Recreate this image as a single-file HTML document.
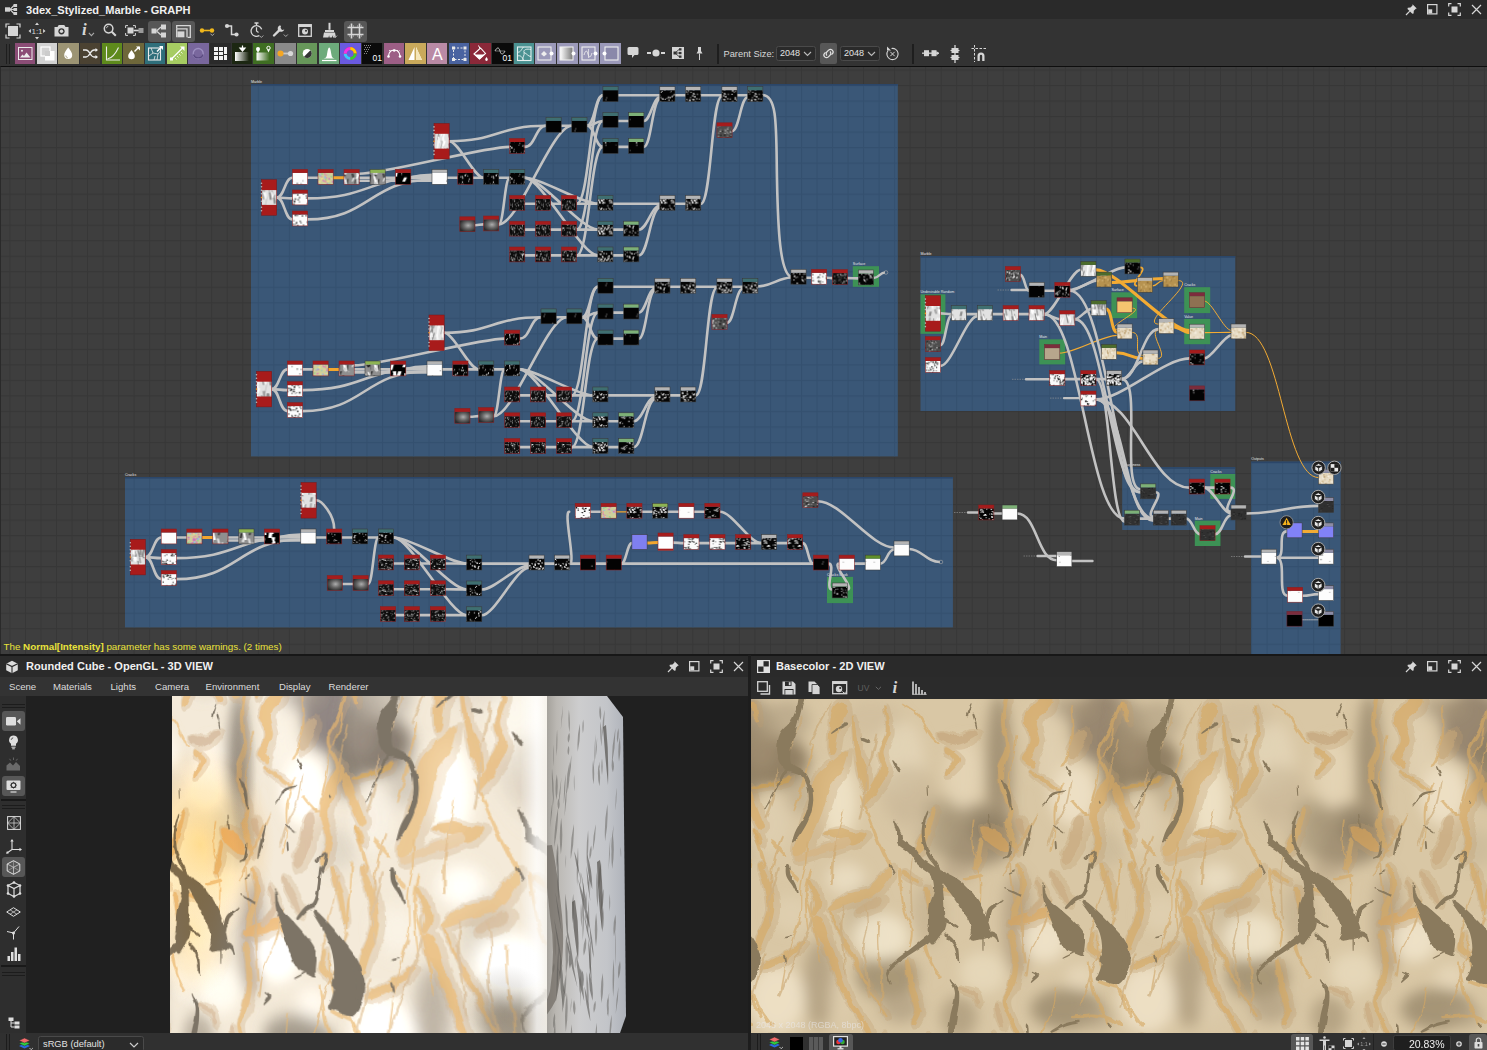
<!DOCTYPE html>
<html><head><meta charset="utf-8"><title>3dex_Stylized_Marble</title>
<style>
html,body{margin:0;padding:0;background:#2b2b2b;overflow:hidden}
body{width:1487px;height:1050px;position:relative;font-family:"Liberation Sans","DejaVu Sans",sans-serif;color:#e6e6e6;font-size:11px}
#titlebar{position:absolute;left:0;top:0;width:1487px;height:19px;background:#2a2a2a}
#tb1{position:absolute;left:0;top:19px;width:1487px;height:47px;background:#333}
#graphwrap{position:absolute;left:0;top:65.5px;width:1487px;height:588.5px;overflow:hidden;border-top:1.2px solid #0e0e0e;border-left:1.2px solid #2a2a2a;box-sizing:border-box}
#graphwrap svg{display:block;margin-top:-0.7px;margin-left:-1.2px}
.fl{font-size:3.6px;fill:#e8e8e8;font-family:"Liberation Sans",sans-serif}
.warn{font-size:9.8px;fill:#e9e23a;font-family:"Liberation Sans",sans-serif}
.ttl{position:absolute;top:0.5px;height:19px;line-height:19px;font-weight:bold;font-size:11.05px;color:#f0f0f0;white-space:nowrap}
.hl{position:absolute;background:#575757;border-radius:3px}
#tb1 svg{overflow:visible}
.cb{position:absolute;top:24px;width:20.5px;height:21px}
.cb svg{display:block}
.combo{position:absolute;box-sizing:border-box;border:1px solid #4a4a4a;border-radius:2.5px;background:#2a2a2a;font-size:9.3px;color:#e2e2e2;line-height:13px}
.combo span{position:absolute;left:4px;top:0}
#sep1{position:absolute;left:0;top:654px;width:1487px;height:1.5px;background:#171717}
#lp{position:absolute;left:0;top:655.5px;width:748px;height:394.5px;background:#2b2b2b}
#rp{position:absolute;left:751px;top:655.5px;width:736px;height:394.5px;background:#2b2b2b}
#vsep{position:absolute;left:748px;top:655px;width:3px;height:395px;background:#1d1d1d}
.ptitle{position:absolute;left:0;top:0;height:21px;background:#2a2a2a}
.ptitle .ttl{height:19px}
#menubar{position:absolute;left:0;top:21px;width:748px;height:19.5px;background:#333}
#menubar span{position:absolute;top:4px;font-size:9.6px;color:#dcdcdc;line-height:12px;white-space:nowrap}
#vp3d{position:absolute;left:26px;top:40.5px;width:722px;height:337px;background:#202020;overflow:hidden}
#ltb{position:absolute;left:0;top:40.5px;width:26px;height:337px;background:#2e2e2e}
#ltb svg{overflow:visible}
.grip{position:absolute;left:2px;width:23px;height:1.3px;background:#1c1c1c}
.vgrip{position:absolute;top:1px;width:1.3px;height:17px;background:#1c1c1c}
.bbar{position:absolute;top:377.5px;height:17px;background:#303030;overflow:hidden}
#tb2d{position:absolute;left:0;top:21px;width:736px;height:22.5px;background:#2b2b2b}
#vp2d{position:absolute;left:0;top:43.5px;width:736px;height:334px;background:#dcc9a8;overflow:hidden}
#res{position:absolute;left:5px;bottom:3px;font-size:9px;color:rgba(235,235,240,0.55);white-space:nowrap}

</style></head><body>
<div id="titlebar">
<svg style="position:absolute;left:4px;top:3px" width="14" height="13" viewBox="0 0 14 13" ><path d="M6 6.5L10 2.5M6 6.5H10.5M6 6.5L10 10.5" stroke="#d0d0d0" stroke-width="1.2" fill="none"/><rect x="1" y="4.3" width="5" height="4.4" fill="#d0d0d0"/><rect x="9.5" y="1" width="3.6" height="3" fill="#d0d0d0"/><rect x="9.5" y="5" width="3.6" height="3" fill="#d0d0d0"/><rect x="9.5" y="9" width="3.6" height="3" fill="#d0d0d0"/></svg>
<span class="ttl" style="left:26px">3dex_Stylized_Marble - GRAPH</span>
<svg style="position:absolute;left:1405px;top:3px" width="13" height="13" viewBox="0 0 13 13" ><path d="M7.500 1.200l4.300 4.300l-1 0.300l-2 2l-0.200 2.700l-1.300 0.300l-4.800-4.800l0.300-1.300l2.700-0.200l2-2z" fill="#d6d6d6"/><path d="M4.800 8.200L1 12" stroke="#d6d6d6" stroke-width="1.200"/></svg><svg style="position:absolute;left:1427px;top:4px" width="11" height="11" viewBox="0 0 11 11" ><rect x="0.600" y="0.600" width="9.300" height="9.300" fill="none" stroke="#d6d6d6" stroke-width="1.200"/><rect x="1.200" y="5.300" width="4" height="4" fill="#d6d6d6"/></svg><svg style="position:absolute;left:1448px;top:3px" width="13" height="13" viewBox="0 0 13 13" ><rect x="3.500" y="3.500" width="6" height="6" fill="#d6d6d6"/><path d="M0.700 3.500V0.700H3.500M9.500 0.700h2.800V3.500M12.300 9.500v2.800H9.500M3.500 12.300H0.700V9.500" stroke="#d6d6d6" stroke-width="1.200" fill="none"/></svg><svg style="position:absolute;left:1471px;top:4px" width="11" height="11" viewBox="0 0 11 11" ><path d="M1 1l9 9M10 1l-9 9" stroke="#d6d6d6" stroke-width="1.200"/></svg>
</div>
<div id="tb1">
<div class="hl" style="left:147.5px;top:2px;width:23px;height:21px"></div>
<div class="hl" style="left:172px;top:2px;width:23px;height:21px"></div>
<div class="hl" style="left:344px;top:2px;width:23px;height:21px"></div>
<svg style="position:absolute;left:5px;top:4px" width="16" height="16" viewBox="0 0 16 16" ><rect x="3" y="3" width="10" height="10" fill="#d6d6d6"/><path d="M1 4.5V1H4.5M11.5 1H15V4.5M15 11.5V15H11.5M4.5 15H1V11.5" stroke="#d6d6d6" stroke-width="1.2" fill="none"/></svg>
<svg style="position:absolute;left:28px;top:3px" width="18" height="18" viewBox="0 0 18 18" ><path d="M9 0.5l2 2.4h-4zM9 17.5l2 -2.4h-4zM0.5 9l2.4 -2v4zM17.5 9l-2.4 -2v4z" fill="#d6d6d6"/><text x="9" y="12" font-size="8" text-anchor="middle" fill="#d6d6d6" font-family="Liberation Sans,sans-serif">1:1</text></svg>
<svg style="position:absolute;left:54px;top:5px" width="15" height="13" viewBox="0 0 15 13" ><path d="M0.5 3h3l1.2-2h5.6l1.2 2h3v9.5h-14z" fill="#d6d6d6"/><circle cx="7.5" cy="7.3" r="3.1" fill="#333"/><circle cx="7.5" cy="7.3" r="1.7" fill="#d6d6d6"/></svg>
<span style="position:absolute;left:82px;top:1px;font:italic bold 17px 'Liberation Serif',serif;color:#d6d6d6">i</span>
<svg style="position:absolute;left:88px;top:13px" width="7" height="5" viewBox="0 0 7 5" ><path d="M0.8 0.8l2.6 2.8l2.6-2.8" stroke="#aaa" stroke-width="1.1" fill="none"/></svg>
<svg style="position:absolute;left:103px;top:4px" width="14" height="14" viewBox="0 0 14 14" ><circle cx="5.6" cy="5.6" r="4.3" stroke="#d6d6d6" stroke-width="1.5" fill="none"/><path d="M8.8 8.8L12.8 12.8" stroke="#d6d6d6" stroke-width="2"/><path d="M3.4 5.2a2.4 2.4 0 0 1 2-2" stroke="#d6d6d6" stroke-width="0.8" fill="none"/></svg>
<svg style="position:absolute;left:125px;top:6px" width="19" height="11" viewBox="0 0 19 11" ><rect x="2.5" y="2.5" width="6" height="6" fill="#d6d6d6"/><path d="M0.6 3V0.6H3M8 0.6h2.4V3M10.4 8v2.4H8M3 10.4H0.6V8" stroke="#d6d6d6" fill="none" stroke-width="1"/><path d="M8.5 5.5H14" stroke="#d6d6d6" stroke-width="1.6"/><rect x="13.5" y="3" width="5" height="5" fill="#9a9a9a"/></svg>
<svg style="position:absolute;left:151px;top:5px" width="16" height="14" viewBox="0 0 16 14" ><rect x="0.5" y="4.5" width="5" height="5" fill="#d6d6d6"/><rect x="10" y="0.5" width="5" height="5" fill="#d6d6d6"/><rect x="10" y="8.5" width="5" height="5" fill="#d6d6d6"/><path d="M5.5 7L10 3M5.5 7L10 11" stroke="#d6d6d6" stroke-width="1.3"/></svg>
<svg style="position:absolute;left:176px;top:6px" width="15" height="13" viewBox="0 0 15 13" ><path d="M0.7 3.4V0.7H14.3V12.3H11.6" stroke="#d6d6d6" fill="none" stroke-width="1.3"/><path d="M0.7 12.3V3.8H11V12.3" stroke="#d6d6d6" fill="none" stroke-width="1.3"/><rect x="1.4" y="6.4" width="7" height="5.9" fill="#d6d6d6"/></svg>
<svg style="position:absolute;left:199px;top:8px" width="18" height="10" viewBox="0 0 18 10" ><path d="M3 3.5H13" stroke="#f0b81c" stroke-width="1.6"/><circle cx="3" cy="3.5" r="2.2" fill="#f0b81c"/><circle cx="13" cy="3.5" r="2.2" fill="#f0b81c"/><path d="M11.5 6.7l1.8 1.9l1.8-1.9" stroke="#aaa" stroke-width="1" fill="none"/></svg>
<svg style="position:absolute;left:224px;top:4px" width="16" height="15" viewBox="0 0 16 15" ><path d="M3 3H7.5V11.5H12.5" stroke="#d6d6d6" stroke-width="1.5" fill="none"/><circle cx="3" cy="3" r="2.1" fill="#d6d6d6"/><circle cx="12.5" cy="11.5" r="2.1" fill="#d6d6d6"/></svg>
<svg style="position:absolute;left:249px;top:3px" width="16" height="17" viewBox="0 0 16 17" ><path d="M5.5 1h4M7.5 1v2" stroke="#d6d6d6" stroke-width="1.3"/><path d="M7.5 5.2V9l2 1.4" stroke="#d6d6d6" stroke-width="1.2" fill="none"/><circle cx="7.5" cy="9" r="5.4" stroke="#d6d6d6" stroke-width="1.3" fill="none" stroke-dasharray="26 8" transform="rotate(60 7.5 9)"/><path d="M10.3 13.5l2 2l2-2" stroke="#aaa" stroke-width="1" fill="none"/></svg>
<svg style="position:absolute;left:272px;top:4px" width="18" height="15" viewBox="0 0 18 15" ><path d="M2 12.5L8.2 6.3" stroke="#d6d6d6" stroke-width="2.4" stroke-linecap="round"/><path d="M8 2.2a3.4 3.4 0 1 0 4.3 4.3l-2.2 0.6l-1.7-1.7l0.6-2.2a3.4 3.4 0 0 0 -1 -1z" fill="#d6d6d6"/><circle cx="10.2" cy="4.4" r="3.5" fill="none"/><path d="M11.8 11.5l2 2l2-2" stroke="#aaa" stroke-width="1" fill="none"/></svg>
<svg style="position:absolute;left:298px;top:5px" width="14" height="13" viewBox="0 0 14 13" ><rect x="0.7" y="0.7" width="12.6" height="11.6" stroke="#d6d6d6" fill="none" stroke-width="1.3"/><rect x="0.7" y="0.7" width="12.6" height="2.3" fill="#d6d6d6"/><circle cx="7" cy="7.6" r="3" fill="#d6d6d6"/><circle cx="8" cy="6.8" r="1" fill="#333"/></svg>
<svg style="position:absolute;left:322px;top:3px" width="17" height="17" viewBox="0 0 17 17" ><path d="M6.5 0.8h2v7h-2z" fill="#d6d6d6"/><path d="M3 8h9v2h-9zM2 10.6h11l1 5h-3l-0.6-2.4l-0.6 2.4h-2.2l-0.5-2.4l-0.6 2.4H1z" fill="#d6d6d6"/><path d="M11.5 13.6l1.8 1.9l1.8-1.9" stroke="#aaa" stroke-width="1" fill="none"/></svg>
<svg style="position:absolute;left:347px;top:4px" width="17" height="16" viewBox="0 0 17 16" ><path d="M4.5 0.5V15.5M12.5 0.5V15.5M0.5 4.5H16.5M0.5 11.5H16.5" stroke="#d6d6d6" stroke-width="1.6" fill="none"/><path d="M2 3l5 0M10 3h5M2 13h5M10 13h5" stroke="#d6d6d6" stroke-width="0.8" stroke-dasharray="1 1"/></svg>
<div style="position:absolute;left:6px;top:25px;width:1.4px;height:20px;background:#1e1e1e"></div><div style="position:absolute;left:8.8px;top:25px;width:1.4px;height:20px;background:#1e1e1e"></div>
<div class="cb" style="left:14.8px;background:#8b4d76"><svg width="20.500" height="21" viewBox="0 0 20.500 21"><rect x="3.5" y="4.5" width="13.5" height="12" fill="none" stroke="#ececec" stroke-width="1"/><path d="M5 14.5l2.5-3l1.5 1.5l2.5-3.5l4 5z" fill="#ececec"/><circle cx="7" cy="7.8" r="1" fill="#ececec"/></svg></div>
<div class="cb" style="left:36.5px;background:#d2d2d2"><svg width="20.500" height="21" viewBox="0 0 20.500 21"><rect x="4" y="4" width="9" height="9" fill="none" stroke="#fff" stroke-width="1.2"/><rect x="8" y="8" width="9.5" height="9.5" fill="#fff"/><rect x="8" y="8" width="5" height="5" fill="#ccc"/></svg></div>
<div class="cb" style="left:58.2px;background:#9c9474"><svg width="20.500" height="21" viewBox="0 0 20.500 21"><path d="M10.2 4.5c2.2 3 4 5 4 7.5a4 4 0 0 1 -8 0c0-2.500 1.800-4.500 4-7.500z" fill="#fff"/><path d="M7.800 12.500a2.500 2.500 0 0 0 2 2.400" stroke="#9c9474" fill="none" stroke-width="0.8"/></svg></div>
<div class="cb" style="left:79.9px;background:#4b4232"><svg width="20.500" height="21" viewBox="0 0 20.500 21"><path d="M3 7h3c4 0 4 7 8 7h3M3 14h3c4 0 4-7 8-7h3" stroke="#ececec" fill="none" stroke-width="1.300"/><path d="M15.500 5l2.500 2l-2.500 2zM15.500 12l2.500 2l-2.500 2z" fill="#ececec"/></svg></div>
<div class="cb" style="left:101.6px;background:#5e8a1c"><svg width="20.500" height="21" viewBox="0 0 20.500 21"><path d="M4.500 3.500V17H18" stroke="#ececec" fill="none" stroke-width="1.100"/><path d="M5.500 16c5-1 8-5 11-11.500" stroke="#ececec" fill="none" stroke-width="1.100"/></svg></div>
<div class="cb" style="left:123.2px;background:#6e673a"><svg width="20.500" height="21" viewBox="0 0 20.500 21"><path d="M8.500 7c1.800 2.500 3.300 4 3.300 6a3.300 3.300 0 0 1 -6.600 0c0-2 1.500-3.500 3.300-6z" fill="#fff"/><path d="M11.500 8.500L16 4" stroke="#fff" stroke-width="1.500"/><path d="M13 3.500h4v4z" fill="#fff"/></svg></div>
<div class="cb" style="left:144.9px;background:#2f6f7b"><svg width="20.500" height="21" viewBox="0 0 20.500 21"><rect x="3.500" y="5" width="12" height="12" fill="none" stroke="#ececec" stroke-width="1.100"/><path d="M6 5l2 5l-4 3M8 10l5 1l2.500-3M13 11l-1 6M9 17l1-4" stroke="#ececec" stroke-width="0.800" fill="none"/><path d="M12 8.500L17 3.500" stroke="#fff" stroke-width="1.500"/><path d="M14 3h4v4z" fill="#fff"/></svg></div>
<div class="cb" style="left:166.6px;background:#a6cc62"><svg width="20.500" height="21" viewBox="0 0 20.500 21"><path d="M4.500 16L16 4.500" stroke="#fff" stroke-width="1.300"/><path d="M13 3.500h4.500v4.500z" fill="#fff"/><rect x="3" y="14.500" width="3" height="3" fill="#fff"/><path d="M8 15l1.500 1.500M10 13l1.500 1.500M12 11l1.500 1.500M14 9l1.500 1.500" stroke="#fff" stroke-width="0.800"/></svg></div>
<div class="cb" style="left:188.3px;background:#79679d"><svg width="20.500" height="21" viewBox="0 0 20.500 21"><circle cx="10.200" cy="10.500" r="5" fill="none" stroke="#9d8fc0" stroke-width="1.300"/><path d="M5.500 11.500a5 5 0 0 0 9.500 0" stroke="#5a4a80" fill="none" stroke-width="1.300"/></svg></div>
<div class="cb" style="left:210.0px;background:#2a2a2a"><svg width="20.500" height="21" viewBox="0 0 20.500 21"><path d="M4 4h4v4h-4zM9 4h4v4h-4zM14 4h3v7h-3zM4 9h4v3h-4zM9 9h4v3h-4zM4 13h4v4h-4zM9 13h4v4h-4zM14 12h3v5h-3z" fill="#f2f2f2"/></svg></div>
<div class="cb" style="left:231.7px;background:#1c2712"><svg width="20.500" height="21" viewBox="0 0 20.500 21"><defs><linearGradient id="gg1" x1="0" x2="1"><stop offset="0" stop-color="#fff"/><stop offset="1" stop-color="#1c2712"/></linearGradient></defs><rect x="3" y="9" width="14" height="9" fill="url(#gg1)"/><path d="M10.500 2.500v4M8 5l2.500 3l2.500-3z" stroke="#fff" stroke-width="1.200" fill="#fff"/></svg></div>
<div class="cb" style="left:253.4px;background:#3f6e22"><svg width="20.500" height="21" viewBox="0 0 20.500 21"><defs><linearGradient id="gg2" x1="0" x2="1"><stop offset="0" stop-color="#fff"/><stop offset="1" stop-color="#3f6e22"/></linearGradient></defs><rect x="3.500" y="9.500" width="13" height="8" fill="url(#gg2)"/><circle cx="5" cy="6" r="2" fill="#fff"/><path d="M5 10l-1.500-3h3z" fill="#fff"/><circle cx="15.500" cy="5" r="1.700" fill="none" stroke="#fff" stroke-width="1"/><path d="M15.500 9.500l-1.500-3h3z" fill="#fff"/></svg></div>
<div class="cb" style="left:275.1px;background:#8a8a8a"><svg width="20.500" height="21" viewBox="0 0 20.500 21"><path d="M5 10.500H16" stroke="#c9c9c9" stroke-width="1.800"/><circle cx="5.500" cy="10.500" r="3" fill="#f5a623"/><circle cx="15.500" cy="10.500" r="2.600" fill="#d8d8d8"/></svg></div>
<div class="cb" style="left:296.8px;background:#67975a"><svg width="20.500" height="21" viewBox="0 0 20.500 21"><circle cx="10.200" cy="10.500" r="4.500" fill="#fff"/><path d="M7 13.700a4.500 4.500 0 0 0 6.400-6.400z" fill="#333"/></svg></div>
<div class="cb" style="left:318.5px;background:#6dab7b"><svg width="20.500" height="21" viewBox="0 0 20.500 21"><path d="M3.500 15.500c3 0 4-1 4.500-4c0.500-3 1-7 2.200-7s1.700 4 2.200 7c0.500 3 1.500 4 4.500 4z" fill="#fff"/><path d="M3 17.500h14.500" stroke="#fff" stroke-width="1.200"/></svg></div>
<div class="cb" style="left:340.2px;background:#6a5ae0"><svg width="20.500" height="21" viewBox="0 0 20.500 21"><circle cx="10.200" cy="10.500" r="5" fill="none" stroke="#e33" stroke-width="3"/><path d="M10.200 5.500a5 5 0 0 1 5 5" stroke="#fc0" stroke-width="3" fill="none"/><path d="M15.200 10.500a5 5 0 0 1 -5 5" stroke="#3c3" stroke-width="3" fill="none"/><path d="M10.200 15.500a5 5 0 0 1 -5-5" stroke="#3cf" stroke-width="3" fill="none"/><path d="M5.200 10.500a5 5 0 0 1 5-5" stroke="#e3e" stroke-width="3" fill="none"/></svg></div>
<div class="cb" style="left:361.8px;background:#0b0b0b"><svg width="20.500" height="21" viewBox="0 0 20.500 21"><path d="M2 2l1 1M4 2l1 1M6 2l1 1M8 2l1 1M3 4l1 1M5 4l1 1M7 4l1 1M2 6l1 1M4 6l1 1M6 6l1 1M3 8l1 1M5 8l1 1M2 10l1 1M4 10l1 1" stroke="#aaa" stroke-width="0.800"/><text x="10.500" y="18" font-size="8.500" fill="#fff" font-family="Liberation Sans,sans-serif">01</text></svg></div>
<div class="cb" style="left:383.5px;background:#9d5f86"><svg width="20.500" height="21" viewBox="0 0 20.500 21"><path d="M4.500 13c1-8 10.500-8 11.500 0" stroke="#fff" fill="none" stroke-width="1.100"/><path d="M5 7.500h10.500" stroke="#fff" stroke-width="0.800" stroke-dasharray="1.500 1"/><circle cx="4.500" cy="13.500" r="1.300" fill="#fff"/><circle cx="16" cy="13.500" r="1.300" fill="#fff"/><circle cx="10.200" cy="7.500" r="1.300" fill="#fff"/></svg></div>
<div class="cb" style="left:405.2px;background:#c9a95b"><svg width="20.500" height="21" viewBox="0 0 20.500 21"><path d="M9.500 4v13h-6zM11 4v13h6z" fill="#fff"/><path d="M11 4v13h6z" fill="#f5e6b8"/></svg></div>
<div class="cb" style="left:426.9px;background:#b98aa5"><svg width="20.500" height="21" viewBox="0 0 20.500 21"><text x="10.300" y="17" font-size="16" text-anchor="middle" fill="#fff" font-family="Liberation Sans,sans-serif">A</text></svg></div>
<div class="cb" style="left:448.6px;background:#4a63a0"><svg width="20.500" height="21" viewBox="0 0 20.500 21"><rect x="4.500" y="5" width="11.500" height="11.500" fill="none" stroke="#e8e8e8" stroke-width="1" stroke-dasharray="2 1.500"/><rect x="3" y="3.500" width="3" height="3" fill="#e8e8e8"/><rect x="14.500" y="3.500" width="3" height="3" fill="#e8e8e8"/><rect x="3" y="15" width="3" height="3" fill="#e8e8e8"/><rect x="14.500" y="15" width="3" height="3" fill="#e8e8e8"/></svg></div>
<div class="cb" style="left:470.3px;background:#8b2839"><svg width="20.500" height="21" viewBox="0 0 20.500 21"><path d="M4 11l6.500-6l5 5.500l-6 5.500z" fill="none" stroke="#fff" stroke-width="1.100"/><path d="M4.500 11.500h10.500l-5.500 5z" fill="#fff"/><path d="M10 5.500L8.500 2.500" stroke="#fff" stroke-width="1"/><path d="M16.500 14c0.800 1.200 1.300 1.800 1.300 2.600a1.300 1.300 0 0 1 -2.600 0c0-0.800 0.500-1.400 1.300-2.600z" fill="#fff"/></svg></div>
<div class="cb" style="left:492.0px;background:#0a0a0a"><svg width="20.500" height="21" viewBox="0 0 20.500 21"><path d="M3 8c2-4 4-4 5 0s3 4 5 0" stroke="#ddd" fill="none" stroke-width="0.900"/><path d="M3 8h10" stroke="#aaa" stroke-width="0.600"/><text x="10.500" y="18" font-size="8.500" fill="#fff" font-family="Liberation Sans,sans-serif">01</text></svg></div>
<div class="cb" style="left:513.7px;background:#4b9292"><svg width="20.500" height="21" viewBox="0 0 20.500 21"><rect x="3.500" y="4" width="13.500" height="13.500" fill="none" stroke="#e6f0f0" stroke-width="1.100"/><path d="M3.500 9c3 1 4-3 6-5M9 17.500c-1-4 2-5 1-8s3-4 7-3M3.500 13c3-1 5 1 6 4.500M10 9.500c3 1 4 4 7 4" stroke="#e6f0f0" fill="none" stroke-width="0.900"/></svg></div>
<div class="cb" style="left:535.4px;background:#9b99b9"><svg width="20.500" height="21" viewBox="0 0 20.500 21"><rect x="3" y="4" width="13" height="13" fill="none" stroke="#eee" stroke-width="1.100"/><circle cx="16.500" cy="10.500" r="2" fill="#fff"/><path d="M6 11l3-3l3 3l-3 2.500z" fill="#eee"/></svg></div>
<div class="cb" style="left:557.0px;background:#9b99b9"><svg width="20.500" height="21" viewBox="0 0 20.500 21"><defs><linearGradient id="gg3" x1="0" x2="1"><stop offset="0" stop-color="#fff"/><stop offset="1" stop-color="#777"/></linearGradient></defs><rect x="3" y="4" width="13" height="13" fill="url(#gg3)" stroke="#eee" stroke-width="1.100"/><circle cx="16.500" cy="10.500" r="2" fill="#fff"/></svg></div>
<div class="cb" style="left:578.7px;background:#9b99b9"><svg width="20.500" height="21" viewBox="0 0 20.500 21"><rect x="3" y="4" width="13" height="13" fill="none" stroke="#eee" stroke-width="1.100"/><circle cx="16.500" cy="10.500" r="2" fill="#fff"/><path d="M5 12c1.500-5 3-5 4-1s2.500 4 4-1" stroke="#eee" fill="none" stroke-width="0.900"/><path d="M9.500 6v9" stroke="#eee" stroke-width="0.700"/></svg></div>
<div class="cb" style="left:600.4px;background:#9b99b9"><svg width="20.500" height="21" viewBox="0 0 20.500 21"><rect x="5" y="4" width="13" height="13" fill="#8a88aa" stroke="#eee" stroke-width="1.100"/><circle cx="4.500" cy="10.500" r="2" fill="#fff"/></svg></div>
<svg style="position:absolute;left:626px;top:27px" width="14" height="14" viewBox="0 0 14 14" ><path d="M1.500 2.500a1.500 1.500 0 0 1 1.500-1.500h8a1.500 1.500 0 0 1 1.500 1.500v5a1.500 1.500 0 0 1 -1.500 1.500h-2.500l-2.500 3v-3h-3a1.500 1.500 0 0 1 -1.500-1.500z" fill="#d6d6d6"/></svg>
<svg style="position:absolute;left:646px;top:29px" width="20" height="10" viewBox="0 0 20 10" ><path d="M1 5h4M15 5h4" stroke="#d6d6d6" stroke-width="1.800"/><circle cx="10" cy="5" r="3.600" fill="#d6d6d6"/></svg>
<svg style="position:absolute;left:671px;top:27px" width="14" height="14" viewBox="0 0 14 14" ><rect x="1" y="1" width="12" height="12" fill="#d6d6d6"/><path d="M4 7l4-3.500M4 7h4M4 7l4 3.500" stroke="#333" stroke-width="0.900"/><rect x="2.500" y="5.500" width="3" height="3" fill="#333"/><rect x="8" y="2.200" width="2.500" height="2.300" fill="#333"/><rect x="8" y="5.900" width="2.500" height="2.300" fill="#333"/><rect x="8" y="9.500" width="2.500" height="2.300" fill="#333"/></svg>
<svg style="position:absolute;left:694px;top:27px" width="11" height="15" viewBox="0 0 11 15" ><path d="M4 1h3v4l1.500 2.500h-6l1.500-2.500z" fill="#d6d6d6"/><path d="M5.500 7.500v6.500" stroke="#d6d6d6" stroke-width="1"/></svg>
<div style="position:absolute;left:717px;top:25px;width:1.500px;height:20px;background:#1e1e1e"></div>
<span style="position:absolute;left:723.500px;top:29px;font-size:9.300px;color:#d8d8d8;white-space:nowrap;line-height:12px">Parent Size:</span>
<div class="combo" style="left:776px;top:27px;width:39.500px;height:15px"><span style="left:3px;font-size:9px">2048</span><svg width="9" height="6" viewBox="0 0 9 6" style="position:absolute;right:2.800px;top:4px"><path d="M1 1l3.500 3.500l3.500-3.500" stroke="#bbb" stroke-width="1.100" fill="none"/></svg></div>
<div class="combo" style="left:840px;top:27px;width:39.500px;height:15px"><span style="left:3px;font-size:9px">2048</span><svg width="9" height="6" viewBox="0 0 9 6" style="position:absolute;right:2.800px;top:4px"><path d="M1 1l3.500 3.500l3.500-3.500" stroke="#bbb" stroke-width="1.100" fill="none"/></svg></div>
<div class="hl" style="left:820px;top:24px;width:16.500px;height:21px;border-radius:2px"></div>
<svg style="position:absolute;left:822px;top:29px" width="13" height="11" viewBox="0 0 13 11" ><path d="M5 7.500a2.600 2.600 0 0 1 0-3.700l1.600-1.600a2.600 2.600 0 0 1 3.700 3.700l-0.800 0.800M8 3.500a2.600 2.600 0 0 1 0 3.700l-1.600 1.600a2.600 2.600 0 0 1 -3.700-3.700l0.800-0.800" stroke="#e0e0e0" stroke-width="1.200" fill="none"/></svg>
<svg style="position:absolute;left:885px;top:27px" width="15" height="15" viewBox="0 0 15 15" ><circle cx="7.500" cy="8" r="5.600" stroke="#d6d6d6" stroke-width="1.100" fill="none" stroke-dasharray="30 5" transform="rotate(-100 7.500 8)"/><path d="M2 0.500v4h4z" fill="#d6d6d6"/><path d="M5.300 5.800l4.400 4.400M9.700 5.800l-4.400 4.400" stroke="#d6d6d6" stroke-width="1"/></svg>
<div style="position:absolute;left:912px;top:25px;width:1.500px;height:20px;background:#1e1e1e"></div>
<svg style="position:absolute;left:922px;top:30px" width="17" height="9" viewBox="0 0 17 9" ><rect x="2" y="1.200" width="5" height="6" fill="#d6d6d6"/><rect x="9.500" y="1.200" width="5" height="6" fill="#d6d6d6"/><path d="M0 4.200h17" stroke="#d6d6d6" stroke-width="1.300"/><path d="M14.500 2l2.500 2.200l-2.500 2.200z" fill="#d6d6d6"/></svg>
<svg style="position:absolute;left:950px;top:26px" width="10" height="18" viewBox="0 0 10 18" ><rect x="1.500" y="3" width="7" height="5" fill="#d6d6d6"/><rect x="1.500" y="10" width="7" height="5" fill="#d6d6d6"/><path d="M5 0v18" stroke="#d6d6d6" stroke-width="1.300"/><path d="M0.500 5.500h2M7.500 5.500h2M0.500 12.500h2M7.500 12.500h2" stroke="#d6d6d6" stroke-width="1"/></svg>
<svg style="position:absolute;left:971px;top:26px" width="17" height="18" viewBox="0 0 17 18" ><path d="M3.500 0v17M0.500 3.500h16" stroke="#d6d6d6" stroke-width="1" stroke-dasharray="2.500 1.500"/><path d="M6.500 16v-5a3.500 3.500 0 0 1 7 0v5h-2.300v-5a1.200 1.200 0 0 0 -2.400 0v5z" fill="#d6d6d6"/></svg>
</div>
<div id="graphwrap"><svg id="graph" width="1487" height="588" viewBox="0 66 1487 588">
<defs>
<pattern id="grid" patternUnits="userSpaceOnUse" x="9.46" y="69.44" width="15.52" height="15.52"><path d="M0.5 0V15.52M0 0.5H15.52" stroke="#373737" stroke-width="1.2" fill="none"/></pattern>
<pattern id="gridb" patternUnits="userSpaceOnUse" x="9.46" y="69.44" width="15.52" height="15.52"><path d="M0.5 0V15.52M0 0.5H15.52" stroke="#34506f" stroke-width="1.2" fill="none"/></pattern>
<pattern id="pw" patternUnits="userSpaceOnUse" width="30.94" height="30.94"><rect width="30.94" height="30.94" fill="#fdfdfd"/><path d="M7.4 16.8h1.0v1.2h-1.0zM18.7 28.1h1.1v1.2h-1.1zM30.8 14.5h1.5v1.1h-1.5zM7.2 4.7h1.5v1.1h-1.5z" fill="#bbb"/><path d="M20.8 2.0h1.4v1.2h-1.4zM24.1 25.5h0.9v1.2h-0.9zM22.1 28.5h1.1v1.4h-1.1zM29.8 4.2h1.0v0.7h-1.0zM6.7 29.9h1.1v1.3h-1.1zM13.0 25.8h1.2v1.2h-1.2zM18.1 28.0h1.3v1.5h-1.3z" fill="#888"/></pattern><pattern id="pws" patternUnits="userSpaceOnUse" width="30.94" height="30.94"><rect width="30.94" height="30.94" fill="#fdfdfd"/><path d="M13.2 12.8h0.8v1.3h-0.8zM4.8 1.3h1.6v1.0h-1.6zM30.6 9.7h1.1v1.3h-1.1zM7.4 5.8h1.1v1.4h-1.1zM18.6 29.4h1.4v0.9h-1.4zM14.4 19.6h1.0v1.3h-1.0zM30.5 13.4h1.7v1.6h-1.7zM28.6 27.7h1.6v1.3h-1.6zM14.9 3.7h1.2v0.9h-1.2zM3.9 30.1h1.2v1.5h-1.2zM10.9 6.1h1.2v1.5h-1.2zM7.4 8.5h1.6v0.8h-1.6zM15.1 17.7h1.1v1.5h-1.1zM8.3 16.3h1.1v1.2h-1.1zM0.1 22.4h1.5v1.3h-1.5zM11.5 18.7h1.5v1.1h-1.5zM9.7 29.4h1.1v0.7h-1.1zM4.4 24.0h0.7v0.8h-0.7zM20.4 11.6h1.5v1.0h-1.5zM1.9 10.0h1.3v1.5h-1.3zM7.8 18.5h1.6v1.3h-1.6zM11.6 7.3h1.6v1.5h-1.6zM15.0 19.9h1.6v0.8h-1.6zM27.5 9.5h1.0v1.5h-1.0zM5.3 11.2h1.0v1.5h-1.0zM2.2 29.3h1.5v1.6h-1.5zM5.3 1.4h0.9v0.8h-0.9zM20.5 20.7h1.6v1.5h-1.6zM23.3 29.7h1.4v1.2h-1.4zM17.5 5.6h1.3v1.3h-1.3zM12.1 3.1h1.0v0.8h-1.0zM27.1 29.2h1.1v1.5h-1.1z" fill="#111"/><path d="M8.3 3.9h1.2v1.3h-1.2zM2.7 24.8h1.1v0.9h-1.1zM11.7 18.1h1.3v1.6h-1.3zM16.6 29.4h1.7v1.0h-1.7zM8.4 19.6h1.4v1.6h-1.4zM30.3 16.1h1.2v0.7h-1.2zM1.9 19.4h1.2v1.4h-1.2zM21.2 4.1h1.2v1.4h-1.2zM2.5 23.0h0.9v1.3h-0.9zM10.7 4.0h1.0v1.5h-1.0zM1.0 14.1h1.5v1.4h-1.5zM16.8 27.5h1.6v1.6h-1.6zM16.2 12.8h1.6v1.3h-1.6zM26.5 24.0h0.7v0.7h-0.7zM30.2 26.4h0.8v1.2h-0.8zM4.9 2.2h1.1v1.1h-1.1zM16.6 21.5h0.8v1.1h-0.8zM9.9 16.5h1.5v1.4h-1.5zM0.8 3.6h1.2v1.4h-1.2zM30.9 20.0h1.2v1.4h-1.2zM16.0 28.9h1.6v1.2h-1.6zM20.8 26.5h1.3v1.3h-1.3zM2.1 6.7h1.0v1.6h-1.0zM4.3 19.2h1.4v0.7h-1.4zM3.6 8.2h1.6v0.7h-1.6zM18.0 20.9h0.7v1.0h-0.7zM11.7 2.4h1.3v1.4h-1.3zM29.1 11.6h1.5v1.5h-1.5zM1.3 15.6h0.9v1.5h-0.9z" fill="#444"/><path d="M30.7 20.8h0.9v1.6h-0.9zM28.0 17.6h1.4v0.9h-1.4zM15.6 30.9h1.0v0.8h-1.0zM27.7 11.7h1.2v1.2h-1.2zM26.8 21.1h0.8v1.7h-0.8zM18.8 8.6h1.2v1.3h-1.2zM0.7 11.4h1.3v1.0h-1.3zM9.9 11.3h1.0v1.1h-1.0zM8.2 24.4h0.8v1.5h-0.8zM7.0 3.7h1.2v0.9h-1.2zM5.7 8.6h1.5v1.3h-1.5zM28.5 4.8h0.7v1.6h-0.7zM3.7 7.6h0.7v1.5h-0.7zM11.2 5.9h1.0v0.8h-1.0zM19.3 13.4h1.1v1.2h-1.1zM4.0 0.9h1.0v1.7h-1.0zM24.5 8.1h1.2v0.8h-1.2zM20.5 27.5h1.5v1.4h-1.5zM17.9 24.7h0.7v1.5h-0.7zM16.4 7.4h1.3v0.8h-1.3zM12.8 17.6h1.3v1.6h-1.3zM15.4 15.0h1.4v1.7h-1.4zM22.2 5.8h1.0v0.9h-1.0zM12.9 21.6h1.4v0.9h-1.4zM25.8 25.4h1.3v1.2h-1.3zM14.5 7.1h0.9v1.4h-0.9zM12.1 16.8h0.8v1.0h-0.8zM13.4 13.6h1.2v1.0h-1.2zM20.6 15.7h0.8v1.0h-0.8zM11.5 28.5h1.2v0.8h-1.2zM4.4 10.3h1.4v1.3h-1.4zM9.3 5.8h1.2v1.5h-1.2zM2.1 22.1h1.5v1.2h-1.5z" fill="#000"/></pattern><pattern id="pb" patternUnits="userSpaceOnUse" width="30.94" height="30.94"><rect width="30.94" height="30.94" fill="#030303"/><path d="M10.9 26.2h0.8v0.9h-0.8zM21.1 17.5h1.5v0.8h-1.5zM17.5 20.7h1.1v1.6h-1.1zM18.3 4.5h1.1v0.9h-1.1zM17.6 6.3h0.9v1.4h-0.9zM27.7 20.7h0.7v0.9h-0.7z" fill="#888"/><path d="M26.1 13.8h1.1v1.4h-1.1zM17.1 18.0h1.3v1.6h-1.3zM3.3 23.4h0.9v0.9h-0.9zM6.2 24.2h0.9v1.4h-0.9zM3.5 8.8h1.3v0.8h-1.3z" fill="#ccc"/></pattern><pattern id="pbs" patternUnits="userSpaceOnUse" width="30.94" height="30.94"><rect width="30.94" height="30.94" fill="#030303"/><path d="M24.5 19.3h0.7v1.0h-0.7zM24.0 1.1h0.8v1.6h-0.8zM26.3 13.9h1.0v1.1h-1.0zM6.0 6.5h0.9v1.1h-0.9zM19.7 4.3h1.2v1.1h-1.2zM22.1 7.4h0.7v1.1h-0.7zM7.5 12.0h0.9v1.0h-0.9zM0.1 0.9h0.8v0.9h-0.8zM13.6 13.8h1.3v1.0h-1.3zM1.3 5.3h1.4v1.4h-1.4zM20.0 30.8h0.7v0.9h-0.7zM10.5 9.6h1.1v1.4h-1.1zM24.2 14.5h1.3v0.7h-1.3zM22.5 2.4h1.0v1.1h-1.0zM28.6 21.2h1.0v1.4h-1.0zM14.3 22.0h1.5v1.0h-1.5zM14.5 18.2h0.7v1.6h-0.7zM4.4 13.7h1.5v1.1h-1.5zM30.9 6.9h1.6v1.0h-1.6zM14.3 27.4h1.4v1.0h-1.4zM28.8 16.1h0.7v1.3h-0.7zM5.7 0.4h1.1v1.0h-1.1zM23.2 10.4h0.8v0.7h-0.8zM14.1 24.8h1.1v1.6h-1.1zM17.9 4.3h0.7v1.1h-0.7zM30.3 2.5h0.9v0.9h-0.9zM21.6 3.6h1.3v0.8h-1.3z" fill="#fff"/><path d="M15.7 15.4h0.7v1.0h-0.7zM28.8 26.7h1.1v1.4h-1.1zM5.0 15.4h1.3v1.2h-1.3zM12.4 5.6h1.5v1.3h-1.5zM10.7 3.8h0.7v1.4h-0.7zM30.4 29.1h1.4v1.6h-1.4zM7.7 8.2h1.4v1.3h-1.4zM14.9 5.9h1.2v1.0h-1.2zM10.5 14.8h1.0v1.3h-1.0zM9.4 18.8h1.6v0.8h-1.6zM11.9 29.0h1.0v0.9h-1.0zM15.7 23.3h1.5v1.3h-1.5zM18.5 26.6h0.8v1.5h-0.8zM3.4 15.0h1.3v1.3h-1.3zM13.7 11.7h0.8v0.7h-0.8zM18.7 6.6h1.0v1.6h-1.0zM27.9 29.4h1.1v1.4h-1.1zM1.9 14.6h0.9v0.9h-0.9zM13.4 10.7h1.4v1.4h-1.4zM16.6 5.1h0.7v0.9h-0.7zM11.0 29.9h1.0v1.2h-1.0zM24.8 12.9h0.9v0.7h-0.9zM0.5 19.9h1.5v1.5h-1.5zM4.3 25.7h0.8v1.4h-0.8zM18.5 3.6h0.8v1.4h-0.8zM13.9 9.6h1.0v1.3h-1.0zM9.8 8.4h1.6v1.5h-1.6zM18.9 17.2h0.7v1.1h-0.7zM29.1 30.1h1.3v1.1h-1.3zM14.3 9.0h1.2v0.9h-1.2zM29.6 4.5h1.5v0.9h-1.5z" fill="#ddd"/><path d="M26.9 21.5h0.8v1.5h-0.8zM9.8 24.3h1.1v1.5h-1.1zM6.4 15.1h0.7v1.1h-0.7zM24.9 8.0h1.0v1.5h-1.0zM1.8 0.7h1.1v1.1h-1.1zM9.8 1.8h1.1v0.8h-1.1zM5.7 12.8h1.2v1.2h-1.2zM21.0 28.7h0.9v1.4h-0.9zM23.5 21.0h0.8v0.9h-0.8zM1.7 18.9h0.7v1.1h-0.7zM7.4 1.5h0.8v1.3h-0.8zM30.5 3.5h1.0v0.9h-1.0zM16.0 15.6h1.5v1.0h-1.5zM2.7 14.4h0.9v1.4h-0.9zM18.7 13.8h0.8v1.5h-0.8zM7.3 13.6h0.9v1.0h-0.9zM28.8 22.5h1.5v1.6h-1.5zM5.7 3.0h1.4v1.0h-1.4zM4.7 23.6h1.3v1.6h-1.3zM11.5 5.0h1.0v1.1h-1.0zM18.7 25.1h1.1v0.9h-1.1zM1.2 30.8h0.8v1.4h-0.8zM7.7 4.2h1.4v1.4h-1.4zM16.1 23.3h1.5v1.6h-1.5zM12.8 16.0h0.9v0.9h-0.9zM25.6 28.8h1.3v0.7h-1.3zM3.2 20.7h1.0v1.2h-1.0z" fill="#999"/></pattern><pattern id="pn" patternUnits="userSpaceOnUse" width="30.94" height="30.94"><rect width="30.94" height="30.94" fill="#0c0c0c"/><path d="M16.5 11.8h0.7v0.9h-0.7zM30.5 16.4h0.9v1.0h-0.9zM27.4 6.5h0.9v0.7h-0.9zM7.0 4.3h0.8v1.0h-0.8zM13.5 3.0h1.3v1.1h-1.3zM2.0 27.1h1.1v0.8h-1.1zM27.0 6.7h1.2v1.3h-1.2zM28.7 15.5h1.2v0.8h-1.2zM10.1 7.6h1.2v1.1h-1.2zM11.6 1.3h0.8v1.0h-0.8zM8.0 2.7h0.7v1.1h-0.7zM17.1 20.5h0.9v0.7h-0.9zM7.1 12.9h0.7v0.8h-0.7zM16.9 18.5h0.8v0.6h-0.8zM15.2 24.1h1.2v0.8h-1.2zM19.5 2.6h1.1v1.0h-1.1zM17.3 12.1h0.9v1.0h-0.9zM27.2 23.7h0.6v0.9h-0.6zM28.3 6.0h1.2v1.2h-1.2zM30.3 4.3h1.1v1.2h-1.1zM15.4 19.4h1.0v0.6h-1.0zM18.3 10.6h1.0v0.7h-1.0zM23.9 25.8h0.7v1.1h-0.7zM10.7 6.7h0.7v1.0h-0.7zM24.6 24.1h0.8v1.1h-0.8zM22.8 29.8h0.8v0.9h-0.8zM26.0 26.2h1.2v1.3h-1.2zM23.0 24.6h1.3v1.1h-1.3zM3.4 23.6h1.1v0.7h-1.1zM23.0 19.2h1.1v1.1h-1.1zM10.6 2.0h1.0v0.9h-1.0zM10.7 0.2h0.6v0.7h-0.6zM5.3 11.3h1.2v0.9h-1.2zM13.0 11.3h0.6v1.3h-0.6zM5.7 28.1h0.8v0.9h-0.8zM11.4 11.0h1.0v0.8h-1.0zM26.9 8.2h0.8v1.2h-0.8zM5.0 26.5h1.1v1.1h-1.1zM6.0 11.0h1.3v1.1h-1.3zM25.2 11.0h1.2v0.9h-1.2zM14.4 6.0h1.1v0.9h-1.1zM16.5 2.7h0.9v1.0h-0.9zM21.6 17.2h0.9v0.6h-0.9zM14.5 26.7h1.2v1.3h-1.2zM9.0 25.8h0.7v1.2h-0.7zM0.6 11.1h0.6v0.7h-0.6zM0.8 8.7h1.1v1.3h-1.1zM10.6 26.1h0.8v1.1h-0.8zM12.1 2.6h1.0v0.9h-1.0z" fill="#fff"/><path d="M20.9 20.0h0.7v0.6h-0.7zM9.6 20.1h0.7v0.7h-0.7zM25.8 6.2h1.0v1.3h-1.0zM9.3 26.6h1.3v0.8h-1.3zM4.0 18.7h0.6v1.0h-0.6zM5.6 18.6h0.8v1.3h-0.8zM8.7 29.9h0.9v0.9h-0.9zM12.9 17.0h1.0v0.8h-1.0zM26.4 11.9h1.3v0.9h-1.3zM4.5 6.8h0.9v1.0h-0.9zM16.7 28.5h1.0v1.1h-1.0zM11.8 15.2h1.3v0.9h-1.3zM29.6 1.6h1.0v1.2h-1.0zM8.8 30.4h1.1v1.0h-1.1zM19.2 11.0h1.1v1.2h-1.1zM8.1 21.5h0.8v0.7h-0.8zM9.4 5.4h0.7v0.9h-0.7zM1.7 24.3h1.2v0.9h-1.2zM10.5 22.7h1.0v0.7h-1.0zM3.3 1.7h0.9v0.7h-0.9zM11.4 21.1h0.8v1.1h-0.8zM27.9 3.0h1.1v1.1h-1.1zM30.5 10.3h0.7v1.2h-0.7zM4.8 1.0h0.9v0.6h-0.9zM13.2 8.9h0.7v0.8h-0.7zM16.0 10.1h1.3v0.7h-1.3zM19.4 13.6h0.8v0.6h-0.8zM28.7 18.0h1.0v0.9h-1.0zM12.6 20.1h0.7v1.1h-0.7zM2.6 23.0h1.0v1.1h-1.0zM14.8 6.3h0.8v0.6h-0.8zM11.3 22.4h0.8v0.8h-0.8zM19.0 14.7h0.6v1.0h-0.6zM3.2 6.6h1.2v1.0h-1.2zM8.7 2.7h1.2v0.8h-1.2zM25.4 2.2h0.8v0.7h-0.8zM17.2 0.6h0.9v1.1h-0.9zM5.8 30.4h0.7v1.2h-0.7zM19.1 15.3h1.0v0.9h-1.0zM24.2 12.2h0.7v1.2h-0.7zM29.7 28.1h0.8v1.3h-0.8zM12.6 1.4h1.1v0.9h-1.1zM23.5 12.1h0.7v1.1h-0.7zM9.6 11.0h1.1v0.7h-1.1zM24.9 14.6h1.1v0.9h-1.1zM26.8 1.5h0.7v1.0h-0.7zM6.1 7.0h1.2v0.7h-1.2zM2.2 15.0h1.1v0.7h-1.1zM19.9 8.6h1.2v0.6h-1.2zM19.2 25.4h0.8v0.6h-0.8zM4.9 19.2h0.9v1.1h-0.9zM13.5 15.5h0.8v0.9h-0.8zM7.0 27.4h1.3v0.8h-1.3zM18.6 3.5h0.8v0.9h-0.8zM2.7 28.7h0.6v1.3h-0.6zM9.9 17.9h1.0v1.0h-1.0zM29.5 19.6h0.8v1.1h-0.8zM4.7 21.2h1.1v1.0h-1.1z" fill="#bbb"/><path d="M8.7 4.1h0.7v0.7h-0.7zM29.0 18.7h1.3v0.6h-1.3zM3.5 0.4h1.2v1.2h-1.2zM10.1 18.3h0.8v0.9h-0.8zM19.7 18.3h1.1v1.1h-1.1zM26.7 25.8h0.8v1.3h-0.8zM25.5 18.5h0.7v0.6h-0.7zM12.0 15.8h0.9v1.0h-0.9zM10.0 28.2h1.0v0.7h-1.0zM17.7 10.6h1.0v1.0h-1.0zM7.3 11.4h0.8v0.8h-0.8zM18.5 13.1h0.7v0.8h-0.7zM21.7 30.2h1.0v1.0h-1.0zM16.8 30.6h1.2v1.1h-1.2zM5.3 12.2h0.7v0.9h-0.7zM3.7 17.1h0.7v0.9h-0.7zM12.3 2.0h0.8v0.8h-0.8zM3.6 29.3h0.9v0.9h-0.9zM20.6 7.6h0.8v0.8h-0.8zM5.1 20.6h0.8v1.0h-0.8zM15.6 29.5h1.2v1.1h-1.2zM8.0 19.4h1.0v1.3h-1.0zM2.2 21.1h0.9v0.6h-0.9zM12.0 24.9h0.9v1.1h-0.9zM20.5 22.8h1.0v0.9h-1.0zM24.8 5.5h0.9v1.0h-0.9zM9.5 16.1h0.8v1.0h-0.8zM15.3 11.2h0.9v0.7h-0.9zM10.0 14.9h1.0v1.2h-1.0zM30.9 1.5h0.9v0.9h-0.9zM27.0 10.3h1.1v0.7h-1.1zM15.7 9.2h1.2v1.3h-1.2zM14.1 7.8h1.0v0.9h-1.0zM25.6 16.3h0.9v0.7h-0.9zM20.6 3.3h1.2v0.9h-1.2zM0.8 27.0h0.8v0.7h-0.8zM1.5 24.1h1.0v0.6h-1.0zM17.5 16.6h0.6v0.7h-0.6zM30.4 5.1h1.0v1.0h-1.0zM4.2 22.5h1.2v1.2h-1.2zM7.5 28.1h1.0v0.8h-1.0zM25.4 28.5h1.0v0.6h-1.0zM13.6 1.7h1.0v1.0h-1.0zM19.3 7.4h1.1v0.7h-1.1zM9.3 18.5h1.2v1.0h-1.2zM0.4 16.9h1.1v0.8h-1.1zM26.0 28.8h1.1v1.0h-1.1zM21.3 26.1h0.6v0.8h-0.6zM27.0 20.5h0.9v1.2h-0.9zM4.8 10.6h0.7v1.3h-0.7zM20.2 6.6h1.1v1.0h-1.1zM26.4 1.0h1.2v1.0h-1.2zM8.2 2.1h0.8v1.0h-0.8zM23.5 25.5h1.0v1.0h-1.0zM24.1 3.4h0.7v0.6h-0.7zM20.8 26.2h0.7v0.7h-0.7zM27.2 26.5h1.2v1.0h-1.2zM26.4 25.4h1.1v0.9h-1.1zM12.0 29.8h1.0v1.3h-1.0zM24.4 9.4h1.1v1.0h-1.1zM27.2 2.5h1.3v1.0h-1.3zM9.2 22.8h1.0v0.8h-1.0zM13.9 7.6h1.2v1.1h-1.2z" fill="#777"/><path d="M30.8 30.3h0.8v0.8h-0.8zM3.2 26.2h0.9v1.1h-0.9zM17.6 14.4h1.0v0.9h-1.0zM16.3 23.7h0.7v1.0h-0.7zM1.7 15.3h0.7v1.1h-0.7zM22.0 11.2h0.8v1.0h-0.8zM13.6 28.1h1.1v0.7h-1.1zM13.7 21.1h0.7v1.2h-0.7zM19.9 27.3h0.8v0.8h-0.8zM17.8 2.6h0.8v0.9h-0.8zM13.8 22.3h1.2v1.0h-1.2zM6.7 20.8h1.0v0.7h-1.0zM8.3 27.8h1.1v0.8h-1.1zM10.7 30.8h0.9v0.7h-0.9zM26.3 14.8h1.0v1.2h-1.0zM28.6 13.1h1.0v1.1h-1.0zM14.8 17.5h0.8v1.1h-0.8zM22.1 10.0h0.7v1.2h-0.7zM27.8 13.6h0.9v1.0h-0.9zM30.3 13.3h0.8v0.8h-0.8zM6.3 4.9h1.3v1.1h-1.3zM0.2 2.6h1.1v0.9h-1.1zM18.2 6.9h0.9v1.0h-0.9zM3.8 15.5h0.9v0.8h-0.9zM0.6 0.7h1.0v0.6h-1.0zM28.0 1.5h1.1v0.8h-1.1zM6.4 3.0h0.8v0.9h-0.8zM3.0 5.5h1.0v0.8h-1.0zM17.5 10.5h0.9v0.6h-0.9zM18.7 12.4h0.9v1.0h-0.9zM28.0 13.5h0.7v0.8h-0.7zM14.9 3.7h0.7v1.2h-0.7zM8.6 26.2h0.7v0.9h-0.7zM11.2 11.3h0.6v1.0h-0.6zM8.7 20.5h0.6v0.7h-0.6zM1.2 15.8h1.3v0.8h-1.3zM26.6 21.7h1.1v0.6h-1.1zM4.0 26.2h0.9v1.0h-0.9zM2.4 23.5h1.0v0.8h-1.0zM23.7 24.0h0.8v0.7h-0.8zM22.6 18.4h0.9v1.3h-0.9zM26.2 30.9h0.7v1.1h-0.7zM20.4 25.2h1.1v0.6h-1.1zM5.5 14.2h1.0v0.8h-1.0zM17.3 10.8h1.1v0.8h-1.1zM4.6 13.3h1.1v0.6h-1.1zM28.7 21.5h0.8v1.0h-0.8zM7.6 4.9h0.8v0.7h-0.8zM30.3 23.5h1.0v1.2h-1.0zM27.3 5.1h1.2v1.2h-1.2zM9.4 28.0h1.1v0.9h-1.1zM27.4 23.5h0.8v0.7h-0.8zM30.4 3.4h1.0v1.3h-1.0zM17.3 13.4h0.7v0.9h-0.7zM27.8 25.4h0.7v1.1h-0.7zM10.0 18.8h1.2v0.8h-1.2zM21.1 6.0h1.0v1.0h-1.0zM5.3 30.2h0.9v1.1h-0.9zM23.0 15.9h0.8v0.9h-0.8zM21.9 9.2h1.3v0.9h-1.3zM5.0 3.3h0.9v0.9h-0.9zM2.3 18.3h0.7v0.6h-0.7zM12.7 12.0h1.2v1.2h-1.2zM24.3 4.8h0.6v1.3h-0.6z" fill="#555"/></pattern><pattern id="pbw" patternUnits="userSpaceOnUse" width="30.94" height="30.94"><rect width="30.94" height="30.94" fill="#050505"/><path d="M22.1 30.3h0.7v1.0h-0.7zM4.2 12.5h0.9v1.5h-0.9zM10.0 13.8h1.3v1.1h-1.3zM10.5 14.7h1.6v0.9h-1.6zM2.6 25.9h1.1v0.8h-1.1zM14.5 9.4h1.2v1.0h-1.2zM22.7 24.4h1.2v1.4h-1.2zM6.1 19.6h1.0v1.6h-1.0zM16.6 10.4h1.3v1.3h-1.3zM15.4 5.6h1.4v0.8h-1.4zM14.0 8.5h1.3v1.4h-1.3zM20.4 7.9h1.6v1.1h-1.6zM22.9 5.4h1.5v1.3h-1.5zM13.8 14.6h1.3v1.4h-1.3zM9.7 18.4h0.7v1.2h-0.7zM28.1 29.1h1.4v0.9h-1.4zM1.6 15.9h1.2v0.9h-1.2zM16.1 12.3h1.1v1.0h-1.1zM14.2 26.0h1.7v1.2h-1.7zM3.9 28.0h1.3v1.0h-1.3zM13.0 11.2h1.6v1.2h-1.6zM23.4 29.2h0.9v0.9h-0.9zM9.2 24.4h1.2v1.2h-1.2zM2.8 8.0h1.7v1.4h-1.7zM11.1 16.0h1.3v1.6h-1.3zM8.6 7.7h1.4v1.2h-1.4zM15.8 25.2h0.9v1.5h-0.9zM26.1 19.8h1.5v1.0h-1.5zM12.4 23.0h1.5v1.1h-1.5zM11.9 6.2h0.7v1.4h-0.7zM28.2 0.6h1.1v1.2h-1.1zM8.9 25.6h1.7v1.3h-1.7zM24.7 7.0h1.5v1.1h-1.5zM25.3 19.0h1.6v1.2h-1.6zM3.3 27.7h1.0v1.5h-1.0zM19.9 1.0h1.1v1.0h-1.1zM30.0 6.7h1.1v1.6h-1.1zM9.4 4.6h1.1v0.7h-1.1zM12.5 27.3h0.9v1.3h-0.9zM11.3 2.5h1.6v0.9h-1.6zM3.6 16.5h1.2v1.4h-1.2zM7.1 28.2h1.2v1.2h-1.2zM21.1 22.7h1.4v1.1h-1.4zM2.1 24.2h1.6v1.7h-1.6z" fill="#fff"/><path d="M26.1 8.6h1.0v0.7h-1.0zM25.9 25.6h0.9v1.6h-0.9zM11.5 10.3h0.8v1.6h-0.8zM2.3 26.4h1.1v0.7h-1.1zM28.8 1.5h1.2v1.6h-1.2zM25.8 8.5h1.6v1.0h-1.6zM30.5 18.4h1.2v1.4h-1.2zM0.5 13.6h1.6v1.0h-1.6zM12.4 22.9h1.6v0.8h-1.6zM12.2 0.3h1.5v1.3h-1.5zM12.9 13.7h1.7v1.7h-1.7zM7.4 10.1h1.2v1.0h-1.2zM23.1 15.4h1.4v0.9h-1.4zM23.4 10.8h0.7v1.1h-0.7zM23.6 16.4h1.0v1.5h-1.0zM15.1 15.9h1.0v1.1h-1.0zM15.1 13.2h1.4v1.5h-1.4zM20.7 9.8h1.0v1.3h-1.0zM21.2 16.6h1.4v0.9h-1.4zM7.9 25.6h0.8v0.8h-0.8zM11.6 16.4h1.3v1.4h-1.3zM4.0 24.0h1.6v1.0h-1.6zM13.0 11.7h1.2v0.9h-1.2zM13.3 1.0h1.0v0.7h-1.0zM14.7 17.1h1.1v1.2h-1.1zM20.3 25.2h0.7v1.6h-0.7zM26.8 9.7h1.3v0.8h-1.3zM1.7 21.4h1.3v1.2h-1.3zM24.1 10.6h0.8v1.2h-0.8zM5.9 18.1h1.3v1.0h-1.3zM20.5 28.0h1.3v1.7h-1.3zM11.5 6.1h0.9v0.7h-0.9zM4.5 29.1h1.1v1.5h-1.1zM29.5 26.4h1.1v0.8h-1.1zM8.3 16.5h1.3v1.7h-1.3zM6.2 15.7h1.2v0.9h-1.2zM2.4 30.9h1.0v1.0h-1.0zM5.6 26.3h0.9v0.8h-0.9zM1.1 20.9h0.7v1.4h-0.7zM18.2 12.0h1.5v1.5h-1.5zM6.3 30.4h1.1v1.4h-1.1zM18.1 5.7h1.1v1.0h-1.1zM7.2 8.9h1.0v1.2h-1.0zM11.1 21.7h0.9v0.7h-0.9zM3.5 30.5h0.9v1.3h-0.9z" fill="#fefefe"/><path d="M3.5 17.6h1.6v1.6h-1.6zM19.4 19.4h1.0v1.3h-1.0zM2.6 25.3h1.3v0.8h-1.3zM12.3 11.7h0.7v1.2h-0.7zM2.1 26.8h0.9v0.7h-0.9zM12.3 5.9h1.5v1.6h-1.5zM7.5 9.8h1.3v0.9h-1.3zM26.6 21.9h0.9v1.4h-0.9zM28.9 7.0h1.1v1.4h-1.1zM28.2 11.4h0.8v1.7h-0.8zM5.5 13.7h0.8v0.8h-0.8zM13.1 22.0h1.5v0.9h-1.5zM3.8 17.6h1.5v1.5h-1.5zM2.7 16.3h0.8v1.3h-0.8zM0.8 18.1h1.3v1.5h-1.3zM14.7 17.2h0.8v0.7h-0.8zM21.6 11.7h1.1v1.4h-1.1zM4.7 9.7h0.8v1.7h-0.8zM0.2 0.6h1.2v1.0h-1.2zM9.5 30.3h1.6v0.8h-1.6zM3.8 25.5h0.9v0.8h-0.9zM24.3 19.7h1.7v1.3h-1.7zM27.1 13.3h1.1v1.4h-1.1zM16.3 11.0h1.6v1.1h-1.6zM0.1 25.9h1.6v0.9h-1.6zM19.3 9.4h1.4v1.1h-1.4zM24.8 12.3h1.1v1.5h-1.1zM23.2 4.1h1.1v1.6h-1.1zM30.7 25.4h1.4v1.5h-1.4zM19.4 11.1h1.6v1.4h-1.6zM16.4 0.7h0.8v1.5h-0.8zM22.4 15.7h1.2v0.8h-1.2zM20.1 10.8h0.9v1.4h-0.9zM29.5 23.3h1.2v1.2h-1.2zM3.1 30.4h1.1v1.7h-1.1zM8.4 6.6h1.6v1.7h-1.6zM14.9 23.1h1.7v1.2h-1.7zM27.3 7.4h1.6v1.1h-1.6zM19.9 21.6h0.9v1.2h-0.9zM30.3 2.8h0.8v0.9h-0.8zM1.2 21.3h1.5v1.4h-1.5zM2.3 18.8h1.4v0.9h-1.4zM1.2 6.7h1.3v1.1h-1.3zM20.8 14.1h1.4v1.5h-1.4zM11.4 12.6h1.1v1.1h-1.1zM25.2 6.3h0.8v1.6h-0.8zM4.3 15.0h1.7v1.3h-1.7zM19.0 25.8h0.7v1.0h-0.7zM22.6 15.9h0.9v1.6h-0.9zM13.4 3.0h1.6v1.7h-1.6zM5.8 22.3h1.6v1.3h-1.6zM13.9 16.8h1.5v1.0h-1.5zM17.6 22.9h1.4v1.0h-1.4zM22.1 14.2h1.5v0.9h-1.5zM5.5 5.9h1.1v1.1h-1.1zM15.9 16.5h1.6v1.1h-1.6zM5.9 6.8h0.7v1.0h-0.7zM6.5 0.7h1.1v0.7h-1.1zM9.5 10.6h1.4v1.6h-1.4z" fill="#ccc"/></pattern><pattern id="pbw2" patternUnits="userSpaceOnUse" width="30.94" height="30.94"><rect width="30.94" height="30.94" fill="#050505"/><path d="M8.1 20.9h1.7v1.2h-1.7zM23.8 26.6h1.0v2.2h-1.0zM23.6 30.7h1.3v1.1h-1.3zM25.4 9.1h1.2v1.6h-1.2zM20.2 4.3h1.3v0.9h-1.3zM13.3 24.5h1.5v1.8h-1.5zM8.4 21.4h1.2v1.0h-1.2zM11.0 0.1h1.5v1.1h-1.5zM28.8 27.0h1.4v1.6h-1.4zM4.2 17.3h2.1v1.8h-2.1zM12.8 22.2h1.6v1.0h-1.6zM12.5 1.5h1.1v1.4h-1.1zM14.6 26.8h1.1v1.2h-1.1zM21.2 17.5h1.9v1.6h-1.9zM26.3 9.4h1.8v1.4h-1.8zM17.5 13.6h1.4v1.5h-1.4zM1.9 11.6h1.8v1.4h-1.8zM18.2 26.4h2.0v1.8h-2.0zM20.7 16.8h1.0v2.1h-1.0zM15.8 25.1h2.1v1.8h-2.1zM3.7 7.5h1.9v1.8h-1.9zM29.9 13.7h1.7v2.2h-1.7zM5.4 4.0h1.2v1.1h-1.2zM26.9 23.2h1.1v1.4h-1.1zM15.5 13.2h2.0v1.8h-2.0zM20.9 8.3h1.3v1.5h-1.3zM13.9 2.9h1.3v1.6h-1.3zM4.8 0.9h2.1v2.0h-2.1zM26.2 25.5h2.0v1.5h-2.0zM29.0 18.5h1.4v1.7h-1.4zM30.0 15.7h1.1v2.2h-1.1zM11.0 7.5h1.3v1.4h-1.3zM0.5 19.9h1.5v1.7h-1.5zM28.4 7.7h0.9v1.7h-0.9zM16.3 8.1h1.4v0.9h-1.4zM22.5 12.3h2.0v1.1h-2.0zM15.8 6.6h2.1v1.1h-2.1zM13.4 25.2h1.3v1.0h-1.3zM1.8 0.0h1.0v1.2h-1.0zM30.1 17.3h1.1v2.2h-1.1zM12.8 15.3h1.4v1.6h-1.4zM28.5 11.4h1.7v0.9h-1.7zM30.5 14.4h2.1v1.8h-2.1zM11.9 25.0h1.5v1.7h-1.5zM25.5 25.9h1.0v0.9h-1.0zM5.4 11.3h1.7v1.3h-1.7zM4.4 20.6h2.2v2.2h-2.2zM10.9 24.8h1.2v1.3h-1.2zM14.0 5.2h2.0v1.6h-2.0zM1.5 12.6h1.5v1.0h-1.5zM22.3 8.8h1.8v1.3h-1.8zM2.0 10.3h1.0v2.1h-1.0zM25.8 29.0h1.1v1.3h-1.1zM2.0 9.6h1.3v1.0h-1.3zM2.4 8.1h2.2v1.2h-2.2zM12.9 18.9h1.4v1.3h-1.4zM20.0 7.2h1.1v2.0h-1.1zM0.0 8.7h1.6v1.5h-1.6zM30.3 29.1h1.5v2.1h-1.5zM7.3 5.8h1.3v2.2h-1.3zM24.7 12.1h1.5v1.7h-1.5zM26.6 20.6h1.3v1.9h-1.3zM26.3 19.1h1.4v1.2h-1.4zM15.7 7.1h1.1v2.1h-1.1zM8.0 6.6h1.8v2.0h-1.8zM25.2 0.9h1.1v1.4h-1.1zM9.4 26.0h1.1v2.0h-1.1zM28.7 22.8h1.3v1.3h-1.3zM29.0 5.2h1.3v0.9h-1.3zM24.0 21.5h1.1v1.9h-1.1zM4.7 19.6h2.2v2.0h-2.2zM24.4 18.0h1.4v1.6h-1.4zM29.1 28.2h1.6v1.7h-1.6zM22.8 13.6h1.2v1.7h-1.2zM20.7 30.1h1.8v1.5h-1.8zM0.6 6.3h2.2v1.7h-2.2zM10.4 4.8h1.2v1.7h-1.2zM21.8 13.5h2.2v2.2h-2.2zM24.1 10.8h1.7v1.6h-1.7zM7.9 22.2h1.1v1.5h-1.1zM26.2 28.6h1.5v1.3h-1.5zM26.7 28.2h1.2v0.9h-1.2zM11.9 0.5h1.0v1.4h-1.0zM14.4 24.1h1.3v1.1h-1.3zM18.1 19.1h1.9v1.5h-1.9zM4.9 21.1h1.6v1.2h-1.6zM24.2 22.0h1.8v1.3h-1.8zM22.0 5.1h2.0v1.5h-2.0zM7.6 0.6h1.5v1.2h-1.5zM7.9 5.9h1.8v1.2h-1.8zM26.9 11.0h1.1v1.5h-1.1zM12.3 13.7h1.6v1.9h-1.6zM14.8 11.4h2.0v1.8h-2.0zM16.8 9.6h1.8v1.5h-1.8zM28.8 20.8h1.5v1.9h-1.5zM23.3 23.4h1.0v2.2h-1.0zM20.7 26.4h2.1v2.2h-2.1zM16.4 5.8h2.1v1.5h-2.1zM4.0 18.6h1.6v1.0h-1.6zM17.9 19.7h2.2v1.1h-2.2zM3.4 26.7h1.9v1.8h-1.9zM18.3 29.6h1.2v2.1h-1.2zM22.3 7.1h1.2v1.3h-1.2zM23.9 9.1h1.2v1.2h-1.2zM18.3 29.9h1.7v1.1h-1.7zM24.0 5.8h2.0v1.1h-2.0zM2.3 15.1h1.4v1.7h-1.4zM26.6 16.4h2.2v1.0h-2.2zM24.5 8.1h1.9v2.0h-1.9zM10.4 21.8h1.5v1.7h-1.5zM5.9 27.1h1.5v1.7h-1.5zM29.0 10.3h1.8v1.6h-1.8zM3.2 25.1h2.1v1.1h-2.1zM27.6 26.9h1.7v2.1h-1.7zM29.1 16.0h2.0v2.1h-2.0zM11.2 18.8h1.9v1.9h-1.9zM6.0 26.2h1.8v1.3h-1.8zM29.1 7.8h2.0v0.9h-2.0zM25.2 22.4h1.0v1.5h-1.0zM3.3 21.8h1.8v1.8h-1.8z" fill="#fff"/><path d="M29.5 11.0h1.6v1.8h-1.6zM11.3 28.0h1.0v1.5h-1.0zM11.1 23.9h1.4v1.3h-1.4zM25.2 26.4h1.8v2.0h-1.8zM24.6 14.5h1.4v1.6h-1.4zM12.8 26.3h1.7v1.7h-1.7zM29.8 10.5h1.7v1.4h-1.7zM19.0 27.5h1.6v1.5h-1.6zM24.5 26.5h1.6v1.1h-1.6zM16.6 18.0h2.1v1.9h-2.1zM22.3 24.0h1.1v1.0h-1.1zM23.1 30.3h2.0v2.0h-2.0zM12.7 5.2h1.5v1.8h-1.5zM16.6 5.0h1.7v1.1h-1.7zM18.4 5.0h1.7v2.0h-1.7zM8.0 15.9h1.5v2.1h-1.5zM16.8 14.7h1.4v1.5h-1.4zM2.2 5.5h0.9v1.1h-0.9zM11.0 17.7h1.2v2.0h-1.2zM13.1 13.8h1.0v1.4h-1.0zM27.3 28.5h1.9v1.0h-1.9zM24.3 23.0h1.4v0.9h-1.4zM8.1 3.1h1.9v2.1h-1.9zM30.2 13.8h2.0v1.8h-2.0zM24.3 29.7h1.6v1.4h-1.6zM11.3 6.6h1.8v0.9h-1.8zM22.2 29.1h1.5v2.1h-1.5zM17.6 17.2h1.8v1.1h-1.8zM10.1 28.0h1.4v1.1h-1.4zM4.0 13.2h1.9v1.2h-1.9zM0.2 25.7h1.8v1.0h-1.8zM4.1 28.3h1.3v1.2h-1.3zM3.8 13.8h2.1v1.7h-2.1zM15.7 26.2h2.0v2.0h-2.0zM17.6 26.1h2.0v2.0h-2.0zM12.7 13.6h1.6v1.6h-1.6zM18.2 5.2h1.6v1.0h-1.6zM10.1 1.8h1.3v1.4h-1.3zM16.7 27.6h1.0v1.2h-1.0zM26.2 8.0h1.4v1.3h-1.4zM14.7 24.6h1.9v1.3h-1.9zM28.4 9.5h1.6v1.3h-1.6zM28.3 23.9h1.4v1.8h-1.4zM3.1 27.3h1.4v1.6h-1.4zM3.6 7.1h2.0v2.1h-2.0zM23.3 18.3h1.4v1.9h-1.4zM4.9 1.5h1.9v1.3h-1.9zM2.3 27.5h1.7v1.3h-1.7zM0.5 27.7h1.3v1.5h-1.3zM22.0 18.8h2.0v1.7h-2.0zM19.4 17.7h1.8v1.7h-1.8zM12.0 2.6h2.2v1.3h-2.2zM18.7 29.0h1.4v1.5h-1.4zM6.2 11.2h1.0v1.6h-1.0zM7.4 2.0h1.4v1.5h-1.4zM0.3 18.1h1.2v1.9h-1.2zM24.2 2.7h1.8v1.6h-1.8zM2.5 27.3h1.5v2.2h-1.5zM27.2 19.0h1.5v1.6h-1.5zM20.9 4.7h1.4v1.1h-1.4zM26.3 30.8h1.0v2.0h-1.0zM7.4 24.8h1.6v1.0h-1.6zM25.1 27.2h2.2v1.3h-2.2zM0.6 16.9h1.0v1.0h-1.0zM26.0 20.3h2.0v2.2h-2.0zM16.8 3.8h1.1v0.9h-1.1zM10.2 26.8h1.3v1.4h-1.3zM26.9 24.7h1.1v1.3h-1.1zM20.0 11.3h2.1v1.4h-2.1zM8.8 21.6h0.9v1.3h-0.9zM9.1 19.7h1.2v1.0h-1.2zM11.1 23.5h2.1v1.4h-2.1zM10.6 22.4h1.7v2.0h-1.7zM19.1 12.5h1.2v1.5h-1.2zM19.5 1.4h1.2v1.0h-1.2zM22.5 26.6h1.4v2.0h-1.4zM9.1 9.6h1.7v2.0h-1.7zM14.6 12.7h1.9v2.1h-1.9zM11.8 26.5h2.0v2.0h-2.0zM26.3 19.6h1.2v2.1h-1.2zM16.2 16.7h2.0v2.1h-2.0zM20.7 12.4h2.1v1.2h-2.1zM28.1 1.9h1.4v1.7h-1.4zM16.4 4.4h1.8v2.2h-1.8zM21.9 8.0h1.1v1.5h-1.1zM26.3 19.4h1.8v1.8h-1.8zM24.9 14.8h1.4v2.1h-1.4zM9.3 24.3h1.4v1.0h-1.4zM12.5 6.5h1.6v1.4h-1.6zM30.7 17.3h1.6v1.1h-1.6zM8.2 20.4h1.2v1.6h-1.2zM10.2 25.0h0.9v1.9h-0.9zM3.7 12.2h2.1v2.1h-2.1zM2.9 26.1h1.2v1.9h-1.2zM3.6 4.0h1.7v1.9h-1.7zM15.8 15.5h1.2v2.1h-1.2zM19.7 28.6h1.6v1.3h-1.6zM20.1 20.5h1.4v2.0h-1.4zM13.8 25.6h1.4v1.3h-1.4zM20.5 4.9h1.6v1.8h-1.6zM1.2 10.0h2.0v1.2h-2.0zM22.4 7.6h1.2v1.5h-1.2zM29.3 27.7h1.5v1.0h-1.5zM29.0 30.6h1.6v2.1h-1.6zM14.5 14.8h1.5v2.1h-1.5zM8.0 3.4h2.0v1.0h-2.0zM20.5 0.4h0.9v1.5h-0.9zM21.6 24.3h1.3v1.6h-1.3zM11.4 28.4h1.4v2.1h-1.4zM5.3 12.7h1.4v1.6h-1.4z" fill="#fefefe"/><path d="M27.8 23.4h1.5v1.9h-1.5zM12.0 21.1h1.1v2.1h-1.1zM9.5 5.8h1.7v1.3h-1.7zM9.2 27.2h2.0v2.1h-2.0zM27.3 23.6h1.6v1.0h-1.6zM7.7 15.7h1.0v1.9h-1.0zM30.8 10.9h1.8v1.5h-1.8zM13.4 0.8h0.9v1.9h-0.9zM7.5 0.9h1.2v2.1h-1.2zM28.0 18.4h2.0v1.2h-2.0zM20.9 30.6h1.5v1.7h-1.5zM13.2 12.2h1.5v2.2h-1.5zM28.5 9.2h1.3v1.6h-1.3zM27.5 8.9h0.9v1.1h-0.9zM30.4 30.4h0.9v1.7h-0.9zM21.5 16.5h1.0v1.6h-1.0zM3.4 26.1h1.3v1.8h-1.3zM14.5 5.8h1.3v1.8h-1.3zM6.3 12.3h1.7v1.0h-1.7zM29.9 0.4h1.4v1.6h-1.4zM25.9 5.2h1.9v1.7h-1.9zM4.6 16.6h1.3v1.0h-1.3zM7.0 22.3h1.2v1.9h-1.2zM18.8 18.1h2.0v1.0h-2.0zM10.2 10.4h1.6v1.9h-1.6zM7.6 3.7h1.4v1.8h-1.4zM6.5 7.5h2.0v1.9h-2.0zM22.9 18.0h1.7v1.4h-1.7zM23.6 4.6h1.9v2.1h-1.9zM17.9 25.1h2.0v1.6h-2.0zM10.3 13.3h1.9v1.6h-1.9zM22.0 20.5h1.1v1.4h-1.1zM14.9 23.9h1.8v1.8h-1.8zM23.5 24.6h1.6v1.8h-1.6zM29.6 9.2h1.1v2.1h-1.1zM16.1 1.8h0.9v1.8h-0.9zM15.3 25.7h1.5v1.9h-1.5zM7.9 0.7h1.7v1.3h-1.7zM25.8 21.5h1.5v1.0h-1.5zM27.6 25.3h1.2v2.1h-1.2zM27.7 9.0h1.0v0.9h-1.0zM29.9 26.7h1.7v1.4h-1.7zM21.0 16.9h0.9v1.6h-0.9zM11.8 16.4h1.0v0.9h-1.0zM6.4 5.9h1.6v2.0h-1.6zM29.5 7.1h2.0v1.1h-2.0zM6.8 12.7h1.1v2.0h-1.1zM19.0 10.3h1.8v1.2h-1.8zM13.5 4.3h2.0v1.5h-2.0zM0.4 15.9h1.2v1.9h-1.2zM15.0 19.3h1.7v1.4h-1.7zM26.6 24.9h1.0v1.3h-1.0zM26.4 17.8h1.8v2.1h-1.8zM11.1 15.4h1.0v1.3h-1.0zM4.7 21.2h1.7v1.2h-1.7zM9.4 29.7h2.0v1.2h-2.0zM2.6 4.3h1.9v1.3h-1.9zM23.1 23.9h1.4v2.0h-1.4zM1.5 6.9h1.1v1.3h-1.1zM9.9 10.2h1.7v2.1h-1.7zM22.3 24.7h1.6v0.9h-1.6zM13.4 25.5h2.0v1.6h-2.0zM15.4 21.3h1.0v2.1h-1.0zM16.7 4.3h2.0v1.4h-2.0zM27.2 4.9h2.0v1.4h-2.0zM24.0 28.9h1.6v2.1h-1.6zM1.9 11.8h1.9v1.4h-1.9zM15.6 3.2h1.6v1.3h-1.6zM14.8 19.5h2.1v2.0h-2.1zM24.7 9.2h2.1v1.0h-2.1zM7.1 20.7h2.0v1.1h-2.0zM5.9 29.8h1.1v1.0h-1.1zM11.8 26.7h2.0v1.8h-2.0zM16.0 22.4h1.6v1.8h-1.6zM0.3 26.1h0.9v1.9h-0.9zM26.3 24.8h1.9v1.4h-1.9zM26.2 22.5h2.1v2.1h-2.1zM29.4 15.9h1.7v0.9h-1.7zM7.9 6.8h1.6v1.4h-1.6zM3.4 9.6h2.1v2.0h-2.1zM27.8 30.6h1.9v1.1h-1.9zM14.1 22.6h1.5v1.8h-1.5zM29.2 1.9h1.6v2.0h-1.6zM4.2 15.7h1.6v1.2h-1.6zM7.2 11.7h1.6v1.6h-1.6z" fill="#eee"/></pattern><pattern id="pwn" patternUnits="userSpaceOnUse" width="30.94" height="30.94"><rect width="30.94" height="30.94" fill="#fbfbfb"/><path d="M18.7 12.0h1.5v1.5h-1.5zM14.7 7.7h1.4v1.4h-1.4zM4.5 9.5h1.0v0.9h-1.0zM13.4 2.6h0.8v0.8h-0.8zM18.7 8.0h0.7v1.0h-0.7zM7.4 10.3h1.0v1.1h-1.0zM13.6 7.5h1.4v1.0h-1.4zM7.3 5.1h0.7v0.9h-0.7zM30.8 21.7h0.9v1.4h-0.9zM5.8 23.5h1.1v0.9h-1.1zM18.2 3.2h0.8v0.8h-0.8zM15.3 26.8h0.9v0.9h-0.9zM4.2 0.7h0.9v1.3h-0.9zM18.5 25.0h1.5v1.1h-1.5zM24.5 17.1h1.6v0.9h-1.6zM12.8 30.2h0.9v1.2h-0.9zM16.0 8.5h1.4v1.5h-1.4zM8.1 26.4h0.8v1.5h-0.8zM7.6 17.8h1.0v1.1h-1.0zM17.8 28.8h1.0v0.7h-1.0zM20.3 6.1h0.9v1.1h-0.9zM7.0 7.5h1.3v1.3h-1.3zM23.1 0.9h0.8v1.1h-0.8zM11.7 12.2h1.5v1.0h-1.5zM4.3 21.3h1.6v1.2h-1.6zM27.0 15.5h1.5v1.5h-1.5zM25.2 12.5h1.1v0.9h-1.1zM8.2 22.5h0.9v1.0h-0.9zM24.6 4.9h1.3v0.8h-1.3zM27.8 13.0h1.6v1.1h-1.6zM30.9 28.9h1.3v1.4h-1.3zM5.1 6.4h1.0v1.0h-1.0zM3.6 4.0h0.7v0.7h-0.7zM27.8 10.7h1.3v1.3h-1.3zM26.3 14.0h1.2v0.8h-1.2zM13.9 2.7h1.5v1.4h-1.5zM21.8 0.1h0.9v1.3h-0.9zM25.2 12.4h1.5v1.3h-1.5zM7.7 15.2h1.2v1.0h-1.2zM6.9 20.8h0.9v1.4h-0.9zM14.5 29.7h1.1v0.7h-1.1zM12.6 8.8h0.8v1.1h-0.8zM4.4 27.7h1.1v1.1h-1.1zM15.8 8.6h1.1v1.1h-1.1zM16.5 20.0h1.3v0.8h-1.3zM1.6 27.1h0.7v1.3h-0.7z" fill="#000"/><path d="M5.9 7.6h1.0v1.4h-1.0zM21.8 29.9h1.4v1.5h-1.4zM10.9 8.8h1.5v1.1h-1.5zM14.9 16.7h1.3v1.3h-1.3zM6.9 21.9h0.8v1.3h-0.8zM24.9 13.1h0.7v1.2h-0.7zM16.0 3.4h1.0v0.9h-1.0zM21.9 24.7h1.3v1.0h-1.3zM29.7 2.2h0.7v1.5h-0.7zM1.5 13.8h0.9v1.3h-0.9zM2.4 21.0h1.2v1.0h-1.2zM11.5 8.1h1.5v1.6h-1.5zM3.0 25.9h1.5v1.3h-1.5zM7.6 12.3h1.0v1.3h-1.0zM0.2 21.8h1.4v1.0h-1.4zM23.6 22.2h1.5v1.1h-1.5zM16.6 24.1h0.7v1.1h-0.7zM10.9 14.4h0.8v1.5h-0.8zM2.2 28.7h1.2v1.4h-1.2zM3.4 15.4h1.0v0.8h-1.0zM28.6 12.7h0.9v0.9h-0.9zM10.1 8.7h1.5v0.7h-1.5zM14.0 18.0h0.7v0.8h-0.7zM8.4 1.5h0.9v1.5h-0.9zM20.7 13.4h1.2v1.0h-1.2zM0.3 3.0h1.4v1.0h-1.4zM7.7 20.5h1.0v1.0h-1.0zM26.7 4.9h1.4v1.5h-1.4zM26.0 20.2h1.5v0.8h-1.5zM6.2 6.9h0.9v1.0h-0.9zM25.1 17.0h1.0v1.1h-1.0zM1.8 6.4h1.3v1.1h-1.3zM0.7 29.4h0.7v1.4h-0.7zM21.3 22.9h1.2v0.9h-1.2zM12.5 6.0h1.2v1.3h-1.2zM25.4 17.4h0.7v0.8h-0.7zM25.5 24.8h1.5v1.3h-1.5zM21.8 30.1h1.3v1.3h-1.3zM8.3 10.4h1.2v1.5h-1.2zM13.4 29.0h1.6v0.9h-1.6zM28.0 6.2h1.3v1.3h-1.3zM24.7 22.3h0.8v1.2h-0.8zM20.6 15.2h1.4v0.8h-1.4zM29.4 26.8h1.1v0.7h-1.1zM8.7 15.3h1.5v1.5h-1.5zM10.2 10.0h1.2v1.3h-1.2zM21.8 24.7h1.5v1.3h-1.5zM11.7 10.9h1.0v0.9h-1.0zM0.8 14.5h1.3v1.5h-1.3zM12.0 7.8h1.6v1.3h-1.6zM29.9 22.8h1.1v1.1h-1.1zM21.2 29.9h1.3v0.8h-1.3zM5.9 6.7h1.1v0.9h-1.1zM10.7 12.6h1.5v1.2h-1.5zM12.2 15.3h0.9v0.9h-0.9zM4.8 4.1h1.5v0.8h-1.5zM28.1 22.4h0.7v0.7h-0.7zM8.7 22.5h1.6v0.9h-1.6zM16.3 10.1h1.6v0.9h-1.6zM12.5 15.5h1.3v1.3h-1.3z" fill="#222"/><path d="M15.1 5.1h1.5v0.9h-1.5zM0.8 1.4h1.5v1.2h-1.5zM22.5 30.9h0.8v0.8h-0.8zM7.9 2.0h1.3v1.0h-1.3zM1.6 8.8h0.8v1.1h-0.8zM13.7 28.6h1.1v1.0h-1.1zM28.8 29.3h1.4v1.5h-1.4zM28.1 25.1h1.6v0.7h-1.6zM6.0 25.0h1.1v1.2h-1.1zM14.8 4.4h1.4v0.7h-1.4zM0.4 29.4h0.8v1.5h-0.8zM5.0 29.7h1.0v0.9h-1.0zM22.8 4.3h1.2v1.4h-1.2zM7.5 30.1h1.3v1.0h-1.3zM17.5 21.2h1.3v1.2h-1.3zM28.8 22.5h1.3v1.5h-1.3zM2.8 6.7h0.9v1.2h-0.9zM1.0 17.4h1.1v0.9h-1.1zM2.7 4.4h1.4v1.5h-1.4zM8.0 8.8h0.9v1.5h-0.9zM27.3 7.9h1.2v0.7h-1.2zM27.5 23.0h1.4v1.3h-1.4zM0.1 23.5h1.0v1.0h-1.0zM21.3 30.4h0.7v1.5h-0.7zM9.1 12.8h1.0v1.1h-1.0zM13.8 1.6h1.2v1.3h-1.2zM4.8 30.1h1.5v1.6h-1.5zM21.0 28.3h1.4v0.7h-1.4zM23.7 3.6h1.6v1.5h-1.6zM6.1 1.7h1.6v0.8h-1.6zM15.6 4.4h0.8v0.7h-0.8zM15.5 2.3h1.5v0.9h-1.5zM3.1 5.3h0.9v0.9h-0.9zM26.7 7.6h1.0v1.2h-1.0zM12.8 29.6h1.1v1.2h-1.1zM30.4 23.3h1.4v1.0h-1.4zM4.6 21.1h1.4v1.0h-1.4zM16.2 12.0h0.9v0.8h-0.9zM8.6 23.9h1.5v0.7h-1.5zM16.9 22.1h1.1v1.2h-1.1zM23.1 24.5h1.1v0.7h-1.1zM6.2 25.1h1.5v0.8h-1.5z" fill="#666"/></pattern><pattern id="pgn" patternUnits="userSpaceOnUse" width="30.94" height="30.94"><rect width="30.94" height="30.94" fill="#4d4d4d"/><path d="M2.2 18.3h0.9v1.0h-0.9zM22.2 27.6h0.8v1.3h-0.8zM2.3 8.9h1.0v0.7h-1.0zM26.8 6.8h1.5v1.4h-1.5zM7.3 27.1h1.0v1.0h-1.0zM4.8 20.7h0.9v0.8h-0.9zM24.7 27.1h0.7v1.0h-0.7zM4.0 29.2h1.5v1.1h-1.5zM25.4 15.6h1.4v1.0h-1.4zM17.4 26.0h1.1v1.1h-1.1zM21.2 24.8h1.1v1.2h-1.1zM6.2 0.9h0.7v1.6h-0.7zM21.6 28.0h1.4v1.4h-1.4zM15.8 27.9h1.3v0.7h-1.3zM11.9 14.6h1.1v1.4h-1.1zM8.7 10.7h0.9v1.6h-0.9zM9.1 25.2h0.7v0.8h-0.7zM10.5 18.2h1.6v1.6h-1.6zM28.9 13.7h1.3v1.2h-1.3zM16.9 25.4h1.5v1.5h-1.5zM14.0 30.0h1.6v0.9h-1.6zM3.3 8.2h1.1v0.8h-1.1zM22.7 19.8h0.8v1.0h-0.8zM1.9 0.1h1.4v1.3h-1.4zM29.5 25.0h1.1v0.7h-1.1zM0.1 23.2h1.1v1.0h-1.1zM27.3 7.0h1.5v0.8h-1.5zM8.5 27.4h1.0v1.1h-1.0zM7.6 13.9h1.6v1.4h-1.6zM20.0 6.4h1.4v1.4h-1.4zM27.6 14.9h0.9v1.4h-0.9zM21.9 24.3h0.9v1.1h-0.9zM26.0 14.8h0.9v1.5h-0.9zM12.2 0.6h0.9v1.0h-0.9zM22.5 17.4h0.8v1.1h-0.8zM16.9 0.6h1.0v1.1h-1.0zM9.7 7.1h1.0v0.9h-1.0zM28.8 18.9h1.3v1.4h-1.3zM30.1 23.2h1.6v1.3h-1.6zM16.1 12.9h0.7v0.9h-0.7zM19.0 11.1h1.4v0.7h-1.4zM19.1 29.6h0.8v1.1h-0.8zM18.7 11.6h1.1v0.9h-1.1zM12.8 15.5h1.3v1.4h-1.3zM9.2 22.0h1.2v1.2h-1.2zM29.5 13.5h1.5v0.7h-1.5z" fill="#000"/><path d="M20.4 21.6h1.6v1.0h-1.6zM25.0 19.0h1.5v1.2h-1.5zM19.2 10.5h0.8v1.1h-0.8zM13.7 20.5h1.0v1.2h-1.0zM1.6 21.1h1.2v1.5h-1.2zM12.2 10.7h1.6v1.5h-1.6zM25.9 11.8h0.8v1.4h-0.8zM1.7 8.1h1.4v0.7h-1.4zM30.2 7.2h1.0v1.4h-1.0zM26.6 27.9h0.7v1.0h-0.7zM13.3 7.1h1.0v1.3h-1.0zM23.5 5.5h1.1v0.8h-1.1zM15.7 14.6h1.2v1.1h-1.2zM24.2 22.9h1.1v0.9h-1.1zM11.0 23.7h1.1v1.2h-1.1zM22.0 13.0h0.8v1.2h-0.8zM8.4 14.1h0.9v0.8h-0.9zM2.6 3.1h1.2v1.1h-1.2zM9.6 20.6h1.5v1.0h-1.5zM12.9 26.1h0.7v1.6h-0.7zM19.5 15.4h1.0v1.1h-1.0zM21.6 4.2h1.3v1.2h-1.3zM14.3 24.3h1.0v0.7h-1.0zM17.4 11.8h1.1v0.8h-1.1zM8.1 29.4h0.7v0.8h-0.7zM4.5 14.2h1.5v1.1h-1.5zM17.0 17.9h0.7v1.2h-0.7zM13.0 0.8h1.5v1.5h-1.5zM29.3 0.8h1.6v1.4h-1.6zM14.7 13.3h0.9v0.8h-0.9zM17.0 22.8h1.3v1.3h-1.3zM20.5 15.6h1.0v1.2h-1.0zM2.2 7.5h1.4v1.4h-1.4zM23.5 13.0h1.1v1.3h-1.1zM12.2 10.6h1.2v0.8h-1.2zM5.8 1.4h1.4v1.0h-1.4zM10.3 6.9h1.3v1.4h-1.3zM30.4 24.8h0.9v1.1h-0.9zM24.4 20.2h1.6v1.0h-1.6z" fill="#222"/><path d="M0.8 28.1h1.3v1.6h-1.3zM20.4 28.9h1.1v1.0h-1.1zM0.5 23.7h1.0v0.8h-1.0zM15.5 4.5h1.1v1.5h-1.1zM12.2 22.7h0.9v0.7h-0.9zM0.9 30.0h1.0v0.7h-1.0zM5.9 30.9h0.8v0.8h-0.8zM26.2 24.9h0.8v0.9h-0.8zM15.3 16.8h1.0v0.8h-1.0zM22.3 25.1h1.5v1.1h-1.5zM26.3 15.6h1.5v1.4h-1.5zM20.4 18.9h1.2v1.0h-1.2zM4.1 30.4h1.4v1.0h-1.4zM24.9 21.6h1.5v0.8h-1.5zM22.4 30.1h1.1v1.1h-1.1zM0.6 16.2h1.5v0.9h-1.5zM15.4 17.0h1.3v1.0h-1.3zM26.7 29.2h1.1v1.3h-1.1zM15.6 8.7h0.9v1.0h-0.9zM0.5 13.8h1.0v1.2h-1.0zM3.4 5.5h0.9v1.2h-0.9zM15.9 0.0h1.3v0.8h-1.3zM11.3 25.1h1.0v1.2h-1.0zM0.3 12.5h1.0v1.4h-1.0zM1.7 28.8h0.7v1.1h-0.7zM6.5 11.9h0.8v1.2h-0.8zM18.8 11.2h1.3v0.9h-1.3zM14.2 6.3h0.7v0.7h-0.7zM12.6 29.6h0.8v1.0h-0.8zM21.4 18.7h1.1v0.8h-1.1zM18.3 7.5h1.5v1.5h-1.5zM24.1 16.2h1.5v1.2h-1.5zM4.1 19.8h1.5v1.5h-1.5zM0.7 19.8h1.1v1.4h-1.1zM6.8 0.9h0.8v1.4h-0.8zM20.5 15.7h1.3v0.8h-1.3zM13.5 19.8h1.4v1.0h-1.4zM23.3 9.0h0.8v1.4h-0.8zM18.8 1.0h1.5v1.0h-1.5zM18.3 30.1h1.6v0.8h-1.6zM26.2 18.4h0.9v1.5h-0.9z" fill="#ccc"/><path d="M18.1 19.6h1.3v1.4h-1.3zM20.7 21.5h1.6v1.1h-1.6zM0.6 11.1h1.6v1.5h-1.6zM1.5 28.9h0.8v1.3h-0.8zM6.0 22.4h0.8v1.3h-0.8zM3.7 12.8h0.9v1.5h-0.9zM30.7 7.9h1.1v1.6h-1.1zM1.8 15.5h1.4v1.1h-1.4zM4.1 18.3h1.1v0.9h-1.1zM19.1 24.6h1.1v1.5h-1.1zM2.0 16.3h1.2v1.1h-1.2zM23.5 28.6h1.4v1.3h-1.4zM1.7 6.0h1.1v0.7h-1.1zM22.5 29.0h1.1v1.4h-1.1zM16.6 23.9h1.5v1.2h-1.5zM11.4 13.9h1.4v1.1h-1.4zM9.1 25.9h1.2v1.3h-1.2zM18.8 24.6h0.7v1.3h-0.7zM14.2 1.0h1.2v0.7h-1.2zM24.9 16.7h0.9v1.1h-0.9zM23.6 28.3h1.1v0.8h-1.1zM30.3 28.3h1.0v1.3h-1.0zM27.2 19.5h1.3v1.1h-1.3zM30.0 12.2h1.3v0.8h-1.3zM27.1 9.4h0.9v0.8h-0.9zM16.9 30.6h1.5v1.3h-1.5zM23.9 5.5h1.0v0.9h-1.0zM21.3 25.8h0.7v1.2h-0.7zM15.1 19.3h1.6v0.9h-1.6zM28.4 15.4h0.9v1.4h-0.9zM8.3 7.0h1.2v0.9h-1.2zM11.4 14.8h1.4v0.8h-1.4zM3.5 9.0h1.3v1.0h-1.3zM27.5 19.9h1.2v1.5h-1.2zM27.8 16.5h1.6v1.4h-1.6zM0.4 12.9h0.9v0.8h-0.9zM22.1 9.1h1.5v1.4h-1.5zM1.5 10.2h0.8v1.2h-0.8zM23.1 26.8h1.4v0.8h-1.4zM0.5 4.6h1.3v1.0h-1.3zM26.2 29.7h1.0v1.4h-1.0zM12.8 9.0h1.4v0.8h-1.4zM27.4 25.5h1.3v1.1h-1.3zM3.5 1.9h1.2v1.4h-1.2z" fill="#eee"/><path d="M20.4 4.2h1.2v1.6h-1.2zM26.8 18.3h1.4v1.1h-1.4zM21.5 27.7h0.9v0.8h-0.9zM22.0 11.5h1.0v1.2h-1.0zM3.3 4.2h1.1v1.3h-1.1zM5.3 2.6h1.6v1.2h-1.6zM12.3 25.0h1.3v0.9h-1.3zM8.9 19.4h1.3v1.4h-1.3zM24.2 10.1h1.2v1.4h-1.2zM16.6 9.3h0.9v1.3h-0.9zM14.3 28.4h1.5v1.1h-1.5zM5.8 15.4h1.5v1.2h-1.5zM7.9 28.2h1.1v1.4h-1.1zM17.5 25.4h1.3v1.1h-1.3zM5.1 27.1h0.9v1.3h-0.9zM10.2 28.8h1.0v1.2h-1.0zM7.9 1.9h0.9v1.1h-0.9zM2.2 0.6h0.8v1.5h-0.8zM13.4 15.3h1.1v1.1h-1.1zM24.1 24.3h1.5v1.1h-1.5zM30.2 26.9h1.3v1.0h-1.3zM16.3 30.1h0.9v1.1h-0.9zM8.5 5.6h1.2v0.7h-1.2zM13.7 15.3h1.5v1.6h-1.5zM30.4 17.2h1.3v1.1h-1.3zM23.5 26.8h0.9v1.5h-0.9zM19.1 17.2h1.4v1.0h-1.4zM8.7 26.7h1.1v1.5h-1.1zM12.6 5.6h1.6v0.9h-1.6zM12.0 25.4h1.0v0.7h-1.0zM4.1 0.4h0.8v0.8h-0.8zM11.1 28.0h1.5v1.3h-1.5zM10.1 30.2h1.1v0.7h-1.1zM13.0 6.5h1.6v1.5h-1.6zM3.8 13.1h1.4v0.9h-1.4zM19.3 26.2h1.2v0.8h-1.2zM5.4 14.0h1.2v0.9h-1.2zM2.7 15.9h1.0v0.9h-1.0zM30.0 2.5h1.4v1.1h-1.4zM15.4 18.2h0.8v0.9h-0.8zM24.8 24.3h0.9v1.2h-0.9zM0.9 18.2h1.4v1.2h-1.4zM4.3 25.9h1.4v0.9h-1.4zM23.4 9.8h1.0v0.8h-1.0zM15.3 12.0h1.5v0.9h-1.5zM6.4 8.7h1.3v1.2h-1.3zM16.3 2.8h0.9v1.3h-0.9zM30.9 10.8h1.2v1.2h-1.2zM27.1 2.6h0.9v1.6h-0.9zM15.2 25.6h0.8v1.1h-0.8zM29.8 7.7h0.8v0.9h-0.8zM3.7 8.1h1.0v1.1h-1.0zM14.7 7.5h1.2v1.4h-1.2zM10.8 29.1h1.3v0.8h-1.3zM23.6 27.7h0.9v1.3h-0.9z" fill="#888"/></pattern><pattern id="pdg" patternUnits="userSpaceOnUse" width="30.94" height="30.94"><rect width="30.94" height="30.94" fill="#303030"/><path d="M26.7 28.6h0.9v1.1h-0.9zM19.7 28.9h0.7v0.8h-0.7zM7.3 16.4h1.0v0.8h-1.0zM23.0 26.3h0.8v1.1h-0.8zM14.4 7.7h0.8v0.9h-0.8zM0.6 28.7h1.1v1.1h-1.1zM3.2 18.7h1.0v1.3h-1.0zM13.5 18.2h1.0v0.8h-1.0zM20.9 25.4h0.9v0.8h-0.9zM29.2 19.1h0.7v1.0h-0.7zM3.6 5.5h1.4v1.1h-1.4zM15.2 8.7h1.1v1.2h-1.1zM10.4 26.5h0.9v1.2h-0.9zM29.1 1.2h1.0v1.0h-1.0zM13.3 28.3h1.0v1.2h-1.0zM26.7 16.7h1.4v1.5h-1.4zM15.1 6.8h0.9v1.4h-0.9zM27.6 10.6h0.9v1.0h-0.9zM8.8 5.4h1.0v1.3h-1.0zM7.6 6.0h1.2v1.2h-1.2zM21.8 15.1h1.1v1.0h-1.1zM7.0 13.2h0.7v0.7h-0.7zM13.2 23.4h0.9v1.5h-0.9zM8.7 11.5h0.9v1.3h-0.9zM27.8 8.5h1.1v0.8h-1.1zM6.3 11.4h1.0v0.7h-1.0zM18.8 3.0h1.4v1.1h-1.4zM24.6 10.4h1.1v1.2h-1.1zM29.0 25.7h1.5v1.1h-1.5zM7.0 5.3h1.3v1.4h-1.3zM5.1 10.0h1.3v0.8h-1.3zM6.2 4.4h1.4v0.9h-1.4zM11.6 1.1h1.3v1.0h-1.3zM2.3 10.7h1.3v1.0h-1.3zM6.7 11.2h1.2v0.9h-1.2zM1.9 10.6h1.1v1.0h-1.1z" fill="#222"/><path d="M22.1 19.0h1.0v0.7h-1.0zM13.7 12.1h1.3v1.1h-1.3zM9.1 29.0h0.9v1.1h-0.9zM26.6 18.3h1.1v1.1h-1.1zM16.9 3.4h0.8v0.8h-0.8zM30.4 18.7h1.4v1.2h-1.4zM0.8 2.6h1.4v0.8h-1.4zM3.9 24.7h0.8v1.1h-0.8zM7.7 11.2h0.8v1.5h-0.8zM7.3 12.5h0.8v0.9h-0.8zM7.6 3.1h0.8v1.4h-0.8zM16.2 23.4h0.9v0.9h-0.9zM22.9 24.7h1.5v1.1h-1.5zM11.2 1.6h0.9v0.9h-0.9zM5.2 30.1h1.0v1.4h-1.0zM22.0 1.3h1.1v1.4h-1.1zM22.0 23.7h1.5v1.2h-1.5zM10.7 12.5h1.1v1.1h-1.1zM23.8 20.2h1.2v0.8h-1.2zM19.5 21.9h1.2v0.7h-1.2zM15.8 8.6h0.8v0.8h-0.8zM27.3 20.1h1.4v1.2h-1.4zM2.9 22.2h0.7v1.4h-0.7zM18.8 12.7h1.0v1.0h-1.0zM1.5 19.8h1.2v0.9h-1.2zM16.0 25.7h1.3v0.7h-1.3zM3.6 16.4h1.2v1.1h-1.2zM8.2 23.5h1.5v0.9h-1.5zM1.2 8.7h1.5v0.9h-1.5zM6.0 30.2h1.2v0.8h-1.2zM12.3 2.4h0.9v0.7h-0.9zM10.8 19.2h1.5v0.8h-1.5zM17.6 1.4h0.8v0.7h-0.8z" fill="#444"/><path d="M9.7 20.5h1.0v1.3h-1.0zM23.7 3.8h1.1v1.0h-1.1zM5.9 6.1h0.7v1.1h-0.7zM29.2 11.0h1.1v0.8h-1.1zM10.4 3.2h1.3v1.1h-1.3zM30.4 28.3h0.9v1.0h-0.9zM21.0 15.5h1.4v0.8h-1.4zM17.4 14.6h1.3v1.1h-1.3zM26.1 3.2h1.5v0.8h-1.5zM24.9 28.4h0.9v1.2h-0.9zM23.5 19.6h1.5v1.2h-1.5zM14.7 21.5h1.0v0.9h-1.0zM28.2 26.1h1.0v1.4h-1.0zM16.2 7.2h1.5v0.7h-1.5zM6.9 29.9h1.3v0.9h-1.3zM13.9 18.4h0.9v1.1h-0.9zM20.7 26.1h1.0v1.5h-1.0zM5.6 9.9h1.1v1.3h-1.1zM10.4 19.4h1.0v1.3h-1.0zM14.8 27.2h0.7v1.2h-0.7zM15.9 28.0h1.4v0.7h-1.4zM11.9 30.1h1.2v0.8h-1.2zM27.8 9.1h1.0v0.9h-1.0zM9.0 17.4h1.4v0.9h-1.4zM9.5 29.3h0.7v0.9h-0.7zM21.7 28.9h0.8v0.7h-0.8zM8.5 19.4h0.9v1.4h-0.9zM16.1 21.0h1.2v1.2h-1.2zM3.0 7.6h0.8v0.9h-0.8z" fill="#555"/><path d="M7.7 22.9h0.8v0.8h-0.8zM29.4 28.9h0.8v1.4h-0.8zM13.9 19.4h1.2v0.8h-1.2zM22.0 12.9h0.8v0.8h-0.8zM3.4 0.0h1.3v1.0h-1.3zM25.1 2.8h0.9v1.2h-0.9zM27.2 27.2h1.1v0.8h-1.1zM15.8 10.9h1.0v1.1h-1.0zM7.9 18.0h1.2v0.9h-1.2zM26.1 6.0h0.9v0.8h-0.9zM22.3 3.1h1.5v1.1h-1.5zM19.9 4.6h1.3v1.1h-1.3zM1.6 8.9h0.7v0.7h-0.7zM13.6 9.4h1.0v1.0h-1.0zM26.7 20.2h1.2v0.9h-1.2zM30.7 13.4h1.2v1.1h-1.2zM10.3 4.0h1.2v0.9h-1.2zM13.4 14.9h1.5v0.9h-1.5zM23.6 24.9h1.0v1.4h-1.0zM18.9 5.8h0.7v1.3h-0.7zM0.8 19.8h0.9v1.5h-0.9zM3.3 23.9h1.2v1.1h-1.2zM0.8 18.0h1.4v1.4h-1.4zM19.2 17.6h0.7v0.9h-0.7zM12.0 17.8h1.1v1.5h-1.1zM7.1 23.9h0.9v1.3h-0.9zM4.5 26.6h1.1v0.8h-1.1zM3.5 5.3h1.4v0.8h-1.4zM4.2 23.5h1.1v1.1h-1.1zM7.1 23.0h0.9v1.1h-0.9zM11.7 29.7h0.8v1.4h-0.8zM2.8 20.3h1.0v1.2h-1.0zM11.4 28.9h0.8v0.7h-0.8zM0.6 6.2h0.9v1.0h-0.9zM14.0 1.4h1.2v1.5h-1.2zM2.2 13.1h1.4v0.8h-1.4zM23.1 6.7h1.0v0.9h-1.0z" fill="#1a1a1a"/></pattern><pattern id="pcr" patternUnits="userSpaceOnUse" width="30.94" height="30.94"><rect width="30.94" height="30.94" fill="#e7dcc6"/><path d="M29.1 25.9h1.4v1.9h-1.4zM16.9 14.6h1.8v0.9h-1.8zM6.0 12.7h1.2v0.8h-1.2zM17.6 27.2h1.1v1.2h-1.1zM23.6 21.9h2.1v1.7h-2.1zM12.1 19.1h2.1v1.4h-2.1zM0.5 21.6h1.8v2.2h-1.8zM26.3 0.2h1.8v2.1h-1.8zM9.1 6.9h1.9v1.6h-1.9zM19.1 12.0h0.9v1.9h-0.9zM15.8 15.6h1.8v1.4h-1.8zM19.8 18.4h1.7v1.8h-1.7zM14.4 2.3h0.9v1.3h-0.9zM22.4 16.5h1.8v2.1h-1.8zM10.1 20.7h1.9v1.3h-1.9zM29.6 1.5h1.8v2.1h-1.8zM8.8 1.2h2.2v1.5h-2.2zM2.8 17.0h1.3v1.3h-1.3zM26.2 4.2h2.2v1.7h-2.2zM30.7 24.0h2.0v1.0h-2.0zM9.5 25.6h1.1v2.2h-1.1zM8.2 11.1h1.1v1.8h-1.1zM27.1 11.5h1.9v2.0h-1.9zM29.5 0.1h2.0v2.0h-2.0zM1.2 7.4h1.9v1.8h-1.9zM17.5 21.0h1.1v1.6h-1.1zM5.6 23.3h0.9v2.1h-0.9z" fill="#cdb78f"/><path d="M4.7 24.8h1.9v1.3h-1.9zM27.0 4.1h1.1v2.1h-1.1zM29.1 9.1h0.8v2.1h-0.8zM16.7 10.4h1.1v1.8h-1.1zM26.0 25.0h1.5v2.1h-1.5zM19.0 28.9h1.0v1.7h-1.0zM23.3 5.8h1.6v1.7h-1.6zM30.6 17.3h1.6v1.8h-1.6zM6.1 21.5h1.5v1.1h-1.5zM2.3 9.1h1.8v1.9h-1.8zM9.3 5.8h1.9v2.0h-1.9zM27.6 26.7h1.1v1.8h-1.1zM23.9 11.7h2.0v2.2h-2.0zM26.3 11.0h1.6v1.6h-1.6zM24.6 2.0h2.2v0.9h-2.2zM29.8 10.0h1.6v1.2h-1.6zM24.8 14.4h1.4v2.0h-1.4zM29.9 20.5h2.1v1.3h-2.1zM18.1 11.8h1.2v2.1h-1.2zM7.7 8.0h1.9v1.1h-1.9zM7.2 20.6h2.1v0.9h-2.1zM17.5 0.1h2.0v1.1h-2.0zM21.4 5.7h1.7v1.6h-1.7zM0.7 29.1h1.5v1.3h-1.5zM25.7 9.6h1.7v0.9h-1.7zM28.9 16.8h1.2v1.3h-1.2zM5.5 22.0h1.2v1.4h-1.2zM12.4 30.0h0.9v1.3h-0.9z" fill="#d8c4a0"/><path d="M18.5 22.4h2.2v2.0h-2.2zM25.6 27.8h0.9v1.8h-0.9zM18.5 28.8h1.8v1.0h-1.8zM5.1 10.2h1.9v0.9h-1.9zM20.8 7.9h1.0v2.1h-1.0zM27.7 11.6h2.2v1.6h-2.2zM25.3 17.9h1.2v1.7h-1.2zM26.8 27.5h1.6v1.3h-1.6zM11.3 10.3h1.2v1.2h-1.2zM22.8 12.6h1.9v2.1h-1.9zM25.5 21.9h1.7v1.1h-1.7zM13.1 26.1h1.7v1.7h-1.7zM27.6 19.8h0.9v1.6h-0.9zM30.0 24.0h2.1v1.4h-2.1zM2.6 17.3h1.6v1.3h-1.6zM21.9 18.0h1.1v1.7h-1.1zM1.3 20.1h0.8v1.5h-0.8zM13.2 11.8h1.1v0.9h-1.1zM11.5 16.2h1.3v1.1h-1.3zM18.3 5.6h1.7v1.6h-1.7zM2.5 19.7h1.9v2.2h-1.9zM21.2 27.3h1.3v1.1h-1.3zM13.6 1.7h1.7v2.0h-1.7zM0.5 17.3h1.8v1.1h-1.8zM18.7 0.2h1.2v1.6h-1.2zM12.3 16.7h1.4v1.4h-1.4zM18.9 14.5h1.7v1.5h-1.7z" fill="#f6efe0"/><path d="M10.0 23.0h1.8v1.4h-1.8zM6.6 26.6h1.8v2.1h-1.8zM6.3 28.8h1.3v1.7h-1.3zM29.1 1.8h1.1v1.4h-1.1zM9.5 5.8h1.6v2.0h-1.6zM14.9 19.9h1.9v1.5h-1.9zM25.3 0.6h2.2v1.9h-2.2zM11.3 17.2h1.3v1.2h-1.3zM8.2 21.8h1.2v0.9h-1.2zM27.3 6.8h1.1v1.6h-1.1zM5.9 24.9h1.3v1.2h-1.3zM27.5 20.6h0.8v1.4h-0.8zM0.0 9.5h1.3v1.0h-1.3zM13.9 23.2h1.5v1.1h-1.5zM24.1 10.1h0.9v1.6h-0.9zM11.7 30.1h1.6v1.9h-1.6zM25.5 18.8h1.8v0.9h-1.8zM3.4 1.4h2.1v1.6h-2.1zM7.3 13.3h2.1v1.6h-2.1zM24.2 28.7h1.6v2.0h-1.6zM22.9 3.9h1.1v1.7h-1.1zM29.9 14.9h1.9v1.5h-1.9zM3.6 8.5h1.5v2.1h-1.5zM2.6 27.9h1.4v1.1h-1.4zM24.2 11.9h1.3v1.9h-1.3zM21.6 8.3h1.1v1.5h-1.1zM24.7 4.5h1.4v2.1h-1.4zM10.8 9.7h2.0v0.8h-2.0zM27.2 1.7h1.6v1.9h-1.6zM4.1 22.7h2.0v1.5h-2.0zM16.6 9.9h2.0v1.3h-2.0zM8.0 0.2h1.0v2.1h-1.0zM11.2 20.7h1.4v2.0h-1.4zM4.5 19.4h1.0v1.9h-1.0zM30.2 6.4h1.0v1.6h-1.0z" fill="#b99b6a"/></pattern><pattern id="ptn" patternUnits="userSpaceOnUse" width="30.94" height="30.94"><rect width="30.94" height="30.94" fill="#b6924f"/><path d="M19.5 23.0h1.6v1.0h-1.6zM21.3 22.6h1.8v1.2h-1.8zM21.7 13.2h0.8v1.6h-0.8zM13.9 12.5h1.5v2.0h-1.5zM28.9 11.8h1.6v1.7h-1.6zM28.4 17.9h1.4v1.6h-1.4zM11.4 1.9h1.2v1.9h-1.2zM8.8 12.1h1.9v1.8h-1.9zM16.2 8.1h1.9v1.5h-1.9zM23.4 7.0h1.0v1.5h-1.0zM14.2 15.2h1.2v1.2h-1.2zM11.7 0.6h1.5v1.5h-1.5zM7.1 0.7h1.9v1.1h-1.9zM14.4 9.6h1.5v1.1h-1.5zM24.8 1.0h1.8v1.9h-1.8zM4.4 4.6h1.2v1.4h-1.2zM13.9 23.5h1.4v1.8h-1.4zM9.7 21.1h0.9v1.7h-0.9zM17.8 8.5h1.0v1.9h-1.0zM13.7 27.4h1.8v1.3h-1.8zM1.5 22.0h1.3v0.9h-1.3zM24.5 13.6h2.0v1.0h-2.0zM20.4 30.6h2.0v0.8h-2.0zM16.9 12.3h1.4v1.3h-1.4zM20.8 2.7h1.0v1.2h-1.0zM13.7 10.0h1.5v1.5h-1.5zM15.6 14.1h1.1v1.2h-1.1zM23.1 16.8h1.6v1.5h-1.6zM5.2 28.6h0.9v1.3h-0.9zM3.2 19.3h1.5v1.6h-1.5zM18.5 0.2h1.7v1.5h-1.7zM24.0 14.4h1.0v1.8h-1.0zM11.0 0.3h1.5v1.0h-1.5z" fill="#9c7a3e"/><path d="M15.7 22.6h1.7v1.5h-1.7zM24.3 30.7h1.0v1.1h-1.0zM15.6 14.7h1.2v1.1h-1.2zM8.7 27.9h1.0v1.9h-1.0zM1.5 20.7h1.4v1.6h-1.4zM23.0 14.7h1.7v1.9h-1.7zM29.6 18.1h1.9v1.3h-1.9zM20.7 8.3h1.5v1.6h-1.5zM22.8 30.8h1.9v1.2h-1.9zM13.2 4.7h1.4v1.7h-1.4zM26.1 30.9h1.9v1.3h-1.9zM1.7 7.2h0.9v1.3h-0.9zM9.3 20.3h1.6v1.4h-1.6zM29.9 11.1h1.7v1.7h-1.7zM17.4 9.4h1.0v1.7h-1.0zM11.6 28.3h1.4v1.5h-1.4zM24.5 5.9h1.6v1.7h-1.6zM8.7 2.8h1.1v1.2h-1.1zM12.1 30.7h1.8v1.2h-1.8zM16.5 11.6h1.3v1.1h-1.3zM14.6 25.5h2.0v1.4h-2.0zM9.1 19.6h0.9v1.2h-0.9zM17.2 24.7h1.2v1.3h-1.2zM25.1 18.9h1.7v0.9h-1.7zM1.2 15.9h1.2v1.4h-1.2zM7.7 18.5h1.0v1.1h-1.0zM18.6 1.0h1.8v2.0h-1.8zM15.5 0.6h1.8v1.3h-1.8zM20.7 30.1h1.8v1.9h-1.8z" fill="#c9a868"/><path d="M3.9 19.5h0.9v1.8h-0.9zM18.8 27.4h1.4v1.9h-1.4zM2.9 25.2h1.0v2.0h-1.0zM5.2 28.4h1.9v1.5h-1.9zM4.9 13.0h0.9v1.9h-0.9zM25.1 23.9h0.8v1.6h-0.8zM6.6 17.6h2.0v1.3h-2.0zM1.9 3.2h1.8v1.7h-1.8zM10.0 19.0h1.8v1.8h-1.8zM21.0 0.6h1.0v1.0h-1.0zM2.7 22.4h1.2v1.1h-1.2zM23.3 11.2h1.0v1.0h-1.0zM4.7 15.3h1.4v1.6h-1.4zM4.5 23.9h1.9v1.3h-1.9zM15.8 10.1h1.3v1.8h-1.3zM3.4 20.2h0.8v1.2h-0.8zM16.1 30.1h2.0v1.7h-2.0zM26.3 18.2h1.7v1.9h-1.7zM8.4 13.2h1.0v2.0h-1.0zM25.9 15.5h1.8v1.2h-1.8zM25.8 11.9h1.0v1.3h-1.0zM30.4 25.1h1.9v1.2h-1.9zM15.8 26.4h0.9v1.5h-0.9zM4.1 10.2h2.0v1.1h-2.0zM21.5 6.0h1.9v1.6h-1.9zM8.5 21.7h1.9v1.4h-1.9zM25.2 1.5h1.0v1.8h-1.0zM1.1 13.1h1.6v1.0h-1.6zM26.6 11.3h1.3v1.2h-1.3zM29.0 28.2h1.1v1.2h-1.1zM21.4 7.7h1.4v1.9h-1.4zM27.4 28.5h1.8v1.2h-1.8zM20.0 27.9h1.4v0.9h-1.4zM12.5 20.2h1.0v1.7h-1.0zM9.2 13.3h1.3v0.8h-1.3zM20.3 21.9h0.9v0.8h-0.9zM10.6 2.9h1.5v1.3h-1.5zM10.2 2.8h0.9v1.9h-0.9z" fill="#8a6a34"/><path d="M7.2 1.2h1.8v0.9h-1.8zM9.9 0.3h1.3v1.2h-1.3zM4.2 17.9h1.3v0.9h-1.3zM15.3 17.7h1.3v1.0h-1.3zM23.3 16.4h1.2v2.0h-1.2zM9.2 12.4h2.0v1.3h-2.0zM0.4 7.2h1.4v2.0h-1.4zM12.0 20.4h0.9v1.9h-0.9zM12.1 28.6h1.6v1.9h-1.6zM27.0 7.7h1.0v1.9h-1.0zM24.1 23.2h1.6v0.9h-1.6zM24.4 0.5h1.4v1.9h-1.4zM8.6 17.7h0.8v1.5h-0.8zM20.5 21.0h1.6v1.1h-1.6zM21.6 29.5h1.9v1.4h-1.9zM14.9 10.3h1.2v1.6h-1.2zM29.0 22.3h1.2v1.4h-1.2zM10.0 29.7h1.8v1.5h-1.8zM7.7 11.5h1.4v1.3h-1.4zM11.3 5.9h0.8v0.9h-0.8zM17.8 8.3h1.8v0.9h-1.8zM29.5 5.4h1.4v1.6h-1.4zM11.0 30.3h2.0v1.9h-2.0zM22.9 15.7h1.6v0.8h-1.6zM10.2 12.1h1.0v1.1h-1.0zM17.4 13.4h1.3v1.9h-1.3zM11.5 27.4h1.6v1.6h-1.6zM3.9 7.4h1.4v0.9h-1.4zM25.5 13.9h0.9v2.0h-0.9zM2.4 20.5h1.9v1.7h-1.9zM29.1 30.1h1.4v1.0h-1.4zM25.9 22.3h1.6v1.7h-1.6zM14.1 1.8h1.8v1.8h-1.8zM13.6 9.0h1.0v0.8h-1.0zM6.2 1.9h1.6v0.8h-1.6z" fill="#d8b878"/></pattern><pattern id="pco" patternUnits="userSpaceOnUse" width="30.94" height="30.94"><rect width="30.94" height="30.94" fill="#cfcf9c"/><path d="M22.2 10.9h1.2v1.2h-1.2zM12.0 21.5h0.9v1.5h-0.9zM19.7 9.0h2.0v1.0h-2.0zM9.0 9.4h1.4v1.6h-1.4zM21.2 17.1h1.4v1.1h-1.4zM28.8 25.3h1.9v0.9h-1.9zM26.9 16.7h1.1v0.9h-1.1zM5.9 6.6h1.0v1.6h-1.0zM14.5 17.9h1.3v1.3h-1.3zM17.1 7.9h1.9v1.6h-1.9zM6.6 29.7h1.1v1.7h-1.1zM19.5 8.5h1.5v0.9h-1.5zM14.4 16.1h1.5v1.7h-1.5zM2.2 12.4h1.8v1.3h-1.8zM15.5 21.0h0.9v1.9h-0.9zM7.8 10.6h0.8v1.8h-0.8zM16.6 19.8h1.1v1.9h-1.1zM7.2 13.9h1.3v1.7h-1.3zM0.8 13.8h0.9v1.3h-0.9zM16.2 21.8h1.7v1.8h-1.7zM14.9 2.9h1.4v1.6h-1.4zM30.2 0.4h1.0v1.9h-1.0zM7.7 1.5h1.8v1.2h-1.8zM2.8 25.3h1.0v1.0h-1.0zM30.0 0.0h1.5v1.2h-1.5zM18.1 8.1h1.2v1.5h-1.2zM21.2 3.1h0.8v1.3h-0.8zM5.8 10.2h2.0v1.1h-2.0zM9.8 16.5h1.9v1.1h-1.9zM9.1 12.6h1.4v1.0h-1.4zM15.4 25.7h1.5v1.9h-1.5zM21.3 11.3h2.0v1.7h-2.0zM13.5 2.5h0.9v0.9h-0.9zM8.6 5.6h0.9v1.4h-0.9z" fill="#e88aa0"/><path d="M30.1 26.4h0.8v1.6h-0.8zM4.0 27.8h0.9v1.2h-0.9zM7.9 18.8h2.0v1.7h-2.0zM27.1 26.2h1.7v1.9h-1.7zM0.2 5.8h1.2v1.1h-1.2zM18.1 5.5h1.0v1.8h-1.0zM27.8 3.7h2.0v1.5h-2.0zM18.6 2.6h0.8v1.1h-0.8zM12.0 18.1h1.6v1.9h-1.6zM1.5 16.0h1.3v1.9h-1.3zM15.9 24.1h1.2v1.6h-1.2zM11.7 30.0h1.2v1.8h-1.2zM24.1 27.8h1.3v1.6h-1.3zM20.0 28.3h0.9v0.9h-0.9zM30.7 18.3h1.7v1.9h-1.7zM27.1 8.0h1.8v1.9h-1.8zM23.2 0.7h1.9v1.2h-1.9zM18.1 27.5h1.0v1.9h-1.0zM17.0 11.0h1.9v1.1h-1.9zM16.8 11.7h1.7v1.3h-1.7zM25.7 28.4h0.9v1.2h-0.9zM21.1 1.2h1.1v1.1h-1.1zM2.1 3.0h1.1v1.5h-1.1zM20.9 21.2h1.7v1.0h-1.7zM11.4 13.6h1.5v1.9h-1.5zM3.5 15.4h0.9v1.2h-0.9zM21.4 7.7h1.2v1.8h-1.2zM21.3 21.7h1.7v1.3h-1.7zM5.2 21.8h1.2v1.7h-1.2zM15.1 11.8h1.4v1.9h-1.4zM13.1 16.9h1.3v1.1h-1.3zM4.2 1.3h2.0v1.3h-2.0zM19.2 8.9h1.6v1.9h-1.6zM2.8 28.0h1.1v1.9h-1.1zM8.5 16.7h1.6v1.5h-1.6zM12.3 10.2h1.5v1.4h-1.5zM2.8 20.4h0.9v0.9h-0.9zM28.6 20.4h1.3v1.8h-1.3z" fill="#8fd08a"/><path d="M27.7 24.1h1.9v1.5h-1.9zM17.9 26.0h1.7v1.4h-1.7zM7.8 7.3h0.9v1.7h-0.9zM17.2 1.3h1.7v1.7h-1.7zM21.1 22.6h1.0v1.1h-1.0zM1.9 0.6h1.2v1.0h-1.2zM9.1 26.3h2.0v1.8h-2.0zM24.9 3.4h0.9v1.4h-0.9zM14.4 29.1h1.0v1.2h-1.0zM15.8 8.7h2.0v0.9h-2.0zM25.4 28.4h1.1v0.8h-1.1zM29.6 19.1h1.3v1.4h-1.3zM27.2 20.3h1.5v1.9h-1.5zM11.9 24.2h1.0v1.8h-1.0zM5.7 9.9h1.5v0.9h-1.5zM26.9 12.7h0.8v1.7h-0.8zM30.3 10.1h1.4v2.0h-1.4zM15.2 2.5h1.6v2.0h-1.6zM5.9 15.5h0.9v0.9h-0.9zM28.7 30.7h0.9v1.1h-0.9zM24.3 26.2h1.2v0.8h-1.2zM0.2 6.8h1.1v1.0h-1.1zM18.7 7.5h1.1v1.2h-1.1zM25.5 11.0h1.1v1.1h-1.1zM16.7 21.3h1.3v0.9h-1.3zM23.2 5.4h1.9v1.7h-1.9zM27.3 22.7h1.0v1.5h-1.0zM13.9 4.2h1.9v1.2h-1.9zM10.8 2.5h0.9v1.2h-0.9zM11.7 23.0h1.9v1.5h-1.9zM28.8 1.0h1.4v1.6h-1.4z" fill="#f0e08a"/><path d="M10.5 11.7h1.7v1.7h-1.7zM2.1 10.7h1.7v1.6h-1.7zM29.0 30.4h1.8v1.6h-1.8zM8.1 28.7h1.6v1.3h-1.6zM7.2 2.2h1.4v1.0h-1.4zM25.1 15.6h1.7v1.9h-1.7zM10.1 20.9h1.5v0.9h-1.5zM20.4 7.9h0.8v1.5h-0.8zM15.0 19.2h1.3v1.1h-1.3zM12.8 25.0h1.0v1.1h-1.0zM20.4 13.8h1.7v1.3h-1.7zM28.0 13.7h1.6v1.0h-1.6zM13.7 3.4h1.3v1.2h-1.3zM3.4 19.4h1.7v1.9h-1.7zM29.9 20.5h1.2v1.4h-1.2zM6.3 15.9h1.6v1.4h-1.6zM22.6 26.1h1.8v1.9h-1.8zM27.5 14.1h1.2v2.0h-1.2zM30.1 15.8h1.8v1.2h-1.8zM7.9 5.1h1.4v1.3h-1.4zM0.2 26.4h1.6v1.0h-1.6zM17.3 28.3h1.0v1.9h-1.0zM12.3 7.6h1.1v2.0h-1.1zM29.5 19.3h1.3v1.6h-1.3zM23.1 1.7h1.1v1.0h-1.1zM5.0 16.6h1.7v1.1h-1.7zM8.7 13.1h1.4v1.9h-1.4zM7.3 12.2h1.7v1.8h-1.7zM28.8 16.3h1.3v1.7h-1.3zM13.9 25.7h1.3v1.3h-1.3zM0.4 0.7h1.7v1.2h-1.7zM19.2 23.3h1.5v1.7h-1.5zM25.0 30.2h0.9v1.9h-0.9zM10.2 15.3h1.3v1.5h-1.3zM6.9 13.2h1.7v1.4h-1.7zM27.8 2.8h1.0v0.9h-1.0zM4.0 4.3h1.7v1.1h-1.7zM27.8 24.4h1.2v1.4h-1.2zM12.8 10.1h1.6v1.6h-1.6zM1.6 25.5h2.0v1.4h-2.0zM17.1 29.7h1.6v1.9h-1.6zM12.0 12.4h1.2v1.5h-1.2zM10.9 17.4h0.9v1.0h-0.9z" fill="#d070c0"/><path d="M15.9 0.5h1.8v0.8h-1.8zM23.5 15.2h1.2v0.9h-1.2zM14.8 21.7h2.0v2.0h-2.0zM3.1 25.6h0.9v1.1h-0.9zM11.5 11.9h1.8v2.0h-1.8zM26.6 4.7h1.0v1.8h-1.0zM14.5 10.3h1.1v1.7h-1.1zM4.2 23.6h1.9v1.2h-1.9zM1.6 7.3h1.7v0.9h-1.7zM7.7 23.9h1.8v1.5h-1.8zM3.3 5.8h1.0v1.5h-1.0zM1.3 24.5h1.9v1.8h-1.9zM1.6 5.0h1.4v1.8h-1.4zM18.6 20.2h0.8v1.3h-0.8zM26.8 30.0h1.1v1.4h-1.1zM12.7 2.2h1.2v1.8h-1.2zM15.8 3.1h1.7v1.4h-1.7zM29.9 25.3h2.0v1.9h-2.0zM18.7 28.7h1.5v1.1h-1.5zM10.9 20.1h1.1v1.1h-1.1zM7.9 15.1h1.6v2.0h-1.6zM15.3 14.8h1.9v0.8h-1.9zM25.0 17.1h0.9v1.1h-0.9zM8.5 27.9h0.8v1.3h-0.8zM14.8 10.9h1.0v1.6h-1.0zM1.1 5.4h1.7v1.8h-1.7zM24.5 2.2h1.2v1.2h-1.2zM29.8 5.8h1.0v1.5h-1.0zM22.2 7.1h1.6v2.0h-1.6zM12.2 29.4h0.9v1.3h-0.9zM10.3 5.3h1.4v1.3h-1.4zM18.7 4.9h1.0v0.9h-1.0zM7.7 27.9h1.8v1.3h-1.8zM9.3 6.9h1.4v1.0h-1.4zM29.1 25.4h1.4v1.2h-1.4zM7.5 30.5h0.8v1.0h-0.8zM11.4 5.2h1.3v1.0h-1.3zM10.5 5.5h1.3v1.6h-1.3zM4.2 7.0h1.0v1.8h-1.0zM6.1 29.2h1.4v1.0h-1.4zM6.9 22.6h1.8v1.7h-1.8zM4.7 17.3h1.1v1.5h-1.1zM9.4 18.5h1.6v1.9h-1.6z" fill="#90c0e0"/></pattern><pattern id="pm" patternUnits="userSpaceOnUse" width="30.94" height="30.94"><rect width="30.94" height="30.94" fill="#e2e2e2"/><path d="M9.3 17.1h0.8l1.0 7.7h-0.8zM5.0 -2.3h2.4l2.0 6.7h-2.4zM30.4 15.7h1.0l2.0 9.3h-1.0zM5.0 11.4h1.8l-1.0 4.5h-1.8zM20.5 -1.5h1.1l1.0 8.0h-1.1zM10.8 29.3h2.2l1.0 9.1h-2.2zM14.8 0.3h1.8l1.0 6.1h-1.8zM9.1 17.2h1.6l-2.0 7.5h-1.6zM0.8 8.2h1.9l-1.0 8.7h-1.9zM0.1 15.3h1.9l-1.0 3.8h-1.9zM14.7 19.8h2.0l2.0 9.3h-2.0z" fill="#a8a8a8"/><path d="M8.6 28.0h2.0l-2.0 4.1h-2.0zM19.1 11.5h1.0l-2.0 9.8h-1.0zM23.9 29.5h1.1l1.0 4.2h-1.1zM23.2 23.9h2.2l-2.0 3.3h-2.2zM7.3 16.8h2.1l2.0 6.2h-2.1zM1.7 28.0h0.9l-1.0 6.5h-0.9zM8.2 30.3h1.9l1.0 9.7h-1.9zM19.3 23.1h1.8l-2.0 8.0h-1.8zM7.8 -3.3h2.3l1.0 5.2h-2.3zM24.2 24.9h0.8l1.0 6.7h-0.8z" fill="#c4c4c4"/><path d="M9.2 8.6h1.1l-2.0 4.0h-1.1zM10.5 17.3h2.3l-2.0 5.4h-2.3zM28.5 17.7h1.1l2.0 6.7h-1.1zM8.9 13.5h1.9l1.0 5.5h-1.9zM22.8 24.9h1.4l2.0 8.9h-1.4zM8.8 -1.2h1.9l2.0 5.9h-1.9zM30.5 30.2h1.1l-2.0 9.2h-1.1zM17.0 6.5h1.3l1.0 6.6h-1.3zM28.9 23.3h1.2l-1.0 4.9h-1.2zM9.4 -3.9h2.0l2.0 7.1h-2.0z" fill="#fff"/><path d="M19.3 21.9h2.1l-2.0 9.6h-2.1zM24.0 4.7h0.9l1.0 4.1h-0.9zM26.9 9.3h1.0l-1.0 4.7h-1.0zM16.7 19.7h1.1l-1.0 9.6h-1.1zM9.6 24.6h1.6l2.0 5.2h-1.6zM21.8 -2.0h2.4l1.0 3.2h-2.4zM0.6 23.5h1.4l-2.0 7.0h-1.4zM1.4 2.3h2.3l-1.0 4.4h-2.3zM21.2 6.7h2.1l1.0 7.4h-2.1zM5.2 9.0h0.9l-1.0 5.9h-0.9zM29.7 17.9h1.6l-2.0 5.4h-1.6zM20.5 22.5h1.4l1.0 7.9h-1.4zM18.0 -3.6h1.7l1.0 4.8h-1.7zM29.6 14.1h1.6l1.0 4.2h-1.6zM29.9 12.9h1.7l1.0 5.9h-1.7zM25.3 10.6h2.1l1.0 7.5h-2.1zM28.4 14.8h1.3l2.0 9.1h-1.3zM13.4 3.9h1.3l2.0 9.8h-1.3zM29.7 27.9h1.8l1.0 4.8h-1.8zM13.3 24.2h1.8l2.0 7.8h-1.8z" fill="#8c8c8c"/><path d="M10.7 8.4h1.6l-2.0 8.4h-1.6zM14.8 6.2h1.4l2.0 4.0h-1.4zM8.4 23.3h2.2l1.0 5.5h-2.2zM4.4 16.8h1.7l-1.0 9.7h-1.7zM2.8 24.7h1.9l1.0 5.7h-1.9zM23.5 6.5h1.7l1.0 5.4h-1.7zM4.4 12.7h1.7l1.0 6.5h-1.7z" fill="#fafafa"/></pattern><pattern id="pgm" patternUnits="userSpaceOnUse" width="30.94" height="30.94"><rect width="30.94" height="30.94" fill="#8f8f8f"/><path d="M25.4 23.7h1.9l2.0 3.2h-1.9zM4.6 17.3h1.5l-1.0 4.1h-1.5zM22.4 -2.1h1.1l-1.0 9.7h-1.1zM16.0 16.7h1.8l2.0 8.2h-1.8zM29.0 20.0h1.9l-1.0 6.3h-1.9zM24.3 7.3h1.6l-1.0 4.7h-1.6zM0.2 -1.9h2.1l-2.0 5.9h-2.1zM17.0 30.6h1.7l-2.0 5.5h-1.7zM7.3 24.1h1.0l-1.0 6.3h-1.0z" fill="#222"/><path d="M10.9 18.9h2.4l1.0 4.0h-2.4zM2.0 4.2h2.2l-1.0 5.0h-2.2zM2.6 19.3h1.0l2.0 3.9h-1.0zM21.1 2.4h1.4l2.0 3.5h-1.4zM19.8 26.6h2.4l2.0 4.4h-2.4zM15.0 23.2h1.2l-1.0 5.8h-1.2z" fill="#444"/><path d="M4.8 16.5h2.2l-1.0 3.5h-2.2zM17.6 19.7h1.3l-1.0 9.6h-1.3zM26.7 11.8h1.5l-2.0 3.9h-1.5zM2.6 27.8h1.6l2.0 4.5h-1.6zM4.2 25.0h1.9l2.0 8.6h-1.9zM3.0 -2.8h1.1l2.0 3.3h-1.1zM0.0 12.4h2.3l2.0 7.3h-2.3zM26.9 12.4h1.7l-1.0 3.8h-1.7zM20.8 -2.8h2.3l1.0 5.4h-2.3zM6.2 -3.1h1.2l2.0 3.5h-1.2zM24.0 2.1h1.2l2.0 3.3h-1.2zM15.4 23.3h0.9l2.0 8.8h-0.9zM13.1 22.8h1.7l-2.0 3.9h-1.7zM21.3 27.1h2.5l-1.0 6.9h-2.5zM16.6 12.5h2.0l-1.0 8.6h-2.0zM1.9 20.5h0.9l1.0 4.4h-0.9z" fill="#ddd"/><path d="M20.0 29.3h2.0l1.0 3.9h-2.0zM17.2 19.1h2.1l-2.0 5.0h-2.1zM27.2 0.7h1.5l2.0 5.2h-1.5zM25.9 6.1h2.4l2.0 7.9h-2.4zM14.4 -0.5h1.1l1.0 4.1h-1.1zM2.3 21.5h1.9l1.0 6.1h-1.9z" fill="#fff"/><path d="M30.9 20.5h0.9l-1.0 8.9h-0.9zM12.1 12.2h2.4l-2.0 3.8h-2.4zM16.4 -1.1h1.3l-1.0 3.8h-1.3z" fill="#666"/></pattern><pattern id="pbl" patternUnits="userSpaceOnUse" width="30.94" height="30.94"><rect width="30.94" height="30.94" fill="#000"/><path d="M27.4 -1.5h3.4l-2.0 6.7h-3.4zM20.2 22.5h2.9l-2.0 7.1h-2.9zM21.7 5.4h3.5l-1.0 6.7h-3.5zM2.0 1.9h2.2l1.0 8.7h-2.2zM2.0 22.7h2.9l-2.0 4.2h-2.9zM25.6 11.2h2.1l-2.0 10.7h-2.1zM16.3 0.4h2.0l-1.0 6.5h-2.0zM22.5 -0.7h2.8l-1.0 5.2h-2.8zM23.7 11.2h2.6l2.0 6.3h-2.6zM14.3 11.2h2.6l-1.0 9.4h-2.6zM30.0 16.8h1.8l2.0 9.7h-1.8zM6.4 -4.0h3.8l1.0 5.7h-3.8zM14.4 3.0h3.6l1.0 6.1h-3.6zM11.3 24.3h3.5l-2.0 8.6h-3.5zM12.4 1.0h3.6l-2.0 7.4h-3.6zM5.2 -0.6h3.3l-1.0 10.3h-3.3zM14.8 12.4h2.8l-1.0 4.6h-2.8zM21.3 -0.4h3.0l2.0 8.3h-3.0z" fill="#fff"/></pattern><radialGradient id="gcl" cx="0.55" cy="0.45" r="0.6"><stop offset="0" stop-color="#adadad"/><stop offset="0.5" stop-color="#666"/><stop offset="1" stop-color="#2c2c2c"/></radialGradient>
</defs>
<rect x="0" y="66" width="1487" height="588" fill="#3e3e3e"/><rect x="0" y="66" width="1487" height="588" fill="url(#grid)"/>
<rect x="251.0" y="84.0" width="646.8" height="372.4" fill="#3a5777"/>
<rect x="251.0" y="84.0" width="646.8" height="372.4" fill="url(#gridb)"/>
<rect x="251.0" y="84.0" width="646.8" height="1.6" fill="#2b4669"/>
<text x="251.0" y="82.8" class="fl">Marble</text>
<rect x="920.5" y="256.1" width="314.7" height="154.9" fill="#3a5777"/>
<rect x="920.5" y="256.1" width="314.7" height="154.9" fill="url(#gridb)"/>
<rect x="920.5" y="256.1" width="314.7" height="1.6" fill="#2b4669"/>
<text x="920.5" y="254.9" class="fl">Marble</text>
<rect x="125.0" y="477.0" width="827.9" height="150.4" fill="#3a5777"/>
<rect x="125.0" y="477.0" width="827.9" height="150.4" fill="url(#gridb)"/>
<rect x="125.0" y="477.0" width="827.9" height="1.6" fill="#2b4669"/>
<text x="125.0" y="475.8" class="fl">Cracks</text>
<rect x="1122.2" y="467.2" width="113.0" height="62.8" fill="#3a5777"/>
<rect x="1122.2" y="467.2" width="113.0" height="62.8" fill="url(#gridb)"/>
<rect x="1122.2" y="467.2" width="113.0" height="1.6" fill="#2b4669"/>
<text x="1122.2" y="466.0" class="fl">Roughness</text>
<rect x="1251.3" y="461.6" width="89.3" height="198.4" fill="#3a5777"/>
<rect x="1251.3" y="461.6" width="89.3" height="198.4" fill="url(#gridb)"/>
<rect x="1251.3" y="461.6" width="89.3" height="1.6" fill="#2b4669"/>
<text x="1251.3" y="460.4" class="fl">Outputs</text>
<rect x="852.8" y="266.2" width="26.2" height="20.6" fill="#3d9255"/>
<text x="852.8" y="265.2" class="fl">Surface</text>
<rect x="920.5" y="294.3" width="24.9" height="39.5" fill="#3d9255"/>
<text x="920.5" y="293.3" class="fl">Undesirable Random</text>
<rect x="1111.4" y="292.3" width="25.7" height="25.9" fill="#3d9255"/>
<text x="1111.4" y="291.3" class="fl">Surface</text>
<rect x="1039.3" y="339.3" width="25.9" height="25.1" fill="#3d9255"/>
<text x="1039.3" y="338.3" class="fl">Main</text>
<rect x="1184.2" y="287.2" width="26.0" height="25.9" fill="#3d9255"/>
<text x="1184.2" y="286.2" class="fl">Cracks</text>
<rect x="1184.2" y="318.9" width="26.0" height="25.3" fill="#3d9255"/>
<text x="1184.2" y="317.9" class="fl">Value</text>
<rect x="827.0" y="576.9" width="26.0" height="26.2" fill="#3d9255"/>
<text x="827.0" y="575.9" class="fl">Cracks Mask</text>
<rect x="1210.3" y="474.0" width="24.9" height="24.9" fill="#3d9255"/>
<text x="1210.3" y="473.0" class="fl">Cracks</text>
<rect x="1194.8" y="520.6" width="25.7" height="25.4" fill="#3d9255"/>
<text x="1194.8" y="519.6" class="fl">Main</text>
<path d="M276.7 197.5C284.5 197.5 284.5 177.8 292.4 177.8" stroke="#c2c2c2" stroke-width="2.6" fill="none" stroke-linecap="round"/>
<path d="M276.7 197.5C284.5 197.5 284.5 198.4 292.4 198.4" stroke="#c2c2c2" stroke-width="2.6" fill="none" stroke-linecap="round"/>
<path d="M276.7 197.5C284.5 197.5 284.5 219.4 292.4 219.4" stroke="#c2c2c2" stroke-width="2.6" fill="none" stroke-linecap="round"/>
<path d="M307.6 177.8C312.8 177.8 312.8 177.8 318.0 177.8" stroke="#c2c2c2" stroke-width="2.6" fill="none" stroke-linecap="round"/>
<path d="M333.2 177.8C338.6 177.8 338.6 177.8 344.0 177.8" stroke="#f2a62e" stroke-width="3.0" fill="none" stroke-linecap="round"/>
<path d="M359.2 177.8C364.6 177.8 364.6 177.8 370.0 177.8" stroke="#c2c2c2" stroke-width="2.6" fill="none" stroke-linecap="round"/>
<path d="M385.2 177.8C390.4 177.8 390.4 177.8 395.6 177.8" stroke="#c2c2c2" stroke-width="2.6" fill="none" stroke-linecap="round"/>
<path d="M410.8 177.8C421.4 177.8 421.4 177.8 432.0 177.8" stroke="#c2c2c2" stroke-width="2.6" fill="none" stroke-linecap="round"/>
<path d="M447.2 177.8C452.5 177.8 452.5 177.8 457.8 177.8" stroke="#c2c2c2" stroke-width="2.6" fill="none" stroke-linecap="round"/>
<path d="M473.0 177.8C478.3 177.8 478.3 177.8 483.6 177.8" stroke="#c2c2c2" stroke-width="2.6" fill="none" stroke-linecap="round"/>
<path d="M498.8 177.8C504.2 177.8 504.2 177.8 509.6 177.8" stroke="#c2c2c2" stroke-width="2.6" fill="none" stroke-linecap="round"/>
<path d="M307.6 198.4C369.8 198.4 369.8 176.3 432.0 176.3" stroke="#c2c2c2" stroke-width="2.6" fill="none" stroke-linecap="round"/>
<path d="M307.6 219.4C369.8 219.4 369.8 179.8 432.0 179.8" stroke="#c2c2c2" stroke-width="2.6" fill="none" stroke-linecap="round"/>
<path d="M385.2 180.8C408.6 180.8 408.6 174.8 432.0 174.8" stroke="#c2c2c2" stroke-width="2.6" fill="none" stroke-linecap="round"/>
<path d="M359.2 180.8C395.6 180.8 395.6 180.8 432.0 180.8" stroke="#c2c2c2" stroke-width="2.6" fill="none" stroke-linecap="round"/>
<path d="M524.8 203.8C530.2 203.8 530.2 203.8 535.5 203.8" stroke="#c2c2c2" stroke-width="2.6" fill="none" stroke-linecap="round"/>
<path d="M550.7 203.8C556.1 203.8 556.1 203.8 561.5 203.8" stroke="#c2c2c2" stroke-width="2.6" fill="none" stroke-linecap="round"/>
<path d="M524.8 229.6C530.2 229.6 530.2 229.6 535.5 229.6" stroke="#c2c2c2" stroke-width="2.6" fill="none" stroke-linecap="round"/>
<path d="M550.7 229.6C556.1 229.6 556.1 229.6 561.5 229.6" stroke="#c2c2c2" stroke-width="2.6" fill="none" stroke-linecap="round"/>
<path d="M524.8 255.4C530.2 255.4 530.2 255.4 535.5 255.4" stroke="#c2c2c2" stroke-width="2.6" fill="none" stroke-linecap="round"/>
<path d="M550.7 255.4C556.1 255.4 556.1 255.4 561.5 255.4" stroke="#c2c2c2" stroke-width="2.6" fill="none" stroke-linecap="round"/>
<path d="M359.2 173.8C385.5 173.8 483.3 146.9 509.6 146.9" stroke="#c2c2c2" stroke-width="2.6" fill="none" stroke-linecap="round"/>
<path d="M449.2 141.2C497.6 141.2 497.6 125.8 546.0 125.8" stroke="#c2c2c2" stroke-width="2.6" fill="none" stroke-linecap="round"/>
<path d="M449.2 141.2C458.7 141.2 474.1 177.8 483.6 177.8" stroke="#c2c2c2" stroke-width="2.6" fill="none" stroke-linecap="round"/>
<path d="M524.8 146.9C535.4 146.9 535.4 125.8 546.0 125.8" stroke="#c2c2c2" stroke-width="2.6" fill="none" stroke-linecap="round"/>
<path d="M561.2 125.8C566.5 125.8 566.5 125.8 571.8 125.8" stroke="#c2c2c2" stroke-width="2.6" fill="none" stroke-linecap="round"/>
<path d="M587.0 125.8C595.0 125.8 595.0 95.2 602.9 95.2" stroke="#c2c2c2" stroke-width="2.6" fill="none" stroke-linecap="round"/>
<path d="M587.0 125.8C595.0 125.8 595.0 121.0 602.9 121.0" stroke="#c2c2c2" stroke-width="2.6" fill="none" stroke-linecap="round"/>
<path d="M587.0 125.8C595.0 125.8 595.0 146.9 602.9 146.9" stroke="#c2c2c2" stroke-width="2.6" fill="none" stroke-linecap="round"/>
<path d="M475.0 225.2C480.0 225.2 478.6 224.4 483.6 224.4" stroke="#c2c2c2" stroke-width="2.6" fill="none" stroke-linecap="round"/>
<path d="M498.8 224.4C503.7 224.4 504.7 177.8 509.6 177.8" stroke="#c2c2c2" stroke-width="2.6" fill="none" stroke-linecap="round"/>
<path d="M498.8 224.4C518.9 224.4 551.7 125.8 571.8 125.8" stroke="#c2c2c2" stroke-width="2.6" fill="none" stroke-linecap="round"/>
<path d="M524.8 177.8C541.2 177.8 581.4 203.8 597.8 203.8" stroke="#c2c2c2" stroke-width="2.6" fill="none" stroke-linecap="round"/>
<path d="M524.8 177.8C541.2 177.8 581.4 229.6 597.8 229.6" stroke="#c2c2c2" stroke-width="2.6" fill="none" stroke-linecap="round"/>
<path d="M524.8 177.8C541.2 177.8 581.4 255.4 597.8 255.4" stroke="#c2c2c2" stroke-width="2.6" fill="none" stroke-linecap="round"/>
<path d="M576.7 203.8C587.2 203.8 587.2 203.8 597.8 203.8" stroke="#c2c2c2" stroke-width="2.6" fill="none" stroke-linecap="round"/>
<path d="M576.7 229.6C587.2 229.6 587.2 229.6 597.8 229.6" stroke="#c2c2c2" stroke-width="2.6" fill="none" stroke-linecap="round"/>
<path d="M576.7 255.4C587.2 255.4 587.2 255.4 597.8 255.4" stroke="#c2c2c2" stroke-width="2.6" fill="none" stroke-linecap="round"/>
<path d="M576.7 203.8C589.1 203.8 590.5 95.2 602.9 95.2" stroke="#c2c2c2" stroke-width="2.6" fill="none" stroke-linecap="round"/>
<path d="M576.7 229.6C589.1 229.6 590.5 121.0 602.9 121.0" stroke="#c2c2c2" stroke-width="2.6" fill="none" stroke-linecap="round"/>
<path d="M576.7 255.4C589.1 255.4 590.5 146.9 602.9 146.9" stroke="#c2c2c2" stroke-width="2.6" fill="none" stroke-linecap="round"/>
<path d="M618.1 95.2C639.0 95.2 639.0 95.2 659.8 95.2" stroke="#c2c2c2" stroke-width="2.6" fill="none" stroke-linecap="round"/>
<path d="M618.1 121.0C623.4 121.0 623.4 121.0 628.7 121.0" stroke="#c2c2c2" stroke-width="2.6" fill="none" stroke-linecap="round"/>
<path d="M643.9 121.0C650.3 121.0 653.4 97.2 659.8 97.2" stroke="#c2c2c2" stroke-width="2.6" fill="none" stroke-linecap="round"/>
<path d="M618.1 146.9C623.4 146.9 623.4 146.9 628.7 146.9" stroke="#c2c2c2" stroke-width="2.6" fill="none" stroke-linecap="round"/>
<path d="M643.9 146.9C651.1 146.9 652.6 99.2 659.8 99.2" stroke="#c2c2c2" stroke-width="2.6" fill="none" stroke-linecap="round"/>
<path d="M675.0 95.2C680.3 95.2 680.3 95.2 685.6 95.2" stroke="#c2c2c2" stroke-width="2.6" fill="none" stroke-linecap="round"/>
<path d="M700.8 95.2C711.4 95.2 711.4 95.2 721.9 95.2" stroke="#c2c2c2" stroke-width="2.6" fill="none" stroke-linecap="round"/>
<path d="M737.1 95.2C742.4 95.2 742.4 95.2 747.7 95.2" stroke="#c2c2c2" stroke-width="2.6" fill="none" stroke-linecap="round"/>
<path d="M732.1 131.2C739.1 131.2 740.7 97.2 747.7 97.2" stroke="#c2c2c2" stroke-width="2.6" fill="none" stroke-linecap="round"/>
<path d="M613.0 203.8C636.4 203.8 636.4 203.8 659.8 203.8" stroke="#c2c2c2" stroke-width="2.6" fill="none" stroke-linecap="round"/>
<path d="M613.0 229.6C618.4 229.6 618.4 229.6 623.7 229.6" stroke="#c2c2c2" stroke-width="2.6" fill="none" stroke-linecap="round"/>
<path d="M638.9 229.6C647.3 229.6 651.4 205.8 659.8 205.8" stroke="#c2c2c2" stroke-width="2.6" fill="none" stroke-linecap="round"/>
<path d="M613.0 255.4C618.4 255.4 618.4 255.4 623.7 255.4" stroke="#c2c2c2" stroke-width="2.6" fill="none" stroke-linecap="round"/>
<path d="M638.9 255.4C648.3 255.4 650.4 207.8 659.8 207.8" stroke="#c2c2c2" stroke-width="2.6" fill="none" stroke-linecap="round"/>
<path d="M675.0 203.8C680.3 203.8 680.3 203.8 685.6 203.8" stroke="#c2c2c2" stroke-width="2.6" fill="none" stroke-linecap="round"/>
<path d="M700.8 203.8C711.4 203.8 711.4 96.2 721.9 96.2" stroke="#c2c2c2" stroke-width="2.6" fill="none" stroke-linecap="round"/>
<path d="M271.7 389.1C279.5 389.1 279.5 369.4 287.4 369.4" stroke="#c2c2c2" stroke-width="2.6" fill="none" stroke-linecap="round"/>
<path d="M271.7 389.1C279.5 389.1 279.5 390.1 287.4 390.1" stroke="#c2c2c2" stroke-width="2.6" fill="none" stroke-linecap="round"/>
<path d="M271.7 389.1C279.5 389.1 279.5 411.1 287.4 411.1" stroke="#c2c2c2" stroke-width="2.6" fill="none" stroke-linecap="round"/>
<path d="M302.6 369.4C307.8 369.4 307.8 369.4 313.0 369.4" stroke="#c2c2c2" stroke-width="2.6" fill="none" stroke-linecap="round"/>
<path d="M328.2 369.4C333.6 369.4 333.6 369.4 339.0 369.4" stroke="#f2a62e" stroke-width="3.0" fill="none" stroke-linecap="round"/>
<path d="M354.2 369.4C359.6 369.4 359.6 369.4 365.0 369.4" stroke="#c2c2c2" stroke-width="2.6" fill="none" stroke-linecap="round"/>
<path d="M380.2 369.4C385.4 369.4 385.4 369.4 390.6 369.4" stroke="#c2c2c2" stroke-width="2.6" fill="none" stroke-linecap="round"/>
<path d="M405.8 369.4C416.4 369.4 416.4 369.4 427.0 369.4" stroke="#c2c2c2" stroke-width="2.6" fill="none" stroke-linecap="round"/>
<path d="M442.2 369.4C447.5 369.4 447.5 369.4 452.8 369.4" stroke="#c2c2c2" stroke-width="2.6" fill="none" stroke-linecap="round"/>
<path d="M468.0 369.4C473.3 369.4 473.3 369.4 478.6 369.4" stroke="#c2c2c2" stroke-width="2.6" fill="none" stroke-linecap="round"/>
<path d="M493.8 369.4C499.2 369.4 499.2 369.4 504.6 369.4" stroke="#c2c2c2" stroke-width="2.6" fill="none" stroke-linecap="round"/>
<path d="M302.6 390.1C364.8 390.1 364.8 367.9 427.0 367.9" stroke="#c2c2c2" stroke-width="2.6" fill="none" stroke-linecap="round"/>
<path d="M302.6 411.1C364.8 411.1 364.8 371.4 427.0 371.4" stroke="#c2c2c2" stroke-width="2.6" fill="none" stroke-linecap="round"/>
<path d="M380.2 372.4C403.6 372.4 403.6 366.4 427.0 366.4" stroke="#c2c2c2" stroke-width="2.6" fill="none" stroke-linecap="round"/>
<path d="M354.2 372.4C390.6 372.4 390.6 372.4 427.0 372.4" stroke="#c2c2c2" stroke-width="2.6" fill="none" stroke-linecap="round"/>
<path d="M519.8 395.4C525.2 395.4 525.2 395.4 530.5 395.4" stroke="#c2c2c2" stroke-width="2.6" fill="none" stroke-linecap="round"/>
<path d="M545.7 395.4C551.1 395.4 551.1 395.4 556.5 395.4" stroke="#c2c2c2" stroke-width="2.6" fill="none" stroke-linecap="round"/>
<path d="M519.8 421.2C525.2 421.2 525.2 421.2 530.5 421.2" stroke="#c2c2c2" stroke-width="2.6" fill="none" stroke-linecap="round"/>
<path d="M545.7 421.2C551.1 421.2 551.1 421.2 556.5 421.2" stroke="#c2c2c2" stroke-width="2.6" fill="none" stroke-linecap="round"/>
<path d="M519.8 447.1C525.2 447.1 525.2 447.1 530.5 447.1" stroke="#c2c2c2" stroke-width="2.6" fill="none" stroke-linecap="round"/>
<path d="M545.7 447.1C551.1 447.1 551.1 447.1 556.5 447.1" stroke="#c2c2c2" stroke-width="2.6" fill="none" stroke-linecap="round"/>
<path d="M354.2 365.4C380.5 365.4 478.3 338.6 504.6 338.6" stroke="#c2c2c2" stroke-width="2.6" fill="none" stroke-linecap="round"/>
<path d="M444.2 332.8C492.6 332.8 492.6 317.3 541.0 317.3" stroke="#c2c2c2" stroke-width="2.6" fill="none" stroke-linecap="round"/>
<path d="M444.2 332.8C453.7 332.8 469.1 369.4 478.6 369.4" stroke="#c2c2c2" stroke-width="2.6" fill="none" stroke-linecap="round"/>
<path d="M519.8 338.6C530.4 338.6 530.4 317.3 541.0 317.3" stroke="#c2c2c2" stroke-width="2.6" fill="none" stroke-linecap="round"/>
<path d="M556.2 317.3C561.5 317.3 561.5 317.3 566.8 317.3" stroke="#c2c2c2" stroke-width="2.6" fill="none" stroke-linecap="round"/>
<path d="M582.0 317.3C590.0 317.3 590.0 286.8 597.9 286.8" stroke="#c2c2c2" stroke-width="2.6" fill="none" stroke-linecap="round"/>
<path d="M582.0 317.3C590.0 317.3 590.0 312.6 597.9 312.6" stroke="#c2c2c2" stroke-width="2.6" fill="none" stroke-linecap="round"/>
<path d="M582.0 317.3C590.0 317.3 590.0 338.6 597.9 338.6" stroke="#c2c2c2" stroke-width="2.6" fill="none" stroke-linecap="round"/>
<path d="M470.0 416.8C475.0 416.8 473.6 416.1 478.6 416.1" stroke="#c2c2c2" stroke-width="2.6" fill="none" stroke-linecap="round"/>
<path d="M493.8 416.1C498.7 416.1 499.7 369.4 504.6 369.4" stroke="#c2c2c2" stroke-width="2.6" fill="none" stroke-linecap="round"/>
<path d="M493.8 416.1C513.9 416.1 546.7 317.3 566.8 317.3" stroke="#c2c2c2" stroke-width="2.6" fill="none" stroke-linecap="round"/>
<path d="M519.8 369.4C536.2 369.4 576.4 395.4 592.8 395.4" stroke="#c2c2c2" stroke-width="2.6" fill="none" stroke-linecap="round"/>
<path d="M519.8 369.4C536.2 369.4 576.4 421.2 592.8 421.2" stroke="#c2c2c2" stroke-width="2.6" fill="none" stroke-linecap="round"/>
<path d="M519.8 369.4C536.2 369.4 576.4 447.1 592.8 447.1" stroke="#c2c2c2" stroke-width="2.6" fill="none" stroke-linecap="round"/>
<path d="M571.7 395.4C582.2 395.4 582.2 395.4 592.8 395.4" stroke="#c2c2c2" stroke-width="2.6" fill="none" stroke-linecap="round"/>
<path d="M571.7 421.2C582.2 421.2 582.2 421.2 592.8 421.2" stroke="#c2c2c2" stroke-width="2.6" fill="none" stroke-linecap="round"/>
<path d="M571.7 447.1C582.2 447.1 582.2 447.1 592.8 447.1" stroke="#c2c2c2" stroke-width="2.6" fill="none" stroke-linecap="round"/>
<path d="M571.7 395.4C584.1 395.4 585.5 286.8 597.9 286.8" stroke="#c2c2c2" stroke-width="2.6" fill="none" stroke-linecap="round"/>
<path d="M571.7 421.2C584.1 421.2 585.5 312.6 597.9 312.6" stroke="#c2c2c2" stroke-width="2.6" fill="none" stroke-linecap="round"/>
<path d="M571.7 447.1C584.1 447.1 585.5 338.6 597.9 338.6" stroke="#c2c2c2" stroke-width="2.6" fill="none" stroke-linecap="round"/>
<path d="M613.1 286.8C634.0 286.8 634.0 286.8 654.8 286.8" stroke="#c2c2c2" stroke-width="2.6" fill="none" stroke-linecap="round"/>
<path d="M613.1 312.6C618.4 312.6 618.4 312.6 623.7 312.6" stroke="#c2c2c2" stroke-width="2.6" fill="none" stroke-linecap="round"/>
<path d="M638.9 312.6C645.3 312.6 648.4 288.8 654.8 288.8" stroke="#c2c2c2" stroke-width="2.6" fill="none" stroke-linecap="round"/>
<path d="M613.1 338.6C618.4 338.6 618.4 338.6 623.7 338.6" stroke="#c2c2c2" stroke-width="2.6" fill="none" stroke-linecap="round"/>
<path d="M638.9 338.6C646.1 338.6 647.6 290.8 654.8 290.8" stroke="#c2c2c2" stroke-width="2.6" fill="none" stroke-linecap="round"/>
<path d="M670.0 286.8C675.3 286.8 675.3 286.8 680.6 286.8" stroke="#c2c2c2" stroke-width="2.6" fill="none" stroke-linecap="round"/>
<path d="M695.8 286.8C706.4 286.8 706.4 286.8 716.9 286.8" stroke="#c2c2c2" stroke-width="2.6" fill="none" stroke-linecap="round"/>
<path d="M732.1 286.8C737.4 286.8 737.4 286.8 742.7 286.8" stroke="#c2c2c2" stroke-width="2.6" fill="none" stroke-linecap="round"/>
<path d="M727.1 322.8C734.1 322.8 735.7 288.8 742.7 288.8" stroke="#c2c2c2" stroke-width="2.6" fill="none" stroke-linecap="round"/>
<path d="M608.0 395.4C631.4 395.4 631.4 395.4 654.8 395.4" stroke="#c2c2c2" stroke-width="2.6" fill="none" stroke-linecap="round"/>
<path d="M608.0 421.2C613.4 421.2 613.4 421.2 618.7 421.2" stroke="#c2c2c2" stroke-width="2.6" fill="none" stroke-linecap="round"/>
<path d="M633.9 421.2C642.3 421.2 646.4 397.4 654.8 397.4" stroke="#c2c2c2" stroke-width="2.6" fill="none" stroke-linecap="round"/>
<path d="M608.0 447.1C613.4 447.1 613.4 447.1 618.7 447.1" stroke="#c2c2c2" stroke-width="2.6" fill="none" stroke-linecap="round"/>
<path d="M633.9 447.1C643.3 447.1 645.4 399.4 654.8 399.4" stroke="#c2c2c2" stroke-width="2.6" fill="none" stroke-linecap="round"/>
<path d="M670.0 395.4C675.3 395.4 675.3 395.4 680.6 395.4" stroke="#c2c2c2" stroke-width="2.6" fill="none" stroke-linecap="round"/>
<path d="M695.8 395.4C706.4 395.4 706.4 287.8 716.9 287.8" stroke="#c2c2c2" stroke-width="2.6" fill="none" stroke-linecap="round"/>
<path d="M806.1 277.8C811.1 277.8 806.5 277.8 811.5 277.8" stroke="#c2c2c2" stroke-width="2.6" fill="none" stroke-linecap="round"/>
<path d="M826.7 277.8C831.7 277.8 827.3 278.1 832.3 278.1" stroke="#c2c2c2" stroke-width="2.6" fill="none" stroke-linecap="round"/>
<path d="M847.5 278.1C852.9 278.1 852.9 278.4 858.3 278.4" stroke="#c2c2c2" stroke-width="2.6" fill="none" stroke-linecap="round"/>
<path d="M145.5 557.1C153.3 557.1 153.3 537.5 161.2 537.5" stroke="#c2c2c2" stroke-width="2.6" fill="none" stroke-linecap="round"/>
<path d="M145.5 557.1C153.3 557.1 153.3 558.1 161.2 558.1" stroke="#c2c2c2" stroke-width="2.6" fill="none" stroke-linecap="round"/>
<path d="M145.5 557.1C153.3 557.1 153.3 579.1 161.2 579.1" stroke="#c2c2c2" stroke-width="2.6" fill="none" stroke-linecap="round"/>
<path d="M176.4 537.5C181.6 537.5 181.6 537.5 186.8 537.5" stroke="#c2c2c2" stroke-width="2.6" fill="none" stroke-linecap="round"/>
<path d="M202.0 537.5C207.4 537.5 207.4 537.5 212.8 537.5" stroke="#f2a62e" stroke-width="3.0" fill="none" stroke-linecap="round"/>
<path d="M228.0 537.5C233.4 537.5 233.4 537.5 238.8 537.5" stroke="#c2c2c2" stroke-width="2.6" fill="none" stroke-linecap="round"/>
<path d="M254.0 537.5C259.2 537.5 259.2 537.5 264.4 537.5" stroke="#c2c2c2" stroke-width="2.6" fill="none" stroke-linecap="round"/>
<path d="M279.6 537.5C290.2 537.5 290.2 537.5 300.8 537.5" stroke="#c2c2c2" stroke-width="2.6" fill="none" stroke-linecap="round"/>
<path d="M316.0 537.5C321.3 537.5 321.3 537.5 326.6 537.5" stroke="#c2c2c2" stroke-width="2.6" fill="none" stroke-linecap="round"/>
<path d="M341.8 537.5C347.1 537.5 347.1 537.5 352.4 537.5" stroke="#c2c2c2" stroke-width="2.6" fill="none" stroke-linecap="round"/>
<path d="M367.6 537.5C373.0 537.5 373.0 537.5 378.4 537.5" stroke="#c2c2c2" stroke-width="2.6" fill="none" stroke-linecap="round"/>
<path d="M176.4 558.1C238.6 558.1 238.6 536.0 300.8 536.0" stroke="#c2c2c2" stroke-width="2.6" fill="none" stroke-linecap="round"/>
<path d="M176.4 579.1C238.6 579.1 238.6 539.5 300.8 539.5" stroke="#c2c2c2" stroke-width="2.6" fill="none" stroke-linecap="round"/>
<path d="M254.0 540.5C277.4 540.5 277.4 534.5 300.8 534.5" stroke="#c2c2c2" stroke-width="2.6" fill="none" stroke-linecap="round"/>
<path d="M228.0 540.5C264.4 540.5 264.4 540.5 300.8 540.5" stroke="#c2c2c2" stroke-width="2.6" fill="none" stroke-linecap="round"/>
<path d="M393.6 563.5C399.0 563.5 399.0 563.5 404.3 563.5" stroke="#c2c2c2" stroke-width="2.6" fill="none" stroke-linecap="round"/>
<path d="M419.5 563.5C424.9 563.5 424.9 563.5 430.3 563.5" stroke="#c2c2c2" stroke-width="2.6" fill="none" stroke-linecap="round"/>
<path d="M393.6 589.2C399.0 589.2 399.0 589.2 404.3 589.2" stroke="#c2c2c2" stroke-width="2.6" fill="none" stroke-linecap="round"/>
<path d="M419.5 589.2C424.9 589.2 424.9 589.2 430.3 589.2" stroke="#c2c2c2" stroke-width="2.6" fill="none" stroke-linecap="round"/>
<path d="M395.6 615.1C400.6 615.1 399.3 615.1 404.3 615.1" stroke="#c2c2c2" stroke-width="2.6" fill="none" stroke-linecap="round"/>
<path d="M419.5 615.1C424.9 615.1 424.9 615.1 430.3 615.1" stroke="#c2c2c2" stroke-width="2.6" fill="none" stroke-linecap="round"/>
<path d="M316.2 500.3C321.6 500.3 334.2 514.6 334.2 529.0" stroke="#c2c2c2" stroke-width="2.6" fill="none" stroke-linecap="round"/>
<path d="M342.4 584.0C347.7 584.0 347.7 584.0 353.0 584.0" stroke="#c2c2c2" stroke-width="2.6" fill="none" stroke-linecap="round"/>
<path d="M368.2 584.0C372.8 584.0 373.8 537.5 378.4 537.5" stroke="#c2c2c2" stroke-width="2.6" fill="none" stroke-linecap="round"/>
<path d="M393.6 537.5C410.0 537.5 450.2 563.6 466.6 563.6" stroke="#c2c2c2" stroke-width="2.6" fill="none" stroke-linecap="round"/>
<path d="M445.5 563.5C456.1 563.5 456.1 563.6 466.6 563.6" stroke="#c2c2c2" stroke-width="2.6" fill="none" stroke-linecap="round"/>
<path d="M481.8 563.6C494.8 563.6 516.0 563.6 529.0 563.6" stroke="#c2c2c2" stroke-width="2.6" fill="none" stroke-linecap="round"/>
<path d="M393.6 537.5C410.0 537.5 450.2 589.5 466.6 589.5" stroke="#c2c2c2" stroke-width="2.6" fill="none" stroke-linecap="round"/>
<path d="M445.5 589.2C456.1 589.2 456.1 589.5 466.6 589.5" stroke="#c2c2c2" stroke-width="2.6" fill="none" stroke-linecap="round"/>
<path d="M481.8 589.5C494.8 589.5 516.0 565.6 529.0 565.6" stroke="#c2c2c2" stroke-width="2.6" fill="none" stroke-linecap="round"/>
<path d="M393.6 537.5C410.0 537.5 450.2 615.2 466.6 615.2" stroke="#c2c2c2" stroke-width="2.6" fill="none" stroke-linecap="round"/>
<path d="M445.5 615.1C456.1 615.1 456.1 615.2 466.6 615.2" stroke="#c2c2c2" stroke-width="2.6" fill="none" stroke-linecap="round"/>
<path d="M481.8 615.2C494.8 615.2 516.0 567.6 529.0 567.6" stroke="#c2c2c2" stroke-width="2.6" fill="none" stroke-linecap="round"/>
<path d="M544.2 563.6C549.4 563.6 549.4 563.6 554.6 563.6" stroke="#c2c2c2" stroke-width="2.6" fill="none" stroke-linecap="round"/>
<path d="M569.8 563.6C575.1 563.6 575.1 563.6 580.4 563.6" stroke="#c2c2c2" stroke-width="2.6" fill="none" stroke-linecap="round"/>
<path d="M595.6 563.6C600.9 563.6 600.9 563.6 606.2 563.6" stroke="#c2c2c2" stroke-width="2.6" fill="none" stroke-linecap="round"/>
<path d="M621.4 563.6C717.4 563.6 717.4 563.6 813.3 563.6" stroke="#c2c2c2" stroke-width="2.6" fill="none" stroke-linecap="round"/>
<path d="M569.8 563.6C575.8 563.6 563.2 511.8 569.2 511.8" stroke="#c2c2c2" stroke-width="2.6" fill="none" stroke-linecap="round"/>
<path d="M590.4 511.8C595.7 511.8 595.7 511.8 601.0 511.8" stroke="#c2c2c2" stroke-width="2.6" fill="none" stroke-linecap="round"/>
<path d="M616.2 511.8C621.5 511.8 621.5 511.8 626.8 511.8" stroke="#f2a62e" stroke-width="1.2" fill="none" stroke-linecap="round"/>
<path d="M642.0 511.8C647.3 511.8 647.3 511.8 652.6 511.8" stroke="#c2c2c2" stroke-width="2.6" fill="none" stroke-linecap="round"/>
<path d="M667.8 511.8C673.3 511.8 673.3 511.8 678.8 511.8" stroke="#c2c2c2" stroke-width="2.6" fill="none" stroke-linecap="round"/>
<path d="M694.0 511.8C699.4 511.8 699.4 511.8 704.8 511.8" stroke="#c2c2c2" stroke-width="2.6" fill="none" stroke-linecap="round"/>
<path d="M720.0 511.8C732.5 511.8 749.0 543.1 761.5 543.1" stroke="#c2c2c2" stroke-width="2.6" fill="none" stroke-linecap="round"/>
<path d="M621.4 563.6C626.1 563.6 627.2 543.1 631.9 543.1" stroke="#c2c2c2" stroke-width="2.6" fill="none" stroke-linecap="round"/>
<path d="M647.1 543.1C652.5 543.1 652.5 542.6 658.0 542.6" stroke="#f2a62e" stroke-width="3.0" fill="none" stroke-linecap="round"/>
<path d="M673.2 542.6C678.5 542.6 678.5 543.1 683.8 543.1" stroke="#c2c2c2" stroke-width="2.6" fill="none" stroke-linecap="round"/>
<path d="M699.0 543.1C704.4 543.1 704.4 543.1 709.8 543.1" stroke="#c2c2c2" stroke-width="2.6" fill="none" stroke-linecap="round"/>
<path d="M725.0 543.1C730.3 543.1 730.3 543.1 735.6 543.1" stroke="#c2c2c2" stroke-width="2.6" fill="none" stroke-linecap="round"/>
<path d="M750.8 543.1C756.2 543.1 756.2 543.1 761.5 543.1" stroke="#c2c2c2" stroke-width="2.6" fill="none" stroke-linecap="round"/>
<path d="M776.7 543.1C782.1 543.1 782.1 543.1 787.5 543.1" stroke="#c2c2c2" stroke-width="2.6" fill="none" stroke-linecap="round"/>
<path d="M802.7 543.1C808.0 543.1 808.0 563.6 813.3 563.6" stroke="#c2c2c2" stroke-width="2.6" fill="none" stroke-linecap="round"/>
<path d="M828.5 563.6C836.5 563.6 824.2 589.5 832.2 589.5" stroke="#c2c2c2" stroke-width="2.6" fill="none" stroke-linecap="round"/>
<path d="M847.4 589.5C855.4 589.5 831.1 563.6 839.1 563.6" stroke="#c2c2c2" stroke-width="2.6" fill="none" stroke-linecap="round"/>
<path d="M854.3 563.6C859.8 563.6 859.8 563.6 865.2 563.6" stroke="#c2c2c2" stroke-width="2.6" fill="none" stroke-linecap="round"/>
<path d="M880.4 563.6C887.2 563.6 887.2 549.5 894.0 549.5" stroke="#c2c2c2" stroke-width="2.6" fill="none" stroke-linecap="round"/>
<path d="M818.0 501.2C840.8 501.2 871.2 547.5 894.0 547.5" stroke="#c2c2c2" stroke-width="2.6" fill="none" stroke-linecap="round"/>
<path d="M940.6 313.4C945.9 313.4 945.9 314.1 951.2 314.1" stroke="#c2c2c2" stroke-width="2.6" fill="none" stroke-linecap="round"/>
<path d="M940.6 345.1C945.4 345.1 946.4 316.1 951.2 316.1" stroke="#c2c2c2" stroke-width="2.6" fill="none" stroke-linecap="round"/>
<path d="M940.6 365.9C951.6 365.9 966.4 316.1 977.4 316.1" stroke="#c2c2c2" stroke-width="2.6" fill="none" stroke-linecap="round"/>
<path d="M966.4 314.1C971.9 314.1 971.9 314.1 977.4 314.1" stroke="#c2c2c2" stroke-width="2.6" fill="none" stroke-linecap="round"/>
<path d="M992.6 314.1C997.9 314.1 997.9 314.1 1003.1 314.1" stroke="#c2c2c2" stroke-width="2.6" fill="none" stroke-linecap="round"/>
<path d="M1018.3 314.1C1023.7 314.1 1023.7 314.1 1029.0 314.1" stroke="#c2c2c2" stroke-width="2.6" fill="none" stroke-linecap="round"/>
<path d="M1020.5 274.9C1024.5 274.9 1025.0 290.8 1029.0 290.8" stroke="#c2c2c2" stroke-width="2.6" fill="none" stroke-linecap="round"/>
<path d="M1044.2 290.8C1049.5 290.8 1049.5 290.8 1054.8 290.8" stroke="#c2c2c2" stroke-width="2.6" fill="none" stroke-linecap="round"/>
<path d="M1044.2 314.1C1054.3 314.1 1070.7 269.8 1080.8 269.8" stroke="#c2c2c2" stroke-width="2.6" fill="none" stroke-linecap="round"/>
<path d="M1044.2 314.1C1048.1 314.1 1055.8 319.1 1059.7 319.1" stroke="#c2c2c2" stroke-width="2.6" fill="none" stroke-linecap="round"/>
<path d="M1070.0 290.8C1076.6 290.8 1089.9 280.6 1096.5 280.6" stroke="#c2c2c2" stroke-width="2.6" fill="none" stroke-linecap="round"/>
<path d="M1070.0 289.8C1082.4 289.8 1112.5 267.4 1124.9 267.4" stroke="#c2c2c2" stroke-width="2.6" fill="none" stroke-linecap="round"/>
<path d="M1074.9 319.1C1079.7 319.1 1086.2 309.1 1091.0 309.1" stroke="#c2c2c2" stroke-width="2.6" fill="none" stroke-linecap="round"/>
<path d="M1096.0 269.8C1117.0 269.8 1168.5 330.6 1189.5 330.6" stroke="#f3ab33" stroke-width="3.2" fill="none" stroke-linecap="round"/>
<path d="M1111.7 282.6C1124.5 282.6 1150.2 278.6 1163.1 278.6" stroke="#f3ab33" stroke-width="3.0" fill="none" stroke-linecap="round"/>
<path d="M1140.1 267.4C1150.1 267.4 1127.4 285.8 1137.4 285.8" stroke="#f3ab33" stroke-width="1.8" fill="none" stroke-linecap="round"/>
<path d="M1152.6 285.8C1157.8 285.8 1157.8 280.6 1163.1 280.6" stroke="#f3ab33" stroke-width="1.2" fill="none" stroke-linecap="round"/>
<path d="M1106.2 309.1C1112.1 309.1 1111.1 332.4 1117.0 332.4" stroke="#f3ab33" stroke-width="3.0" fill="none" stroke-linecap="round"/>
<path d="M1132.2 308.2C1148.9 308.2 1100.3 329.4 1117.0 329.4" stroke="#f3ab33" stroke-width="1.0" fill="none" stroke-linecap="round"/>
<path d="M1059.8 353.1C1074.1 353.1 1102.7 335.4 1117.0 335.4" stroke="#f3ab33" stroke-width="1.2" fill="none" stroke-linecap="round"/>
<path d="M1116.6 352.8C1129.8 352.8 1129.8 358.4 1142.9 358.4" stroke="#f3ab33" stroke-width="3.0" fill="none" stroke-linecap="round"/>
<path d="M1132.2 332.4C1144.0 332.4 1131.1 355.4 1142.9 355.4" stroke="#f3ab33" stroke-width="1.0" fill="none" stroke-linecap="round"/>
<path d="M1158.1 358.4C1170.6 358.4 1146.2 330.1 1158.7 330.1" stroke="#f3ab33" stroke-width="1.0" fill="none" stroke-linecap="round"/>
<path d="M1178.3 280.6C1199.9 280.6 1137.1 324.1 1158.7 324.1" stroke="#f3ab33" stroke-width="1.0" fill="none" stroke-linecap="round"/>
<path d="M1173.9 327.1C1178.6 327.1 1184.8 332.6 1189.5 332.6" stroke="#f3ab33" stroke-width="3.0" fill="none" stroke-linecap="round"/>
<path d="M1204.7 301.1C1211.9 301.1 1223.8 330.4 1231.0 330.4" stroke="#f3ab33" stroke-width="1.0" fill="none" stroke-linecap="round"/>
<path d="M1204.7 332.6C1217.8 332.6 1217.8 332.4 1231.0 332.4" stroke="#f3ab33" stroke-width="1.2" fill="none" stroke-linecap="round"/>
<path d="M1204.7 358.4C1211.3 358.4 1224.4 335.4 1231.0 335.4" stroke="#c2c2c2" stroke-width="2.6" fill="none" stroke-linecap="round"/>
<path d="M1064.9 379.1C1072.8 379.1 1072.8 379.1 1080.8 379.1" stroke="#c2c2c2" stroke-width="2.6" fill="none" stroke-linecap="round"/>
<path d="M1096.0 379.1C1101.2 379.1 1101.2 379.1 1106.5 379.1" stroke="#c2c2c2" stroke-width="2.6" fill="none" stroke-linecap="round"/>
<path d="M1044.2 314.1C1080.3 314.1 1088.4 518.6 1124.5 518.6" stroke="#c2c2c2" stroke-width="2.6" fill="none" stroke-linecap="round"/>
<path d="M1074.9 319.1C1104.5 319.1 1111.0 492.3 1140.6 492.3" stroke="#c2c2c2" stroke-width="2.6" fill="none" stroke-linecap="round"/>
<path d="M1070.0 290.8C1107.5 290.8 1115.8 518.6 1153.3 518.6" stroke="#c2c2c2" stroke-width="2.6" fill="none" stroke-linecap="round"/>
<path d="M1096.0 399.4C1133.3 399.4 1151.9 487.6 1189.2 487.6" stroke="#c2c2c2" stroke-width="2.6" fill="none" stroke-linecap="round"/>
<path d="M1096.0 399.4C1122.8 399.4 1113.8 492.3 1140.6 492.3" stroke="#c2c2c2" stroke-width="2.6" fill="none" stroke-linecap="round"/>
<path d="M1096.0 399.4C1124.7 399.4 1124.7 520.6 1153.3 520.6" stroke="#c2c2c2" stroke-width="2.6" fill="none" stroke-linecap="round"/>
<path d="M1121.7 379.1C1142.5 379.1 1119.8 489.3 1140.6 489.3" stroke="#c2c2c2" stroke-width="2.6" fill="none" stroke-linecap="round"/>
<path d="M1096.0 399.4C1121.7 399.4 1163.8 358.4 1189.5 358.4" stroke="#c2c2c2" stroke-width="2.6" fill="none" stroke-linecap="round"/>
<path d="M1121.7 379.1C1138.4 379.1 1142.0 329.1 1158.7 329.1" stroke="#c2c2c2" stroke-width="2.6" fill="none" stroke-linecap="round"/>
<path d="M1121.7 379.1C1130.2 379.1 1134.4 361.4 1142.9 361.4" stroke="#c2c2c2" stroke-width="2.6" fill="none" stroke-linecap="round"/>
<path d="M1096.0 379.1C1110.2 379.1 1110.2 521.6 1124.5 521.6" stroke="#c2c2c2" stroke-width="2.6" fill="none" stroke-linecap="round"/>
<path d="M1155.8 492.3C1165.8 492.3 1143.3 516.6 1153.3 516.6" stroke="#c2c2c2" stroke-width="2.6" fill="none" stroke-linecap="round"/>
<path d="M1139.7 518.6C1146.5 518.6 1146.5 518.6 1153.3 518.6" stroke="#c2c2c2" stroke-width="2.6" fill="none" stroke-linecap="round"/>
<path d="M1168.5 518.6C1173.5 518.6 1166.1 518.6 1171.1 518.6" stroke="#c2c2c2" stroke-width="2.6" fill="none" stroke-linecap="round"/>
<path d="M1186.3 518.6C1192.4 518.6 1193.8 534.2 1199.9 534.2" stroke="#c2c2c2" stroke-width="2.6" fill="none" stroke-linecap="round"/>
<path d="M1215.1 534.2C1222.3 534.2 1223.8 515.5 1231.0 515.5" stroke="#c2c2c2" stroke-width="2.6" fill="none" stroke-linecap="round"/>
<path d="M1204.4 487.6C1209.7 487.6 1209.7 487.6 1214.9 487.6" stroke="#c2c2c2" stroke-width="2.6" fill="none" stroke-linecap="round"/>
<path d="M1204.4 487.6C1212.4 487.6 1223.0 513.5 1231.0 513.5" stroke="#c2c2c2" stroke-width="2.6" fill="none" stroke-linecap="round"/>
<path d="M1230.1 487.6C1242.6 487.6 1218.5 511.5 1231.0 511.5" stroke="#c2c2c2" stroke-width="2.6" fill="none" stroke-linecap="round"/>
<path d="M1246.2 513.5C1278.7 513.5 1286.0 505.9 1318.5 505.9" stroke="#c2c2c2" stroke-width="2.6" fill="none" stroke-linecap="round"/>
<path d="M1302.1 531.4C1310.3 531.4 1310.3 531.4 1318.5 531.4" stroke="#f3ab33" stroke-width="3.0" fill="none" stroke-linecap="round"/>
<path d="M1276.4 557.7C1297.5 557.7 1297.5 557.7 1318.5 557.7" stroke="#c2c2c2" stroke-width="2.6" fill="none" stroke-linecap="round"/>
<path d="M1276.4 557.7C1286.9 557.7 1276.4 531.4 1286.9 531.4" stroke="#c2c2c2" stroke-width="2.6" fill="none" stroke-linecap="round"/>
<path d="M1276.4 557.7C1287.5 557.7 1276.4 595.8 1287.5 595.8" stroke="#c2c2c2" stroke-width="2.6" fill="none" stroke-linecap="round"/>
<path d="M1302.7 595.8C1310.6 595.8 1310.6 594.1 1318.5 594.1" stroke="#c2c2c2" stroke-width="2.6" fill="none" stroke-linecap="round"/>
<path d="M1302.1 619.8C1310.3 619.8 1310.3 619.8 1318.5 619.8" stroke="#c2c2c2" stroke-width="0.8" fill="none" stroke-linecap="round"/>
<path d="M1246.2 332.4C1280.5 332.4 1284.2 477.6 1318.5 477.6" stroke="#f3ab33" stroke-width="1.0" fill="none" stroke-linecap="round"/>
<path d="M993.9 513.5C998.9 513.5 997.1 513.5 1002.1 513.5" stroke="#c2c2c2" stroke-width="2.6" fill="none" stroke-linecap="round"/>
<path d="M1017.3 513.5C1037.0 513.5 1037.0 560.2 1056.7 560.2" stroke="#c2c2c2" stroke-width="2.6" fill="none" stroke-linecap="round"/>
<path d="M1011.5 290.0H1029.0" stroke="#c2c2c2" stroke-width="2.4" stroke-linecap="round"/>
<path d="M997.5 290.0H1009.5" stroke="#999" stroke-width="0.6" stroke-dasharray="1.5 1"/>
<path d="M1026.0 379.3H1049.7" stroke="#c2c2c2" stroke-width="2.4" stroke-linecap="round"/>
<path d="M1012.0 379.3H1024.0" stroke="#999" stroke-width="0.6" stroke-dasharray="1.5 1"/>
<path d="M1064.0 398.1H1080.8" stroke="#c2c2c2" stroke-width="2.4" stroke-linecap="round"/>
<path d="M1050.0 398.1H1062.0" stroke="#999" stroke-width="0.6" stroke-dasharray="1.5 1"/>
<path d="M968.0 512.5H978.7" stroke="#c2c2c2" stroke-width="2.4" stroke-linecap="round"/>
<path d="M954.0 512.5H966.0" stroke="#999" stroke-width="0.6" stroke-dasharray="1.5 1"/>
<path d="M1037.5 556.0H1056.7" stroke="#c2c2c2" stroke-width="2.4" stroke-linecap="round"/>
<path d="M1023.5 556.0H1035.5" stroke="#999" stroke-width="0.6" stroke-dasharray="1.5 1"/>
<path d="M1072.0 561.0H1092.5" stroke="#c2c2c2" stroke-width="2.4" stroke-linecap="round"/>
<path d="M1058.0 561.0H1070.0" stroke="#999" stroke-width="0.6" stroke-dasharray="1.5 1"/>
<path d="M1245.0 556.5H1261.2" stroke="#c2c2c2" stroke-width="2.4" stroke-linecap="round"/>
<path d="M1231.0 556.5H1243.0" stroke="#999" stroke-width="0.6" stroke-dasharray="1.5 1"/>
<path d="M763 95C778 96 776 130 777 180S780 272 791 277" stroke="#c2c2c2" stroke-width="2.6" fill="none"/>
<path d="M758 286.5C772 286 778 278 791 277.5" stroke="#c2c2c2" stroke-width="2.6" fill="none"/>
<path d="M873.6 278C879 278 880 272.5 885 272.5" stroke="#c2c2c2" stroke-width="2.4" fill="none"/><circle cx="886" cy="272.5" r="1.8" fill="none" stroke="#aaa" stroke-width="0.6"/>
<path d="M909.3 549C922 549 926 562 940 562" stroke="#c2c2c2" stroke-width="2.4" fill="none"/><circle cx="941" cy="562" r="1.8" fill="none" stroke="#aaa" stroke-width="0.6"/>
<rect x="261.5" y="179.7" width="15.2" height="35.6" fill="#a81b1b" stroke="#7a1717" stroke-width="0.5"/>
<rect x="261.9" y="190.1" width="14.4" height="14.8" fill="url(#pm)"/>
<circle cx="261.5" cy="183.2" r="0.8" fill="#b9b9b9"/>
<circle cx="261.5" cy="186.7" r="0.8" fill="#b9b9b9"/>
<circle cx="261.5" cy="190.2" r="0.8" fill="#b9b9b9"/>
<circle cx="261.5" cy="193.7" r="0.8" fill="#b9b9b9"/>
<circle cx="261.5" cy="197.5" r="0.8" fill="#f39a1e"/>
<circle cx="261.5" cy="201.2" r="0.8" fill="#b9b9b9"/>
<circle cx="261.5" cy="207.2" r="0.8" fill="#b9b9b9"/>
<circle cx="261.5" cy="210.7" r="0.8" fill="#b9b9b9"/>
<rect x="292.4" y="172.9" width="15.2" height="11.4" fill="url(#pw)"/>
<rect x="292.4" y="169.4" width="15.2" height="3.5" fill="#a51c1c"/>
<rect x="292.4" y="169.4" width="15.2" height="14.9" fill="none" stroke="#8a2020" stroke-width="0.55"/>
<rect x="292.4" y="193.5" width="15.2" height="11.4" fill="url(#pws)"/>
<rect x="292.4" y="190.0" width="15.2" height="3.5" fill="#a51c1c"/>
<rect x="292.4" y="190.0" width="15.2" height="14.9" fill="none" stroke="#8a2020" stroke-width="0.55"/>
<rect x="292.4" y="214.5" width="15.2" height="11.4" fill="url(#pws)"/>
<rect x="292.4" y="211.0" width="15.2" height="3.5" fill="#a51c1c"/>
<rect x="292.4" y="211.0" width="15.2" height="14.9" fill="none" stroke="#8a2020" stroke-width="0.55"/>
<rect x="318.0" y="172.9" width="15.2" height="11.4" fill="url(#pco)"/>
<rect x="318.0" y="169.4" width="15.2" height="3.5" fill="#a51c1c"/>
<rect x="318.0" y="169.4" width="15.2" height="14.9" fill="none" stroke="#8a2020" stroke-width="0.55"/>
<rect x="344.0" y="172.9" width="15.2" height="11.4" fill="url(#pgm)"/>
<rect x="344.0" y="169.4" width="15.2" height="3.5" fill="#a51c1c"/>
<rect x="344.0" y="169.4" width="15.2" height="14.9" fill="none" stroke="#8a2020" stroke-width="0.55"/>
<rect x="370.0" y="172.9" width="15.2" height="11.4" fill="url(#pgm)"/>
<rect x="370.0" y="169.4" width="15.2" height="3.5" fill="#8eb453"/>
<rect x="370.0" y="169.4" width="15.2" height="14.9" fill="none" stroke="#3a3a3a" stroke-width="0.55"/>
<rect x="395.6" y="172.9" width="15.2" height="11.4" fill="url(#pbl)"/>
<rect x="395.6" y="169.4" width="15.2" height="3.5" fill="#a51c1c"/>
<rect x="395.6" y="169.4" width="15.2" height="14.9" fill="none" stroke="#8a2020" stroke-width="0.55"/>
<rect x="432.0" y="172.9" width="15.2" height="11.4" fill="url(#pw)"/>
<rect x="432.0" y="169.4" width="15.2" height="3.5" fill="#b4b4b4"/>
<rect x="432.0" y="169.4" width="15.2" height="14.9" fill="none" stroke="#3a3a3a" stroke-width="0.55"/>
<rect x="457.8" y="172.9" width="15.2" height="11.4" fill="url(#pbs)"/>
<rect x="457.8" y="169.4" width="15.2" height="3.5" fill="#a51c1c"/>
<rect x="457.8" y="169.4" width="15.2" height="14.9" fill="none" stroke="#8a2020" stroke-width="0.55"/>
<rect x="483.6" y="172.9" width="15.2" height="11.4" fill="url(#pbs)"/>
<rect x="483.6" y="169.4" width="15.2" height="3.5" fill="#3f6f70"/>
<rect x="483.6" y="169.4" width="15.2" height="14.9" fill="none" stroke="#3a3a3a" stroke-width="0.55"/>
<rect x="509.6" y="172.9" width="15.2" height="11.4" fill="url(#pbs)"/>
<rect x="509.6" y="169.4" width="15.2" height="3.5" fill="#3f6f70"/>
<rect x="509.6" y="169.4" width="15.2" height="14.9" fill="none" stroke="#3a3a3a" stroke-width="0.55"/>
<rect x="509.6" y="198.9" width="15.2" height="11.4" fill="url(#pn)"/>
<rect x="509.6" y="195.4" width="15.2" height="3.5" fill="#a51c1c"/>
<rect x="509.6" y="195.4" width="15.2" height="14.9" fill="none" stroke="#8a2020" stroke-width="0.55"/>
<rect x="535.5" y="198.9" width="15.2" height="11.4" fill="url(#pn)"/>
<rect x="535.5" y="195.4" width="15.2" height="3.5" fill="#a51c1c"/>
<rect x="535.5" y="195.4" width="15.2" height="14.9" fill="none" stroke="#8a2020" stroke-width="0.55"/>
<rect x="561.5" y="198.9" width="15.2" height="11.4" fill="url(#pn)"/>
<rect x="561.5" y="195.4" width="15.2" height="3.5" fill="#a51c1c"/>
<rect x="561.5" y="195.4" width="15.2" height="14.9" fill="none" stroke="#8a2020" stroke-width="0.55"/>
<rect x="509.6" y="224.7" width="15.2" height="11.4" fill="url(#pn)"/>
<rect x="509.6" y="221.2" width="15.2" height="3.5" fill="#a51c1c"/>
<rect x="509.6" y="221.2" width="15.2" height="14.9" fill="none" stroke="#8a2020" stroke-width="0.55"/>
<rect x="535.5" y="224.7" width="15.2" height="11.4" fill="url(#pn)"/>
<rect x="535.5" y="221.2" width="15.2" height="3.5" fill="#a51c1c"/>
<rect x="535.5" y="221.2" width="15.2" height="14.9" fill="none" stroke="#8a2020" stroke-width="0.55"/>
<rect x="561.5" y="224.7" width="15.2" height="11.4" fill="url(#pn)"/>
<rect x="561.5" y="221.2" width="15.2" height="3.5" fill="#a51c1c"/>
<rect x="561.5" y="221.2" width="15.2" height="14.9" fill="none" stroke="#8a2020" stroke-width="0.55"/>
<rect x="509.6" y="250.5" width="15.2" height="11.4" fill="url(#pn)"/>
<rect x="509.6" y="247.0" width="15.2" height="3.5" fill="#a51c1c"/>
<rect x="509.6" y="247.0" width="15.2" height="14.9" fill="none" stroke="#8a2020" stroke-width="0.55"/>
<rect x="535.5" y="250.5" width="15.2" height="11.4" fill="url(#pn)"/>
<rect x="535.5" y="247.0" width="15.2" height="3.5" fill="#a51c1c"/>
<rect x="535.5" y="247.0" width="15.2" height="14.9" fill="none" stroke="#8a2020" stroke-width="0.55"/>
<rect x="561.5" y="250.5" width="15.2" height="11.4" fill="url(#pn)"/>
<rect x="561.5" y="247.0" width="15.2" height="3.5" fill="#a51c1c"/>
<rect x="561.5" y="247.0" width="15.2" height="14.9" fill="none" stroke="#8a2020" stroke-width="0.55"/>
<rect x="434.0" y="123.4" width="15.2" height="35.6" fill="#a81b1b" stroke="#7a1717" stroke-width="0.5"/>
<rect x="434.4" y="133.8" width="14.4" height="14.8" fill="url(#pm)"/>
<circle cx="434.0" cy="126.9" r="0.8" fill="#b9b9b9"/>
<circle cx="434.0" cy="130.4" r="0.8" fill="#b9b9b9"/>
<circle cx="434.0" cy="133.9" r="0.8" fill="#b9b9b9"/>
<circle cx="434.0" cy="137.4" r="0.8" fill="#b9b9b9"/>
<circle cx="434.0" cy="141.2" r="0.8" fill="#f39a1e"/>
<circle cx="434.0" cy="144.9" r="0.8" fill="#b9b9b9"/>
<circle cx="434.0" cy="150.9" r="0.8" fill="#b9b9b9"/>
<circle cx="434.0" cy="154.4" r="0.8" fill="#b9b9b9"/>
<rect x="509.6" y="142.0" width="15.2" height="11.4" fill="url(#pbs)"/>
<rect x="509.6" y="138.5" width="15.2" height="3.5" fill="#a51c1c"/>
<rect x="509.6" y="138.5" width="15.2" height="14.9" fill="none" stroke="#8a2020" stroke-width="0.55"/>
<rect x="546.0" y="120.8" width="15.2" height="11.4" fill="url(#pb)"/>
<rect x="546.0" y="117.3" width="15.2" height="3.5" fill="#3f6f70"/>
<rect x="546.0" y="117.3" width="15.2" height="14.9" fill="none" stroke="#3a3a3a" stroke-width="0.55"/>
<rect x="571.8" y="120.8" width="15.2" height="11.4" fill="url(#pb)"/>
<rect x="571.8" y="117.3" width="15.2" height="3.5" fill="#3f6f70"/>
<rect x="571.8" y="117.3" width="15.2" height="14.9" fill="none" stroke="#3a3a3a" stroke-width="0.55"/>
<rect x="602.9" y="90.2" width="15.2" height="11.4" fill="url(#pb)"/>
<rect x="602.9" y="86.7" width="15.2" height="3.5" fill="#3f6f70"/>
<rect x="602.9" y="86.7" width="15.2" height="14.9" fill="none" stroke="#3a3a3a" stroke-width="0.55"/>
<rect x="602.9" y="116.0" width="15.2" height="11.4" fill="url(#pb)"/>
<rect x="602.9" y="112.5" width="15.2" height="3.5" fill="#3f6f70"/>
<rect x="602.9" y="112.5" width="15.2" height="14.9" fill="none" stroke="#3a3a3a" stroke-width="0.55"/>
<rect x="602.9" y="142.0" width="15.2" height="11.4" fill="url(#pb)"/>
<rect x="602.9" y="138.5" width="15.2" height="3.5" fill="#3f6f70"/>
<rect x="602.9" y="138.5" width="15.2" height="14.9" fill="none" stroke="#3a3a3a" stroke-width="0.55"/>
<rect x="628.7" y="116.0" width="15.2" height="11.4" fill="url(#pb)"/>
<rect x="628.7" y="112.5" width="15.2" height="3.5" fill="#7db077"/>
<rect x="628.7" y="112.5" width="15.2" height="14.9" fill="none" stroke="#3a3a3a" stroke-width="0.55"/>
<rect x="628.7" y="142.0" width="15.2" height="11.4" fill="url(#pb)"/>
<rect x="628.7" y="138.5" width="15.2" height="3.5" fill="#7db077"/>
<rect x="628.7" y="138.5" width="15.2" height="14.9" fill="none" stroke="#3a3a3a" stroke-width="0.55"/>
<rect x="659.8" y="90.2" width="15.2" height="11.4" fill="url(#pbs)"/>
<rect x="659.8" y="86.7" width="15.2" height="3.5" fill="#b4b4b4"/>
<rect x="659.8" y="86.7" width="15.2" height="14.9" fill="none" stroke="#3a3a3a" stroke-width="0.55"/>
<rect x="685.6" y="90.2" width="15.2" height="11.4" fill="url(#pbw)"/>
<rect x="685.6" y="86.7" width="15.2" height="3.5" fill="#b4b4b4"/>
<rect x="685.6" y="86.7" width="15.2" height="14.9" fill="none" stroke="#3a3a3a" stroke-width="0.55"/>
<rect x="721.9" y="90.2" width="15.2" height="11.4" fill="url(#pbw)"/>
<rect x="721.9" y="86.7" width="15.2" height="3.5" fill="#b4b4b4"/>
<rect x="721.9" y="86.7" width="15.2" height="14.9" fill="none" stroke="#3a3a3a" stroke-width="0.55"/>
<rect x="747.7" y="90.2" width="15.2" height="11.4" fill="url(#pbw)"/>
<rect x="747.7" y="86.7" width="15.2" height="3.5" fill="#3f6f70"/>
<rect x="747.7" y="86.7" width="15.2" height="14.9" fill="none" stroke="#3a3a3a" stroke-width="0.55"/>
<rect x="716.9" y="126.3" width="15.2" height="11.4" fill="url(#pgn)"/>
<rect x="716.9" y="122.8" width="15.2" height="3.5" fill="#a51c1c"/>
<rect x="716.9" y="122.8" width="15.2" height="14.9" fill="none" stroke="#8a2020" stroke-width="0.55"/>
<rect x="459.8" y="220.3" width="15.2" height="11.4" fill="url(#gcl)"/>
<rect x="459.8" y="216.8" width="15.2" height="3.5" fill="#a51c1c"/>
<rect x="459.8" y="216.8" width="15.2" height="14.9" fill="none" stroke="#8a2020" stroke-width="0.55"/>
<rect x="483.6" y="219.5" width="15.2" height="11.4" fill="url(#gcl)"/>
<rect x="483.6" y="216.0" width="15.2" height="3.5" fill="#a51c1c"/>
<rect x="483.6" y="216.0" width="15.2" height="14.9" fill="none" stroke="#8a2020" stroke-width="0.55"/>
<rect x="597.8" y="198.9" width="15.2" height="11.4" fill="url(#pbw)"/>
<rect x="597.8" y="195.4" width="15.2" height="3.5" fill="#3f6f70"/>
<rect x="597.8" y="195.4" width="15.2" height="14.9" fill="none" stroke="#3a3a3a" stroke-width="0.55"/>
<rect x="597.8" y="224.7" width="15.2" height="11.4" fill="url(#pbw)"/>
<rect x="597.8" y="221.2" width="15.2" height="3.5" fill="#3f6f70"/>
<rect x="597.8" y="221.2" width="15.2" height="14.9" fill="none" stroke="#3a3a3a" stroke-width="0.55"/>
<rect x="597.8" y="250.5" width="15.2" height="11.4" fill="url(#pbw)"/>
<rect x="597.8" y="247.0" width="15.2" height="3.5" fill="#3f6f70"/>
<rect x="597.8" y="247.0" width="15.2" height="14.9" fill="none" stroke="#3a3a3a" stroke-width="0.55"/>
<rect x="623.7" y="224.7" width="15.2" height="11.4" fill="url(#pbs)"/>
<rect x="623.7" y="221.2" width="15.2" height="3.5" fill="#7db077"/>
<rect x="623.7" y="221.2" width="15.2" height="14.9" fill="none" stroke="#3a3a3a" stroke-width="0.55"/>
<rect x="623.7" y="250.5" width="15.2" height="11.4" fill="url(#pbs)"/>
<rect x="623.7" y="247.0" width="15.2" height="3.5" fill="#7db077"/>
<rect x="623.7" y="247.0" width="15.2" height="14.9" fill="none" stroke="#3a3a3a" stroke-width="0.55"/>
<rect x="659.8" y="198.9" width="15.2" height="11.4" fill="url(#pbw)"/>
<rect x="659.8" y="195.4" width="15.2" height="3.5" fill="#b4b4b4"/>
<rect x="659.8" y="195.4" width="15.2" height="14.9" fill="none" stroke="#3a3a3a" stroke-width="0.55"/>
<rect x="685.6" y="198.9" width="15.2" height="11.4" fill="url(#pbw)"/>
<rect x="685.6" y="195.4" width="15.2" height="3.5" fill="#b4b4b4"/>
<rect x="685.6" y="195.4" width="15.2" height="14.9" fill="none" stroke="#3a3a3a" stroke-width="0.55"/>
<rect x="256.5" y="371.3" width="15.2" height="35.6" fill="#a81b1b" stroke="#7a1717" stroke-width="0.5"/>
<rect x="256.9" y="381.7" width="14.4" height="14.8" fill="url(#pm)"/>
<circle cx="256.5" cy="374.8" r="0.8" fill="#b9b9b9"/>
<circle cx="256.5" cy="378.3" r="0.8" fill="#b9b9b9"/>
<circle cx="256.5" cy="381.8" r="0.8" fill="#b9b9b9"/>
<circle cx="256.5" cy="385.3" r="0.8" fill="#b9b9b9"/>
<circle cx="256.5" cy="389.1" r="0.8" fill="#f39a1e"/>
<circle cx="256.5" cy="392.8" r="0.8" fill="#b9b9b9"/>
<circle cx="256.5" cy="398.8" r="0.8" fill="#b9b9b9"/>
<circle cx="256.5" cy="402.3" r="0.8" fill="#b9b9b9"/>
<rect x="287.4" y="364.5" width="15.2" height="11.4" fill="url(#pw)"/>
<rect x="287.4" y="361.0" width="15.2" height="3.5" fill="#a51c1c"/>
<rect x="287.4" y="361.0" width="15.2" height="14.9" fill="none" stroke="#8a2020" stroke-width="0.55"/>
<rect x="287.4" y="385.1" width="15.2" height="11.4" fill="url(#pws)"/>
<rect x="287.4" y="381.6" width="15.2" height="3.5" fill="#a51c1c"/>
<rect x="287.4" y="381.6" width="15.2" height="14.9" fill="none" stroke="#8a2020" stroke-width="0.55"/>
<rect x="287.4" y="406.1" width="15.2" height="11.4" fill="url(#pws)"/>
<rect x="287.4" y="402.6" width="15.2" height="3.5" fill="#a51c1c"/>
<rect x="287.4" y="402.6" width="15.2" height="14.9" fill="none" stroke="#8a2020" stroke-width="0.55"/>
<rect x="313.0" y="364.5" width="15.2" height="11.4" fill="url(#pco)"/>
<rect x="313.0" y="361.0" width="15.2" height="3.5" fill="#a51c1c"/>
<rect x="313.0" y="361.0" width="15.2" height="14.9" fill="none" stroke="#8a2020" stroke-width="0.55"/>
<rect x="339.0" y="364.5" width="15.2" height="11.4" fill="url(#pgm)"/>
<rect x="339.0" y="361.0" width="15.2" height="3.5" fill="#a51c1c"/>
<rect x="339.0" y="361.0" width="15.2" height="14.9" fill="none" stroke="#8a2020" stroke-width="0.55"/>
<rect x="365.0" y="364.5" width="15.2" height="11.4" fill="url(#pgm)"/>
<rect x="365.0" y="361.0" width="15.2" height="3.5" fill="#8eb453"/>
<rect x="365.0" y="361.0" width="15.2" height="14.9" fill="none" stroke="#3a3a3a" stroke-width="0.55"/>
<rect x="390.6" y="364.5" width="15.2" height="11.4" fill="url(#pbl)"/>
<rect x="390.6" y="361.0" width="15.2" height="3.5" fill="#a51c1c"/>
<rect x="390.6" y="361.0" width="15.2" height="14.9" fill="none" stroke="#8a2020" stroke-width="0.55"/>
<rect x="427.0" y="364.5" width="15.2" height="11.4" fill="url(#pw)"/>
<rect x="427.0" y="361.0" width="15.2" height="3.5" fill="#b4b4b4"/>
<rect x="427.0" y="361.0" width="15.2" height="14.9" fill="none" stroke="#3a3a3a" stroke-width="0.55"/>
<rect x="452.8" y="364.5" width="15.2" height="11.4" fill="url(#pbs)"/>
<rect x="452.8" y="361.0" width="15.2" height="3.5" fill="#a51c1c"/>
<rect x="452.8" y="361.0" width="15.2" height="14.9" fill="none" stroke="#8a2020" stroke-width="0.55"/>
<rect x="478.6" y="364.5" width="15.2" height="11.4" fill="url(#pbs)"/>
<rect x="478.6" y="361.0" width="15.2" height="3.5" fill="#3f6f70"/>
<rect x="478.6" y="361.0" width="15.2" height="14.9" fill="none" stroke="#3a3a3a" stroke-width="0.55"/>
<rect x="504.6" y="364.5" width="15.2" height="11.4" fill="url(#pbs)"/>
<rect x="504.6" y="361.0" width="15.2" height="3.5" fill="#3f6f70"/>
<rect x="504.6" y="361.0" width="15.2" height="14.9" fill="none" stroke="#3a3a3a" stroke-width="0.55"/>
<rect x="504.6" y="390.5" width="15.2" height="11.4" fill="url(#pn)"/>
<rect x="504.6" y="387.0" width="15.2" height="3.5" fill="#a51c1c"/>
<rect x="504.6" y="387.0" width="15.2" height="14.9" fill="none" stroke="#8a2020" stroke-width="0.55"/>
<rect x="530.5" y="390.5" width="15.2" height="11.4" fill="url(#pn)"/>
<rect x="530.5" y="387.0" width="15.2" height="3.5" fill="#a51c1c"/>
<rect x="530.5" y="387.0" width="15.2" height="14.9" fill="none" stroke="#8a2020" stroke-width="0.55"/>
<rect x="556.5" y="390.5" width="15.2" height="11.4" fill="url(#pn)"/>
<rect x="556.5" y="387.0" width="15.2" height="3.5" fill="#a51c1c"/>
<rect x="556.5" y="387.0" width="15.2" height="14.9" fill="none" stroke="#8a2020" stroke-width="0.55"/>
<rect x="504.6" y="416.3" width="15.2" height="11.4" fill="url(#pn)"/>
<rect x="504.6" y="412.8" width="15.2" height="3.5" fill="#a51c1c"/>
<rect x="504.6" y="412.8" width="15.2" height="14.9" fill="none" stroke="#8a2020" stroke-width="0.55"/>
<rect x="530.5" y="416.3" width="15.2" height="11.4" fill="url(#pn)"/>
<rect x="530.5" y="412.8" width="15.2" height="3.5" fill="#a51c1c"/>
<rect x="530.5" y="412.8" width="15.2" height="14.9" fill="none" stroke="#8a2020" stroke-width="0.55"/>
<rect x="556.5" y="416.3" width="15.2" height="11.4" fill="url(#pn)"/>
<rect x="556.5" y="412.8" width="15.2" height="3.5" fill="#a51c1c"/>
<rect x="556.5" y="412.8" width="15.2" height="14.9" fill="none" stroke="#8a2020" stroke-width="0.55"/>
<rect x="504.6" y="442.1" width="15.2" height="11.4" fill="url(#pn)"/>
<rect x="504.6" y="438.6" width="15.2" height="3.5" fill="#a51c1c"/>
<rect x="504.6" y="438.6" width="15.2" height="14.9" fill="none" stroke="#8a2020" stroke-width="0.55"/>
<rect x="530.5" y="442.1" width="15.2" height="11.4" fill="url(#pn)"/>
<rect x="530.5" y="438.6" width="15.2" height="3.5" fill="#a51c1c"/>
<rect x="530.5" y="438.6" width="15.2" height="14.9" fill="none" stroke="#8a2020" stroke-width="0.55"/>
<rect x="556.5" y="442.1" width="15.2" height="11.4" fill="url(#pn)"/>
<rect x="556.5" y="438.6" width="15.2" height="3.5" fill="#a51c1c"/>
<rect x="556.5" y="438.6" width="15.2" height="14.9" fill="none" stroke="#8a2020" stroke-width="0.55"/>
<rect x="429.0" y="315.0" width="15.2" height="35.6" fill="#a81b1b" stroke="#7a1717" stroke-width="0.5"/>
<rect x="429.4" y="325.4" width="14.4" height="14.8" fill="url(#pm)"/>
<circle cx="429.0" cy="318.5" r="0.8" fill="#b9b9b9"/>
<circle cx="429.0" cy="322.0" r="0.8" fill="#b9b9b9"/>
<circle cx="429.0" cy="325.5" r="0.8" fill="#b9b9b9"/>
<circle cx="429.0" cy="329.0" r="0.8" fill="#b9b9b9"/>
<circle cx="429.0" cy="332.8" r="0.8" fill="#f39a1e"/>
<circle cx="429.0" cy="336.5" r="0.8" fill="#b9b9b9"/>
<circle cx="429.0" cy="342.5" r="0.8" fill="#b9b9b9"/>
<circle cx="429.0" cy="346.0" r="0.8" fill="#b9b9b9"/>
<rect x="504.6" y="333.6" width="15.2" height="11.4" fill="url(#pbs)"/>
<rect x="504.6" y="330.1" width="15.2" height="3.5" fill="#a51c1c"/>
<rect x="504.6" y="330.1" width="15.2" height="14.9" fill="none" stroke="#8a2020" stroke-width="0.55"/>
<rect x="541.0" y="312.4" width="15.2" height="11.4" fill="url(#pb)"/>
<rect x="541.0" y="308.9" width="15.2" height="3.5" fill="#3f6f70"/>
<rect x="541.0" y="308.9" width="15.2" height="14.9" fill="none" stroke="#3a3a3a" stroke-width="0.55"/>
<rect x="566.8" y="312.4" width="15.2" height="11.4" fill="url(#pb)"/>
<rect x="566.8" y="308.9" width="15.2" height="3.5" fill="#3f6f70"/>
<rect x="566.8" y="308.9" width="15.2" height="14.9" fill="none" stroke="#3a3a3a" stroke-width="0.55"/>
<rect x="597.9" y="281.8" width="15.2" height="11.4" fill="url(#pb)"/>
<rect x="597.9" y="278.3" width="15.2" height="3.5" fill="#3f6f70"/>
<rect x="597.9" y="278.3" width="15.2" height="14.9" fill="none" stroke="#3a3a3a" stroke-width="0.55"/>
<rect x="597.9" y="307.6" width="15.2" height="11.4" fill="url(#pb)"/>
<rect x="597.9" y="304.1" width="15.2" height="3.5" fill="#3f6f70"/>
<rect x="597.9" y="304.1" width="15.2" height="14.9" fill="none" stroke="#3a3a3a" stroke-width="0.55"/>
<rect x="597.9" y="333.6" width="15.2" height="11.4" fill="url(#pb)"/>
<rect x="597.9" y="330.1" width="15.2" height="3.5" fill="#3f6f70"/>
<rect x="597.9" y="330.1" width="15.2" height="14.9" fill="none" stroke="#3a3a3a" stroke-width="0.55"/>
<rect x="623.7" y="307.6" width="15.2" height="11.4" fill="url(#pb)"/>
<rect x="623.7" y="304.1" width="15.2" height="3.5" fill="#7db077"/>
<rect x="623.7" y="304.1" width="15.2" height="14.9" fill="none" stroke="#3a3a3a" stroke-width="0.55"/>
<rect x="623.7" y="333.6" width="15.2" height="11.4" fill="url(#pb)"/>
<rect x="623.7" y="330.1" width="15.2" height="3.5" fill="#7db077"/>
<rect x="623.7" y="330.1" width="15.2" height="14.9" fill="none" stroke="#3a3a3a" stroke-width="0.55"/>
<rect x="654.8" y="281.8" width="15.2" height="11.4" fill="url(#pbs)"/>
<rect x="654.8" y="278.3" width="15.2" height="3.5" fill="#b4b4b4"/>
<rect x="654.8" y="278.3" width="15.2" height="14.9" fill="none" stroke="#3a3a3a" stroke-width="0.55"/>
<rect x="680.6" y="281.8" width="15.2" height="11.4" fill="url(#pbw)"/>
<rect x="680.6" y="278.3" width="15.2" height="3.5" fill="#b4b4b4"/>
<rect x="680.6" y="278.3" width="15.2" height="14.9" fill="none" stroke="#3a3a3a" stroke-width="0.55"/>
<rect x="716.9" y="281.8" width="15.2" height="11.4" fill="url(#pbw)"/>
<rect x="716.9" y="278.3" width="15.2" height="3.5" fill="#b4b4b4"/>
<rect x="716.9" y="278.3" width="15.2" height="14.9" fill="none" stroke="#3a3a3a" stroke-width="0.55"/>
<rect x="742.7" y="281.8" width="15.2" height="11.4" fill="url(#pbw)"/>
<rect x="742.7" y="278.3" width="15.2" height="3.5" fill="#3f6f70"/>
<rect x="742.7" y="278.3" width="15.2" height="14.9" fill="none" stroke="#3a3a3a" stroke-width="0.55"/>
<rect x="711.9" y="317.9" width="15.2" height="11.4" fill="url(#pgn)"/>
<rect x="711.9" y="314.4" width="15.2" height="3.5" fill="#a51c1c"/>
<rect x="711.9" y="314.4" width="15.2" height="14.9" fill="none" stroke="#8a2020" stroke-width="0.55"/>
<rect x="454.8" y="411.9" width="15.2" height="11.4" fill="url(#gcl)"/>
<rect x="454.8" y="408.4" width="15.2" height="3.5" fill="#a51c1c"/>
<rect x="454.8" y="408.4" width="15.2" height="14.9" fill="none" stroke="#8a2020" stroke-width="0.55"/>
<rect x="478.6" y="411.1" width="15.2" height="11.4" fill="url(#gcl)"/>
<rect x="478.6" y="407.6" width="15.2" height="3.5" fill="#a51c1c"/>
<rect x="478.6" y="407.6" width="15.2" height="14.9" fill="none" stroke="#8a2020" stroke-width="0.55"/>
<rect x="592.8" y="390.5" width="15.2" height="11.4" fill="url(#pbw)"/>
<rect x="592.8" y="387.0" width="15.2" height="3.5" fill="#3f6f70"/>
<rect x="592.8" y="387.0" width="15.2" height="14.9" fill="none" stroke="#3a3a3a" stroke-width="0.55"/>
<rect x="592.8" y="416.3" width="15.2" height="11.4" fill="url(#pbw)"/>
<rect x="592.8" y="412.8" width="15.2" height="3.5" fill="#3f6f70"/>
<rect x="592.8" y="412.8" width="15.2" height="14.9" fill="none" stroke="#3a3a3a" stroke-width="0.55"/>
<rect x="592.8" y="442.1" width="15.2" height="11.4" fill="url(#pbw)"/>
<rect x="592.8" y="438.6" width="15.2" height="3.5" fill="#3f6f70"/>
<rect x="592.8" y="438.6" width="15.2" height="14.9" fill="none" stroke="#3a3a3a" stroke-width="0.55"/>
<rect x="618.7" y="416.3" width="15.2" height="11.4" fill="url(#pbs)"/>
<rect x="618.7" y="412.8" width="15.2" height="3.5" fill="#7db077"/>
<rect x="618.7" y="412.8" width="15.2" height="14.9" fill="none" stroke="#3a3a3a" stroke-width="0.55"/>
<rect x="618.7" y="442.1" width="15.2" height="11.4" fill="url(#pbs)"/>
<rect x="618.7" y="438.6" width="15.2" height="3.5" fill="#7db077"/>
<rect x="618.7" y="438.6" width="15.2" height="14.9" fill="none" stroke="#3a3a3a" stroke-width="0.55"/>
<rect x="654.8" y="390.5" width="15.2" height="11.4" fill="url(#pbw)"/>
<rect x="654.8" y="387.0" width="15.2" height="3.5" fill="#b4b4b4"/>
<rect x="654.8" y="387.0" width="15.2" height="14.9" fill="none" stroke="#3a3a3a" stroke-width="0.55"/>
<rect x="680.6" y="390.5" width="15.2" height="11.4" fill="url(#pbw)"/>
<rect x="680.6" y="387.0" width="15.2" height="3.5" fill="#b4b4b4"/>
<rect x="680.6" y="387.0" width="15.2" height="14.9" fill="none" stroke="#3a3a3a" stroke-width="0.55"/>
<rect x="790.9" y="272.8" width="15.2" height="11.4" fill="url(#pbw)"/>
<rect x="790.9" y="269.3" width="15.2" height="3.5" fill="#b4b4b4"/>
<rect x="790.9" y="269.3" width="15.2" height="14.9" fill="none" stroke="#3a3a3a" stroke-width="0.55"/>
<rect x="811.5" y="272.8" width="15.2" height="11.4" fill="url(#pwn)"/>
<rect x="811.5" y="269.3" width="15.2" height="3.5" fill="#a51c1c"/>
<rect x="811.5" y="269.3" width="15.2" height="14.9" fill="none" stroke="#8a2020" stroke-width="0.55"/>
<rect x="832.3" y="273.1" width="15.2" height="11.4" fill="url(#pn)"/>
<rect x="832.3" y="269.6" width="15.2" height="3.5" fill="#a51c1c"/>
<rect x="832.3" y="269.6" width="15.2" height="14.9" fill="none" stroke="#8a2020" stroke-width="0.55"/>
<rect x="858.3" y="273.5" width="15.2" height="11.4" fill="url(#pbw)"/>
<rect x="858.3" y="270.0" width="15.2" height="3.5" fill="#b4b4b4"/>
<rect x="858.3" y="270.0" width="15.2" height="14.9" fill="none" stroke="#3a3a3a" stroke-width="0.55"/>
<rect x="130.3" y="539.3" width="15.2" height="35.6" fill="#a81b1b" stroke="#7a1717" stroke-width="0.5"/>
<rect x="130.7" y="549.7" width="14.4" height="14.8" fill="url(#pm)"/>
<circle cx="130.3" cy="542.8" r="0.8" fill="#b9b9b9"/>
<circle cx="130.3" cy="546.3" r="0.8" fill="#b9b9b9"/>
<circle cx="130.3" cy="549.8" r="0.8" fill="#b9b9b9"/>
<circle cx="130.3" cy="553.3" r="0.8" fill="#b9b9b9"/>
<circle cx="130.3" cy="557.1" r="0.8" fill="#f39a1e"/>
<circle cx="130.3" cy="560.8" r="0.8" fill="#b9b9b9"/>
<circle cx="130.3" cy="566.8" r="0.8" fill="#b9b9b9"/>
<circle cx="130.3" cy="570.3" r="0.8" fill="#b9b9b9"/>
<rect x="161.2" y="532.5" width="15.2" height="11.4" fill="url(#pw)"/>
<rect x="161.2" y="529.0" width="15.2" height="3.5" fill="#a51c1c"/>
<rect x="161.2" y="529.0" width="15.2" height="14.9" fill="none" stroke="#8a2020" stroke-width="0.55"/>
<rect x="161.2" y="553.1" width="15.2" height="11.4" fill="url(#pws)"/>
<rect x="161.2" y="549.6" width="15.2" height="3.5" fill="#a51c1c"/>
<rect x="161.2" y="549.6" width="15.2" height="14.9" fill="none" stroke="#8a2020" stroke-width="0.55"/>
<rect x="161.2" y="574.1" width="15.2" height="11.4" fill="url(#pws)"/>
<rect x="161.2" y="570.6" width="15.2" height="3.5" fill="#a51c1c"/>
<rect x="161.2" y="570.6" width="15.2" height="14.9" fill="none" stroke="#8a2020" stroke-width="0.55"/>
<rect x="186.8" y="532.5" width="15.2" height="11.4" fill="url(#pco)"/>
<rect x="186.8" y="529.0" width="15.2" height="3.5" fill="#a51c1c"/>
<rect x="186.8" y="529.0" width="15.2" height="14.9" fill="none" stroke="#8a2020" stroke-width="0.55"/>
<rect x="212.8" y="532.5" width="15.2" height="11.4" fill="url(#pgm)"/>
<rect x="212.8" y="529.0" width="15.2" height="3.5" fill="#a51c1c"/>
<rect x="212.8" y="529.0" width="15.2" height="14.9" fill="none" stroke="#8a2020" stroke-width="0.55"/>
<rect x="238.8" y="532.5" width="15.2" height="11.4" fill="url(#pgm)"/>
<rect x="238.8" y="529.0" width="15.2" height="3.5" fill="#8eb453"/>
<rect x="238.8" y="529.0" width="15.2" height="14.9" fill="none" stroke="#3a3a3a" stroke-width="0.55"/>
<rect x="264.4" y="532.5" width="15.2" height="11.4" fill="url(#pbl)"/>
<rect x="264.4" y="529.0" width="15.2" height="3.5" fill="#a51c1c"/>
<rect x="264.4" y="529.0" width="15.2" height="14.9" fill="none" stroke="#8a2020" stroke-width="0.55"/>
<rect x="300.8" y="532.5" width="15.2" height="11.4" fill="url(#pw)"/>
<rect x="300.8" y="529.0" width="15.2" height="3.5" fill="#b4b4b4"/>
<rect x="300.8" y="529.0" width="15.2" height="14.9" fill="none" stroke="#3a3a3a" stroke-width="0.55"/>
<rect x="326.6" y="532.5" width="15.2" height="11.4" fill="url(#pbs)"/>
<rect x="326.6" y="529.0" width="15.2" height="3.5" fill="#a51c1c"/>
<rect x="326.6" y="529.0" width="15.2" height="14.9" fill="none" stroke="#8a2020" stroke-width="0.55"/>
<rect x="352.4" y="532.5" width="15.2" height="11.4" fill="url(#pbs)"/>
<rect x="352.4" y="529.0" width="15.2" height="3.5" fill="#3f6f70"/>
<rect x="352.4" y="529.0" width="15.2" height="14.9" fill="none" stroke="#3a3a3a" stroke-width="0.55"/>
<rect x="378.4" y="532.5" width="15.2" height="11.4" fill="url(#pbs)"/>
<rect x="378.4" y="529.0" width="15.2" height="3.5" fill="#3f6f70"/>
<rect x="378.4" y="529.0" width="15.2" height="14.9" fill="none" stroke="#3a3a3a" stroke-width="0.55"/>
<rect x="378.4" y="558.5" width="15.2" height="11.4" fill="url(#pn)"/>
<rect x="378.4" y="555.0" width="15.2" height="3.5" fill="#a51c1c"/>
<rect x="378.4" y="555.0" width="15.2" height="14.9" fill="none" stroke="#8a2020" stroke-width="0.55"/>
<rect x="404.3" y="558.5" width="15.2" height="11.4" fill="url(#pn)"/>
<rect x="404.3" y="555.0" width="15.2" height="3.5" fill="#a51c1c"/>
<rect x="404.3" y="555.0" width="15.2" height="14.9" fill="none" stroke="#8a2020" stroke-width="0.55"/>
<rect x="430.3" y="558.5" width="15.2" height="11.4" fill="url(#pn)"/>
<rect x="430.3" y="555.0" width="15.2" height="3.5" fill="#a51c1c"/>
<rect x="430.3" y="555.0" width="15.2" height="14.9" fill="none" stroke="#8a2020" stroke-width="0.55"/>
<rect x="378.4" y="584.3" width="15.2" height="11.4" fill="url(#pn)"/>
<rect x="378.4" y="580.8" width="15.2" height="3.5" fill="#a51c1c"/>
<rect x="378.4" y="580.8" width="15.2" height="14.9" fill="none" stroke="#8a2020" stroke-width="0.55"/>
<rect x="404.3" y="584.3" width="15.2" height="11.4" fill="url(#pn)"/>
<rect x="404.3" y="580.8" width="15.2" height="3.5" fill="#a51c1c"/>
<rect x="404.3" y="580.8" width="15.2" height="14.9" fill="none" stroke="#8a2020" stroke-width="0.55"/>
<rect x="430.3" y="584.3" width="15.2" height="11.4" fill="url(#pn)"/>
<rect x="430.3" y="580.8" width="15.2" height="3.5" fill="#a51c1c"/>
<rect x="430.3" y="580.8" width="15.2" height="14.9" fill="none" stroke="#8a2020" stroke-width="0.55"/>
<rect x="380.4" y="610.1" width="15.2" height="11.4" fill="url(#pn)"/>
<rect x="380.4" y="606.6" width="15.2" height="3.5" fill="#a51c1c"/>
<rect x="380.4" y="606.6" width="15.2" height="14.9" fill="none" stroke="#8a2020" stroke-width="0.55"/>
<rect x="404.3" y="610.1" width="15.2" height="11.4" fill="url(#pn)"/>
<rect x="404.3" y="606.6" width="15.2" height="3.5" fill="#a51c1c"/>
<rect x="404.3" y="606.6" width="15.2" height="14.9" fill="none" stroke="#8a2020" stroke-width="0.55"/>
<rect x="430.3" y="610.1" width="15.2" height="11.4" fill="url(#pn)"/>
<rect x="430.3" y="606.6" width="15.2" height="3.5" fill="#a51c1c"/>
<rect x="430.3" y="606.6" width="15.2" height="14.9" fill="none" stroke="#8a2020" stroke-width="0.55"/>
<rect x="301.0" y="482.5" width="15.2" height="35.6" fill="#a81b1b" stroke="#7a1717" stroke-width="0.5"/>
<rect x="301.4" y="492.9" width="14.4" height="14.8" fill="url(#pm)"/>
<circle cx="301.0" cy="486.0" r="0.8" fill="#b9b9b9"/>
<circle cx="301.0" cy="489.5" r="0.8" fill="#b9b9b9"/>
<circle cx="301.0" cy="493.0" r="0.8" fill="#b9b9b9"/>
<circle cx="301.0" cy="496.5" r="0.8" fill="#b9b9b9"/>
<circle cx="301.0" cy="500.3" r="0.8" fill="#f39a1e"/>
<circle cx="301.0" cy="504.0" r="0.8" fill="#b9b9b9"/>
<circle cx="301.0" cy="510.0" r="0.8" fill="#b9b9b9"/>
<circle cx="301.0" cy="513.5" r="0.8" fill="#b9b9b9"/>
<rect x="327.2" y="579.0" width="15.2" height="11.4" fill="url(#gcl)"/>
<rect x="327.2" y="575.5" width="15.2" height="3.5" fill="#a51c1c"/>
<rect x="327.2" y="575.5" width="15.2" height="14.9" fill="none" stroke="#8a2020" stroke-width="0.55"/>
<rect x="353.0" y="579.0" width="15.2" height="11.4" fill="url(#gcl)"/>
<rect x="353.0" y="575.5" width="15.2" height="3.5" fill="#a51c1c"/>
<rect x="353.0" y="575.5" width="15.2" height="14.9" fill="none" stroke="#8a2020" stroke-width="0.55"/>
<rect x="466.6" y="558.6" width="15.2" height="11.4" fill="url(#pbs)"/>
<rect x="466.6" y="555.1" width="15.2" height="3.5" fill="#3f6f70"/>
<rect x="466.6" y="555.1" width="15.2" height="14.9" fill="none" stroke="#3a3a3a" stroke-width="0.55"/>
<rect x="466.6" y="584.5" width="15.2" height="11.4" fill="url(#pbs)"/>
<rect x="466.6" y="581.0" width="15.2" height="3.5" fill="#3f6f70"/>
<rect x="466.6" y="581.0" width="15.2" height="14.9" fill="none" stroke="#3a3a3a" stroke-width="0.55"/>
<rect x="466.6" y="610.3" width="15.2" height="11.4" fill="url(#pbs)"/>
<rect x="466.6" y="606.8" width="15.2" height="3.5" fill="#3f6f70"/>
<rect x="466.6" y="606.8" width="15.2" height="14.9" fill="none" stroke="#3a3a3a" stroke-width="0.55"/>
<rect x="529.0" y="558.6" width="15.2" height="11.4" fill="url(#pbw)"/>
<rect x="529.0" y="555.1" width="15.2" height="3.5" fill="#b4b4b4"/>
<rect x="529.0" y="555.1" width="15.2" height="14.9" fill="none" stroke="#3a3a3a" stroke-width="0.55"/>
<rect x="554.6" y="558.6" width="15.2" height="11.4" fill="url(#pbw)"/>
<rect x="554.6" y="555.1" width="15.2" height="3.5" fill="#b4b4b4"/>
<rect x="554.6" y="555.1" width="15.2" height="14.9" fill="none" stroke="#3a3a3a" stroke-width="0.55"/>
<rect x="580.4" y="558.6" width="15.2" height="11.4" fill="url(#pb)"/>
<rect x="580.4" y="555.1" width="15.2" height="3.5" fill="#a51c1c"/>
<rect x="580.4" y="555.1" width="15.2" height="14.9" fill="none" stroke="#8a2020" stroke-width="0.55"/>
<rect x="606.2" y="558.6" width="15.2" height="11.4" fill="url(#pb)"/>
<rect x="606.2" y="555.1" width="15.2" height="3.5" fill="#a51c1c"/>
<rect x="606.2" y="555.1" width="15.2" height="14.9" fill="none" stroke="#8a2020" stroke-width="0.55"/>
<rect x="575.2" y="506.8" width="15.2" height="11.4" fill="url(#pwn)"/>
<rect x="575.2" y="503.3" width="15.2" height="3.5" fill="#a51c1c"/>
<rect x="575.2" y="503.3" width="15.2" height="14.9" fill="none" stroke="#8a2020" stroke-width="0.55"/>
<rect x="601.0" y="506.8" width="15.2" height="11.4" fill="url(#pco)"/>
<rect x="601.0" y="503.3" width="15.2" height="3.5" fill="#a51c1c"/>
<rect x="601.0" y="503.3" width="15.2" height="14.9" fill="none" stroke="#8a2020" stroke-width="0.55"/>
<rect x="626.8" y="506.8" width="15.2" height="11.4" fill="url(#pbw)"/>
<rect x="626.8" y="503.3" width="15.2" height="3.5" fill="#a51c1c"/>
<rect x="626.8" y="503.3" width="15.2" height="14.9" fill="none" stroke="#8a2020" stroke-width="0.55"/>
<rect x="652.6" y="506.8" width="15.2" height="11.4" fill="url(#pbw)"/>
<rect x="652.6" y="503.3" width="15.2" height="3.5" fill="#8eb453"/>
<rect x="652.6" y="503.3" width="15.2" height="14.9" fill="none" stroke="#3a3a3a" stroke-width="0.55"/>
<rect x="678.8" y="506.8" width="15.2" height="11.4" fill="url(#pw)"/>
<rect x="678.8" y="503.3" width="15.2" height="3.5" fill="#a51c1c"/>
<rect x="678.8" y="503.3" width="15.2" height="14.9" fill="none" stroke="#8a2020" stroke-width="0.55"/>
<rect x="704.8" y="506.8" width="15.2" height="11.4" fill="url(#pbs)"/>
<rect x="704.8" y="503.3" width="15.2" height="3.5" fill="#a51c1c"/>
<rect x="704.8" y="503.3" width="15.2" height="14.9" fill="none" stroke="#8a2020" stroke-width="0.55"/>
<rect x="631.9" y="534.6" width="15.2" height="14.9" fill="#7f7ff0"/>
<rect x="631.9" y="534.6" width="15.2" height="14.9" fill="none" stroke="#3a3a3a" stroke-width="0.55"/>
<rect x="658.0" y="536.5" width="15.2" height="13.8" fill="url(#pw)"/>
<rect x="658.0" y="533.0" width="15.2" height="3.5" fill="#a51c1c"/>
<rect x="658.0" y="548.7" width="15.2" height="1.6" fill="#a51c1c"/>
<rect x="658.0" y="533.0" width="15.2" height="17.3" fill="none" stroke="#8a2020" stroke-width="0.55"/>
<rect x="683.8" y="538.1" width="15.2" height="11.4" fill="url(#pwn)"/>
<rect x="683.8" y="534.6" width="15.2" height="3.5" fill="#a51c1c"/>
<rect x="683.8" y="534.6" width="15.2" height="14.9" fill="none" stroke="#8a2020" stroke-width="0.55"/>
<rect x="709.8" y="538.1" width="15.2" height="11.4" fill="url(#pwn)"/>
<rect x="709.8" y="534.6" width="15.2" height="3.5" fill="#a51c1c"/>
<rect x="709.8" y="534.6" width="15.2" height="14.9" fill="none" stroke="#8a2020" stroke-width="0.55"/>
<rect x="735.6" y="538.1" width="15.2" height="11.4" fill="url(#pbw)"/>
<rect x="735.6" y="534.6" width="15.2" height="3.5" fill="#a51c1c"/>
<rect x="735.6" y="534.6" width="15.2" height="14.9" fill="none" stroke="#8a2020" stroke-width="0.55"/>
<rect x="761.5" y="538.1" width="15.2" height="11.4" fill="url(#pbw)"/>
<rect x="761.5" y="534.6" width="15.2" height="3.5" fill="#b4b4b4"/>
<rect x="761.5" y="534.6" width="15.2" height="14.9" fill="none" stroke="#3a3a3a" stroke-width="0.55"/>
<rect x="787.5" y="538.1" width="15.2" height="11.4" fill="url(#pbw)"/>
<rect x="787.5" y="534.6" width="15.2" height="3.5" fill="#a51c1c"/>
<rect x="787.5" y="534.6" width="15.2" height="14.9" fill="none" stroke="#8a2020" stroke-width="0.55"/>
<rect x="802.8" y="496.3" width="15.2" height="11.4" fill="url(#pgn)"/>
<rect x="802.8" y="492.8" width="15.2" height="3.5" fill="#a51c1c"/>
<rect x="802.8" y="492.8" width="15.2" height="14.9" fill="none" stroke="#8a2020" stroke-width="0.55"/>
<rect x="813.3" y="558.6" width="15.2" height="11.4" fill="url(#pb)"/>
<rect x="813.3" y="555.1" width="15.2" height="3.5" fill="#a51c1c"/>
<rect x="813.3" y="555.1" width="15.2" height="14.9" fill="none" stroke="#8a2020" stroke-width="0.55"/>
<rect x="839.1" y="558.6" width="15.2" height="11.4" fill="url(#pw)"/>
<rect x="839.1" y="555.1" width="15.2" height="3.5" fill="#a51c1c"/>
<rect x="839.1" y="555.1" width="15.2" height="14.9" fill="none" stroke="#8a2020" stroke-width="0.55"/>
<rect x="865.2" y="558.6" width="15.2" height="11.4" fill="url(#pw)"/>
<rect x="865.2" y="555.1" width="15.2" height="3.5" fill="#5f8f2a"/>
<rect x="865.2" y="555.1" width="15.2" height="14.9" fill="none" stroke="#3a3a3a" stroke-width="0.55"/>
<rect x="894.0" y="544.5" width="15.2" height="11.4" fill="url(#pw)"/>
<rect x="894.0" y="541.0" width="15.2" height="3.5" fill="#b4b4b4"/>
<rect x="894.0" y="541.0" width="15.2" height="14.9" fill="none" stroke="#3a3a3a" stroke-width="0.55"/>
<rect x="832.2" y="586.5" width="15.2" height="11.4" fill="url(#pbs)"/>
<rect x="832.2" y="583.0" width="15.2" height="3.5" fill="#b4b4b4"/>
<rect x="832.2" y="583.0" width="15.2" height="14.9" fill="none" stroke="#3a3a3a" stroke-width="0.55"/>
<rect x="925.4" y="295.6" width="15.2" height="35.6" fill="#a81b1b" stroke="#7a1717" stroke-width="0.5"/>
<rect x="925.8" y="306.0" width="14.4" height="14.8" fill="url(#pm)"/>
<circle cx="925.4" cy="299.1" r="0.8" fill="#b9b9b9"/>
<circle cx="925.4" cy="302.6" r="0.8" fill="#b9b9b9"/>
<circle cx="925.4" cy="306.1" r="0.8" fill="#b9b9b9"/>
<circle cx="925.4" cy="309.6" r="0.8" fill="#b9b9b9"/>
<circle cx="925.4" cy="313.4" r="0.8" fill="#f39a1e"/>
<circle cx="925.4" cy="317.1" r="0.8" fill="#b9b9b9"/>
<circle cx="925.4" cy="323.1" r="0.8" fill="#b9b9b9"/>
<circle cx="925.4" cy="326.6" r="0.8" fill="#b9b9b9"/>
<rect x="925.4" y="340.2" width="15.2" height="11.4" fill="url(#pgn)"/>
<rect x="925.4" y="336.7" width="15.2" height="3.5" fill="#a51c1c"/>
<rect x="925.4" y="336.7" width="15.2" height="14.9" fill="none" stroke="#8a2020" stroke-width="0.55"/>
<rect x="925.4" y="361.0" width="15.2" height="11.4" fill="url(#pwn)"/>
<rect x="925.4" y="357.5" width="15.2" height="3.5" fill="#a51c1c"/>
<rect x="925.4" y="357.5" width="15.2" height="14.9" fill="none" stroke="#8a2020" stroke-width="0.55"/>
<rect x="951.2" y="309.1" width="15.2" height="11.4" fill="url(#pm)"/>
<rect x="951.2" y="305.6" width="15.2" height="3.5" fill="#3f6f70"/>
<rect x="951.2" y="305.6" width="15.2" height="14.9" fill="none" stroke="#3a3a3a" stroke-width="0.55"/>
<rect x="977.4" y="309.1" width="15.2" height="11.4" fill="url(#pm)"/>
<rect x="977.4" y="305.6" width="15.2" height="3.5" fill="#3f6f70"/>
<rect x="977.4" y="305.6" width="15.2" height="14.9" fill="none" stroke="#3a3a3a" stroke-width="0.55"/>
<rect x="1003.1" y="309.1" width="15.2" height="11.4" fill="url(#pm)"/>
<rect x="1003.1" y="305.6" width="15.2" height="3.5" fill="#a51c1c"/>
<rect x="1003.1" y="305.6" width="15.2" height="14.9" fill="none" stroke="#8a2020" stroke-width="0.55"/>
<rect x="1029.0" y="309.1" width="15.2" height="11.4" fill="url(#pm)"/>
<rect x="1029.0" y="305.6" width="15.2" height="3.5" fill="#a51c1c"/>
<rect x="1029.0" y="305.6" width="15.2" height="14.9" fill="none" stroke="#8a2020" stroke-width="0.55"/>
<rect x="1005.3" y="270.0" width="15.2" height="11.4" fill="url(#pgn)"/>
<rect x="1005.3" y="266.5" width="15.2" height="3.5" fill="#a51c1c"/>
<rect x="1005.3" y="266.5" width="15.2" height="14.9" fill="none" stroke="#8a2020" stroke-width="0.55"/>
<rect x="1029.0" y="285.8" width="15.2" height="11.4" fill="url(#pb)"/>
<rect x="1029.0" y="282.3" width="15.2" height="3.5" fill="#b4b4b4"/>
<rect x="1029.0" y="282.3" width="15.2" height="14.9" fill="none" stroke="#3a3a3a" stroke-width="0.55"/>
<rect x="1054.8" y="285.8" width="15.2" height="11.4" fill="url(#pbs)"/>
<rect x="1054.8" y="282.3" width="15.2" height="3.5" fill="#a51c1c"/>
<rect x="1054.8" y="282.3" width="15.2" height="14.9" fill="none" stroke="#8a2020" stroke-width="0.55"/>
<rect x="1059.7" y="314.2" width="15.2" height="11.4" fill="url(#pm)"/>
<rect x="1059.7" y="310.7" width="15.2" height="3.5" fill="#a51c1c"/>
<rect x="1059.7" y="310.7" width="15.2" height="14.9" fill="none" stroke="#8a2020" stroke-width="0.55"/>
<rect x="1080.8" y="264.9" width="15.2" height="11.4" fill="url(#pm)"/>
<rect x="1080.8" y="261.4" width="15.2" height="3.5" fill="#4c6b2b"/>
<rect x="1080.8" y="261.4" width="15.2" height="14.9" fill="none" stroke="#3a3a3a" stroke-width="0.55"/>
<rect x="1096.5" y="275.6" width="15.2" height="11.4" fill="url(#ptn)"/>
<rect x="1096.5" y="272.1" width="15.2" height="3.5" fill="#4c6b2b"/>
<rect x="1096.5" y="272.1" width="15.2" height="14.9" fill="none" stroke="#3a3a3a" stroke-width="0.55"/>
<rect x="1124.9" y="262.5" width="15.2" height="11.4" fill="url(#pbs)"/>
<rect x="1124.9" y="259.0" width="15.2" height="3.5" fill="#4c6b2b"/>
<rect x="1124.9" y="259.0" width="15.2" height="14.9" fill="none" stroke="#3a3a3a" stroke-width="0.55"/>
<rect x="1137.4" y="280.9" width="15.2" height="11.4" fill="url(#ptn)"/>
<rect x="1137.4" y="277.4" width="15.2" height="3.5" fill="#b4b4b4"/>
<rect x="1137.4" y="277.4" width="15.2" height="14.9" fill="none" stroke="#3a3a3a" stroke-width="0.55"/>
<rect x="1163.1" y="275.6" width="15.2" height="11.4" fill="url(#ptn)"/>
<rect x="1163.1" y="272.1" width="15.2" height="3.5" fill="#b4b4b4"/>
<rect x="1163.1" y="272.1" width="15.2" height="14.9" fill="none" stroke="#3a3a3a" stroke-width="0.55"/>
<rect x="1091.0" y="304.2" width="15.2" height="11.4" fill="url(#pm)"/>
<rect x="1091.0" y="300.7" width="15.2" height="3.5" fill="#4c6b2b"/>
<rect x="1091.0" y="300.7" width="15.2" height="14.9" fill="none" stroke="#3a3a3a" stroke-width="0.55"/>
<rect x="1117.0" y="301.3" width="15.2" height="11.4" fill="#f5c46f"/>
<rect x="1117.0" y="297.8" width="15.2" height="3.5" fill="#7c2c3c"/>
<rect x="1117.0" y="297.8" width="15.2" height="14.9" fill="none" stroke="#6a2a36" stroke-width="0.55"/>
<rect x="1117.0" y="327.5" width="15.2" height="11.4" fill="url(#pcr)"/>
<rect x="1117.0" y="324.0" width="15.2" height="3.5" fill="#b4b4b4"/>
<rect x="1117.0" y="324.0" width="15.2" height="14.9" fill="none" stroke="#3a3a3a" stroke-width="0.55"/>
<rect x="1044.6" y="348.1" width="15.2" height="11.4" fill="#b7a68c"/>
<rect x="1044.6" y="344.6" width="15.2" height="3.5" fill="#7c2c3c"/>
<rect x="1044.6" y="344.6" width="15.2" height="14.9" fill="none" stroke="#6a2a36" stroke-width="0.55"/>
<rect x="1101.4" y="347.9" width="15.2" height="11.4" fill="url(#pcr)"/>
<rect x="1101.4" y="344.4" width="15.2" height="3.5" fill="#4c6b2b"/>
<rect x="1101.4" y="344.4" width="15.2" height="14.9" fill="none" stroke="#3a3a3a" stroke-width="0.55"/>
<rect x="1142.9" y="353.5" width="15.2" height="11.4" fill="url(#pcr)"/>
<rect x="1142.9" y="350.0" width="15.2" height="3.5" fill="#b4b4b4"/>
<rect x="1142.9" y="350.0" width="15.2" height="14.9" fill="none" stroke="#3a3a3a" stroke-width="0.55"/>
<rect x="1158.7" y="322.2" width="15.2" height="11.4" fill="url(#pcr)"/>
<rect x="1158.7" y="318.7" width="15.2" height="3.5" fill="#b4b4b4"/>
<rect x="1158.7" y="318.7" width="15.2" height="14.9" fill="none" stroke="#3a3a3a" stroke-width="0.55"/>
<rect x="1189.5" y="296.2" width="15.2" height="11.4" fill="#8e7152"/>
<rect x="1189.5" y="292.7" width="15.2" height="3.5" fill="#7c2c3c"/>
<rect x="1189.5" y="292.7" width="15.2" height="14.9" fill="none" stroke="#6a2a36" stroke-width="0.55"/>
<rect x="1189.5" y="327.7" width="15.2" height="11.4" fill="url(#pcr)"/>
<rect x="1189.5" y="324.2" width="15.2" height="3.5" fill="#b4b4b4"/>
<rect x="1189.5" y="324.2" width="15.2" height="14.9" fill="none" stroke="#3a3a3a" stroke-width="0.55"/>
<rect x="1231.0" y="327.5" width="15.2" height="11.4" fill="url(#pcr)"/>
<rect x="1231.0" y="324.0" width="15.2" height="3.5" fill="#b4b4b4"/>
<rect x="1231.0" y="324.0" width="15.2" height="14.9" fill="none" stroke="#3a3a3a" stroke-width="0.55"/>
<rect x="1189.5" y="353.5" width="15.2" height="11.4" fill="url(#pbs)"/>
<rect x="1189.5" y="350.0" width="15.2" height="3.5" fill="#a51c1c"/>
<rect x="1189.5" y="350.0" width="15.2" height="14.9" fill="none" stroke="#8a2020" stroke-width="0.55"/>
<rect x="1189.5" y="389.4" width="15.2" height="11.4" fill="url(#pb)"/>
<rect x="1189.5" y="385.9" width="15.2" height="3.5" fill="#7c2c3c"/>
<rect x="1189.5" y="385.9" width="15.2" height="14.9" fill="none" stroke="#6a2a36" stroke-width="0.55"/>
<rect x="1049.7" y="374.1" width="15.2" height="11.4" fill="url(#pwn)"/>
<rect x="1049.7" y="370.6" width="15.2" height="3.5" fill="#a51c1c"/>
<rect x="1049.7" y="370.6" width="15.2" height="14.9" fill="none" stroke="#8a2020" stroke-width="0.55"/>
<rect x="1080.8" y="374.1" width="15.2" height="11.4" fill="url(#pbw2)"/>
<rect x="1080.8" y="370.6" width="15.2" height="3.5" fill="#a51c1c"/>
<rect x="1080.8" y="370.6" width="15.2" height="14.9" fill="none" stroke="#8a2020" stroke-width="0.55"/>
<rect x="1106.5" y="374.1" width="15.2" height="11.4" fill="url(#pbw2)"/>
<rect x="1106.5" y="370.6" width="15.2" height="3.5" fill="#b4b4b4"/>
<rect x="1106.5" y="370.6" width="15.2" height="14.9" fill="none" stroke="#3a3a3a" stroke-width="0.55"/>
<rect x="1080.8" y="394.5" width="15.2" height="11.4" fill="url(#pws)"/>
<rect x="1080.8" y="391.0" width="15.2" height="3.5" fill="#a51c1c"/>
<rect x="1080.8" y="391.0" width="15.2" height="14.9" fill="none" stroke="#8a2020" stroke-width="0.55"/>
<rect x="1140.6" y="487.4" width="15.2" height="11.4" fill="url(#pdg)"/>
<rect x="1140.6" y="483.9" width="15.2" height="3.5" fill="#7db077"/>
<rect x="1140.6" y="483.9" width="15.2" height="14.9" fill="none" stroke="#3a3a3a" stroke-width="0.55"/>
<rect x="1124.5" y="513.7" width="15.2" height="11.4" fill="url(#pdg)"/>
<rect x="1124.5" y="510.2" width="15.2" height="3.5" fill="#7db077"/>
<rect x="1124.5" y="510.2" width="15.2" height="14.9" fill="none" stroke="#3a3a3a" stroke-width="0.55"/>
<rect x="1153.3" y="513.7" width="15.2" height="11.4" fill="url(#pdg)"/>
<rect x="1153.3" y="510.2" width="15.2" height="3.5" fill="#b4b4b4"/>
<rect x="1153.3" y="510.2" width="15.2" height="14.9" fill="none" stroke="#3a3a3a" stroke-width="0.55"/>
<rect x="1171.1" y="513.7" width="15.2" height="11.4" fill="url(#pdg)"/>
<rect x="1171.1" y="510.2" width="15.2" height="3.5" fill="#b4b4b4"/>
<rect x="1171.1" y="510.2" width="15.2" height="14.9" fill="none" stroke="#3a3a3a" stroke-width="0.55"/>
<rect x="1189.2" y="482.6" width="15.2" height="11.4" fill="url(#pbs)"/>
<rect x="1189.2" y="479.1" width="15.2" height="3.5" fill="#a51c1c"/>
<rect x="1189.2" y="479.1" width="15.2" height="14.9" fill="none" stroke="#8a2020" stroke-width="0.55"/>
<rect x="1214.9" y="482.6" width="15.2" height="11.4" fill="url(#pbs)"/>
<rect x="1214.9" y="479.1" width="15.2" height="3.5" fill="#a51c1c"/>
<rect x="1214.9" y="479.1" width="15.2" height="14.9" fill="none" stroke="#8a2020" stroke-width="0.55"/>
<rect x="1199.9" y="529.2" width="15.2" height="11.4" fill="url(#pdg)"/>
<rect x="1199.9" y="525.7" width="15.2" height="3.5" fill="#a51c1c"/>
<rect x="1199.9" y="525.7" width="15.2" height="14.9" fill="none" stroke="#8a2020" stroke-width="0.55"/>
<rect x="1231.0" y="508.5" width="15.2" height="11.4" fill="url(#pdg)"/>
<rect x="1231.0" y="505.0" width="15.2" height="3.5" fill="#b4b4b4"/>
<rect x="1231.0" y="505.0" width="15.2" height="14.9" fill="none" stroke="#3a3a3a" stroke-width="0.55"/>
<rect x="1318.5" y="472.7" width="15.2" height="11.4" fill="url(#pcr)"/>
<rect x="1318.5" y="469.2" width="15.2" height="3.5" fill="#8c8ba4"/>
<rect x="1318.5" y="469.2" width="15.2" height="14.9" fill="none" stroke="#3a3a3a" stroke-width="0.55"/>
<rect x="1318.5" y="501.0" width="15.2" height="11.4" fill="url(#pdg)"/>
<rect x="1318.5" y="497.5" width="15.2" height="3.5" fill="#8c8ba4"/>
<rect x="1318.5" y="497.5" width="15.2" height="14.9" fill="none" stroke="#3a3a3a" stroke-width="0.55"/>
<rect x="1286.9" y="522.9" width="15.2" height="14.9" fill="#8182f6"/>
<rect x="1286.9" y="522.9" width="15.2" height="14.9" fill="none" stroke="#3a3a3a" stroke-width="0.55"/>
<rect x="1318.5" y="526.4" width="15.2" height="11.4" fill="#8182f6"/>
<rect x="1318.5" y="522.9" width="15.2" height="3.5" fill="#8c8ba4"/>
<rect x="1318.5" y="522.9" width="15.2" height="14.9" fill="none" stroke="#3a3a3a" stroke-width="0.55"/>
<rect x="1261.2" y="552.7" width="15.2" height="11.4" fill="url(#pw)"/>
<rect x="1261.2" y="549.2" width="15.2" height="3.5" fill="#b4b4b4"/>
<rect x="1261.2" y="549.2" width="15.2" height="14.9" fill="none" stroke="#3a3a3a" stroke-width="0.55"/>
<rect x="1318.5" y="552.7" width="15.2" height="11.4" fill="url(#pw)"/>
<rect x="1318.5" y="549.2" width="15.2" height="3.5" fill="#8c8ba4"/>
<rect x="1318.5" y="549.2" width="15.2" height="14.9" fill="none" stroke="#3a3a3a" stroke-width="0.55"/>
<rect x="1287.5" y="590.8" width="15.2" height="11.4" fill="url(#pw)"/>
<rect x="1287.5" y="587.3" width="15.2" height="3.5" fill="#a51c1c"/>
<rect x="1287.5" y="587.3" width="15.2" height="14.9" fill="none" stroke="#8a2020" stroke-width="0.55"/>
<rect x="1318.5" y="589.1" width="15.2" height="11.4" fill="url(#pw)"/>
<rect x="1318.5" y="585.6" width="15.2" height="3.5" fill="#8c8ba4"/>
<rect x="1318.5" y="585.6" width="15.2" height="14.9" fill="none" stroke="#3a3a3a" stroke-width="0.55"/>
<rect x="1286.9" y="614.8" width="15.2" height="11.4" fill="#000"/>
<rect x="1286.9" y="611.3" width="15.2" height="3.5" fill="#7c2c3c"/>
<rect x="1286.9" y="611.3" width="15.2" height="14.9" fill="none" stroke="#6a2a36" stroke-width="0.55"/>
<rect x="1318.5" y="614.8" width="15.2" height="11.4" fill="#000"/>
<rect x="1318.5" y="611.3" width="15.2" height="3.5" fill="#8c8ba4"/>
<rect x="1318.5" y="611.3" width="15.2" height="14.9" fill="none" stroke="#3a3a3a" stroke-width="0.55"/>
<rect x="978.7" y="508.5" width="15.2" height="11.4" fill="url(#pbw)"/>
<rect x="978.7" y="505.0" width="15.2" height="3.5" fill="#a51c1c"/>
<rect x="978.7" y="505.0" width="15.2" height="14.9" fill="none" stroke="#8a2020" stroke-width="0.55"/>
<rect x="1002.1" y="508.5" width="15.2" height="11.4" fill="url(#pw)"/>
<rect x="1002.1" y="505.0" width="15.2" height="3.5" fill="#7db077"/>
<rect x="1002.1" y="505.0" width="15.2" height="14.9" fill="none" stroke="#3a3a3a" stroke-width="0.55"/>
<rect x="1056.7" y="555.2" width="15.2" height="11.4" fill="url(#pw)"/>
<rect x="1056.7" y="551.7" width="15.2" height="3.5" fill="#b4b4b4"/>
<rect x="1056.7" y="551.7" width="15.2" height="14.9" fill="none" stroke="#3a3a3a" stroke-width="0.55"/>
<circle cx="1318.6" cy="467.8" r="6.7" fill="#1d1d1d" stroke="#a9a9a9" stroke-width="1"/><path d="M1314.8 465.7l3.8 -2.2l3.8 2.2v4.3l-3.8 2.2l-3.8 -2.2zM1314.8 465.7l3.8 2.2l3.8 -2.2M1318.6 467.9v4.3" fill="#e8e8e8" stroke="#1d1d1d" stroke-width="0.8"/>
<circle cx="1334.4" cy="467.8" r="6.7" fill="#1d1d1d" stroke="#a9a9a9" stroke-width="1"/><rect x="1330.7" y="464.1" width="7.4" height="7.4" fill="#e8e8e8"/><rect x="1334.4" y="464.1" width="3.7" height="3.7" fill="#1d1d1d"/><rect x="1330.7" y="467.8" width="3.7" height="3.7" fill="#1d1d1d"/>
<circle cx="1318.2" cy="497.0" r="6.7" fill="#1d1d1d" stroke="#a9a9a9" stroke-width="1"/><path d="M1314.4 494.9l3.8 -2.2l3.8 2.2v4.3l-3.8 2.2l-3.8 -2.2zM1314.4 494.9l3.8 2.2l3.8 -2.2M1318.2 497.1v4.3" fill="#e8e8e8" stroke="#1d1d1d" stroke-width="0.8"/>
<circle cx="1318.2" cy="523.0" r="6.7" fill="#1d1d1d" stroke="#a9a9a9" stroke-width="1"/><path d="M1314.4 520.9l3.8 -2.2l3.8 2.2v4.3l-3.8 2.2l-3.8 -2.2zM1314.4 520.9l3.8 2.2l3.8 -2.2M1318.2 523.1v4.3" fill="#e8e8e8" stroke="#1d1d1d" stroke-width="0.8"/>
<circle cx="1318.2" cy="549.0" r="6.7" fill="#1d1d1d" stroke="#a9a9a9" stroke-width="1"/><path d="M1314.4 546.9l3.8 -2.2l3.8 2.2v4.3l-3.8 2.2l-3.8 -2.2zM1314.4 546.9l3.8 2.2l3.8 -2.2M1318.2 549.1v4.3" fill="#e8e8e8" stroke="#1d1d1d" stroke-width="0.8"/>
<circle cx="1318.2" cy="585.0" r="6.7" fill="#1d1d1d" stroke="#a9a9a9" stroke-width="1"/><path d="M1314.4 582.9l3.8 -2.2l3.8 2.2v4.3l-3.8 2.2l-3.8 -2.2zM1314.4 582.9l3.8 2.2l3.8 -2.2M1318.2 585.1v4.3" fill="#e8e8e8" stroke="#1d1d1d" stroke-width="0.8"/>
<circle cx="1318.2" cy="610.6" r="6.7" fill="#1d1d1d" stroke="#a9a9a9" stroke-width="1"/><path d="M1314.4 608.5l3.8 -2.2l3.8 2.2v4.3l-3.8 2.2l-3.8 -2.2zM1314.4 608.5l3.8 2.2l3.8 -2.2M1318.2 610.7v4.3" fill="#e8e8e8" stroke="#1d1d1d" stroke-width="0.8"/>
<circle cx="1286.6" cy="522.3" r="6.6" fill="#1d1d1d" stroke="#9a9a9a" stroke-width="0.8"/><path d="M1286.6 517.7l4.2 7.4h-8.4z" fill="#f6b21b"/><path d="M1286.6 520.1v3.2M1286.6 523.7v1" stroke="#1d1d1d" stroke-width="1"/>
<text x="3.5" y="650" class="warn">The <tspan font-weight="bold">Normal[Intensity]</tspan> parameter has some warnings. (2 times)</text>
</svg></div>
<div id="sep1"></div>
<div id="lp">
<div class="ptitle" style="width:748px">
<svg style="position:absolute;left:5px;top:4px" width="14" height="14" viewBox="0 0 14 14" ><path d="M7 0.800l5.800 2.900v6.600l-5.800 2.900l-5.800-2.900v-6.600z" fill="#dcdcdc"/><path d="M1.200 3.700l5.800 2.900l5.800-2.900M7 6.600v6.600" stroke="#2a2a2a" stroke-width="1.100" fill="none"/></svg>
<span class="ttl" style="left:26px;top:1.500px">Rounded Cube - OpenGL - 3D VIEW</span>
<svg style="position:absolute;left:667px;top:4px" width="13" height="13" viewBox="0 0 13 13" ><path d="M7.500 1.200l4.300 4.300l-1 0.300l-2 2l-0.200 2.700l-1.300 0.300l-4.800-4.800l0.300-1.300l2.700-0.200l2-2z" fill="#d6d6d6"/><path d="M4.800 8.200L1 12" stroke="#d6d6d6" stroke-width="1.200"/></svg><svg style="position:absolute;left:689px;top:5px" width="11" height="11" viewBox="0 0 11 11" ><rect x="0.600" y="0.600" width="9.300" height="9.300" fill="none" stroke="#d6d6d6" stroke-width="1.200"/><rect x="1.200" y="5.300" width="4" height="4" fill="#d6d6d6"/></svg><svg style="position:absolute;left:710px;top:4px" width="13" height="13" viewBox="0 0 13 13" ><rect x="3.500" y="3.500" width="6" height="6" fill="#d6d6d6"/><path d="M0.700 3.500V0.700H3.500M9.500 0.700h2.800V3.500M12.300 9.500v2.800H9.500M3.500 12.300H0.700V9.500" stroke="#d6d6d6" stroke-width="1.200" fill="none"/></svg><svg style="position:absolute;left:733px;top:5px" width="11" height="11" viewBox="0 0 11 11" ><path d="M1 1l9 9M10 1l-9 9" stroke="#d6d6d6" stroke-width="1.200"/></svg>
</div>
<div id="menubar">
<span style="left:9px">Scene</span>
<span style="left:53px">Materials</span>
<span style="left:110.5px">Lights</span>
<span style="left:155px">Camera</span>
<span style="left:205.5px">Environment</span>
<span style="left:279px">Display</span>
<span style="left:328.5px">Renderer</span>
</div>
<div id="vp3d"><div style="position:absolute;left:0;top:0;width:722px;height:337px;clip-path:polygon(146px 0,522px 0,522px 337px,144px 337px,144px 175px,146px 165px)"><svg width="800" height="420" viewBox="0 -40 800 420" style="position:absolute;left:0;top:0;transform-origin:0 0;transform:translate(-26px,-696px) matrix3d(0.566729,-0.519744,0,-0.000595401, -0.0679992,0.682965,0,-0.000234232, 0,0,1,0, 62.8234,722.4416,0,1) translate(0px,-40px)"><defs><radialGradient id="gwash"><stop offset="0" stop-color="#ece0c6" stop-opacity="0.95"/><stop offset="0.6" stop-color="#ece0c6" stop-opacity="0.7"/><stop offset="1" stop-color="#ece0c6" stop-opacity="0"/></radialGradient><filter id="f3d" x="0" y="0" width="100%" height="100%" color-interpolation-filters="sRGB"><feColorMatrix type="matrix" values="1.456 0 0 0 -0.298  0 1.48 0 0 -0.253  0 0 1.528 0 -0.157  0 0 0 1 0"/></filter></defs><g filter="url(#f3d)"><rect x="0" y="-40" width="800" height="420" fill="#dccaa8"/><use href="#tS" x="0" y="-370.2"/><use href="#tS" x="370.2" y="-370.2"/><use href="#tS" x="0" y="0"/><use href="#tS" x="370.2" y="0"/><ellipse cx="200" cy="150" rx="75" ry="95" fill="url(#gwash)"/><ellipse cx="197" cy="235" rx="45" ry="60" fill="url(#gwash)" opacity="0.6"/><use href="#tU" x="0" y="-370.2"/><use href="#tU" x="370.2" y="-370.2"/><use href="#tU" x="0" y="0"/><use href="#tU" x="370.2" y="0"/><use href="#tO" x="0" y="-370.2"/><use href="#tO" x="370.2" y="-370.2"/><use href="#tO" x="0" y="0"/><use href="#tO" x="370.2" y="0"/><use href="#tD" x="0" y="-370.2"/><use href="#tD" x="370.2" y="-370.2"/><use href="#tD" x="0" y="0"/><use href="#tD" x="370.2" y="0"/></g></svg></div><svg width="722" height="337" viewBox="26 696 722 337" style="position:absolute;left:0;top:0;mix-blend-mode:multiply"><defs><radialGradient id="gwarm"><stop offset="0" stop-color="#ffdc92" stop-opacity="1"/><stop offset="0.55" stop-color="#ffe4ac" stop-opacity="0.7"/><stop offset="1" stop-color="#ffe8c0" stop-opacity="0"/></radialGradient><clipPath id="cfront2"><path d="M172 696H548V1033H170V870L172 860Z"/></clipPath></defs><g clip-path="url(#cfront2)"><ellipse cx="200" cy="845" rx="75" ry="100" fill="url(#gwarm)"/><ellipse cx="192" cy="935" rx="45" ry="65" fill="url(#gwarm)" opacity="0.6"/></g></svg><svg width="722" height="337" viewBox="26 696 722 337" style="position:absolute;left:0;top:0"><defs>
<clipPath id="cfront"><path d="M172 696H548V1033H170V870L172 860Z"/></clipPath>
<clipPath id="cside"><path d="M547 696H607L623 717L626 1016L620 1033H547Z"/></clipPath>
<linearGradient id="gside" x1="0" x2="1"><stop offset="0" stop-color="#a5a29c"/><stop offset="0.12" stop-color="#bbb8b3"/><stop offset="0.4" stop-color="#cdcdce"/><stop offset="0.75" stop-color="#c3c5c9"/><stop offset="1" stop-color="#adb1b9"/></linearGradient>
<radialGradient id="gdk"><stop offset="0" stop-color="#6e6252" stop-opacity="0.6"/><stop offset="0.6" stop-color="#7a6e5c" stop-opacity="0.3"/><stop offset="1" stop-color="#7a6e5c" stop-opacity="0"/></radialGradient>
<linearGradient id="gedge" x1="0" x2="1"><stop offset="0" stop-color="#fff" stop-opacity="0"/><stop offset="0.6" stop-color="#fff" stop-opacity="0.75"/><stop offset="1" stop-color="#f4f1ea" stop-opacity="0.9"/></linearGradient>
</defs><g clip-path="url(#cfront)"><ellipse cx="243" cy="770" rx="14" ry="70" fill="url(#gdk)" opacity="0.4"/><ellipse cx="505" cy="1010" rx="50" ry="45" fill="url(#gdk)" opacity="0.5"/><rect x="520" y="696" width="28" height="337" fill="url(#gedge)"/></g><g clip-path="url(#cside)"><rect x="547" y="696" width="80" height="337" fill="url(#gside)"/><path d="M583.7 881.9q0.9 18.8 -1.3 37.6q-0.9 -18.8 1.3 -37.6zM593.1 760.0q2.0 12.2 0.4 24.4q-2.0 -12.2 -0.4 -24.4zM558.6 798.6q2.2 5.5 -0.0 10.9q-2.2 -5.5 0.0 -10.9zM554.9 1019.2q1.6 19.4 -0.6 38.9q-1.6 -19.4 0.6 -38.9zM563.0 704.9q-0.4 12.5 -2.2 24.9q0.4 -12.5 2.2 -24.9zM568.9 709.8q1.7 11.4 0.5 22.8q-1.7 -11.4 -0.5 -22.8zM588.3 908.1q1.4 12.0 -1.0 24.0q-1.4 -12.0 1.0 -24.0zM571.5 1024.2q2.3 19.9 0.0 39.9q-2.3 -19.9 -0.0 -39.9zM574.1 774.6q0.8 8.6 0.2 17.2q-0.8 -8.6 -0.2 -17.2zM580.0 975.1q2.8 10.2 0.5 20.4q-2.8 -10.2 -0.5 -20.4zM552.0 768.2q2.4 18.6 1.7 37.1q-2.4 -18.6 -1.7 -37.1zM579.8 723.7q1.1 14.1 -2.1 28.1q-1.1 -14.1 2.1 -28.1zM558.1 808.1q0.2 19.4 -3.9 38.9q-0.2 -19.4 3.9 -38.9zM569.2 732.8q1.7 5.0 -0.9 9.9q-1.7 -5.0 0.9 -9.9zM591.2 845.4q1.4 7.1 -1.4 14.1q-1.4 -7.1 1.4 -14.1zM597.1 737.9q0.2 10.7 -1.6 21.5q-0.2 -10.7 1.6 -21.5zM620.0 961.1q1.6 8.9 -1.5 17.7q-1.6 -8.9 1.5 -17.7zM579.6 977.7q1.5 14.3 1.4 28.5q-1.5 -14.3 -1.4 -28.5zM566.9 783.9q0.1 16.4 -2.3 32.7q-0.1 -16.4 2.3 -32.7zM557.1 729.3q0.8 13.3 -0.5 26.6q-0.8 -13.3 0.5 -26.6zM578.0 847.3q1.1 19.3 -0.9 38.7q-1.1 -19.3 0.9 -38.7zM612.7 759.4q2.5 6.5 0.2 12.9q-2.5 -6.5 -0.2 -12.9zM569.5 761.7q1.1 15.8 -2.7 31.7q-1.1 -15.8 2.7 -31.7zM618.5 986.7q0.0 13.7 -2.8 27.3q-0.0 -13.7 2.8 -27.3zM554.7 1012.9q1.4 7.8 -1.2 15.6q-1.4 -7.8 1.2 -15.6zM609.7 893.9q1.0 8.7 0.0 17.4q-1.0 -8.7 -0.0 -17.4zM556.8 774.2q2.1 12.9 -0.4 25.9q-2.1 -12.9 0.4 -25.9zM571.6 998.1q0.1 7.3 -1.1 14.5q-0.1 -7.3 1.1 -14.5zM583.2 719.6q1.2 6.8 -0.3 13.6q-1.2 -6.8 0.3 -13.6zM561.2 817.7q2.4 18.3 -0.3 36.5q-2.4 -18.3 0.3 -36.5zM600.4 889.9q-0.1 6.2 -1.5 12.5q0.1 -6.2 1.5 -12.5zM615.7 927.8q0.4 19.4 -0.5 38.8q-0.4 -19.4 0.5 -38.8zM585.8 937.4q1.6 9.1 -2.0 18.2q-1.6 -9.1 2.0 -18.2zM590.2 939.5q2.1 18.4 -0.0 36.8q-2.1 -18.4 0.0 -36.8zM607.5 997.4q2.3 9.6 0.6 19.3q-2.3 -9.6 -0.6 -19.3zM613.0 835.6q2.0 16.6 -0.8 33.3q-2.0 -16.6 0.8 -33.3zM595.7 824.3q0.4 13.3 -2.8 26.6q-0.4 -13.3 2.8 -26.6zM596.8 1022.8q1.1 18.1 -2.0 36.2q-1.1 -18.1 2.0 -36.2zM603.5 888.8q1.1 11.0 -2.3 22.1q-1.1 -11.0 2.3 -22.1zM604.5 709.7q0.5 13.6 -2.2 27.2q-0.5 -13.6 2.2 -27.2zM600.9 861.6q1.4 13.8 -2.1 27.7q-1.4 -13.8 2.1 -27.7zM552.8 797.8q-0.3 14.9 -2.7 29.7q0.3 -14.9 2.7 -29.7zM615.4 914.5q1.7 11.1 -1.4 22.1q-1.7 -11.1 1.4 -22.1zM598.6 764.5q2.6 10.9 0.8 21.8q-2.6 -10.9 -0.8 -21.8zM613.6 824.9q-0.1 13.3 -2.6 26.7q0.1 -13.3 2.6 -26.7zM586.8 972.1q2.8 17.6 1.5 35.2q-2.8 -17.6 -1.5 -35.2zM571.4 755.0q0.2 11.2 -1.9 22.4q-0.2 -11.2 1.9 -22.4zM581.0 903.4q1.5 11.9 0.5 23.8q-1.5 -11.9 -0.5 -23.8zM620.7 847.1q0.8 5.2 0.3 10.4q-0.8 -5.2 -0.3 -10.4zM554.9 930.3q1.4 13.1 0.4 26.3q-1.4 -13.1 -0.4 -26.3zM553.3 744.2q0.9 11.3 0.5 22.6q-0.9 -11.3 -0.5 -22.6zM568.6 745.8q1.6 4.8 -0.4 9.5q-1.6 -4.8 0.4 -9.5zM596.1 912.9q2.5 16.9 -0.1 33.8q-2.5 -16.9 0.1 -33.8zM566.0 854.4q0.3 6.9 -0.5 13.7q-0.3 -6.9 0.5 -13.7zM602.0 758.2q1.3 8.4 -0.0 16.7q-1.3 -8.4 0.0 -16.7zM588.4 899.7q1.6 16.1 0.5 32.2q-1.6 -16.1 -0.5 -32.2zM615.4 728.3q0.2 18.9 -3.7 37.8q-0.2 -18.9 3.7 -37.8zM583.7 903.3q0.9 18.6 -0.9 37.1q-0.9 -18.6 0.9 -37.1zM613.6 958.9q1.4 19.1 -0.4 38.2q-1.4 -19.1 0.4 -38.2zM566.3 934.6q1.9 17.1 0.1 34.2q-1.9 -17.1 -0.1 -34.2zM566.9 992.5q2.0 19.7 -1.1 39.4q-2.0 -19.7 1.1 -39.4zM607.4 804.1q1.2 18.6 -2.3 37.1q-1.2 -18.6 2.3 -37.1zM557.8 843.3q1.7 12.8 -1.0 25.6q-1.7 -12.8 1.0 -25.6zM554.0 963.0q1.7 5.0 -0.9 10.0q-1.7 -5.0 0.9 -10.0zM575.5 956.1q0.7 6.2 -0.4 12.5q-0.7 -6.2 0.4 -12.5zM602.6 973.0q1.9 15.0 -1.1 30.1q-1.9 -15.0 1.1 -30.1zM618.4 728.0q1.1 7.5 -1.1 15.1q-1.1 -7.5 1.1 -15.1zM603.0 907.6q2.0 12.4 -0.6 24.7q-2.0 -12.4 0.6 -24.7zM573.8 823.9q0.9 17.5 -3.0 35.0q-0.9 -17.5 3.0 -35.0zM611.6 1014.7q0.7 12.4 -2.1 24.8q-0.7 -12.4 2.1 -24.8zM589.5 863.5q1.3 13.7 1.2 27.4q-1.3 -13.7 -1.2 -27.4zM588.1 830.2q1.1 16.8 -1.2 33.6q-1.1 -16.8 1.2 -33.6zM600.4 721.4q2.0 12.6 1.1 25.2q-2.0 -12.6 -1.1 -25.2zM616.6 787.5q0.3 11.6 -1.1 23.1q-0.3 -11.6 1.1 -23.1zM609.1 992.7q0.2 11.6 -2.0 23.2q-0.2 -11.6 2.0 -23.2zM595.3 1000.7q1.5 6.1 -1.4 12.1q-1.5 -6.1 1.4 -12.1zM565.6 773.9q0.4 15.0 -1.8 30.0q-0.4 -15.0 1.8 -30.0zM595.4 734.1q0.3 15.7 -1.0 31.4q-0.3 -15.7 1.0 -31.4zM569.5 764.3q0.8 12.5 -1.4 25.0q-0.8 -12.5 1.4 -25.0zM580.9 872.0q0.9 6.6 -0.2 13.1q-0.9 -6.6 0.2 -13.1zM596.7 872.1q2.3 17.6 0.9 35.2q-2.3 -17.6 -0.9 -35.2zM568.3 940.8q1.3 17.0 -2.3 33.9q-1.3 -17.0 2.3 -33.9zM574.0 999.9q2.8 7.5 0.5 15.0q-2.8 -7.5 -0.5 -15.0zM561.4 777.8q-0.5 15.6 -3.2 31.3q0.5 -15.6 3.2 -31.3zM610.3 837.0q-0.0 16.6 -1.7 33.3q0.0 -16.6 1.7 -33.3zM600.0 705.8q2.2 7.2 0.5 14.4q-2.2 -7.2 -0.5 -14.4zM619.8 737.5q1.7 12.1 -0.8 24.2q-1.7 -12.1 0.8 -24.2zM600.0 761.4q0.2 5.1 -1.2 10.3q-0.2 -5.1 1.2 -10.3zM590.6 867.3q-0.3 13.1 -2.3 26.2q0.3 -13.1 2.3 -26.2zM566.3 973.1q0.4 19.8 -4.1 39.7q-0.4 -19.8 4.1 -39.7z" fill="#6a6764" opacity="0.55"/><path d="M552 845q6 30 10 70q4 40 -6 85q-10 20 -30 35l-4 -4q22 -18 28 -40q6 -40 0 -75q-4 -40 -8 -70z" fill="#6f6a62" opacity="0.7"/><path d="M576.0 953.9q7.2 23.7 8.2 47.4q-7.2 -23.7 -8.2 -47.4zM587.1 854.1q5.6 17.6 5.1 35.2q-5.6 -17.6 -5.1 -35.2zM586.3 865.8q3.7 17.7 4.0 35.4q-3.7 -17.7 -4.0 -35.4zM574.2 851.8q4.7 13.0 5.9 26.0q-4.7 -13.0 -5.9 -26.0zM581.3 872.3q4.7 23.7 6.4 47.5q-4.7 -23.7 -6.4 -47.5zM557.7 850.2q2.0 25.1 0.7 50.2q-2.0 -25.1 -0.7 -50.2zM589.3 972.1q4.7 14.4 3.2 28.7q-4.7 -14.4 -3.2 -28.7zM578.1 878.7q8.9 26.4 12.7 52.8q-8.9 -26.4 -12.7 -52.8zM586.1 891.8q1.4 15.7 -0.2 31.4q-1.4 -15.7 0.2 -31.4zM555.4 892.2q4.3 20.2 6.2 40.3q-4.3 -20.2 -6.2 -40.3zM565.5 893.4q3.2 24.1 2.2 48.3q-3.2 -24.1 -2.2 -48.3zM570.8 948.7q2.7 10.1 -0.9 20.1q-2.7 -10.1 0.9 -20.1zM580.7 968.3q3.3 9.3 1.1 18.7q-3.3 -9.3 -1.1 -18.7zM574.4 851.3q3.9 9.9 4.7 19.7q-3.9 -9.9 -4.7 -19.7zM560.3 955.8q4.5 26.2 2.8 52.4q-4.5 -26.2 -2.8 -52.4zM566.1 923.5q5.5 23.3 8.1 46.7q-5.5 -23.3 -8.1 -46.7zM582.5 970.4q2.9 9.7 -0.4 19.4q-2.9 -9.7 0.4 -19.4zM565.6 935.5q7.8 26.0 11.8 52.0q-7.8 -26.0 -11.8 -52.0zM573.2 893.7q1.2 14.9 -0.8 29.7q-1.2 -14.9 0.8 -29.7zM558.5 946.5q0.6 27.4 -1.9 54.9q-0.6 -27.4 1.9 -54.9zM589.5 924.7q3.8 16.5 4.2 33.0q-3.8 -16.5 -4.2 -33.0zM583.6 913.8q5.1 16.8 7.6 33.6q-5.1 -16.8 -7.6 -33.6zM554.2 919.1q5.6 24.5 8.3 49.0q-5.6 -24.5 -8.3 -49.0zM588.1 938.3q3.3 23.6 3.8 47.2q-3.3 -23.6 -3.8 -47.2zM558.5 968.3q5.7 14.5 7.2 28.9q-5.7 -14.5 -7.2 -28.9zM584.5 986.6q5.1 17.4 5.9 34.8q-5.1 -17.4 -5.9 -34.8z" fill="#5a5855" opacity="0.6"/><path d="M606 725q3 30 2 60q-3 -30 -5 -58zM600 860q4 30 2 70q-4 -30 -5 -68zM575 900q5 30 3 60q-5 -28 -6 -58z" fill="#55524f" opacity="0.7"/></g></svg></div>
<div id="ltb">
<div class="grip" style="top:7.500px"></div><div class="grip" style="top:10.500px"></div>
<div class="hl" style="left:2px;top:14.500px;width:23px;height:20.500px"></div>
<div class="hl" style="left:2px;top:79.500px;width:23px;height:20.500px"></div>
<div class="hl" style="left:2px;top:160.500px;width:23px;height:20.500px"></div>
<svg style="position:absolute;left:6px;top:19.5px" width="15" height="11" viewBox="0 0 15 11" ><rect x="0" y="1" width="10" height="8.500" rx="1.200" fill="#dedede"/><path d="M10.800 5.200l3.700-3v6.500z" fill="#dedede"/></svg>
<svg style="position:absolute;left:7.5px;top:39px" width="11" height="15" viewBox="0 0 11 15" ><path d="M5.500 0.500a4.500 4.500 0 0 1 2.500 8.200v2h-5v-2a4.500 4.500 0 0 1 2.500-8.200z" fill="#dedede"/><path d="M3.500 12.200h4M4.200 13.800h2.600" stroke="#dedede" stroke-width="1"/><path d="M3.200 4.800a2.500 2.500 0 0 1 2-2" stroke="#333" stroke-width="0.800" fill="none"/></svg>
<svg style="position:absolute;left:6px;top:61px" width="15" height="14" viewBox="0 0 15 14" ><path d="M0.500 13.500v-5l3.500-3l3 3l3-3.500l4 4v4.500z" fill="#6a6a6a"/><path d="M7.500 0.500v2.500M3.500 1.800l1.300 1.800M11.500 1.800l-1.300 1.800" stroke="#6a6a6a" stroke-width="0.900"/></svg>
<svg style="position:absolute;left:6px;top:84px" width="15" height="13" viewBox="0 0 15 13" ><rect x="0.500" y="0.500" width="14" height="9.500" rx="1" fill="#dedede"/><circle cx="7.500" cy="5.200" r="2.300" fill="none" stroke="#333" stroke-width="1.100"/><path d="M7.500 1.800v1.200M7.500 7.400v1.200M4.100 5.200h1.200M9.700 5.200h1.200M5.100 2.800l0.800 0.800M9.100 6.800l0.800 0.800M9.900 2.800l-0.800 0.800M5.900 6.800l-0.800 0.800" stroke="#333" stroke-width="0.800"/><path d="M4.500 12h6" stroke="#dedede" stroke-width="1.200"/></svg>
<div style="position:absolute;left:1px;top:103px;width:25px;height:1.500px;background:#191919"></div>
<div class="grip" style="top:109px"></div><div class="grip" style="top:112px"></div>
<svg style="position:absolute;left:6.5px;top:119.5px" width="14" height="14" viewBox="0 0 14 14" ><rect x="0.600" y="0.600" width="12.800" height="12.800" fill="none" stroke="#dedede" stroke-width="1"/><path d="M7 0.600v12.800M0.600 7h12.800M0.600 7l6.400-6.400M7 13.400l6.400-6.400M0.600 7l6.400 6.400M7 0.600l6.400 6.400" stroke="#dedede" stroke-width="0.700" fill="none"/></svg>
<svg style="position:absolute;left:6px;top:143px" width="16" height="15" viewBox="0 0 16 15" ><path d="M6 1v9.500h9M6 10.500l-5 3.500" stroke="#dedede" stroke-width="1.100" fill="none"/><path d="M6 0l1.700 2.500h-3.400zM16 10.500l-2.500 1.700v-3.400zM0 14.800l1-2.800l2 2.200z" fill="#dedede"/></svg>
<svg style="position:absolute;left:6px;top:164px" width="15" height="15" viewBox="0 0 15 15" ><path d="M7.500 0.700l6.300 3.300v7l-6.300 3.300l-6.300-3.300v-7z" fill="none" stroke="#dedede" stroke-width="1"/><path d="M1.200 4l6.300 3.300l6.300-3.300M7.500 7.300v7" stroke="#dedede" stroke-width="0.700" fill="none"/><path d="M7.500 0.700v6.600M1.200 11l6.300-3.700l6.300 3.700" stroke="#dedede" stroke-width="0.400" fill="none"/></svg>
<svg style="position:absolute;left:5.5px;top:185px" width="16" height="17" viewBox="0 0 16 17" ><path d="M8 1.500l6 3v8l-6 3l-6-3v-8z" fill="none" stroke="#dedede" stroke-width="1.200"/><path d="M2 4.500l6 3l6-3M8 7.500v8" stroke="#dedede" stroke-width="1.200" fill="none"/><circle cx="8" cy="1.500" r="1.300" fill="#dedede"/><circle cx="2" cy="4.500" r="1.300" fill="#dedede"/><circle cx="14" cy="4.500" r="1.300" fill="#dedede"/><circle cx="2" cy="12.500" r="1.300" fill="#dedede"/><circle cx="14" cy="12.500" r="1.300" fill="#dedede"/><circle cx="8" cy="15.500" r="1.300" fill="#dedede"/></svg>
<svg style="position:absolute;left:6px;top:211px" width="15" height="10" viewBox="0 0 15 10" ><path d="M7.500 0.700l6.800 4.300l-6.800 4.300l-6.800-4.300z" fill="none" stroke="#dedede" stroke-width="1"/><path d="M4 2.800l6.900 4.400M11 2.800l-6.900 4.400" stroke="#dedede" stroke-width="0.700"/></svg>
<svg style="position:absolute;left:6px;top:229px" width="15" height="15" viewBox="0 0 15 15" ><path d="M7.500 8l5.500-6.500M7.500 8l-6.500-1.500M7.500 8v6.500" stroke="#dedede" stroke-width="1" fill="none"/><circle cx="7.500" cy="8" r="1.500" fill="#dedede"/></svg>
<svg style="position:absolute;left:6.5px;top:251px" width="14" height="14" viewBox="0 0 14 14" ><path d="M0.500 9h2.500v5h-2.500zM4 5h2.500v9h-2.500zM7.500 0.500h2.500v13.500h-2.500zM11 7h2.500v7h-2.500z" fill="#dedede"/></svg>
<div style="position:absolute;left:1px;top:269px;width:25px;height:1.500px;background:#191919"></div>
<div class="grip" style="top:276px"></div><div class="grip" style="top:279px"></div>
<svg style="position:absolute;left:7.5px;top:321px" width="12" height="12" viewBox="0 0 12 12" ><rect x="0.500" y="0.500" width="5" height="3.500" fill="#dedede"/><rect x="6.500" y="4.500" width="5" height="3" fill="#dedede"/><rect x="6.500" y="8.500" width="5" height="3" fill="#dedede"/><path d="M3 4v6h3.500M3 6h3.500" stroke="#dedede" stroke-width="1" fill="none"/></svg>
</div>
<div class="bbar" style="left:0;width:748px">
<div class="vgrip" style="left:6px"></div><div class="vgrip" style="left:9px"></div>
<svg style="position:absolute;left:18px;top:3.5px" width="16" height="15" viewBox="0 0 16 15" ><path d="M6.500 6.500l5.500 2.500l-5.500 2.500l-5.500-2.500z" fill="#2a6ae0"/><path d="M6.500 4l5.500 2.500l-5.500 2.500l-5.500-2.500z" fill="#2ecc40" stroke="#2b2b2b" stroke-width="0.500"/><path d="M6.500 1l5.500 2.500l-5.500 2.500l-5.500-2.500z" fill="#f26b6b" stroke="#2b2b2b" stroke-width="0.500"/><path d="M11.500 11l1.700 1.700l1.700-1.700" stroke="#bbb" stroke-width="1" fill="none"/></svg>
<div class="combo" style="left:38px;top:2.500px;width:105.500px;height:16px;background:#2b2b2b"><span style="font-size:9.300px;top:1.500px;left:4px">sRGB (default)</span><svg width="10" height="6" viewBox="0 0 10 6" style="position:absolute;right:3.500px;top:5px"><path d="M1 1l4 4l4-4" stroke="#ccc" stroke-width="1.200" fill="none"/></svg></div>
</div>
</div>
<div id="vsep"></div>
<div id="rp">
<div class="ptitle" style="width:736px">
<svg style="position:absolute;left:6px;top:4.5px" width="13" height="13" viewBox="0 0 13 13" ><rect x="0.600" y="0.600" width="11.800" height="11.800" fill="#e0e0e0" stroke="#e0e0e0" stroke-width="1.200"/><rect x="6.500" y="1.200" width="5.300" height="5.300" fill="#2a2a2a"/><rect x="1.200" y="6.500" width="5.300" height="5.300" fill="#2a2a2a"/></svg>
<span class="ttl" style="left:25px;top:1.500px">Basecolor - 2D VIEW</span>
<svg style="position:absolute;left:654px;top:4px" width="13" height="13" viewBox="0 0 13 13" ><path d="M7.500 1.200l4.300 4.300l-1 0.300l-2 2l-0.200 2.700l-1.300 0.300l-4.800-4.800l0.300-1.300l2.700-0.200l2-2z" fill="#d6d6d6"/><path d="M4.800 8.200L1 12" stroke="#d6d6d6" stroke-width="1.200"/></svg><svg style="position:absolute;left:676px;top:5px" width="11" height="11" viewBox="0 0 11 11" ><rect x="0.600" y="0.600" width="9.300" height="9.300" fill="none" stroke="#d6d6d6" stroke-width="1.200"/><rect x="1.200" y="5.300" width="4" height="4" fill="#d6d6d6"/></svg><svg style="position:absolute;left:697px;top:4px" width="13" height="13" viewBox="0 0 13 13" ><rect x="3.500" y="3.500" width="6" height="6" fill="#d6d6d6"/><path d="M0.700 3.500V0.700H3.500M9.500 0.700h2.800V3.500M12.300 9.500v2.800H9.500M3.500 12.300H0.700V9.500" stroke="#d6d6d6" stroke-width="1.200" fill="none"/></svg><svg style="position:absolute;left:720px;top:5px" width="11" height="11" viewBox="0 0 11 11" ><path d="M1 1l9 9M10 1l-9 9" stroke="#d6d6d6" stroke-width="1.200"/></svg>
</div>
<div id="tb2d">
<svg style="position:absolute;left:6px;top:4px" width="15" height="14" viewBox="0 0 15 14" ><rect x="0.700" y="0.700" width="9.600" height="9.600" fill="#2b2b2b" stroke="#d4d4d4" stroke-width="1.300"/><path d="M12.500 4v9h-9" stroke="#d4d4d4" stroke-width="1.400" fill="none"/></svg>
<svg style="position:absolute;left:31px;top:4px" width="14" height="14" viewBox="0 0 14 14" ><path d="M0.500 0.500h10.500l2.500 2.500v10.500h-13z" fill="#d4d4d4"/><rect x="3" y="0.500" width="6.500" height="4.500" fill="#2b2b2b"/><rect x="6.800" y="1.200" width="1.800" height="3" fill="#d4d4d4"/><rect x="2.500" y="8" width="9" height="5.500" fill="#2b2b2b"/><rect x="3.300" y="9" width="7.400" height="4.500" fill="#d4d4d4"/></svg>
<svg style="position:absolute;left:57px;top:4px" width="13" height="14" viewBox="0 0 13 14" ><path d="M0.500 0.500h6l2 2v8.500h-8z" fill="#d4d4d4"/><path d="M4 3.500h5.500l2.500 2.500v7.500h-8z" fill="#d4d4d4" stroke="#2b2b2b" stroke-width="0.800"/></svg>
<svg style="position:absolute;left:81px;top:4px" width="16" height="14" viewBox="0 0 16 14" ><rect x="0.700" y="0.700" width="14" height="12" fill="none" stroke="#d4d4d4" stroke-width="1.300"/><rect x="0.700" y="0.700" width="14" height="2.300" fill="#d4d4d4"/><circle cx="7" cy="8" r="3.200" fill="#d4d4d4"/><circle cx="8.200" cy="7" r="1.100" fill="#2b2b2b"/><path d="M10.500 10.500l1.800 1.800l1.800-1.800" stroke="#d4d4d4" stroke-width="1" fill="none"/></svg>
<span style="position:absolute;left:106.500px;top:6px;font-size:8.500px;color:#5e5e5e;line-height:11px">UV</span>
<svg style="position:absolute;left:124px;top:9.5px" width="7" height="5" viewBox="0 0 7 5" ><path d="M0.800 0.800l2.600 2.600l2.600-2.600" stroke="#666" stroke-width="1" fill="none"/></svg>
<span style="position:absolute;left:141.500px;top:0.500px;font:italic bold 17px 'Liberation Serif',serif;color:#d4d4d4;line-height:22px">i</span>
<svg style="position:absolute;left:161px;top:4px" width="15" height="14" viewBox="0 0 15 14" ><path d="M1 0.500v13M4 3v10.500M7 6v7.500M10 9v4.500M13 11v2.500" stroke="#d4d4d4" stroke-width="1.600"/><path d="M0.200 13.300h14.500" stroke="#d4d4d4" stroke-width="0.800"/></svg>
</div>
<div id="vp2d"><svg width="736" height="334" viewBox="0 0 736 334" style="position:absolute;left:0;top:0"><defs>
<filter id="fblur" x="-20%" y="-20%" width="140%" height="140%"><feGaussianBlur stdDeviation="7"/></filter>
<filter id="frag" x="-5%" y="-5%" width="110%" height="110%"><feTurbulence type="fractalNoise" baseFrequency="0.09" numOctaves="2" seed="4" result="n"/><feDisplacementMap in="SourceGraphic" in2="n" scale="5" xChannelSelector="R" yChannelSelector="G"/></filter>
<filter id="frag2" x="-5%" y="-5%" width="110%" height="110%"><feTurbulence type="fractalNoise" baseFrequency="0.12" numOctaves="2" seed="9" result="n"/><feDisplacementMap in="SourceGraphic" in2="n" scale="3.5" xChannelSelector="R" yChannelSelector="G"/></filter>
</defs><rect width="736" height="334" fill="#d9c7a5"/><defs><g id="tS" filter="url(#fblur)"><ellipse cx="24" cy="62" rx="33.8" ry="26" fill="#8c7b60" opacity="0.95"/><ellipse cx="10" cy="40" rx="18.2" ry="33.8" fill="#a08f72" opacity="0.8"/><ellipse cx="36" cy="22" rx="23.4" ry="20.8" fill="#b3a284" opacity="0.7"/><ellipse cx="50" cy="95" rx="15.6" ry="20.8" fill="#b7a688" opacity="0.6"/><ellipse cx="8" cy="12" rx="13" ry="13" fill="#b9a88a" opacity="0.6"/><ellipse cx="88" cy="103" rx="18.2" ry="39" fill="#f0e3c8" opacity="0.9"/><ellipse cx="150" cy="60" rx="23.4" ry="39" fill="#e6d7ba" opacity="0.7"/><ellipse cx="165" cy="110" rx="26" ry="26" fill="#cdbc9d" opacity="0.55"/><ellipse cx="20" cy="125" rx="19.5" ry="28.6" fill="#dfd0b2" opacity="0.7"/><ellipse cx="158" cy="95" rx="28.6" ry="28.6" fill="#c9b898" opacity="0.6"/><ellipse cx="120" cy="20" rx="32.5" ry="18.2" fill="#cbb999" opacity="0.5"/><ellipse cx="143" cy="45" rx="18.2" ry="18.2" fill="#e2d3b5" opacity="0.5"/><ellipse cx="248" cy="70" rx="13" ry="75.4" fill="#9f8e71" opacity="0.9"/><ellipse cx="251" cy="125" rx="10.4" ry="33.8" fill="#a89779" opacity="0.7"/><ellipse cx="352" cy="28" rx="31.2" ry="36.4" fill="#90806a" opacity="0.9"/><ellipse cx="366" cy="70" rx="15.6" ry="33.8" fill="#8c7c62" opacity="0.85"/><ellipse cx="322" cy="10" rx="26" ry="13" fill="#a39276" opacity="0.7"/><ellipse cx="224" cy="136" rx="44.2" ry="31.2" fill="#9c8c70" opacity="0.9"/><ellipse cx="236" cy="130" rx="16.9" ry="13" fill="#8a7a62" opacity="0.8"/><ellipse cx="196" cy="114" rx="23.4" ry="15.6" fill="#ad9c7e" opacity="0.7"/><ellipse cx="184" cy="142" rx="18.2" ry="18.2" fill="#b9a889" opacity="0.6"/><ellipse cx="212" cy="75" rx="18.2" ry="35.1" fill="#e6d6b8" opacity="0.8"/><ellipse cx="322" cy="96" rx="23.4" ry="31.2" fill="#eee1c7" opacity="0.9"/><ellipse cx="293" cy="24" rx="19.5" ry="19.5" fill="#e2d2b4" opacity="0.6"/><ellipse cx="300" cy="60" rx="18.2" ry="23.4" fill="#e4d5b7" opacity="0.6"/><ellipse cx="68" cy="285" rx="15.6" ry="44.2" fill="#b09f80" opacity="0.85"/><ellipse cx="136" cy="278" rx="31.2" ry="22.1" fill="#a39272" opacity="0.9"/><ellipse cx="150" cy="308" rx="20.8" ry="15.6" fill="#b09f81" opacity="0.75"/><ellipse cx="112" cy="220" rx="18.2" ry="36.4" fill="#c2b191" opacity="0.6"/><ellipse cx="130" cy="238" rx="28.6" ry="23.4" fill="#f0e4cb" opacity="0.9"/><ellipse cx="26" cy="300" rx="28.6" ry="33.8" fill="#eee1c6" opacity="0.9"/><ellipse cx="95" cy="180" rx="19.5" ry="15.6" fill="#ece0c6" opacity="0.8"/><ellipse cx="178" cy="215" rx="15.6" ry="32.5" fill="#c0ae8e" opacity="0.65"/><ellipse cx="266" cy="225" rx="14.3" ry="52" fill="#b09e7f" opacity="0.8"/><ellipse cx="316" cy="310" rx="36.4" ry="20.8" fill="#a08f71" opacity="0.9"/><ellipse cx="345" cy="318" rx="18.2" ry="13" fill="#b3a284" opacity="0.6"/><ellipse cx="293" cy="240" rx="23.4" ry="23.4" fill="#efe3ca" opacity="0.9"/><ellipse cx="232" cy="274" rx="23.4" ry="20.8" fill="#e9dbbd" opacity="0.8"/><ellipse cx="330" cy="278" rx="15.6" ry="13" fill="#eadcbf" opacity="0.7"/><ellipse cx="206" cy="172" rx="18.2" ry="10.4" fill="#b5a384" opacity="0.7"/><ellipse cx="208" cy="318" rx="18.2" ry="20.8" fill="#ac9b7c" opacity="0.8"/><ellipse cx="40" cy="215" rx="20.8" ry="18.2" fill="#e3d4b6" opacity="0.6"/><ellipse cx="356" cy="150" rx="18.2" ry="18.2" fill="#c4b393" opacity="0.5"/><ellipse cx="90" cy="300" rx="13" ry="26" fill="#dfd0b2" opacity="0.5"/><ellipse cx="210" cy="352" rx="20.8" ry="13" fill="#c4b393" opacity="0.6"/><ellipse cx="300" cy="356" rx="23.4" ry="13" fill="#e8dabc" opacity="0.7"/></g><g id="tU" filter="url(#frag)" opacity="0.3" fill="#bf9f70"><path d="M95.1 -2.2C91.1 -3.4 82.3 3.0 79.1 8.6C76.0 14.2 76.7 24.0 76.3 31.3C75.8 38.6 75.4 47.4 76.4 52.3C77.4 57.3 80.0 60.7 82.2 60.9C84.4 61.1 87.6 58.0 89.6 53.7C91.5 49.3 91.5 41.1 93.7 34.7C96.0 28.3 102.7 21.6 102.9 15.4C103.1 9.2 99.0 -1.1 95.1 -2.2ZM100.7 49.6C99.2 48.6 96.2 50.1 92.5 51.9C88.8 53.7 83.7 56.0 78.4 60.2C73.1 64.4 64.3 70.5 60.6 77.0C57.0 83.5 58.4 92.5 56.6 99.3C54.8 106.0 52.0 111.2 49.9 117.4C47.9 123.6 45.9 131.1 44.2 136.5C42.6 141.9 40.2 145.5 40.0 150.0C39.9 154.5 40.6 162.2 43.2 163.6C45.9 164.9 52.4 161.0 56.0 158.0C59.5 155.0 61.7 150.7 64.8 145.5C67.8 140.3 71.3 133.1 74.1 126.6C76.8 120.2 79.3 112.7 81.4 106.7C83.4 100.8 83.7 96.2 86.4 91.0C89.1 85.8 95.1 81.3 97.6 75.8C100.1 70.3 101.0 62.5 101.5 58.1C102.0 53.7 102.2 50.7 100.7 49.6ZM103.5 15.6C102.3 15.7 100.6 14.7 100.3 20.4C100.0 26.1 100.9 40.9 101.6 49.9C102.4 58.9 103.3 67.5 104.9 74.4C106.5 81.2 109.0 87.4 111.2 91.1C113.3 94.7 116.0 96.8 117.8 96.4C119.6 96.1 121.3 93.2 121.8 88.9C122.4 84.6 122.7 77.4 121.1 70.6C119.5 63.8 114.6 56.6 112.4 48.1C110.1 39.6 109.2 25.0 107.7 19.6C106.2 14.2 104.8 15.4 103.5 15.6ZM134.9 4.8C133.7 5.0 132.1 4.9 132.0 9.5C131.9 14.1 135.2 25.4 134.3 32.6C133.3 39.9 127.4 46.8 126.3 53.0C125.3 59.2 129.0 65.0 128.0 70.0C127.0 75.0 123.2 77.9 120.3 82.7C117.5 87.6 112.4 94.8 111.1 99.3C109.7 103.7 110.2 108.3 112.0 109.5C113.8 110.8 118.2 109.8 121.9 106.7C125.7 103.7 131.2 97.0 134.7 91.3C138.2 85.5 142.5 78.2 143.0 72.0C143.5 65.8 137.5 60.5 137.7 54.0C137.8 47.6 143.5 41.0 143.7 33.4C144.0 25.8 140.4 13.2 139.0 8.5C137.5 3.7 136.0 4.7 134.9 4.8ZM71.5 133.8C71.3 135.6 74.5 138.0 77.4 139.9C80.2 141.8 84.4 143.2 88.7 145.2C93.0 147.2 98.5 152.1 103.0 152.2C107.4 152.2 112.3 148.2 115.5 145.4C118.6 142.5 122.6 137.5 121.8 135.1C121.0 132.6 113.4 131.5 110.5 130.6C107.7 129.8 107.9 130.5 105.0 129.8C102.1 129.2 97.7 126.9 93.3 126.8C88.9 126.7 82.3 127.9 78.6 129.1C75.0 130.2 71.7 131.9 71.5 133.8ZM41.9 163.3C42.5 165.0 44.5 166.8 49.9 166.1C55.4 165.4 66.3 161.8 74.5 159.3C82.8 156.9 94.1 154.4 99.4 151.4C104.6 148.4 106.6 143.6 105.9 141.2C105.1 138.7 100.7 136.0 94.6 136.6C88.6 137.2 77.6 141.5 69.5 144.7C61.4 147.9 50.7 152.8 46.1 155.9C41.5 159.0 41.2 161.6 41.9 163.3ZM3.8 0.6C2.0 0.9 -0.3 4.1 -0.4 8.0C-0.4 11.9 1.8 20.4 3.3 23.9C4.9 27.3 7.5 28.9 9.1 28.6C10.6 28.3 12.5 25.9 12.7 22.1C12.9 18.4 11.8 9.6 10.4 6.0C8.9 2.4 5.6 0.2 3.8 0.6ZM186.8 106.6C185.3 106.1 182.9 106.8 180.5 110.5C178.1 114.1 175.4 122.1 172.4 128.5C169.3 135.0 163.3 143.6 162.1 148.9C161.0 154.2 163.0 159.2 165.3 160.2C167.6 161.3 172.6 159.6 175.9 155.1C179.1 150.6 182.4 140.4 184.6 133.5C186.9 126.5 189.1 118.0 189.5 113.5C189.9 109.1 188.4 107.1 186.8 106.6ZM-0.0 91.1C0.3 92.5 -0.0 94.6 5.9 94.2C11.9 93.8 29.5 90.7 35.6 88.7C41.7 86.7 41.2 84.6 42.6 82.4C44.0 80.3 45.0 77.1 44.1 75.9C43.3 74.8 39.4 75.2 37.4 75.6C35.5 76.0 37.9 76.6 32.4 78.3C26.8 80.0 9.5 83.7 4.1 85.8C-1.3 87.9 -0.3 89.7 -0.0 91.1ZM257.7 -4.7C256.1 -4.9 253.7 -4.6 252.3 0.4C250.9 5.4 248.9 17.2 249.2 25.2C249.6 33.2 254.8 41.1 254.2 48.3C253.7 55.6 246.9 61.6 245.9 68.7C245.0 75.9 246.7 83.9 248.5 91.2C250.2 98.6 255.7 106.5 256.4 112.7C257.0 119.0 251.3 122.2 252.5 129.0C253.7 135.8 260.6 148.9 263.5 153.7C266.5 158.4 268.5 157.9 270.0 157.3C271.5 156.8 273.2 155.4 272.5 150.3C271.7 145.3 266.3 133.5 265.5 127.0C264.7 120.5 268.6 117.6 267.6 111.3C266.6 104.9 261.0 95.6 259.5 88.8C258.1 81.9 258.4 77.0 259.1 70.3C259.8 63.6 263.8 56.2 263.8 48.7C263.7 41.1 259.1 32.6 258.8 24.8C258.4 17.0 261.9 6.5 261.7 1.6C261.5 -3.3 259.3 -4.5 257.7 -4.7ZM306.1 -5.9C303.3 -8.4 294.7 -7.6 288.7 -3.6C282.8 0.5 272.1 10.9 270.2 18.4C268.4 26.0 278.0 35.0 277.7 41.9C277.4 48.7 268.2 54.4 268.6 59.3C268.9 64.2 276.4 68.9 279.6 71.3C282.9 73.6 286.5 74.3 287.9 73.2C289.4 72.1 288.4 66.8 288.4 64.7C288.3 62.6 286.5 64.3 287.4 60.7C288.4 57.1 293.6 49.2 294.3 43.1C295.0 37.1 289.9 29.8 291.8 24.6C293.6 19.3 302.9 16.6 305.3 11.6C307.6 6.5 308.8 -3.4 306.1 -5.9ZM276.7 71.2C275.9 72.4 276.0 74.8 278.6 77.6C281.3 80.4 287.7 85.0 292.5 88.0C297.3 91.1 304.0 94.8 307.4 96.1C310.9 97.3 312.5 96.5 313.2 95.5C313.9 94.5 314.0 92.7 311.6 89.9C309.1 87.2 303.2 82.2 298.5 79.0C293.8 75.7 287.0 71.7 283.4 70.4C279.7 69.1 277.5 70.0 276.7 71.2ZM184.4 35.1C183.8 37.2 186.0 41.2 190.0 43.8C194.0 46.4 202.3 51.0 208.4 50.8C214.5 50.7 222.8 46.0 226.8 43.0C230.8 39.9 233.3 34.9 232.4 32.6C231.4 30.3 225.3 28.8 221.2 29.0C217.0 29.3 212.1 33.8 207.6 34.2C203.1 34.5 197.8 31.0 194.0 31.2C190.1 31.4 185.1 33.0 184.4 35.1ZM192.1 47.7C190.9 49.1 191.9 53.8 193.4 56.1C195.0 58.5 201.3 59.5 201.4 61.9C201.5 64.4 195.3 67.8 194.2 70.7C193.0 73.6 193.1 78.1 194.5 79.2C196.0 80.3 199.5 80.3 202.8 77.3C206.2 74.3 215.0 66.0 214.6 61.1C214.2 56.1 204.3 50.1 200.6 47.9C196.8 45.7 193.2 46.4 192.1 47.7ZM336.7 27.2C333.9 25.8 326.9 29.6 323.4 33.6C319.8 37.5 316.1 45.8 315.4 51.1C314.7 56.4 316.4 64.0 319.3 65.3C322.1 66.7 329.1 62.9 332.6 58.9C336.2 55.0 339.9 46.7 340.6 41.4C341.3 36.1 339.6 28.5 336.7 27.2ZM373.2 1.7C372.1 1.2 370.7 -0.4 367.9 4.6C365.2 9.5 360.4 23.1 356.6 31.2C352.8 39.3 346.0 46.3 345.2 53.0C344.5 59.6 350.3 66.2 352.0 71.1C353.7 76.1 353.4 80.0 355.2 82.7C357.1 85.3 361.3 87.5 363.1 86.8C364.8 86.1 366.3 81.5 365.8 78.3C365.2 75.2 362.0 71.9 360.0 67.9C358.0 63.8 353.0 59.5 353.8 54.0C354.5 48.5 360.9 42.6 364.4 34.8C367.9 27.0 373.6 13.0 375.1 7.4C376.5 1.9 374.4 2.2 373.2 1.7ZM366.3 73.7C363.6 72.1 356.4 75.0 352.4 78.7C348.3 82.4 344.9 88.7 342.3 95.9C339.6 103.0 336.1 114.2 336.2 121.7C336.3 129.2 342.6 134.9 342.9 141.0C343.2 147.1 338.2 153.9 338.1 158.3C338.0 162.8 340.4 167.1 342.5 167.7C344.6 168.2 348.6 166.1 350.9 161.7C353.2 157.2 355.8 147.6 356.1 141.0C356.4 134.4 352.2 128.6 352.8 122.3C353.4 116.0 357.1 108.8 359.7 103.1C362.4 97.5 367.6 93.2 368.6 88.3C369.7 83.4 369.0 75.3 366.3 73.7ZM363.9 81.5C361.6 82.4 359.3 87.0 359.9 92.6C360.6 98.1 365.3 108.4 368.0 114.8C370.7 121.1 373.1 127.2 376.0 130.6C378.8 134.1 383.2 136.1 385.2 135.3C387.2 134.4 388.6 129.7 388.0 125.4C387.5 121.0 384.3 115.6 382.0 109.2C379.7 102.9 377.1 92.1 374.1 87.4C371.1 82.8 366.3 80.7 363.9 81.5ZM332.4 112.4C329.4 111.7 323.5 116.7 320.7 121.5C318.0 126.2 317.9 135.0 316.0 140.7C314.0 146.5 309.6 150.9 309.0 155.8C308.4 160.7 309.6 168.8 312.4 170.2C315.2 171.6 322.2 168.1 326.0 164.2C329.7 160.4 332.8 153.7 335.0 147.3C337.2 140.8 339.7 131.3 339.3 125.5C338.8 119.7 335.5 113.1 332.4 112.4ZM227.4 126.2C225.5 128.7 229.4 136.8 230.8 140.6C232.3 144.4 233.1 146.3 236.2 148.9C239.2 151.5 244.5 154.7 249.1 156.0C253.7 157.3 261.8 159.0 263.9 156.6C266.0 154.3 263.7 146.6 261.9 142.0C260.0 137.4 256.1 131.9 252.8 129.1C249.5 126.4 246.4 125.9 242.2 125.4C237.9 124.9 229.3 123.7 227.4 126.2ZM233.3 137.6C231.6 137.2 228.6 138.0 226.7 142.9C224.7 147.8 221.8 161.6 221.7 166.9C221.5 172.1 223.9 174.0 225.7 174.4C227.4 174.8 230.4 174.0 232.3 169.1C234.3 164.2 237.2 150.4 237.3 145.1C237.5 139.9 235.1 138.0 233.3 137.6ZM266.9 115.0C264.6 115.9 262.5 122.2 262.9 126.0C263.3 129.9 267.1 135.2 269.4 137.8C271.7 140.5 275.0 142.8 276.7 142.2C278.4 141.5 279.6 137.7 279.6 134.2C279.7 130.6 279.2 124.1 277.1 121.0C275.0 117.8 269.3 114.2 266.9 115.0ZM374.0 126.9C372.3 127.6 371.1 131.9 371.5 135.1C371.8 138.2 374.0 143.6 376.0 146.1C378.0 148.6 381.8 150.7 383.5 150.1C385.2 149.4 386.4 145.1 386.0 141.9C385.7 138.8 383.5 133.4 381.5 130.9C379.5 128.4 375.7 126.3 374.0 126.9ZM9.3 161.5C7.5 162.1 5.6 164.5 6.1 169.8C6.6 175.1 10.9 186.1 12.1 193.5C13.4 200.9 14.9 207.0 13.6 214.3C12.3 221.5 6.2 231.2 4.4 237.0C2.7 242.8 2.6 245.7 3.0 249.0C3.4 252.4 4.9 256.6 6.7 257.1C8.5 257.6 12.0 254.5 14.0 252.0C16.0 249.5 16.2 247.9 18.6 242.0C21.0 236.2 27.0 225.3 28.4 216.7C29.8 208.2 28.8 198.9 26.9 190.5C25.0 182.1 19.8 171.0 16.9 166.2C14.0 161.4 11.1 160.9 9.3 161.5ZM58.9 178.7C57.4 179.3 56.0 181.3 56.6 185.7C57.2 190.2 61.7 200.7 62.5 205.4C63.2 210.2 60.7 211.5 61.0 214.1C61.2 216.6 62.3 220.5 63.8 220.9C65.3 221.4 68.1 219.8 70.0 216.9C72.0 214.0 76.3 209.3 75.5 203.6C74.8 197.8 68.2 186.4 65.4 182.3C62.7 178.1 60.4 178.1 58.9 178.7ZM65.2 212.8C62.2 213.9 59.5 220.9 60.1 226.7C60.7 232.5 65.8 240.9 68.7 247.5C71.6 254.1 74.8 259.9 77.5 266.2C80.2 272.4 81.9 278.4 84.9 285.0C87.9 291.6 91.9 299.3 95.5 305.7C99.1 312.1 103.4 318.1 106.6 323.5C109.9 328.8 112.5 334.9 115.3 337.8C118.1 340.6 121.7 341.6 123.3 340.6C124.9 339.7 125.9 336.1 124.7 332.2C123.5 328.4 119.6 322.9 116.4 317.5C113.1 312.2 108.7 306.6 105.5 300.3C102.3 294.0 99.4 286.6 97.1 280.0C94.8 273.4 93.7 267.2 91.5 260.8C89.4 254.4 86.5 248.2 84.3 241.5C82.0 234.7 81.1 225.1 77.9 220.3C74.7 215.5 68.2 211.7 65.2 212.8ZM79.8 210.2C78.7 210.7 77.0 211.0 78.3 215.4C79.6 219.9 84.2 229.4 87.6 236.7C90.9 244.1 95.3 253.2 98.4 259.5C101.5 265.9 102.6 268.8 106.2 275.0C109.8 281.2 115.4 289.4 120.0 296.8C124.7 304.2 130.8 315.3 134.0 319.3C137.2 323.4 138.2 321.7 139.2 321.1C140.2 320.4 142.2 320.3 140.0 315.7C137.8 311.0 130.3 300.6 126.0 293.2C121.6 285.8 116.7 277.5 113.8 271.0C110.9 264.6 111.8 260.8 108.6 254.5C105.3 248.2 98.4 240.2 94.4 233.3C90.4 226.3 87.1 216.4 84.7 212.6C82.2 208.7 80.8 209.7 79.8 210.2ZM75.4 212.5C76.3 214.2 79.3 215.2 84.0 214.6C88.8 214.0 96.6 211.0 103.9 208.8C111.2 206.7 121.4 205.9 128.0 201.6C134.6 197.2 140.5 187.2 143.6 182.6C146.6 178.0 146.2 177.2 146.3 174.1C146.4 171.0 146.2 165.1 144.3 164.0C142.3 163.0 137.0 166.5 134.7 167.9C132.4 169.3 133.2 169.5 130.4 172.4C127.7 175.3 123.6 182.3 118.0 185.4C112.5 188.6 103.6 188.0 97.1 191.2C90.6 194.3 82.6 200.9 79.0 204.4C75.3 208.0 74.6 210.9 75.4 212.5ZM102.9 216.0C103.9 218.0 108.0 219.4 113.0 218.4C117.9 217.4 128.4 213.2 132.5 209.9C136.5 206.7 138.5 201.2 137.3 198.8C136.2 196.5 130.6 194.8 125.5 196.1C120.5 197.4 110.8 203.3 107.0 206.6C103.3 209.9 101.9 214.1 102.9 216.0ZM58.6 241.3C57.7 240.2 55.8 239.4 51.9 241.1C47.9 242.8 40.5 248.2 34.9 251.5C29.3 254.7 22.3 258.1 18.1 260.6C14.0 263.0 11.9 264.1 10.0 266.0C8.1 267.8 6.2 270.4 6.7 271.8C7.2 273.1 10.1 273.9 13.0 274.0C15.9 274.1 19.0 274.4 23.9 272.4C28.7 270.5 36.6 266.6 42.1 262.5C47.7 258.4 54.4 251.4 57.1 247.9C59.9 244.4 59.4 242.5 58.6 241.3ZM175.5 185.3C173.7 185.7 171.2 188.5 171.5 193.2C171.7 197.9 175.0 209.4 176.9 213.5C178.7 217.7 181.2 218.4 182.7 218.1C184.3 217.7 186.2 216.0 186.1 211.5C186.1 206.9 184.3 195.1 182.5 190.8C180.8 186.4 177.4 184.9 175.5 185.3ZM149.0 170.9C148.0 172.4 148.5 176.4 151.5 179.1C154.5 181.8 163.4 185.9 167.0 187.1C170.5 188.3 172.1 187.5 172.7 186.4C173.4 185.4 173.6 183.6 171.0 180.9C168.5 178.1 161.2 171.6 157.5 169.9C153.8 168.3 150.0 169.4 149.0 170.9ZM157.0 257.9C155.4 258.2 153.5 258.9 153.3 264.3C153.2 269.8 154.4 282.7 156.1 290.5C157.7 298.3 162.9 306.0 163.3 311.2C163.8 316.5 159.0 318.8 158.7 322.0C158.4 325.1 159.8 329.7 161.6 330.4C163.3 331.0 167.1 329.3 169.3 326.0C171.5 322.8 174.7 317.2 174.7 310.8C174.6 304.3 170.9 295.5 168.9 287.5C166.9 279.5 164.7 267.6 162.7 262.7C160.7 257.7 158.6 257.6 157.0 257.9ZM266.8 162.6C265.3 163.0 263.6 165.4 264.0 169.4C264.3 173.5 269.4 180.7 268.8 186.8C268.3 192.9 262.5 200.6 260.7 205.9C258.9 211.3 257.9 215.4 258.0 219.0C258.2 222.5 259.8 226.6 261.7 227.1C263.5 227.6 267.0 224.9 269.0 222.0C270.9 219.2 271.4 215.9 273.3 210.1C275.1 204.3 280.2 194.5 280.2 187.2C280.1 180.0 275.3 170.7 273.0 166.6C270.8 162.5 268.3 162.1 266.8 162.6ZM254.8 225.7C255.4 228.2 260.6 230.4 265.4 230.8C270.2 231.2 278.4 229.5 283.6 228.1C288.8 226.7 293.9 222.9 296.4 222.3C299.0 221.7 297.0 223.8 298.8 224.4C300.7 224.9 306.2 226.8 307.6 225.5C309.0 224.2 308.8 219.9 307.2 216.6C305.5 213.3 302.4 206.8 297.6 205.7C292.8 204.6 284.4 208.1 278.4 209.9C272.4 211.6 265.6 213.6 261.6 216.2C257.7 218.9 254.1 223.3 254.8 225.7ZM284.9 177.7C283.2 178.4 281.8 182.6 282.2 186.1C282.7 189.6 288.5 194.4 287.5 198.7C286.6 203.0 278.5 208.2 276.6 211.8C274.8 215.5 275.2 219.5 276.6 220.7C278.1 221.9 281.4 222.4 285.4 219.2C289.3 215.9 299.2 207.5 300.5 201.3C301.7 195.1 295.4 185.8 292.8 181.9C290.2 177.9 286.7 177.0 284.9 177.7ZM299.4 170.2C297.8 171.2 296.9 174.8 298.2 179.0C299.5 183.2 304.6 190.6 307.2 195.2C309.9 199.9 311.4 204.4 313.9 207.0C316.3 209.5 320.2 211.5 321.9 210.6C323.7 209.8 324.7 205.7 324.1 202.0C323.6 198.4 321.5 193.6 318.8 188.8C316.0 183.9 311.0 176.1 307.8 173.0C304.6 169.9 301.0 169.2 299.4 170.2ZM260.9 228.3C259.1 228.6 256.6 230.0 256.4 235.9C256.2 241.8 260.0 254.9 259.9 263.5C259.8 272.1 257.3 280.7 255.6 287.2C254.0 293.8 249.8 297.1 249.8 302.7C249.9 308.3 253.7 315.1 256.1 320.8C258.5 326.5 261.7 333.9 264.2 337.1C266.7 340.3 269.6 340.8 271.1 340.1C272.5 339.4 273.8 336.7 272.8 332.9C271.7 329.1 266.8 322.1 264.9 317.2C263.0 312.3 260.6 307.7 261.2 303.3C261.7 298.9 266.4 297.4 268.4 290.8C270.3 284.1 273.2 272.9 273.1 263.5C273.0 254.1 269.6 240.0 267.6 234.1C265.6 228.2 262.8 228.0 260.9 228.3ZM345.7 230.9C344.1 230.6 341.6 231.9 339.8 235.5C338.1 239.1 333.8 248.3 335.2 252.5C336.6 256.7 344.9 259.6 348.3 260.9C351.7 262.2 354.8 261.5 355.7 260.2C356.6 258.9 355.0 255.0 353.7 253.1C352.4 251.1 348.5 251.1 347.8 248.5C347.0 245.9 349.5 240.4 349.2 237.5C348.8 234.6 347.2 231.2 345.7 230.9ZM206.1 288.8C205.7 290.2 207.2 292.8 209.6 294.6C212.0 296.3 218.1 297.3 220.6 299.3C223.1 301.2 222.9 304.7 224.6 306.3C226.3 308.0 229.4 309.8 230.7 309.2C232.0 308.5 232.9 305.7 232.4 302.7C231.8 299.6 230.7 293.4 227.4 290.7C224.1 288.0 216.0 286.8 212.4 286.4C208.9 286.1 206.6 287.5 206.1 288.8ZM245.8 301.7C244.1 302.1 242.0 304.9 242.2 309.4C242.5 313.8 245.2 324.4 247.2 328.4C249.2 332.4 252.4 333.8 254.2 333.3C255.9 332.9 258.0 330.1 257.8 325.6C257.5 321.2 254.8 310.6 252.8 306.6C250.8 302.6 247.6 301.2 245.8 301.7ZM350.7 162.6C349.1 163.1 347.5 165.2 348.0 169.5C348.5 173.9 351.7 181.6 353.5 188.5C355.3 195.3 357.0 206.0 358.8 210.4C360.7 214.9 363.1 215.4 364.6 215.1C366.2 214.8 368.2 213.5 368.2 208.6C368.1 203.6 366.4 192.6 364.5 185.5C362.6 178.5 359.3 170.3 357.0 166.5C354.7 162.6 352.2 162.1 350.7 162.6ZM186.2 185.5C185.4 187.1 187.2 191.3 189.5 193.3C191.7 195.3 196.7 196.9 199.5 197.3C202.3 197.7 205.4 197.2 206.1 195.9C206.7 194.6 205.4 191.7 203.5 189.7C201.6 187.7 197.4 184.4 194.5 183.7C191.7 183.0 187.1 183.8 186.2 185.5ZM176.1 332.1C174.2 333.2 173.8 338.7 174.3 342.3C174.8 345.9 179.0 349.6 179.1 353.6C179.2 357.6 174.8 362.3 174.7 366.3C174.7 370.3 176.3 376.8 178.7 377.7C181.2 378.6 186.2 375.9 189.3 371.7C192.3 367.5 197.5 358.4 196.9 352.4C196.3 346.4 189.2 339.1 185.7 335.7C182.3 332.3 178.0 331.0 176.1 332.1ZM197.7 336.1C196.3 337.3 195.8 340.3 197.9 344.6C200.0 348.9 206.0 357.0 210.1 362.1C214.3 367.2 219.2 372.8 223.0 375.3C226.8 377.8 231.5 378.4 233.2 377.0C234.8 375.6 234.9 370.9 233.0 366.7C231.1 362.5 226.3 356.8 221.9 351.9C217.4 347.0 210.1 340.1 206.1 337.4C202.1 334.8 199.1 334.9 197.7 336.1ZM243.6 330.7C241.8 330.2 239.1 331.7 236.7 335.7C234.3 339.7 228.6 348.3 229.3 354.6C229.9 361.0 236.4 369.8 240.5 373.7C244.5 377.6 251.1 379.6 253.7 378.1C256.2 376.5 256.7 368.7 255.5 364.3C254.4 359.8 248.1 355.7 246.7 351.4C245.4 347.0 247.8 341.8 247.3 338.3C246.8 334.9 245.3 331.1 243.6 330.7ZM267.7 336.4C266.4 337.0 265.5 339.4 266.2 342.9C266.8 346.4 271.3 352.7 271.4 357.4C271.5 362.1 267.2 367.5 266.9 371.1C266.6 374.7 268.0 378.5 269.7 379.1C271.4 379.8 274.6 378.7 277.1 374.9C279.6 371.2 285.1 362.6 284.6 356.6C284.0 350.6 276.7 342.4 273.8 339.1C271.0 335.7 269.0 335.7 267.7 336.4ZM305.5 331.9C303.6 330.9 299.5 332.2 296.1 336.0C292.7 339.9 285.1 348.7 285.1 355.0C285.1 361.3 292.7 370.1 296.1 374.0C299.5 377.8 303.6 379.1 305.5 378.1C307.5 377.1 308.3 371.9 307.9 368.0C307.5 364.2 302.9 359.3 302.9 355.0C302.9 350.7 307.5 345.8 307.9 342.0C308.3 338.1 307.5 332.9 305.5 331.9ZM329.3 336.6C328.0 337.4 327.0 339.3 328.4 343.3C329.7 347.2 334.0 355.0 337.6 360.2C341.2 365.4 346.4 371.9 349.9 374.5C353.3 377.2 356.9 377.1 358.3 376.0C359.6 374.8 360.1 371.2 358.1 367.5C356.2 363.8 350.1 358.6 346.4 353.8C342.6 349.0 338.5 341.6 335.6 338.7C332.8 335.9 330.5 335.9 329.3 336.6ZM18.5 333.5C17.0 334.4 16.4 338.1 17.4 341.9C18.4 345.7 23.7 351.8 24.4 356.4C25.1 361.0 21.3 365.7 21.6 369.4C21.9 373.1 23.9 378.1 26.1 378.7C28.2 379.2 32.1 376.8 34.4 372.6C36.7 368.4 40.9 359.7 39.6 353.6C38.3 347.5 30.1 339.5 26.6 336.1C23.1 332.8 20.1 332.5 18.5 333.5ZM78.1 335.8C76.6 336.9 75.9 340.1 77.6 344.3C79.4 348.4 85.2 355.8 88.5 360.7C91.8 365.6 94.5 371.0 97.3 373.7C100.1 376.4 103.7 377.6 105.2 376.7C106.8 375.8 107.7 372.2 106.7 368.3C105.8 364.4 102.9 358.4 99.5 353.3C96.1 348.2 89.9 340.7 86.4 337.7C82.8 334.8 79.5 334.7 78.1 335.8ZM134.8 331.6C132.7 330.8 128.6 332.6 125.8 336.7C123.1 340.7 117.5 349.7 118.3 356.0C119.1 362.3 126.8 370.9 130.4 374.5C134.1 378.1 138.3 378.9 140.2 377.7C142.1 376.6 142.7 371.4 141.6 367.5C140.5 363.6 134.3 358.4 133.7 354.0C133.1 349.7 138.0 345.1 138.2 341.3C138.4 337.6 136.8 332.4 134.8 331.6Z"/></g><g id="tO" filter="url(#frag)" opacity="0.62"><path d="M91.4 2.7C89.1 2.0 84.3 4.3 82.1 9.0C79.9 13.8 79.0 24.0 78.3 31.1C77.6 38.2 77.4 47.6 77.8 51.7C78.2 55.8 79.6 55.7 80.6 55.8C81.7 55.9 83.0 56.1 84.2 52.3C85.4 48.5 85.8 39.5 87.7 32.9C89.7 26.4 95.3 18.0 95.9 13.0C96.5 7.9 93.7 3.4 91.4 2.7Z" fill="#d6a964"/><path d="M96.6 51.6C96.0 51.2 95.7 50.8 93.0 52.6C90.3 54.4 85.3 58.1 80.4 62.5C75.5 66.8 67.2 72.6 63.8 78.8C60.3 85.0 61.5 93.2 59.7 99.8C57.9 106.4 55.1 112.0 52.9 118.3C50.7 124.6 48.5 132.0 46.6 137.4C44.8 142.9 42.2 147.4 41.7 150.9C41.2 154.3 42.0 157.4 43.4 158.2C44.9 158.9 47.8 157.7 50.3 155.1C52.8 152.5 55.6 147.8 58.4 142.6C61.2 137.3 64.4 130.1 67.1 123.7C69.8 117.3 72.3 110.3 74.3 104.2C76.3 98.1 76.3 92.6 79.2 87.2C82.1 81.8 88.6 76.8 91.6 71.5C94.6 66.2 96.1 58.7 97.0 55.4C97.8 52.0 97.3 52.1 96.6 51.6Z" fill="#d8ae6c"/><path d="M101.9 17.6C101.5 17.6 100.7 14.0 100.8 19.1C100.9 24.3 101.6 39.5 102.6 48.4C103.6 57.3 105.1 65.6 106.7 72.5C108.3 79.3 110.8 86.2 112.1 89.5C113.5 92.7 114.3 92.0 115.1 91.8C115.8 91.7 116.8 92.1 116.9 88.5C116.9 85.0 116.9 77.3 115.3 70.5C113.7 63.7 109.4 56.2 107.4 47.6C105.4 39.0 104.1 23.9 103.2 18.9C102.3 13.9 102.2 17.5 101.9 17.6Z" fill="#d6a964"/><path d="M133.3 6.8C133.0 6.8 132.2 4.0 132.5 8.2C132.8 12.3 135.9 24.5 135.1 31.8C134.2 39.2 128.3 46.0 127.5 52.3C126.6 58.5 130.6 64.2 129.7 69.5C128.7 74.7 124.7 78.6 121.7 83.8C118.7 88.9 113.4 96.6 111.9 100.2C110.3 103.8 111.4 104.6 112.3 105.2C113.2 105.8 114.3 106.6 117.1 103.8C120.0 101.0 125.9 93.8 129.3 88.2C132.6 82.7 136.8 76.4 137.3 70.5C137.9 64.6 132.3 59.1 132.5 52.7C132.8 46.3 138.6 39.6 138.9 32.2C139.2 24.7 135.5 12.1 134.5 7.8C133.6 3.6 133.7 6.7 133.3 6.8Z" fill="#d6a964"/><path d="M73.1 133.2C73.0 134.0 73.3 134.7 75.7 135.9C78.2 137.0 83.5 138.3 87.7 140.0C92.0 141.8 97.3 146.2 101.4 146.4C105.5 146.5 109.9 142.6 112.3 140.8C114.6 139.0 116.0 136.7 115.6 135.5C115.1 134.2 111.9 133.5 109.7 133.2C107.6 132.9 105.8 134.2 102.6 133.6C99.3 133.1 94.6 130.4 90.3 130.0C85.9 129.5 79.1 130.6 76.3 131.1C73.4 131.7 73.2 132.4 73.1 133.2Z" fill="#d6a964"/><path d="M43.3 161.0C43.6 161.8 42.2 163.3 46.8 162.2C51.5 161.2 63.1 157.4 71.3 154.8C79.5 152.2 91.5 149.0 96.2 146.8C100.9 144.6 100.0 142.8 99.6 141.5C99.2 140.3 98.9 138.2 93.8 139.2C88.6 140.1 76.8 144.1 68.7 147.2C60.6 150.3 49.4 155.5 45.2 157.8C40.9 160.1 43.0 160.3 43.3 161.0Z" fill="#d6b380"/><path d="M109.7 97.6C109.4 97.7 107.6 93.8 109.3 98.8C110.9 103.8 116.3 118.4 119.8 127.5C123.3 136.6 127.3 146.5 130.4 153.3C133.5 160.0 136.7 165.3 138.5 167.9C140.2 170.4 140.5 169.1 141.0 168.8C141.5 168.6 142.8 169.0 141.5 166.1C140.3 163.3 136.8 158.4 133.6 151.7C130.4 145.1 126.0 135.4 122.2 126.5C118.4 117.6 112.8 103.0 110.7 98.2C108.7 93.4 109.9 97.5 109.7 97.6Z" fill="#d6a964"/><path d="M151.7 4.4C151.6 4.6 149.6 3.6 152.0 5.6C154.4 7.7 161.6 11.5 166.1 16.8C170.6 22.0 175.6 32.5 179.0 37.2C182.5 41.9 185.4 43.7 186.9 45.0C188.4 46.4 188.0 45.4 188.2 45.2C188.4 45.0 189.3 45.5 188.1 44.0C186.9 42.4 184.3 40.6 181.0 35.8C177.6 31.0 172.6 20.5 167.9 15.2C163.2 10.0 155.7 6.2 153.0 4.4C150.3 2.6 151.9 4.2 151.7 4.4Z" fill="#d6a964"/><path d="M2.5 3.2C1.7 3.3 0.4 3.2 0.6 6.4C0.9 9.6 3.1 19.4 4.1 22.4C5.1 25.3 5.8 24.4 6.4 24.3C7.1 24.1 8.1 24.8 7.9 21.6C7.7 18.5 6.3 8.6 5.4 5.6C4.5 2.5 3.3 3.0 2.5 3.2Z" fill="#d6a964"/><path d="M183.7 108.8C183.1 108.6 182.9 107.0 181.2 110.4C179.5 113.7 176.5 122.3 173.5 128.8C170.6 135.3 164.9 145.0 163.5 149.4C162.1 153.8 163.9 154.7 165.1 155.2C166.3 155.7 168.1 156.6 170.5 152.6C172.9 148.6 177.1 138.0 179.5 131.2C181.9 124.4 184.1 115.3 184.8 111.6C185.5 107.9 184.4 109.0 183.7 108.8Z" fill="#d6a964"/><path d="M1.1 89.4C1.2 89.9 -1.9 91.3 3.3 90.6C8.6 89.8 26.8 86.7 32.7 84.8C38.7 82.9 37.8 80.6 39.0 79.3C40.1 78.0 39.9 77.3 39.5 76.8C39.2 76.4 38.4 76.2 37.0 76.7C35.7 77.3 37.0 78.4 31.3 80.2C25.5 82.0 7.7 85.9 2.7 87.4C-2.4 89.0 1.0 88.9 1.1 89.4Z" fill="#cfa050"/><path d="M2.5 130.6C2.2 130.8 1.0 128.9 1.9 132.4C2.8 135.9 6.2 145.6 8.0 151.5C9.7 157.3 11.4 164.5 12.5 167.4C13.6 170.3 14.0 169.0 14.5 168.8C15.0 168.7 16.1 169.6 15.5 166.6C15.0 163.5 12.9 156.3 11.0 150.5C9.1 144.7 5.6 134.9 4.1 131.6C2.7 128.3 2.9 130.5 2.5 130.6Z" fill="#d6a964"/><path d="M20.4 141.2C19.9 141.6 18.5 141.7 20.5 144.3C22.5 147.0 29.9 154.9 32.3 157.1C34.7 159.2 34.4 157.8 34.8 157.4C35.2 157.1 36.6 157.6 34.7 154.9C32.8 152.3 25.9 144.0 23.5 141.7C21.1 139.4 20.9 140.8 20.4 141.2Z" fill="#d6a964"/><path d="M255.3 -2.3C254.7 -2.4 254.0 -4.6 253.1 -0.2C252.2 4.2 249.8 16.1 250.1 24.1C250.4 32.0 255.5 40.1 255.1 47.4C254.6 54.8 248.3 61.1 247.3 68.1C246.4 75.1 247.8 82.4 249.5 89.6C251.2 96.8 256.7 105.0 257.5 111.3C258.2 117.7 252.7 120.8 253.8 127.5C255.0 134.2 262.0 147.4 264.2 151.7C266.4 156.0 266.2 153.4 266.8 153.2C267.4 152.9 268.9 154.8 267.8 150.3C266.7 145.9 261.0 133.1 260.2 126.5C259.3 119.9 263.5 117.0 262.5 110.7C261.6 104.3 256.0 95.4 254.5 88.4C253.0 81.5 252.9 75.7 253.7 68.9C254.4 62.1 258.9 55.1 258.9 47.6C259.0 40.1 254.3 31.8 253.9 23.9C253.6 16.0 256.7 4.6 256.9 0.2C257.1 -4.1 255.9 -2.2 255.3 -2.3Z" fill="#d6a964"/><path d="M300.2 -2.7C298.6 -4.1 294.8 -4.9 290.3 -1.3C285.7 2.2 274.6 11.7 272.8 18.7C271.1 25.8 280.0 34.5 279.6 41.2C279.3 47.8 270.7 54.0 270.8 58.6C270.9 63.1 277.9 66.7 280.1 68.4C282.2 70.2 283.1 69.8 283.7 69.3C284.4 68.8 284.3 67.2 283.9 65.6C283.5 63.9 280.4 63.4 281.2 59.4C281.9 55.5 287.7 48.0 288.4 41.8C289.0 35.7 283.3 28.0 285.2 22.3C287.0 16.5 297.2 11.5 299.7 7.3C302.2 3.2 301.8 -1.2 300.2 -2.7Z" fill="#d9aa62"/><path d="M277.4 71.9C277.1 72.4 275.7 72.2 278.1 74.3C280.6 76.4 287.4 81.4 292.2 84.5C297.0 87.6 304.1 91.6 306.8 93.0C309.6 94.4 308.5 93.1 308.7 92.8C308.9 92.5 310.5 93.1 308.2 91.0C305.9 89.0 299.5 83.7 294.8 80.5C290.1 77.3 282.8 73.1 279.9 71.7C277.0 70.2 277.7 71.5 277.4 71.9Z" fill="#d6a964"/><path d="M186.3 35.4C186.0 36.4 185.7 37.8 189.0 39.6C192.4 41.3 200.5 46.1 206.2 45.9C211.9 45.7 220.1 40.7 223.4 38.6C226.8 36.5 226.8 34.5 226.3 33.3C225.8 32.1 224.0 30.8 220.6 31.4C217.1 32.1 210.7 36.8 205.8 37.1C200.9 37.4 194.2 33.7 191.0 33.4C187.7 33.2 186.7 34.3 186.3 35.4Z" fill="#c4a57c"/><path d="M192.8 49.1C192.3 49.7 191.8 50.9 193.4 52.8C195.1 54.7 202.6 57.6 202.8 60.7C203.0 63.8 195.9 69.1 194.6 71.5C193.2 74.0 194.1 74.8 194.8 75.3C195.4 75.8 196.0 77.0 198.4 74.5C200.8 72.0 209.5 64.5 209.2 60.3C208.9 56.1 199.3 51.0 196.6 49.2C193.8 47.3 193.3 48.5 192.8 49.1Z" fill="#d6a964"/><path d="M320.4 6.8C320.1 6.8 319.4 3.9 319.5 8.1C319.5 12.3 321.3 24.1 320.7 31.9C320.1 39.7 317.6 49.4 315.8 55.1C314.0 60.9 310.8 64.2 309.9 66.4C309.0 68.6 309.9 68.2 310.3 68.4C310.7 68.6 310.8 69.7 312.1 67.6C313.5 65.5 316.4 61.8 318.2 55.9C320.1 50.0 322.7 40.1 323.3 32.1C323.8 24.1 322.0 12.2 321.5 7.9C321.1 3.7 320.8 6.7 320.4 6.8Z" fill="#d6a964"/><path d="M332.6 30.8C331.0 30.1 327.8 30.8 325.3 34.3C322.7 37.8 318.2 47.6 317.3 51.8C316.3 56.1 317.8 59.0 319.4 59.7C321.0 60.4 324.2 59.7 326.7 56.2C329.3 52.7 333.8 42.9 334.7 38.7C335.7 34.4 334.2 31.5 332.6 30.8Z" fill="#c6a678"/><path d="M370.1 3.6C369.7 3.4 370.5 -0.1 368.3 4.5C366.1 9.1 360.8 23.4 357.0 31.3C353.3 39.3 346.7 46.0 345.9 52.3C345.2 58.6 350.8 64.4 352.5 69.1C354.2 73.8 354.9 78.3 356.1 80.5C357.3 82.7 358.9 82.7 359.7 82.3C360.5 82.0 361.6 80.9 360.9 78.5C360.2 76.1 357.4 72.2 355.5 67.9C353.5 63.6 348.3 58.6 349.1 52.7C349.8 46.8 356.4 40.5 360.0 32.7C363.6 24.8 369.0 10.3 370.7 5.5C372.4 0.6 370.5 3.7 370.1 3.6Z" fill="#d6a964"/><path d="M361.7 77.1C360.2 76.2 356.9 76.6 354.0 79.8C351.1 83.1 346.9 89.7 344.2 96.5C341.5 103.3 338.1 113.6 338.1 120.8C338.1 128.1 344.1 133.8 344.3 140.0C344.5 146.2 339.9 154.4 339.4 158.2C338.9 162.0 340.5 162.4 341.5 162.7C342.6 163.0 344.1 163.6 345.6 159.8C347.1 156.0 350.5 146.4 350.7 140.0C350.9 133.6 346.4 127.7 346.9 121.2C347.4 114.6 351.1 106.5 353.8 100.5C356.5 94.5 361.7 89.0 363.0 85.2C364.3 81.3 363.2 78.0 361.7 77.1Z" fill="#d9aa62"/><path d="M363.4 84.7C362.2 85.1 360.4 85.7 361.4 90.3C362.4 94.9 366.8 106.1 369.4 112.4C372.0 118.7 375.0 125.3 377.1 128.3C379.1 131.3 380.6 130.9 381.5 130.5C382.5 130.1 383.8 129.2 382.9 125.7C382.1 122.2 379.0 115.9 376.6 109.6C374.2 103.3 370.8 91.8 368.6 87.7C366.4 83.5 364.6 84.2 363.4 84.7Z" fill="#d9aa62"/><path d="M329.3 116.4C327.6 116.0 324.8 117.3 322.9 121.4C321.1 125.5 320.2 135.3 318.2 141.2C316.2 147.1 311.8 152.8 310.8 156.7C309.9 160.6 311.2 163.8 312.7 164.6C314.3 165.4 317.5 164.6 320.2 161.3C322.8 158.0 326.6 151.1 328.8 144.8C331.0 138.5 333.0 128.3 333.1 123.6C333.2 118.9 331.0 116.8 329.3 116.4Z" fill="#c8a97e"/><path d="M229.5 128.3C228.5 129.6 230.0 133.6 231.4 136.2C232.7 138.8 234.5 141.2 237.6 143.8C240.7 146.4 246.6 150.5 250.0 151.8C253.4 153.2 257.0 153.5 258.1 152.2C259.3 150.9 258.8 147.5 257.0 144.2C255.2 140.8 250.6 134.9 247.4 132.2C244.2 129.5 240.6 128.5 237.6 127.8C234.6 127.2 230.5 126.9 229.5 128.3Z" fill="#dba55a"/><path d="M230.6 140.2C229.8 140.0 229.0 138.1 227.7 142.5C226.3 146.9 223.2 162.0 222.7 166.5C222.1 171.1 223.6 169.7 224.4 169.8C225.2 170.0 226.0 171.9 227.3 167.5C228.7 163.1 231.8 148.0 232.3 143.5C232.9 138.9 231.4 140.3 230.6 140.2Z" fill="#d6a964"/><path d="M266.4 118.2C265.2 118.6 263.8 120.9 264.4 123.8C265.0 126.7 268.7 133.5 270.2 135.8C271.8 138.1 272.7 138.0 273.5 137.7C274.2 137.4 275.1 136.9 274.8 134.2C274.4 131.4 273.0 123.9 271.6 121.2C270.2 118.5 267.6 117.7 266.4 118.2Z" fill="#c4a57c"/><path d="M321.0 102.0C320.7 102.2 319.3 101.5 321.1 103.8C323.0 106.1 329.2 113.6 332.0 115.7C334.8 117.9 336.6 116.7 337.8 116.8C338.9 116.9 338.8 116.5 338.9 116.3C339.0 116.0 339.0 115.7 338.2 115.2C337.4 114.7 336.6 115.4 334.0 113.3C331.4 111.1 325.0 104.1 322.9 102.2C320.7 100.3 321.3 101.7 321.0 102.0Z" fill="#d6a964"/><path d="M373.4 129.3C372.7 129.6 371.7 130.5 372.3 132.9C372.8 135.3 375.5 141.8 376.8 143.9C378.1 146.0 379.4 146.0 380.1 145.7C380.8 145.4 381.8 144.5 381.2 142.1C380.7 139.7 378.0 133.2 376.7 131.1C375.4 129.0 374.1 129.0 373.4 129.3Z" fill="#d6a964"/><path d="M8.5 164.1C7.7 164.4 6.2 163.2 7.1 167.8C7.9 172.4 12.4 184.1 13.7 191.8C15.1 199.4 16.5 206.3 15.2 213.9C13.9 221.4 7.7 231.4 5.9 237.2C4.0 243.0 4.1 246.3 4.0 248.8C4.0 251.4 4.9 252.2 5.7 252.5C6.5 252.7 7.7 252.3 9.0 250.2C10.2 248.1 10.8 245.6 13.1 239.8C15.4 234.0 21.4 223.4 22.8 215.1C24.1 206.9 23.1 198.4 21.3 190.2C19.5 182.1 14.1 170.6 11.9 166.2C9.8 161.8 9.3 163.8 8.5 164.1Z" fill="#d6a964"/><path d="M58.2 180.9C57.6 181.1 56.3 179.8 57.2 183.7C58.2 187.5 63.1 198.9 63.8 204.0C64.6 209.0 61.8 211.8 61.7 213.9C61.5 216.0 62.2 216.5 62.8 216.7C63.4 216.9 64.1 217.4 65.3 215.1C66.6 212.8 70.9 208.5 70.2 203.0C69.4 197.6 62.8 186.0 60.8 182.3C58.8 178.6 58.8 180.6 58.2 180.9Z" fill="#d6a964"/><path d="M64.9 216.6C63.3 217.2 61.2 219.5 62.1 224.2C63.0 229.0 67.6 238.5 70.4 245.1C73.2 251.7 76.3 257.6 78.9 263.9C81.5 270.1 83.1 276.1 86.0 282.7C88.9 289.3 92.7 296.9 96.2 303.2C99.8 309.6 104.0 315.5 107.3 320.8C110.6 326.2 113.9 332.6 115.9 335.2C118.0 337.8 118.8 336.9 119.5 336.5C120.1 336.1 121.4 335.8 120.1 332.8C118.8 329.7 114.9 323.5 111.7 318.2C108.5 312.8 104.0 307.1 100.8 300.8C97.5 294.5 94.4 286.9 92.0 280.3C89.5 273.7 88.3 267.5 86.1 261.1C83.9 254.7 81.0 248.6 78.6 241.9C76.2 235.2 74.2 225.0 71.9 220.8C69.6 216.5 66.5 216.0 64.9 216.6Z" fill="#d9aa62"/><path d="M79.0 211.9C78.7 212.0 77.1 209.6 78.6 213.4C80.0 217.2 84.4 227.3 87.9 234.6C91.3 241.9 96.1 250.8 99.2 257.1C102.3 263.5 103.1 266.5 106.6 272.7C110.1 279.0 115.5 287.2 120.1 294.5C124.7 301.9 131.5 313.2 134.1 317.0C136.7 320.9 135.4 317.7 135.7 317.6C136.0 317.4 138.2 320.0 135.9 316.0C133.6 311.9 126.3 300.9 121.9 293.5C117.5 286.0 112.4 277.7 109.4 271.3C106.4 264.8 107.0 261.2 103.8 254.9C100.6 248.5 94.0 240.5 90.1 233.4C86.2 226.4 82.3 216.2 80.4 212.6C78.6 209.0 79.3 211.7 79.0 211.9Z" fill="#d6a964"/><path d="M76.8 209.9C77.1 210.6 76.7 211.8 80.6 210.8C84.6 209.8 93.2 206.2 100.4 203.9C107.6 201.5 117.4 201.0 123.7 196.9C130.1 192.8 135.5 183.4 138.5 179.2C141.4 175.0 141.0 173.6 141.3 171.5C141.6 169.4 141.3 167.1 140.3 166.6C139.4 166.1 137.1 167.3 135.7 168.5C134.2 169.7 134.4 170.5 131.5 173.8C128.6 177.1 124.1 184.7 118.3 188.1C112.5 191.5 103.3 191.1 96.6 194.1C90.0 197.2 81.7 203.6 78.4 206.2C75.0 208.8 76.4 209.1 76.8 209.9Z" fill="#d8ae6c"/><path d="M104.6 213.2C105.0 214.2 105.4 215.6 109.4 214.4C113.5 213.1 125.1 208.0 128.8 205.6C132.4 203.2 131.9 201.0 131.3 199.9C130.7 198.7 129.3 197.0 125.2 198.4C121.1 199.9 110.0 206.2 106.6 208.6C103.1 211.1 104.1 212.3 104.6 213.2Z" fill="#c9ab80"/><path d="M36.9 170.9C36.6 171.2 35.8 171.2 37.1 172.9C38.4 174.6 42.9 179.9 44.6 181.4C46.4 182.8 47.2 182.1 47.6 181.6C48.1 181.2 48.8 180.4 47.4 178.6C45.9 176.9 40.6 172.4 38.9 171.1C37.2 169.8 37.2 170.6 36.9 170.9Z" fill="#d6a964"/><path d="M54.0 242.3C53.7 241.9 54.7 240.4 51.5 242.2C48.3 244.1 40.4 249.9 34.7 253.3C29.1 256.7 21.9 260.3 17.6 262.6C13.3 265.0 10.6 266.3 8.9 267.5C7.3 268.7 7.5 269.2 7.7 269.7C7.9 270.2 7.9 270.7 10.1 270.5C12.2 270.3 15.7 270.4 20.4 268.4C25.1 266.4 32.7 262.6 38.3 258.7C43.8 254.7 50.9 247.5 53.5 244.8C56.1 242.0 54.3 242.7 54.0 242.3Z" fill="#d6a964"/><path d="M147.8 170.5C147.4 170.5 146.1 166.0 146.7 172.2C147.3 178.3 149.4 197.5 151.5 207.2C153.6 217.0 158.4 224.1 159.5 230.7C160.6 237.2 158.1 243.6 158.0 246.4C157.9 249.2 158.5 247.7 158.9 247.7C159.2 247.8 159.6 249.5 160.0 246.6C160.5 243.7 162.6 237.0 161.5 230.3C160.4 223.7 155.6 216.5 153.5 206.8C151.5 197.0 150.2 177.9 149.3 171.8C148.3 165.8 148.2 170.4 147.8 170.5Z" fill="#d6a964"/><path d="M174.3 188.0C173.5 188.2 172.0 187.6 172.5 191.5C173.0 195.5 176.4 208.2 177.6 211.9C178.9 215.6 179.4 213.9 180.0 213.8C180.6 213.6 181.8 215.0 181.4 211.1C181.0 207.2 178.7 194.3 177.5 190.5C176.3 186.6 175.2 187.8 174.3 188.0Z" fill="#d6a964"/><path d="M150.1 171.9C149.7 172.6 148.5 173.5 151.2 175.5C153.9 177.5 163.5 182.6 166.3 184.0C169.2 185.4 168.0 184.1 168.2 183.8C168.4 183.5 170.1 184.0 167.7 182.0C165.3 179.9 156.7 173.2 153.8 171.5C150.9 169.8 150.5 171.3 150.1 171.9Z" fill="#d6a964"/><path d="M155.6 260.2C155.0 260.3 153.8 258.1 154.1 262.8C154.4 267.6 155.7 280.8 157.4 288.7C159.1 296.6 164.1 304.5 164.4 310.1C164.8 315.7 160.2 319.5 159.6 322.1C159.0 324.7 160.1 325.6 160.9 325.9C161.7 326.2 162.9 326.6 164.4 323.9C165.8 321.3 169.7 316.0 169.6 309.9C169.4 303.8 165.6 295.2 163.6 287.3C161.7 279.3 159.2 266.7 157.9 262.2C156.6 257.7 156.2 260.1 155.6 260.2Z" fill="#d6a964"/><path d="M172.7 244.3C172.1 244.6 170.8 244.1 171.7 247.2C172.6 250.3 175.6 257.7 178.3 263.1C181.0 268.4 186.0 276.4 187.9 279.2C189.8 281.9 189.4 280.0 189.8 279.8C190.2 279.6 191.6 280.8 190.1 277.8C188.6 274.9 183.1 267.3 180.7 261.9C178.2 256.6 176.6 248.8 175.3 245.8C174.0 242.9 173.3 244.1 172.7 244.3Z" fill="#d6a964"/><path d="M-0.6 289.7C-1.0 289.9 -2.5 288.0 -1.1 291.5C0.4 295.1 4.8 304.9 8.1 310.8C11.4 316.7 16.6 324.3 18.9 327.1C21.1 330.0 21.3 328.4 21.9 328.0C22.4 327.6 24.0 328.0 22.1 324.9C20.3 321.7 14.4 314.9 10.9 309.2C7.4 303.5 3.0 293.7 1.1 290.5C-0.8 287.2 -0.3 289.5 -0.6 289.7Z" fill="#d6a964"/><path d="M265.8 164.8C265.2 165.0 264.0 164.1 264.7 167.6C265.4 171.1 270.4 179.5 269.9 185.9C269.5 192.3 263.8 200.5 262.0 206.0C260.1 211.5 259.2 216.1 259.0 218.8C258.8 221.6 259.8 222.2 260.7 222.5C261.5 222.7 262.7 222.6 264.0 220.2C265.2 217.8 266.2 213.7 268.0 208.0C269.9 202.3 275.0 193.0 275.1 186.1C275.1 179.2 269.9 170.0 268.3 166.4C266.8 162.9 266.4 164.6 265.8 164.8Z" fill="#d6a964"/><path d="M257.0 223.6C257.4 224.9 258.6 226.3 262.5 226.2C266.4 226.1 275.0 224.5 280.4 223.0C285.8 221.5 291.6 217.7 294.7 217.4C297.8 217.1 297.7 220.5 299.1 221.2C300.5 222.0 302.5 222.3 303.1 221.8C303.7 221.2 304.2 220.0 302.9 217.8C301.6 215.6 299.5 209.4 295.3 208.6C291.1 207.8 283.4 211.3 277.6 213.0C271.8 214.7 264.0 217.0 260.5 218.8C257.1 220.6 256.7 222.4 257.0 223.6Z" fill="#dba55a"/><path d="M284.3 180.2C283.6 180.5 282.4 180.9 283.1 184.0C283.9 187.0 289.9 193.5 288.9 198.4C287.9 203.2 279.0 209.8 277.0 212.9C275.1 215.9 276.4 216.3 277.0 216.9C277.7 217.4 277.9 219.0 281.0 216.1C284.0 213.3 294.0 205.3 295.1 199.6C296.3 194.0 289.7 185.3 287.9 182.0C286.1 178.8 285.1 179.8 284.3 180.2Z" fill="#c8aa80"/><path d="M299.4 172.4C298.6 172.8 297.4 173.0 298.8 176.4C300.3 179.7 305.6 187.9 308.2 192.6C310.9 197.3 313.0 202.3 314.7 204.6C316.4 206.9 317.6 206.6 318.3 206.3C319.1 205.9 320.1 205.2 319.3 202.4C318.6 199.6 316.5 194.2 313.8 189.4C311.1 184.6 305.6 176.5 303.2 173.6C300.8 170.8 300.1 171.9 299.4 172.4Z" fill="#c8aa80"/><path d="M259.5 231.0C258.7 231.1 257.2 229.1 257.5 234.4C257.8 239.7 261.4 253.7 261.3 262.5C261.2 271.3 258.6 280.6 256.9 287.1C255.2 293.7 251.0 296.6 250.9 301.9C250.9 307.1 254.4 313.2 256.7 318.7C259.0 324.2 263.0 332.0 264.8 334.9C266.6 337.7 267.0 336.3 267.5 336.1C268.1 335.8 269.4 336.3 268.2 333.1C267.0 330.0 262.3 322.4 260.3 317.3C258.3 312.1 255.6 306.9 256.1 302.1C256.5 297.4 261.1 295.5 263.1 288.9C265.0 282.3 267.8 271.7 267.7 262.5C267.6 253.3 263.9 238.9 262.5 233.6C261.2 228.3 260.4 230.8 259.5 231.0Z" fill="#d6a964"/><path d="M343.0 233.2C342.4 233.1 341.7 232.2 340.6 235.1C339.5 238.0 335.2 246.7 336.4 250.5C337.7 254.2 345.5 256.4 347.9 257.6C350.3 258.7 350.5 257.8 350.9 257.3C351.3 256.8 351.5 255.9 350.1 254.4C348.7 253.0 343.5 251.6 342.6 248.5C341.6 245.4 344.3 238.4 344.4 235.9C344.4 233.4 343.6 233.4 343.0 233.2Z" fill="#d6a964"/><path d="M337.8 264.3C337.4 264.3 336.4 261.2 337.0 265.7C337.6 270.2 339.3 283.8 341.3 291.3C343.3 298.8 346.4 304.8 349.0 310.7C351.7 316.6 355.3 323.9 357.1 326.7C358.8 329.6 358.9 328.0 359.4 327.7C359.8 327.5 361.2 328.3 359.9 325.3C358.7 322.2 354.7 315.1 352.0 309.3C349.3 303.6 345.9 298.0 343.7 290.7C341.6 283.3 340.0 269.7 339.0 265.3C338.0 260.9 338.1 264.2 337.8 264.3Z" fill="#d6a964"/><path d="M347.2 282.4C347.0 282.9 345.8 283.3 348.5 284.5C351.1 285.7 360.2 288.8 363.0 289.5C365.8 290.2 365.1 289.1 365.3 288.6C365.5 288.1 366.7 287.7 364.0 286.5C361.4 285.3 352.3 282.2 349.5 281.5C346.7 280.8 347.4 281.9 347.2 282.4Z" fill="#d6a964"/><path d="M362.9 280.1C362.5 280.3 360.9 278.3 362.3 282.0C363.8 285.8 368.8 296.6 371.5 302.7C374.2 308.8 377.0 315.8 378.5 318.6C380.1 321.5 380.3 320.0 380.8 319.8C381.3 319.5 382.5 320.4 381.5 317.4C380.4 314.3 377.3 307.4 374.5 301.3C371.7 295.3 366.6 284.5 364.7 281.0C362.7 277.4 363.2 279.9 362.9 280.1Z" fill="#d6a964"/><path d="M320.5 318.1C320.5 318.5 318.7 319.2 322.1 319.3C325.5 319.3 335.0 318.1 340.9 318.4C346.9 318.8 353.3 319.8 357.9 321.3C362.5 322.9 366.3 326.7 368.5 327.7C370.8 328.6 371.2 327.7 371.5 327.2C371.8 326.6 372.5 325.9 370.5 324.3C368.4 322.8 364.0 319.3 359.1 317.7C354.2 316.1 347.3 314.7 341.1 314.6C334.9 314.4 325.3 316.1 321.9 316.7C318.5 317.3 320.4 317.7 320.5 318.1Z" fill="#d6a964"/><path d="M207.2 288.9C207.0 289.4 206.3 289.8 208.5 291.0C210.7 292.2 217.7 293.7 220.5 295.9C223.3 298.1 223.9 302.6 225.1 304.2C226.2 305.7 226.8 305.5 227.3 305.2C227.8 305.0 228.6 305.0 227.9 302.8C227.3 300.6 226.6 294.6 223.5 292.1C220.4 289.7 212.2 288.5 209.5 288.0C206.8 287.4 207.4 288.4 207.2 288.9Z" fill="#c8aa80"/><path d="M244.8 304.2C244.0 304.4 242.6 303.9 243.2 307.6C243.7 311.3 246.8 323.1 248.2 326.6C249.5 330.1 250.5 329.0 251.2 328.8C252.0 328.6 253.4 329.1 252.8 325.4C252.3 321.7 249.2 309.9 247.8 306.4C246.5 302.9 245.5 304.0 244.8 304.2Z" fill="#c8aa80"/><path d="M349.8 164.8C349.1 165.0 347.9 164.0 348.7 167.6C349.5 171.3 352.7 179.8 354.5 186.7C356.3 193.5 358.4 204.9 359.6 208.9C360.9 212.9 361.3 210.9 362.0 210.8C362.6 210.6 363.8 212.4 363.4 208.1C363.0 203.9 361.3 192.3 359.5 185.3C357.6 178.4 353.9 169.8 352.3 166.4C350.7 163.0 350.4 164.6 349.8 164.8Z" fill="#d6a964"/><path d="M187.5 186.2C187.1 186.9 187.0 188.3 188.9 189.6C190.8 190.9 196.7 193.3 198.8 193.9C200.8 194.5 201.0 193.9 201.2 193.4C201.4 192.9 201.9 192.4 200.2 191.1C198.6 189.7 193.3 186.2 191.1 185.4C189.0 184.6 187.8 185.5 187.5 186.2Z" fill="#d6a964"/><path d="M212.1 180.4C212.2 180.9 211.3 182.0 214.3 181.6C217.4 181.2 227.4 179.0 230.3 178.1C233.3 177.2 232.0 176.6 231.9 176.1C231.8 175.6 232.7 174.5 229.7 174.9C226.6 175.3 216.6 177.5 213.7 178.4C210.7 179.3 212.0 179.9 212.1 180.4Z" fill="#d6a964"/><path d="M176.1 334.7C175.2 335.2 174.4 336.6 175.2 339.6C176.1 342.5 181.0 347.8 181.2 352.3C181.4 356.8 176.7 363.2 176.3 366.6C175.8 370.0 177.1 372.0 178.3 372.5C179.6 373.0 181.7 372.9 183.7 369.4C185.8 365.9 191.3 357.2 190.8 351.7C190.3 346.2 183.2 339.2 180.8 336.4C178.3 333.6 177.0 334.1 176.1 334.7Z" fill="#d6a964"/><path d="M198.1 337.8C197.5 338.4 196.0 338.1 198.2 341.6C200.3 345.0 206.7 353.5 211.0 358.6C215.2 363.7 220.7 369.7 223.6 372.1C226.5 374.5 227.7 373.6 228.5 372.9C229.3 372.2 230.3 371.2 228.4 367.9C226.5 364.7 221.5 358.3 217.0 353.4C212.6 348.5 205.0 341.0 201.8 338.4C198.7 335.8 198.7 337.3 198.1 337.8Z" fill="#d6a964"/><path d="M240.7 333.2C239.9 333.0 239.2 332.1 237.7 335.4C236.1 338.7 230.6 347.0 231.3 352.9C232.0 358.7 239.0 367.2 241.9 370.5C244.9 373.9 247.7 373.7 249.1 372.9C250.4 372.0 251.5 369.1 250.1 365.5C248.7 361.8 242.0 355.9 240.7 351.1C239.4 346.3 242.3 339.6 242.3 336.6C242.3 333.6 241.5 333.4 240.7 333.2Z" fill="#d8ae6c"/><path d="M267.1 338.3C266.7 338.5 265.6 337.7 266.6 340.7C267.5 343.7 272.6 351.1 272.8 356.2C273.0 361.3 268.4 368.1 267.8 371.2C267.1 374.2 268.2 374.4 269.0 374.7C269.7 375.0 270.5 376.0 272.2 372.8C273.9 369.7 279.7 361.4 279.2 355.8C278.7 350.2 271.4 342.2 269.4 339.3C267.4 336.4 267.6 338.0 267.1 338.3Z" fill="#d6a964"/><path d="M301.7 334.6C300.8 334.1 299.6 333.3 297.1 336.6C294.7 339.8 287.2 348.2 287.2 354.0C287.2 359.8 294.7 368.2 297.1 371.4C299.6 374.7 300.8 373.9 301.7 373.4C302.7 373.0 303.7 371.8 302.9 368.6C302.0 365.3 296.8 358.9 296.8 354.0C296.8 349.1 302.0 342.7 302.9 339.4C303.7 336.2 302.7 335.0 301.7 334.6Z" fill="#c8aa80"/><path d="M329.0 338.4C328.5 338.7 327.1 337.7 328.6 340.8C330.2 344.0 334.5 352.3 338.1 357.4C341.7 362.5 347.5 369.1 350.2 371.6C352.8 374.0 353.3 372.7 353.9 372.2C354.5 371.7 355.8 371.4 353.8 368.4C351.8 365.5 345.7 359.5 341.9 354.6C338.2 349.7 333.5 341.9 331.4 339.2C329.2 336.5 329.4 338.1 329.0 338.4Z" fill="#d6a964"/><path d="M18.5 335.6C17.8 336.0 16.7 336.1 18.0 339.3C19.2 342.5 25.2 349.7 26.1 354.7C26.9 359.7 23.1 366.1 22.9 369.2C22.7 372.4 24.0 373.5 25.1 373.7C26.1 374.0 27.6 374.2 29.1 370.8C30.6 367.4 35.1 358.9 33.9 353.3C32.8 347.6 24.6 339.7 22.0 336.7C19.5 333.8 19.2 335.1 18.5 335.6Z" fill="#d6a964"/><path d="M78.3 337.7C77.6 338.2 76.2 338.1 78.1 341.4C79.9 344.8 86.0 352.8 89.3 357.8C92.6 362.7 95.9 368.7 97.9 371.2C99.9 373.6 100.7 372.9 101.4 372.5C102.1 372.1 103.2 371.9 102.1 368.8C101.0 365.8 98.0 359.3 94.7 354.2C91.3 349.2 84.7 341.3 81.9 338.6C79.2 335.8 78.9 337.2 78.3 337.7Z" fill="#d6a964"/><path d="M131.3 334.4C130.3 334.0 128.9 333.5 127.0 336.9C125.1 340.2 119.3 348.7 120.0 354.5C120.7 360.3 128.6 368.6 131.3 371.7C134.0 374.8 135.1 373.8 136.0 373.3C136.9 372.7 138.1 371.6 136.7 368.3C135.4 365.0 128.6 358.4 128.0 353.5C127.3 348.6 132.4 342.3 133.0 339.1C133.6 335.9 132.3 334.8 131.3 334.4Z" fill="#d8ae6c"/><path d="M61.2 202.4C60.8 202.4 60.3 200.1 59.9 203.8C59.5 207.4 60.3 217.3 58.5 224.3C56.8 231.2 52.7 237.6 49.4 245.4C46.1 253.2 42.1 262.7 38.6 270.8C35.1 279.0 30.1 290.0 28.5 294.2C26.9 298.4 28.7 295.9 29.1 296.1C29.5 296.2 28.9 299.3 30.8 295.2C32.6 291.1 36.7 279.7 40.2 271.5C43.6 263.4 48.0 254.1 51.5 246.3C54.9 238.5 59.2 232.0 61.0 224.9C62.8 217.8 62.2 207.6 62.2 203.9C62.3 200.2 61.5 202.4 61.2 202.4Z" fill="#c9a877"/><path d="M285.8 115.3C285.5 115.2 286.5 112.8 284.6 115.7C282.8 118.6 278.2 126.9 274.7 132.6C271.3 138.4 268.0 143.1 264.1 150.2C260.1 157.4 253.2 171.2 251.1 175.7C249.0 180.1 251.1 176.9 251.4 177.0C251.6 177.1 250.2 180.8 252.6 176.5C255.1 172.2 262.0 158.5 266.1 151.4C270.1 144.3 273.6 139.7 276.9 133.9C280.2 128.1 284.5 119.6 286.0 116.5C287.5 113.4 286.0 115.4 285.8 115.3Z" fill="#cfa66a"/><path d="M55.7 195.4C55.5 195.4 54.7 193.1 55.3 196.3C55.8 199.5 57.5 207.6 59.0 214.6C60.6 221.5 63.2 230.2 64.6 238.0C66.1 245.8 66.9 257.2 67.5 261.2C68.1 265.1 67.9 261.8 68.1 261.8C68.3 261.8 68.9 265.1 68.7 261.1C68.5 257.0 68.0 245.5 66.8 237.6C65.6 229.8 63.2 220.9 61.5 214.0C59.8 207.0 57.6 199.1 56.6 196.0C55.6 192.9 56.0 195.3 55.7 195.4Z" fill="#d6a964"/><path d="M126.6 34.4C126.3 34.3 126.6 31.7 125.6 35.1C124.5 38.5 121.8 48.8 120.1 54.8C118.4 60.8 116.4 64.3 115.2 71.3C113.9 78.4 113.7 89.3 112.5 97.2C111.3 105.1 108.4 114.8 107.8 118.6C107.1 122.5 108.2 120.1 108.6 120.2C108.9 120.2 108.9 122.9 109.9 119.1C110.9 115.3 113.2 105.4 114.3 97.5C115.4 89.6 114.9 78.5 116.3 71.5C117.7 64.5 120.8 61.5 122.6 55.5C124.4 49.5 126.4 39.0 127.1 35.5C127.8 32.0 126.8 34.4 126.6 34.4Z" fill="#c9a877"/><path d="M363.0 24.0C362.7 24.0 362.8 21.5 362.0 24.8C361.3 28.1 360.6 38.0 358.5 44.1C356.4 50.2 351.6 54.4 349.3 61.3C347.0 68.1 346.4 77.3 344.5 85.0C342.7 92.8 339.2 103.6 338.3 107.7C337.4 111.7 338.7 109.3 339.1 109.4C339.5 109.5 339.5 112.3 340.7 108.3C341.8 104.3 344.5 93.2 346.1 85.4C347.7 77.6 348.0 68.4 350.3 61.6C352.7 54.8 358.1 50.8 360.3 44.7C362.5 38.6 363.1 28.5 363.6 25.1C364.0 21.6 363.2 24.1 363.0 24.0Z" fill="#d6a964"/><path d="M356.1 172.1C355.9 172.1 356.3 168.6 355.1 172.9C354.0 177.1 351.7 189.5 349.4 197.7C347.0 205.8 343.0 213.5 341.2 221.6C339.3 229.7 338.6 242.0 338.1 246.2C337.7 250.4 338.4 246.9 338.6 246.9C338.7 246.9 338.4 250.5 339.2 246.3C340.0 242.2 341.4 230.2 343.3 222.1C345.2 214.1 348.4 206.1 350.6 198.0C352.8 189.8 355.8 177.6 356.7 173.2C357.6 168.9 356.4 172.2 356.1 172.1Z" fill="#cfa66a"/><path d="M92.2 111.6C92.0 111.5 92.4 108.2 91.4 112.2C90.5 116.2 88.4 127.8 86.6 135.5C84.9 143.1 82.2 149.9 81.0 157.9C79.7 165.9 79.4 179.0 79.4 183.5C79.3 188.1 80.1 185.1 80.5 185.1C80.9 185.1 81.3 188.2 81.8 183.7C82.3 179.2 82.4 166.3 83.4 158.3C84.4 150.3 86.1 143.3 87.7 135.7C89.2 128.1 91.9 116.4 92.6 112.4C93.4 108.4 92.4 111.6 92.2 111.6Z" fill="#cfa66a"/><path d="M222.7 121.0C222.4 121.0 222.1 118.2 221.7 122.0C221.4 125.9 219.9 137.0 220.4 144.0C220.9 151.0 223.3 157.5 224.7 163.9C226.0 170.3 228.1 175.2 228.7 182.5C229.2 189.8 228.1 203.6 228.1 208.0C228.1 212.4 228.6 209.0 228.9 209.0C229.2 209.0 229.6 212.4 229.8 208.0C230.0 203.6 230.8 189.8 230.2 182.4C229.5 175.0 227.3 170.1 225.8 163.7C224.4 157.3 222.0 150.9 221.6 143.9C221.2 137.0 223.3 126.0 223.5 122.1C223.7 118.3 223.0 121.1 222.7 121.0Z" fill="#d6a964"/><path d="M49.8 18.2C49.4 18.1 49.4 16.2 48.5 19.1C47.6 22.1 46.7 30.0 44.3 35.9C41.9 41.8 35.7 51.2 34.1 54.6C32.5 58.0 34.2 56.3 34.6 56.5C34.9 56.7 34.5 59.1 36.4 55.7C38.2 52.4 43.1 42.3 45.4 36.3C47.8 30.3 49.7 22.7 50.4 19.7C51.1 16.6 50.1 18.3 49.8 18.2Z" fill="#c9a877"/><path d="M61.8 45.7C61.4 45.7 61.4 42.9 60.4 46.8C59.4 50.6 57.5 62.4 55.9 68.8C54.3 75.3 53.0 78.4 50.8 85.3C48.7 92.1 44.1 105.7 42.9 110.0C41.6 114.3 43.1 111.1 43.4 111.2C43.6 111.3 42.8 114.7 44.4 110.5C46.1 106.3 51.0 92.9 53.2 86.0C55.4 79.1 56.1 75.7 57.7 69.3C59.2 62.8 61.9 51.2 62.6 47.2C63.2 43.3 62.1 45.8 61.8 45.7Z" fill="#d6a964"/><path d="M93.7 205.2C93.5 205.1 93.8 201.9 92.9 205.9C92.1 209.9 88.9 221.3 88.8 229.2C88.7 237.2 91.6 245.8 92.4 253.4C93.1 260.9 93.1 271.1 93.4 274.8C93.6 278.4 93.8 275.4 93.9 275.4C94.1 275.4 94.4 278.4 94.5 274.7C94.5 271.0 94.7 260.8 94.1 253.2C93.6 245.6 91.4 237.1 91.4 229.3C91.5 221.4 93.9 210.1 94.3 206.1C94.7 202.1 94.0 205.2 93.7 205.2Z" fill="#c9a877"/><path d="M114.8 206.0C114.6 206.1 114.1 203.5 114.2 206.9C114.3 210.2 116.0 219.1 115.4 226.0C114.9 233.0 111.1 241.1 111.0 248.7C110.9 256.2 113.5 263.3 114.6 271.3C115.8 279.4 117.2 292.6 117.9 297.1C118.6 301.5 118.6 298.1 118.9 298.0C119.2 298.0 120.1 301.3 119.7 296.8C119.3 292.3 117.8 279.1 116.6 271.0C115.4 263.0 112.7 256.2 112.7 248.7C112.7 241.2 116.3 233.1 116.7 226.1C117.2 219.2 115.8 210.1 115.5 206.8C115.1 203.4 115.0 206.0 114.8 206.0Z" fill="#c9a877"/><path d="M164.0 149.7C163.8 149.7 163.9 146.5 163.3 150.3C162.7 154.2 160.9 165.5 160.2 173.0C159.6 180.4 159.4 187.3 159.4 194.9C159.4 202.6 160.0 214.8 160.3 218.9C160.6 223.1 160.9 219.9 161.2 219.9C161.4 219.9 162.0 223.0 161.9 218.9C161.9 214.7 161.1 202.5 161.0 194.9C160.9 187.3 160.7 180.5 161.3 173.1C161.9 165.7 164.0 154.4 164.4 150.5C164.9 146.6 164.1 149.8 164.0 149.7Z" fill="#c9a877"/><path d="M32.0 137.6C31.7 137.5 32.2 134.8 30.7 138.4C29.2 141.9 24.8 151.6 22.8 158.9C20.9 166.3 20.0 175.4 19.0 182.4C18.1 189.4 17.5 197.8 17.4 201.1C17.2 204.4 17.9 202.2 18.1 202.2C18.4 202.2 18.7 204.5 19.1 201.2C19.6 198.0 20.1 189.6 21.0 182.6C21.9 175.7 22.8 166.7 24.8 159.5C26.7 152.2 31.3 142.7 32.5 139.1C33.7 135.4 32.3 137.7 32.0 137.6Z" fill="#cfa66a"/><path d="M305.5 288.0C305.3 287.9 305.5 284.7 304.7 288.6C303.9 292.6 303.3 304.4 300.8 311.7C298.3 319.1 291.3 328.9 289.5 332.7C287.6 336.4 289.5 334.0 289.8 334.2C290.1 334.4 289.2 337.3 291.2 333.6C293.2 329.9 299.4 319.6 301.9 312.1C304.4 304.6 305.4 292.9 306.0 288.9C306.6 284.8 305.7 288.0 305.5 288.0Z" fill="#d6a964"/><path d="M367.0 40.7C366.8 40.6 367.2 37.5 366.1 41.4C364.9 45.3 361.7 57.3 360.3 64.3C358.9 71.3 358.8 77.4 357.7 83.5C356.6 89.6 354.2 97.8 353.6 101.0C353.1 104.1 354.0 102.3 354.4 102.4C354.7 102.5 354.9 104.5 355.7 101.4C356.4 98.3 358.1 89.9 359.1 83.8C360.1 77.6 360.3 71.5 361.7 64.6C363.2 57.6 366.7 45.8 367.6 41.8C368.4 37.8 367.3 40.8 367.0 40.7Z" fill="#cfa66a"/><path d="M265.3 37.7C265.0 37.7 264.8 35.3 264.3 38.6C263.7 41.9 263.2 51.1 261.9 57.4C260.7 63.7 257.8 70.3 257.0 76.2C256.3 82.1 257.1 89.7 257.4 92.7C257.7 95.6 258.2 94.0 258.6 94.0C259.0 94.0 259.7 95.5 259.7 92.5C259.6 89.6 257.7 82.1 258.3 76.3C258.9 70.5 261.9 63.9 263.2 57.7C264.5 51.4 265.6 42.2 266.0 38.8C266.3 35.5 265.6 37.7 265.3 37.7Z" fill="#d6a964"/><path d="M28.1 168.6C27.7 168.5 27.7 166.7 26.7 169.5C25.7 172.4 24.1 179.7 22.3 185.6C20.6 191.5 17.1 198.4 16.5 204.9C15.9 211.4 18.3 221.3 18.8 224.7C19.3 228.2 19.3 225.4 19.5 225.4C19.7 225.4 20.2 228.0 20.0 224.6C19.8 221.2 17.5 211.5 18.2 205.1C18.9 198.6 22.4 192.0 24.1 186.1C25.9 180.3 28.1 173.0 28.7 170.1C29.4 167.2 28.4 168.7 28.1 168.6Z" fill="#c9a877"/><path d="M311.6 84.6C311.3 84.5 311.8 81.3 310.4 85.4C308.9 89.6 304.0 101.3 302.8 109.5C301.6 117.7 303.8 127.6 303.1 134.5C302.4 141.4 299.2 148.0 298.7 151.1C298.1 154.1 299.1 152.7 299.5 152.8C299.9 152.9 300.3 154.6 301.0 151.6C301.8 148.6 303.4 141.5 304.1 134.6C304.8 127.6 303.8 118.0 305.1 109.9C306.4 101.8 311.1 90.2 312.2 86.0C313.2 81.7 311.9 84.7 311.6 84.6Z" fill="#d6a964"/><path d="M56.4 143.0C56.1 143.0 55.8 139.9 55.3 144.1C54.8 148.3 54.4 160.8 53.4 168.1C52.3 175.3 50.0 180.2 49.2 187.6C48.4 195.0 49.9 204.9 48.8 212.5C47.6 220.2 43.1 229.7 42.1 233.4C41.1 237.2 42.4 234.8 42.7 234.9C43.1 235.0 42.9 237.7 44.1 234.0C45.3 230.3 48.8 220.4 49.9 212.7C51.0 205.0 49.8 195.2 50.7 187.8C51.5 180.4 53.8 175.5 54.9 168.3C56.0 161.0 57.0 148.5 57.3 144.3C57.6 140.1 56.7 143.0 56.4 143.0Z" fill="#d6a964"/><path d="M60.3 170.2C60.0 170.2 60.0 168.2 59.0 171.2C58.0 174.2 55.3 182.1 54.4 188.3C53.6 194.5 53.8 201.7 54.1 208.6C54.3 215.5 55.5 226.2 56.0 229.8C56.4 233.5 56.4 230.5 56.6 230.5C56.7 230.5 57.1 233.4 57.1 229.8C57.0 226.1 56.2 215.4 56.2 208.5C56.2 201.7 56.1 194.8 56.9 188.6C57.7 182.5 60.4 174.8 61.0 171.7C61.6 168.6 60.6 170.3 60.3 170.2Z" fill="#d6a964"/><path d="M269.4 177.3C269.2 177.3 268.8 174.5 268.8 178.1C268.7 181.7 269.0 191.5 269.3 199.0C269.6 206.6 270.3 216.1 270.6 223.1C270.8 230.2 270.4 234.7 270.9 241.3C271.3 247.9 272.6 258.9 273.2 262.7C273.8 266.5 274.2 264.1 274.6 264.0C275.0 264.0 275.9 266.3 275.6 262.4C275.4 258.6 273.5 247.7 273.1 241.2C272.7 234.6 273.5 230.0 273.0 223.0C272.6 216.0 271.0 206.5 270.5 199.0C270.0 191.5 270.2 181.7 270.0 178.1C269.9 174.4 269.6 177.3 269.4 177.3Z" fill="#cfa66a"/><path d="M346.8 235.3C346.6 235.3 346.3 233.2 346.2 236.1C346.0 238.9 345.2 246.7 345.8 252.5C346.4 258.2 349.0 267.3 350.0 270.5C351.0 273.7 351.2 271.8 351.6 271.7C352.0 271.6 353.2 273.1 352.5 269.9C351.8 266.6 348.2 257.9 347.4 252.2C346.6 246.6 347.5 238.9 347.4 236.1C347.3 233.3 347.0 235.3 346.8 235.3Z" fill="#d6a964"/><path d="M369.6 160.6C369.2 160.5 368.7 158.9 368.3 161.9C367.9 164.9 368.0 172.4 367.2 178.7C366.4 185.1 364.2 193.6 363.5 200.1C362.7 206.6 362.7 214.5 362.6 217.5C362.5 220.5 362.9 218.2 363.1 218.2C363.2 218.2 363.2 220.6 363.6 217.6C364.1 214.6 364.9 206.8 365.8 200.4C366.6 193.9 368.0 185.3 368.8 178.9C369.6 172.6 370.5 165.2 370.7 162.1C370.8 159.1 370.0 160.6 369.6 160.6Z" fill="#d6a964"/><path d="M364.9 218.0C364.5 217.9 364.8 214.7 363.2 219.0C361.6 223.4 358.7 236.7 355.3 244.0C352.0 251.2 346.4 255.4 343.1 262.4C339.9 269.4 338.1 279.1 335.7 286.1C333.4 293.2 330.1 301.4 329.0 304.7C328.0 308.0 329.2 305.9 329.5 306.0C329.7 306.1 329.2 308.5 330.6 305.3C332.0 302.1 335.5 293.9 337.8 286.8C340.2 279.8 341.4 270.1 344.6 263.1C347.8 256.1 353.5 252.0 357.0 244.8C360.4 237.5 364.3 224.3 365.6 219.8C366.9 215.4 365.2 218.1 364.9 218.0Z" fill="#cfa66a"/><path d="M15.5 254.9C15.1 254.8 15.6 251.7 13.9 255.8C12.2 260.0 8.0 271.6 5.4 279.9C2.8 288.3 -0.4 301.4 -1.5 306.0C-2.5 310.5 -1.2 307.0 -0.9 307.1C-0.7 307.2 -1.3 310.8 0.1 306.4C1.5 302.0 4.8 288.9 7.5 280.6C10.1 272.3 14.8 260.9 16.1 256.6C17.4 252.3 15.8 255.0 15.5 254.9Z" fill="#c9a877"/><path d="M321.0 81.1C320.8 81.1 321.1 77.7 320.2 81.8C319.2 85.9 317.9 98.5 315.0 105.8C312.2 113.0 306.2 118.6 303.1 125.3C299.9 132.0 297.1 142.4 296.0 146.1C295.0 149.8 296.2 147.2 296.5 147.3C296.7 147.4 296.1 150.2 297.6 146.7C299.0 143.2 302.0 133.0 305.2 126.3C308.4 119.6 314.0 113.8 316.7 106.4C319.4 99.0 320.8 86.3 321.5 82.1C322.2 77.9 321.2 81.2 321.0 81.1Z" fill="#c9a877"/><path d="M26.3 68.7C26.0 68.6 26.1 65.4 25.5 69.4C24.9 73.5 24.6 85.2 22.8 93.2C21.1 101.2 16.1 113.2 14.9 117.5C13.7 121.9 15.3 119.2 15.6 119.3C16.0 119.4 15.6 122.6 17.2 118.3C18.8 114.0 23.7 101.8 25.3 93.7C26.9 85.6 26.7 73.7 26.9 69.6C27.0 65.4 26.5 68.7 26.3 68.7Z" fill="#c9a877"/><path d="M48.5 221.9C48.1 221.8 48.5 219.0 47.1 222.7C45.8 226.4 42.5 236.9 40.4 244.0C38.4 251.0 36.5 257.3 34.7 265.0C32.9 272.7 30.5 285.8 29.8 290.2C29.1 294.6 30.2 291.4 30.5 291.4C30.8 291.5 30.7 294.9 31.6 290.5C32.5 286.1 34.1 272.9 35.7 265.2C37.4 257.5 39.4 251.3 41.6 244.3C43.8 237.4 47.9 227.1 49.0 223.3C50.2 219.6 48.8 222.0 48.5 221.9Z" fill="#cfa66a"/><path d="M21.9 204.6C21.5 204.5 22.0 201.8 20.3 205.5C18.7 209.1 15.4 219.1 12.1 226.4C8.8 233.8 4.1 242.2 0.7 249.6C-2.6 257.1 -6.6 267.4 -8.0 271.2C-9.4 275.0 -7.9 272.3 -7.6 272.4C-7.3 272.6 -8.1 275.5 -6.4 271.8C-4.8 268.2 -1.2 257.8 2.3 250.4C5.8 243.0 11.1 234.9 14.5 227.5C17.8 220.2 21.2 210.1 22.4 206.3C23.6 202.4 22.2 204.8 21.9 204.6Z" fill="#d6a964"/><path d="M128.3 222.8C127.9 222.7 127.4 220.4 127.2 224.0C127.0 227.6 126.8 236.9 127.1 244.5C127.3 252.0 128.2 261.2 128.7 269.5C129.3 277.8 130.4 287.3 130.2 294.4C130.1 301.5 128.2 308.9 127.9 311.9C127.6 314.9 128.2 312.6 128.3 312.6C128.5 312.6 128.2 315.1 128.9 312.1C129.6 309.0 132.1 301.6 132.4 294.5C132.8 287.3 131.8 277.7 131.1 269.3C130.4 261.0 128.7 252.0 128.4 244.4C128.1 236.9 129.3 227.7 129.3 224.1C129.3 220.5 128.6 222.8 128.3 222.8Z" fill="#cfa66a"/><path d="M80.1 4.4C79.9 4.3 81.3 1.7 79.3 4.7C77.3 7.6 71.9 15.4 68.3 22.0C64.6 28.6 59.3 40.5 57.6 44.5C55.9 48.5 57.7 45.8 58.0 46.0C58.3 46.1 57.4 49.2 59.4 45.3C61.4 41.5 66.5 29.6 69.9 22.9C73.4 16.2 78.5 8.3 80.2 5.2C81.9 2.1 80.2 4.5 80.1 4.4Z" fill="#c9a877"/><path d="M259.0 156.2C258.7 156.2 258.3 153.8 258.3 157.0C258.4 160.3 258.6 168.2 259.2 175.5C259.9 182.8 261.6 196.5 262.3 200.9C263.0 205.3 263.2 202.0 263.5 202.0C263.9 201.9 264.8 205.0 264.4 200.6C264.0 196.2 261.7 182.6 260.9 175.4C260.1 168.1 260.0 160.2 259.7 157.0C259.4 153.8 259.2 156.2 259.0 156.2Z" fill="#cfa66a"/><path d="M298.8 201.9C298.5 201.9 298.8 198.7 297.7 202.8C296.6 206.8 295.1 218.2 292.1 226.4C289.2 234.5 282.8 243.6 279.9 251.8C276.9 260.0 275.3 271.3 274.5 275.5C273.8 279.7 275.0 276.9 275.3 277.0C275.7 277.1 275.7 280.1 276.7 275.9C277.6 271.8 278.1 260.3 280.9 252.1C283.8 244.0 290.8 235.2 293.9 227.0C297.0 218.9 298.6 207.4 299.4 203.2C300.2 199.0 299.1 202.0 298.8 201.9Z" fill="#cfa66a"/></g><g id="tD" filter="url(#frag2)" fill="#8a7a5d"><path d="M51.8 -6.3C50.8 -6.5 49.3 -6.2 48.3 -3.6C47.2 -1.0 47.1 4.9 45.6 9.3C44.1 13.6 42.2 18.2 39.4 22.4C36.7 26.6 31.3 29.6 29.1 34.6C27.0 39.5 25.6 46.3 26.3 52.2C27.0 58.1 29.6 65.7 33.5 69.9C37.5 74.0 46.4 74.3 50.1 77.1C53.8 79.9 54.6 82.5 55.9 86.6C57.1 90.8 58.1 96.8 57.8 101.9C57.4 106.9 55.7 112.3 53.7 117.1C51.6 121.8 47.4 126.3 45.3 130.5C43.2 134.7 41.7 140.2 41.0 142.5C40.4 144.7 41.0 144.0 41.4 144.2C41.7 144.4 41.4 145.3 43.0 143.5C44.5 141.8 48.1 137.6 50.7 133.5C53.2 129.4 56.4 124.2 58.3 118.9C60.3 113.7 61.9 107.7 62.2 102.1C62.5 96.5 61.5 90.2 60.1 85.4C58.8 80.5 57.2 76.5 53.9 72.9C50.6 69.4 42.8 67.7 40.5 64.1C38.1 60.6 39.3 55.9 39.7 51.8C40.1 47.7 41.7 43.8 42.9 39.4C44.0 35.1 45.3 30.4 46.6 25.6C47.8 20.8 49.2 15.4 50.4 10.7C51.6 6.1 53.5 0.5 53.7 -2.4C54.0 -5.2 52.7 -6.1 51.8 -6.3ZM37.4 70.6C37.0 70.2 35.9 70.0 34.8 70.8C33.7 71.6 32.7 71.8 30.8 75.3C28.9 78.8 26.2 85.9 23.4 91.7C20.5 97.4 15.2 106.6 13.6 109.8C12.0 112.9 13.6 110.4 13.7 110.5C13.9 110.6 12.6 113.3 14.4 110.2C16.3 107.2 21.5 97.9 24.6 92.3C27.8 86.8 31.1 79.9 33.2 76.7C35.3 73.5 36.5 74.2 37.2 73.2C37.9 72.2 37.8 71.0 37.4 70.6ZM80.3 34.5C80.5 34.7 80.0 35.3 81.4 34.5C82.8 33.8 86.2 31.3 88.6 29.9C91.0 28.6 94.5 27.6 95.9 26.6C97.3 25.6 97.2 24.5 96.9 23.9C96.6 23.4 95.7 22.8 94.1 23.4C92.5 24.1 89.6 26.4 87.4 28.1C85.1 29.7 81.8 32.4 80.6 33.5C79.4 34.5 80.2 34.3 80.3 34.5ZM109.6 39.5C109.5 39.9 109.8 40.6 110.6 41.2C111.4 41.7 113.3 42.4 114.4 42.8C115.6 43.3 116.7 43.9 117.5 44.0C118.3 44.1 119.0 43.9 119.2 43.6C119.4 43.3 119.1 42.6 118.5 42.0C117.9 41.4 116.8 40.7 115.6 40.2C114.4 39.6 112.4 39.0 111.4 38.8C110.4 38.7 109.8 39.1 109.6 39.5ZM141.6 61.3C141.4 61.4 141.0 61.3 141.4 62.3C141.8 63.4 143.0 65.9 143.9 67.6C144.9 69.3 146.2 71.7 147.0 72.6C147.8 73.5 148.4 73.3 148.7 73.2C149.0 73.0 149.4 72.6 149.0 71.4C148.5 70.3 147.1 68.0 146.1 66.4C145.0 64.7 143.3 62.5 142.6 61.7C141.8 60.8 141.8 61.2 141.6 61.3ZM142.6 121.1C142.4 121.2 141.7 119.9 142.2 122.3C142.8 124.7 145.1 131.9 145.9 135.7C146.6 139.5 144.9 142.1 146.9 145.1C148.8 148.1 154.6 150.5 157.7 153.8C160.9 157.0 163.1 161.9 165.6 164.6C168.1 167.3 170.0 168.0 172.5 170.0C175.0 172.1 178.8 173.5 180.5 177.1C182.3 180.6 183.3 186.4 183.0 191.2C182.7 196.1 179.6 200.7 178.7 206.2C177.8 211.6 177.7 218.5 177.7 224.0C177.6 229.5 177.7 235.6 178.2 239.0C178.7 242.4 179.5 244.2 180.8 244.5C182.1 244.9 183.5 244.1 185.8 241.0C188.0 237.9 193.1 231.7 194.3 226.0C195.6 220.3 193.7 212.7 193.3 206.8C192.9 201.0 192.8 196.4 192.0 190.8C191.2 185.1 190.9 177.4 188.5 172.9C186.1 168.5 180.3 166.2 177.5 164.0C174.6 161.7 173.8 162.0 171.4 159.4C169.0 156.7 166.5 151.3 163.3 148.2C160.1 145.2 154.3 143.2 152.1 140.9C150.0 138.6 151.5 137.5 150.1 134.3C148.7 131.1 145.0 123.9 143.8 121.7C142.5 119.5 142.9 121.0 142.6 121.1ZM176.7 112.2C176.5 112.2 176.8 110.4 175.9 112.8C174.9 115.3 171.9 121.8 171.1 126.8C170.4 131.9 170.5 138.3 171.3 143.3C172.2 148.3 174.3 153.1 176.3 156.9C178.2 160.7 181.1 163.4 182.8 166.0C184.5 168.7 185.5 171.5 186.5 172.8C187.5 174.0 188.4 174.1 188.9 173.8C189.4 173.6 190.0 172.9 189.5 171.2C189.0 169.6 187.8 166.7 186.2 164.0C184.5 161.3 181.7 158.6 179.7 155.1C177.8 151.5 175.6 147.3 174.7 142.7C173.7 138.0 173.5 132.1 173.9 127.2C174.3 122.2 176.7 115.7 177.1 113.2C177.6 110.7 176.9 112.3 176.7 112.2ZM176.0 85.4C175.8 85.4 175.5 84.1 175.5 86.0C175.5 88.0 175.8 95.1 176.0 97.0C176.2 99.0 176.4 97.6 176.5 97.6C176.7 97.6 177.0 98.9 177.0 97.0C177.0 95.0 176.7 87.9 176.5 86.0C176.3 84.0 176.1 85.4 176.0 85.4ZM220.2 5.4C220.1 5.4 220.4 4.1 219.5 5.8C218.7 7.5 215.7 13.7 215.1 15.6C214.4 17.5 215.2 17.0 215.6 17.1C215.9 17.2 216.1 18.2 216.9 16.4C217.8 14.6 219.9 8.0 220.5 6.2C221.0 4.4 220.4 5.5 220.2 5.4ZM222.2 14.8C221.8 14.9 221.3 14.9 221.5 16.3C221.8 17.7 223.0 20.9 223.7 23.2C224.3 25.5 225.1 28.9 225.5 30.1C225.9 31.3 226.0 30.6 226.1 30.6C226.3 30.6 226.6 31.2 226.5 29.9C226.4 28.6 225.8 25.2 225.3 22.8C224.8 20.4 224.0 17.0 223.5 15.7C222.9 14.4 222.5 14.7 222.2 14.8ZM250.5 80.0C250.3 80.1 249.4 78.9 250.2 81.4C250.9 83.8 253.6 89.8 255.1 94.6C256.6 99.4 258.3 107.4 259.1 110.2C260.0 112.9 259.9 111.1 260.2 111.1C260.5 111.0 261.1 112.8 260.9 109.8C260.7 106.9 260.4 98.3 258.9 93.4C257.4 88.5 253.2 82.9 251.8 80.6C250.4 78.4 250.8 79.9 250.5 80.0ZM291.6 107.0C291.7 107.1 290.7 108.5 292.4 106.8C294.1 105.1 298.1 99.0 301.7 96.6C305.3 94.2 312.0 93.3 314.1 92.5C316.3 91.7 314.6 92.0 314.6 91.8C314.5 91.7 316.3 91.1 313.9 91.5C311.5 91.9 304.0 92.0 300.3 94.4C296.6 96.9 293.1 104.1 291.6 106.2C290.2 108.3 291.5 106.9 291.6 107.0ZM315.2 67.3C315.0 67.4 314.4 66.7 314.9 68.3C315.4 69.8 317.3 74.9 318.1 76.4C318.8 77.9 319.2 77.2 319.5 77.1C319.8 77.0 320.5 77.2 319.9 75.6C319.4 74.0 316.9 69.1 316.1 67.7C315.3 66.3 315.4 67.2 315.2 67.3ZM280.7 126.4C280.5 126.4 281.0 124.2 280.0 126.9C279.0 129.6 275.8 137.8 274.5 142.6C273.1 147.4 272.2 153.5 271.9 155.8C271.5 158.2 272.1 156.7 272.3 156.8C272.5 156.8 272.3 158.4 273.1 156.2C274.0 153.9 276.2 148.3 277.5 143.4C278.8 138.6 280.5 130.0 281.0 127.1C281.5 124.3 280.8 126.5 280.7 126.4ZM260.1 142.4C259.9 142.4 260.1 140.7 259.5 142.9C259.0 145.1 257.9 152.9 256.8 155.5C255.7 158.1 253.8 157.8 253.1 158.4C252.5 159.1 252.7 159.3 252.8 159.4C253.0 159.6 252.8 160.1 253.9 159.6C254.9 159.1 258.1 159.2 259.2 156.5C260.3 153.7 260.3 145.4 260.5 143.1C260.6 140.7 260.3 142.4 260.1 142.4ZM237.4 115.4C237.3 115.4 236.9 114.1 237.0 116.1C237.1 118.0 237.8 125.1 238.1 127.1C238.5 129.1 238.8 128.1 239.1 128.1C239.4 128.0 240.1 128.9 239.9 126.9C239.7 124.9 238.4 117.8 238.0 115.9C237.6 114.0 237.6 115.4 237.4 115.4ZM302.5 126.7C302.4 126.8 301.1 126.2 302.7 127.4C304.3 128.6 310.4 132.9 312.2 134.0C313.9 135.1 313.0 134.1 313.1 133.9C313.2 133.7 314.5 134.2 312.8 133.0C311.2 131.8 305.0 127.6 303.3 126.6C301.6 125.5 302.6 126.5 302.5 126.7ZM304.4 141.9C304.1 142.0 303.7 141.8 303.6 143.1C303.6 144.3 303.9 148.3 304.1 149.6C304.4 150.8 304.8 150.6 305.1 150.6C305.4 150.5 305.8 150.7 305.9 149.4C305.9 148.2 305.6 144.2 305.4 142.9C305.1 141.7 304.7 141.9 304.4 141.9ZM333.0 159.8C333.2 160.2 333.6 161.0 335.2 160.2C336.7 159.5 341.7 154.2 342.5 155.2C343.2 156.3 339.9 164.5 339.6 166.7C339.3 168.9 340.2 168.5 340.6 168.6C341.1 168.7 341.5 170.0 342.4 167.3C343.2 164.7 346.9 154.4 345.5 152.8C344.1 151.2 335.9 156.6 333.8 157.8C331.8 158.9 332.8 159.4 333.0 159.8ZM36.3 165.0C35.7 165.1 35.0 165.1 34.8 167.2C34.7 169.2 34.3 174.0 35.4 177.2C36.5 180.5 39.8 183.9 41.5 186.7C43.1 189.6 44.5 192.9 45.3 194.3C46.1 195.6 46.1 194.9 46.3 194.8C46.5 194.7 47.0 195.3 46.7 193.7C46.4 192.2 45.7 188.3 44.5 185.3C43.3 182.3 40.7 178.8 39.6 175.8C38.6 172.7 38.7 168.6 38.2 166.8C37.6 165.0 36.8 164.9 36.3 165.0ZM33.2 238.7C33.3 238.9 33.0 239.3 34.2 239.2C35.3 239.0 39.1 238.0 40.2 237.7C41.3 237.3 40.8 237.0 40.8 236.8C40.7 236.6 41.0 236.2 39.8 236.3C38.7 236.5 34.9 237.5 33.8 237.8C32.7 238.2 33.2 238.5 33.2 238.7ZM32.8 254.9C32.5 255.0 32.1 254.9 32.1 256.1C32.2 257.4 32.8 261.4 33.1 262.6C33.5 263.9 33.9 263.6 34.2 263.6C34.5 263.5 34.9 263.6 34.9 262.4C34.8 261.1 34.2 257.1 33.9 255.9C33.5 254.6 33.1 254.9 32.8 254.9ZM-1.7 241.1C-2.2 241.3 -3.1 241.1 -2.6 243.6C-2.1 246.1 0.8 251.3 1.2 256.2C1.6 261.2 -0.2 270.1 -0.2 273.3C-0.2 276.5 0.7 275.4 1.2 275.5C1.8 275.6 2.2 277.0 3.2 273.7C4.1 270.5 7.2 261.0 6.8 255.8C6.4 250.5 2.0 244.8 0.6 242.4C-0.9 240.0 -1.2 240.9 -1.7 241.1ZM192.7 228.5C192.2 227.8 191.6 226.5 188.3 228.2C185.1 230.0 178.3 235.2 173.2 239.0C168.1 242.8 162.4 247.5 157.7 251.2C153.0 254.9 148.5 257.5 144.8 261.2C141.0 264.8 136.1 269.2 135.2 273.1C134.3 277.1 138.6 282.7 139.4 284.7C140.2 286.7 140.0 285.3 140.2 285.2C140.4 285.1 141.0 286.2 140.6 284.3C140.2 282.4 136.7 277.3 137.8 273.9C138.9 270.4 143.5 267.0 147.2 263.8C151.0 260.7 155.4 258.1 160.3 254.8C165.2 251.5 171.6 247.7 176.8 244.0C182.0 240.3 189.0 235.3 191.7 232.8C194.3 230.2 193.3 229.3 192.7 228.5ZM139.5 165.9C139.2 166.1 138.5 165.9 139.1 167.5C139.7 169.0 142.2 174.0 143.1 175.5C144.0 176.9 144.2 176.2 144.5 176.1C144.8 175.9 145.5 176.1 144.9 174.5C144.3 173.0 141.8 168.0 140.9 166.5C140.0 165.1 139.8 165.8 139.5 165.9ZM182.9 170.5C182.2 171.3 181.3 171.8 183.9 175.6C186.5 179.4 194.3 187.5 198.5 193.1C202.7 198.6 205.8 204.0 209.2 209.0C212.6 213.9 216.9 219.0 218.8 222.8C220.7 226.6 220.5 229.7 220.7 231.8C221.0 233.9 220.7 234.1 220.4 235.6C220.0 237.0 217.9 239.5 218.5 240.5C219.0 241.5 220.2 242.1 223.6 241.4C227.1 240.7 237.5 240.4 239.3 236.2C241.0 232.0 236.6 222.6 234.2 216.2C231.8 209.8 228.9 203.7 224.8 198.0C220.7 192.3 215.6 186.5 209.5 181.9C203.4 177.3 192.5 172.3 188.1 170.4C183.7 168.5 183.6 169.6 182.9 170.5ZM227.3 233.7C227.2 234.4 227.4 235.5 229.7 236.2C232.1 236.9 238.7 236.7 241.4 237.8C244.2 238.8 245.2 241.7 246.3 242.5C247.3 243.4 247.4 243.1 247.6 242.9C247.9 242.7 248.4 243.1 247.7 241.5C247.1 239.9 246.5 234.8 243.6 233.2C240.7 231.6 233.0 231.7 230.3 231.8C227.6 231.9 227.4 232.9 227.3 233.7ZM251.2 201.5C251.1 201.3 252.4 200.2 250.1 201.4C247.8 202.6 240.2 205.5 237.5 209.0C234.9 212.4 234.7 219.5 234.4 222.1C234.0 224.7 235.0 224.3 235.5 224.5C236.1 224.6 236.8 225.1 237.6 222.9C238.5 220.7 238.2 214.4 240.5 211.0C242.7 207.7 249.1 204.2 250.9 202.6C252.7 201.0 251.4 201.7 251.2 201.5ZM232.0 236.3C231.8 236.3 231.5 234.5 231.4 237.0C231.3 239.5 231.4 248.6 231.5 251.0C231.6 253.4 231.8 251.6 232.0 251.6C232.2 251.6 232.4 253.4 232.5 251.0C232.6 248.6 232.7 239.5 232.6 237.0C232.5 234.5 232.2 236.3 232.0 236.3ZM189.4 204.6C188.8 204.8 187.7 204.8 188.0 207.5C188.4 210.2 188.5 217.3 191.4 220.7C194.3 224.2 202.9 227.1 205.5 228.4C208.1 229.6 206.9 228.4 207.0 228.1C207.2 227.8 208.6 228.3 206.5 226.6C204.5 225.0 197.0 221.6 194.6 218.3C192.2 214.9 192.8 208.8 192.0 206.5C191.1 204.3 190.1 204.5 189.4 204.6ZM193.9 234.2C193.5 234.5 192.4 234.3 193.9 236.5C195.4 238.6 200.7 242.9 202.9 247.3C205.0 251.6 206.0 259.9 206.8 262.6C207.6 265.3 207.4 263.4 207.7 263.4C207.9 263.3 208.5 265.3 208.2 262.4C208.0 259.4 208.1 250.4 206.1 245.7C204.1 241.1 198.1 236.5 196.1 234.5C194.1 232.6 194.2 233.9 193.9 234.2ZM199.1 280.8C198.9 280.9 198.1 279.6 198.9 281.8C199.7 284.0 203.9 288.2 204.0 294.2C204.0 300.1 200.4 310.6 199.2 317.5C198.0 324.4 196.8 331.9 196.7 335.5C196.7 339.2 198.0 339.2 198.9 339.3C199.9 339.5 201.1 339.9 202.3 336.5C203.4 333.0 204.9 325.6 205.8 318.5C206.8 311.4 209.0 300.1 208.0 293.8C207.1 287.6 201.6 283.4 200.1 281.2C198.6 279.0 199.3 280.7 199.1 280.8ZM291.9 183.8C291.7 183.9 291.3 181.7 291.4 184.6C291.6 187.5 291.4 195.9 292.7 201.5C293.9 207.1 296.7 212.4 299.0 218.3C301.2 224.2 303.7 231.4 306.1 236.6C308.6 241.9 310.2 246.8 313.6 249.9C317.1 253.0 323.6 254.0 326.8 255.2C329.9 256.4 331.6 257.6 332.7 256.9C333.7 256.1 333.1 254.1 333.2 250.8C333.4 247.5 334.8 241.5 333.4 237.1C332.0 232.7 328.8 228.8 324.9 224.4C321.0 220.0 314.6 214.8 310.0 210.7C305.5 206.6 300.2 203.9 297.3 199.5C294.4 195.1 293.5 187.0 292.6 184.4C291.6 181.8 292.1 183.8 291.9 183.8ZM314.3 209.7C314.6 210.1 314.8 210.8 316.5 209.5C318.3 208.3 321.7 204.3 324.7 202.1C327.7 200.0 332.4 199.8 334.6 196.7C336.8 193.6 337.1 188.2 337.9 183.3C338.8 178.4 339.6 170.1 339.7 167.2C339.8 164.2 339.1 165.6 338.7 165.5C338.3 165.5 337.9 164.0 337.3 166.8C336.7 169.7 336.1 178.1 335.1 182.7C334.1 187.3 333.5 191.6 331.4 194.3C329.3 197.0 325.1 196.7 322.3 198.9C319.5 201.1 315.8 205.7 314.5 207.5C313.1 209.3 313.9 209.4 314.3 209.7ZM312.0 259.3C312.0 259.4 310.8 260.3 312.7 259.4C314.7 258.6 321.8 255.0 323.7 253.9C325.6 252.9 324.1 253.4 324.0 253.2C324.0 253.1 325.2 252.2 323.3 253.1C321.3 253.9 314.2 257.5 312.3 258.6C310.4 259.6 311.9 259.1 312.0 259.3ZM331.2 201.5C330.6 202.0 329.6 202.1 331.4 205.0C333.1 208.0 338.6 214.5 341.5 219.3C344.4 224.2 347.2 229.2 348.8 234.2C350.4 239.3 351.2 245.4 351.1 249.8C351.1 254.3 348.5 258.2 348.4 260.9C348.3 263.5 350.7 263.0 350.5 265.5C350.3 268.0 348.2 273.5 347.2 275.8C346.3 278.1 344.5 278.5 344.8 279.4C345.0 280.3 344.7 280.3 348.8 281.2C352.9 282.0 364.4 287.3 369.5 284.5C374.6 281.7 378.7 271.0 379.6 264.1C380.5 257.3 377.9 249.4 374.9 243.2C371.8 236.9 365.6 231.7 361.2 226.8C356.8 221.8 352.9 217.8 348.5 213.7C344.0 209.5 337.5 204.0 334.6 202.0C331.8 200.0 331.7 201.0 331.2 201.5ZM280.9 273.1C280.8 273.3 280.7 273.4 281.2 274.0C281.7 274.5 284.3 274.9 284.1 276.3C283.9 277.7 280.7 281.4 280.1 282.6C279.4 283.8 279.9 283.4 280.1 283.5C280.2 283.6 279.6 284.5 280.9 283.4C282.2 282.2 287.7 278.4 287.9 276.7C288.0 275.0 283.0 273.6 281.8 273.0C280.7 272.4 281.0 273.0 280.9 273.1ZM253.8 189.7C253.7 189.9 251.7 189.3 254.2 190.6C256.8 191.9 266.4 196.4 269.1 197.4C271.8 198.5 270.5 197.3 270.6 197.0C270.7 196.7 272.5 196.8 269.9 195.6C267.3 194.3 257.5 190.4 254.8 189.4C252.1 188.4 253.8 189.5 253.8 189.7ZM258.0 175.3C258.0 175.4 257.6 175.9 258.7 175.4C259.9 175.0 263.7 173.1 264.7 172.4C265.8 171.8 265.1 171.9 265.0 171.7C265.0 171.6 265.4 171.1 264.3 171.6C263.1 172.0 259.3 173.9 258.3 174.6C257.2 175.2 257.9 175.1 258.0 175.3ZM299.9 333.0C300.1 333.3 299.0 334.3 301.5 333.4C303.9 332.5 310.2 329.0 314.5 327.4C318.8 325.9 325.0 325.0 327.3 324.2C329.6 323.4 328.5 323.1 328.4 322.7C328.3 322.3 329.2 321.5 326.7 321.8C324.2 322.1 317.8 322.9 313.5 324.6C309.1 326.2 302.8 330.2 300.5 331.6C298.3 333.0 299.8 332.7 299.9 333.0ZM275.9 324.5C275.5 324.6 274.9 324.5 274.8 326.1C274.7 327.7 275.0 332.5 275.3 334.1C275.6 335.6 276.2 335.5 276.6 335.5C277.0 335.4 277.6 335.5 277.7 333.9C277.8 332.3 277.5 327.5 277.2 325.9C276.9 324.4 276.3 324.5 275.9 324.5ZM356.4 323.9C356.3 324.1 356.0 324.3 356.5 325.0C357.0 325.6 358.9 327.5 359.5 328.0C360.2 328.5 360.4 328.2 360.6 328.1C360.7 327.9 361.0 327.7 360.5 327.0C360.0 326.4 358.1 324.5 357.5 324.0C356.8 323.5 356.6 323.8 356.4 323.9ZM347.0 102.3C346.8 102.4 346.7 102.9 346.9 103.4C347.2 104.0 348.0 105.1 348.4 105.4C348.9 105.8 349.3 105.8 349.5 105.7C349.7 105.6 349.8 105.1 349.6 104.6C349.3 104.0 348.5 102.9 348.1 102.6C347.6 102.2 347.2 102.2 347.0 102.3Z"/></g></defs><use href="#tS" x="-370.2" y="0"/><use href="#tS" x="0" y="0"/><use href="#tS" x="370.2" y="0"/><use href="#tU" x="-370.2" y="0"/><use href="#tU" x="0" y="0"/><use href="#tU" x="370.2" y="0"/><use href="#tO" x="-370.2" y="0"/><use href="#tO" x="0" y="0"/><use href="#tO" x="370.2" y="0"/><use href="#tD" x="-370.2" y="0"/><use href="#tD" x="0" y="0"/><use href="#tD" x="370.2" y="0"/></svg><span id="res">2048 x 2048 (RGBA, 8bpc)</span></div>
<div class="bbar" style="left:0;width:736px">
<div class="vgrip" style="left:6px"></div><div class="vgrip" style="left:9px"></div>
<svg style="position:absolute;left:17px;top:2.5px" width="16" height="15" viewBox="0 0 16 15" ><path d="M6.500 6.500l5.500 2.500l-5.500 2.500l-5.500-2.500z" fill="#2a6ae0"/><path d="M6.500 4l5.500 2.500l-5.500 2.500l-5.500-2.500z" fill="#2ecc40" stroke="#2b2b2b" stroke-width="0.500"/><path d="M6.500 1l5.500 2.500l-5.500 2.500l-5.500-2.500z" fill="#f26b6b" stroke="#2b2b2b" stroke-width="0.500"/><path d="M11.500 11l1.700 1.700l1.700-1.700" stroke="#bbb" stroke-width="1" fill="none"/></svg>
<div style="position:absolute;left:38.500px;top:3.500px;width:13px;height:13.500px;background:#000"></div>
<div style="position:absolute;left:58px;top:3.500px;width:14px;height:13.500px;background:#5a5a5a"><div style="position:absolute;left:4.300px;top:0;width:1px;height:100%;background:#3c3c3c"></div><div style="position:absolute;left:9px;top:0;width:1px;height:100%;background:#3c3c3c"></div></div>
<div class="hl" style="left:78px;top:0.500px;width:23.500px;height:17px;border-radius:2.500px 2.500px 0 0"></div>
<svg style="position:absolute;left:82px;top:3px" width="15" height="14" viewBox="0 0 15 14" ><rect x="0.600" y="0.600" width="13.800" height="9.500" fill="#222" stroke="#e0e0e0" stroke-width="1.200"/><circle cx="5.500" cy="6" r="2.300" fill="#e33"/><circle cx="9.500" cy="6" r="2.300" fill="#3a3"/><circle cx="7.500" cy="4.200" r="2.300" fill="#36e"/><path d="M4.500 12.800h6" stroke="#e0e0e0" stroke-width="1.300"/><path d="M7.500 10v2.500" stroke="#e0e0e0" stroke-width="2"/></svg>
<div class="hl" style="left:540px;top:0.500px;width:22px;height:17px;border-radius:2.500px 2.500px 0 0"></div>
<svg style="position:absolute;left:544.5px;top:4px" width="13" height="13" viewBox="0 0 13 13" ><path d="M0 0h3.500v3.500h-3.500zM4.700 0h3.500v3.500h-3.500zM9.400 0h3.500v3.500h-3.500zM0 4.700h3.500v3.500h-3.500zM4.700 4.700h3.500v3.500h-3.500zM9.400 4.700h3.500v3.500h-3.500zM0 9.400h3.500v3.500h-3.500zM4.700 9.400h3.500v3.500h-3.500zM9.400 9.400h3.500v3.500h-3.500z" fill="#e4e4e4"/></svg>
<svg style="position:absolute;left:568px;top:3px" width="16" height="15" viewBox="0 0 16 15" ><circle cx="5.500" cy="1.500" r="1.300" fill="#d4d4d4"/><path d="M0.500 3.500h10v1.500h-3.500v9.500h-1.200v-5h-0.600v5h-1.200v-9.500h-3.500z" fill="#d4d4d4"/><rect x="9.500" y="9.500" width="6" height="5.500" fill="#d4d4d4"/><rect x="9.500" y="9.500" width="3" height="2.700" fill="#2b2b2b"/><rect x="12.500" y="12.200" width="3" height="2.800" fill="#2b2b2b"/></svg>
<svg style="position:absolute;left:592px;top:5px" width="11" height="11" viewBox="0 0 11 11" ><rect x="2" y="2" width="7" height="7" fill="#d4d4d4"/><path d="M0.500 2.500v-2h2M8.500 0.500h2v2M10.500 8.500v2h-2M2.500 10.500h-2v-2" stroke="#d4d4d4" stroke-width="1" fill="none"/></svg>
<svg style="position:absolute;left:606px;top:4px" width="14" height="14" viewBox="0 0 14 14" ><path d="M7 0l1.500 2h-3zM7 14l1.500-2h-3zM0 7l2-1.500v3zM14 7l-2-1.500v3z" fill="#9a9a9a"/><text x="7" y="9.300" font-size="5.500" text-anchor="middle" fill="#9a9a9a" font-family="Liberation Sans,sans-serif">1:1</text></svg>
<div style="position:absolute;left:621.500px;top:1px;width:1px;height:16px;background:#222"></div>
<svg style="position:absolute;left:629.5px;top:8px" width="6" height="6" viewBox="0 0 6 6" ><circle cx="3" cy="3" r="2.800" fill="#ddd"/><path d="M1.300 3h3.400" stroke="#222" stroke-width="0.900"/></svg>
<div class="combo" style="left:641.500px;top:2px;width:58px;height:15.500px;background:#1f1f1f;border-color:#3e3e3e"><span style="left:auto;right:5px;font-size:10.500px;top:1.500px;color:#eee">20.83%</span></div>
<svg style="position:absolute;left:704.5px;top:8px" width="6" height="6" viewBox="0 0 6 6" ><circle cx="3" cy="3" r="2.800" fill="#ddd"/><path d="M1.300 3h3.400M3 1.300v3.400" stroke="#222" stroke-width="0.900"/></svg>
<div class="hl" style="left:718px;top:0.500px;width:17.500px;height:17px;border-radius:2.500px 2.500px 0 0"></div>
<svg style="position:absolute;left:722.5px;top:4px" width="9" height="12" viewBox="0 0 9 12" ><rect x="0.500" y="5" width="8" height="6.500" rx="0.800" fill="#ddd"/><path d="M2.300 5v-1.800a2.200 2.200 0 0 1 4.400 0v1.800" stroke="#ddd" stroke-width="1.200" fill="none"/><rect x="3.700" y="7" width="1.600" height="2.500" fill="#444"/></svg>
</div>
</div>
</body></html>
